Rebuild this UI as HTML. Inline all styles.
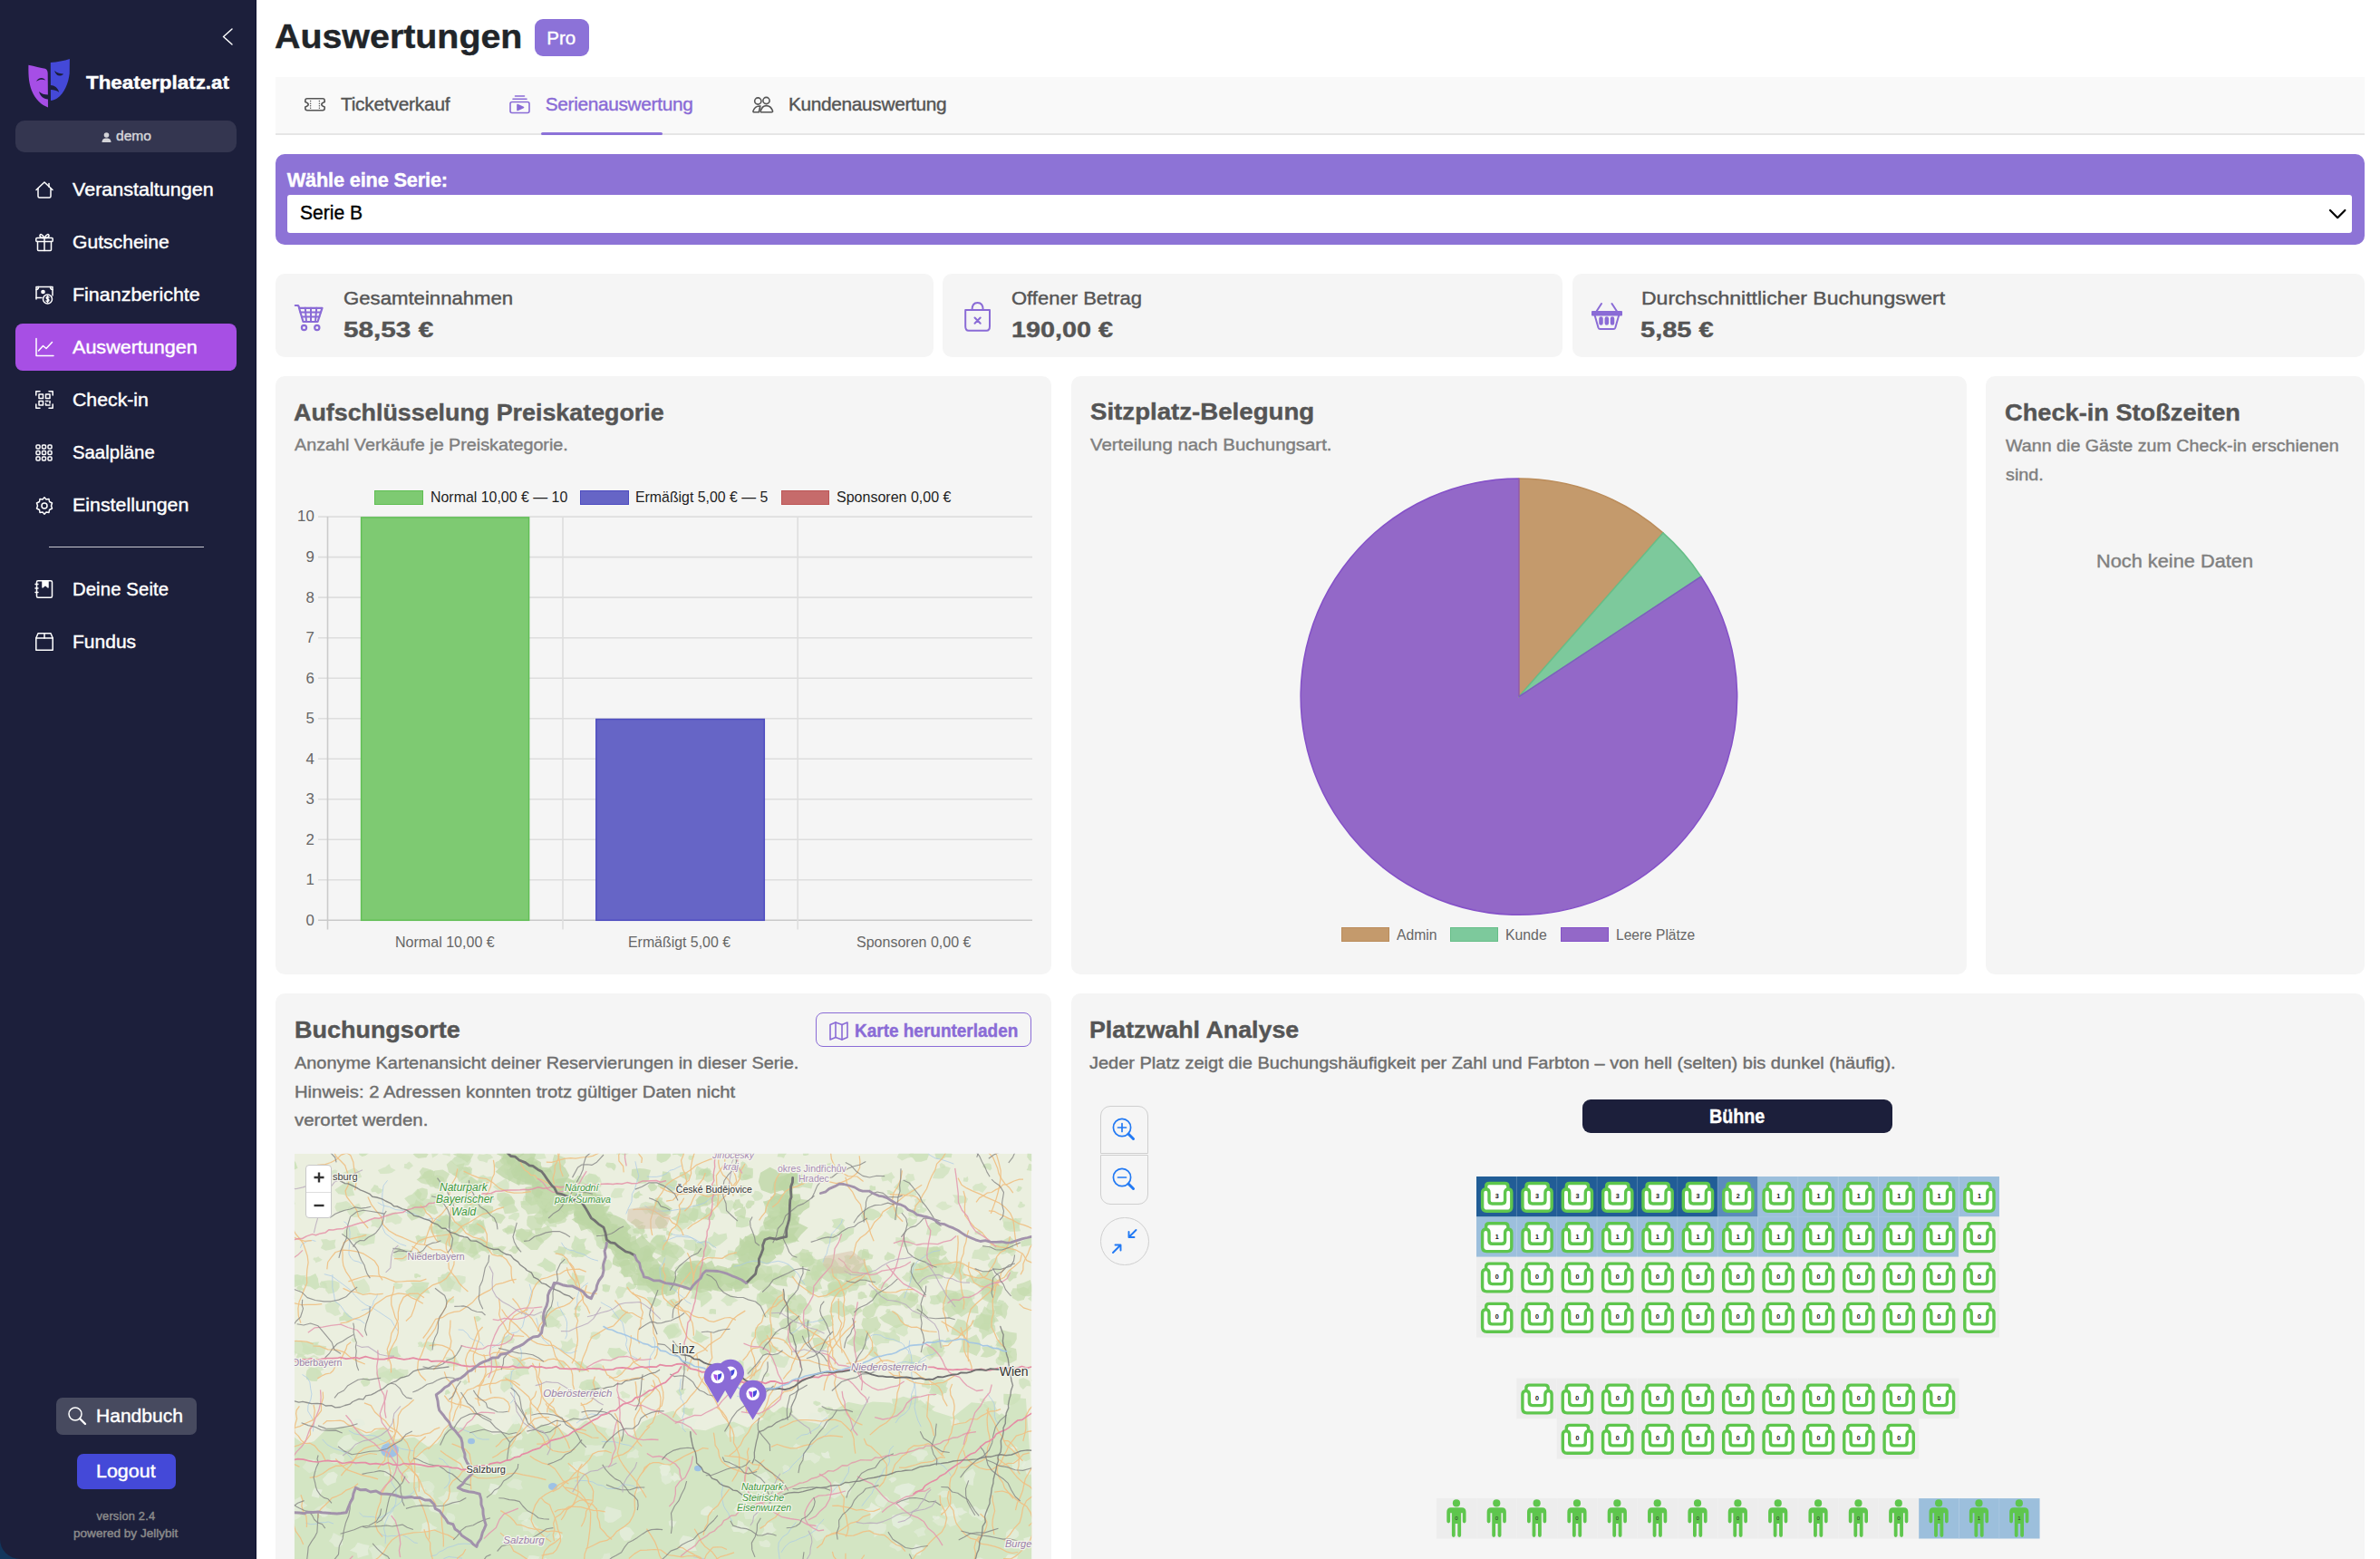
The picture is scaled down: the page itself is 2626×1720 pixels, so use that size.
<!DOCTYPE html>
<html lang="de"><head><meta charset="utf-8"><title>Auswertungen</title>
<style>
html,body{margin:0;padding:0}
body{width:2626px;height:1720px;position:relative;overflow:hidden;background:#fff;font-family:"Liberation Sans",sans-serif}
.t{position:absolute;white-space:pre}
</style></head><body>
<div style='position:absolute;left:0;top:1690px;width:40px;height:30px;background:#12365c'></div>
<div style='position:absolute;left:0;top:0;width:283px;height:1720px;background:#1c1f3b;border-bottom-left-radius:22px'></div>
<div style='position:absolute;left:282px;top:0;width:1.2px;height:1720px;background:#0e1130'></div>
<svg style='position:absolute;left:0px;top:0px;overflow:visible' width='283' height='100' viewBox='0 0 283 100' fill='none' stroke='#fff' stroke-width='1.4' stroke-linecap='round' stroke-linejoin='round' ><path d='M256 32 L246.5 40.5 L256 49'/></svg>
<svg style='position:absolute;left:26px;top:60px' width='60' height='65' viewBox='26 60 60 65'>
<path fill='#a64ee6' d='M31.4 71.7 C38 73 45 75 49.8 75.8 C51.8 76.6 52.7 78.5 52.7 81 L53 118.4 C46 116 39 110 35 100 C32 92 31.2 85 31.4 71.7 Z'/>
<path fill='#4449d8' d='M55.8 69 C63 68.5 71 67 76.9 65 L76.7 81 C75.5 92 71 103 63 108.5 C60.5 110 58 110.8 56 110.9 Z'/>
<path fill='#1c1f3b' d='M40 89.8 C42 85.5 48 84.5 50.2 88.6 C47.5 87.2 43.5 87.2 40 89.8 Z'/>
<path fill='#1c1f3b' d='M43.1 101.1 C45.5 103.5 49 104.6 53 104.6 L53 109.6 C48 109.2 44 106 43.1 101.1 Z'/>
<path fill='#1c1f3b' d='M60.2 77.9 C63 80.5 67 81.3 70 81.4 C68 84.5 62 85 60.2 77.9 Z'/>
<path fill='#1c1f3b' d='M55.8 94 C60 94 64 97 65.2 101.8 C62.5 99.8 59 98.8 55.8 99 Z'/>
</svg>
<div class=t style='left:95.2px;top:80.9px;font-size:20.14px;line-height:20.14px;font-weight:700;color:#fff;letter-spacing:0.00px;font-family:"Liberation Sans", sans-serif;-webkit-text-stroke:0.4px currentColor;transform:scaleX(1.1124);transform-origin:0 0;'>Theaterplatz.at</div>
<div style='position:absolute;left:17px;top:133px;width:244px;height:35px;border-radius:10px;background:#343650'></div>
<svg style='position:absolute;left:112px;top:146px' width='11' height='11' viewBox='0 0 11 11'><circle cx='5.5' cy='3' r='2.8' fill='#d4d4d8'/><path d='M0.5 11 C0.5 7.5 2.5 6.4 5.5 6.4 C8.5 6.4 10.5 7.5 10.5 11 Z' fill='#d4d4d8'/></svg>
<div class=t style='left:128.4px;top:142.9px;font-size:14.84px;line-height:14.84px;font-weight:400;color:#d6d6da;letter-spacing:0.00px;font-family:"Liberation Sans", sans-serif;-webkit-text-stroke:0.4px currentColor;transform:scaleX(1.0514);transform-origin:0 0;'>demo</div>
<div style='position:absolute;left:17px;top:357px;width:244px;height:52px;border-radius:8px;background:#a74fe4'></div>
<div class=t style='left:79.9px;top:198.9px;font-size:20.34px;line-height:20.34px;font-weight:400;color:#fff;letter-spacing:0.00px;font-family:"Liberation Sans", sans-serif;-webkit-text-stroke:0.4px currentColor;transform:scaleX(1.0596);transform-origin:0 0;'>Veranstaltungen</div>
<div class=t style='left:79.9px;top:257.0px;font-size:20.34px;line-height:20.34px;font-weight:400;color:#fff;letter-spacing:0.00px;font-family:"Liberation Sans", sans-serif;-webkit-text-stroke:0.4px currentColor;transform:scaleX(1.0385);transform-origin:0 0;'>Gutscheine</div>
<div class=t style='left:79.9px;top:315.0px;font-size:20.34px;line-height:20.34px;font-weight:400;color:#fff;letter-spacing:0.00px;font-family:"Liberation Sans", sans-serif;-webkit-text-stroke:0.4px currentColor;transform:scaleX(1.0552);transform-origin:0 0;'>Finanzberichte</div>
<div class=t style='left:79.9px;top:373.1px;font-size:20.34px;line-height:20.34px;font-weight:400;color:#fff;letter-spacing:0.00px;font-family:"Liberation Sans", sans-serif;-webkit-text-stroke:0.4px currentColor;transform:scaleX(1.0603);transform-origin:0 0;'>Auswertungen</div>
<div class=t style='left:79.9px;top:431.1px;font-size:20.34px;line-height:20.34px;font-weight:400;color:#fff;letter-spacing:0.00px;font-family:"Liberation Sans", sans-serif;-webkit-text-stroke:0.4px currentColor;transform:scaleX(1.0459);transform-origin:0 0;'>Check-in</div>
<div class=t style='left:79.9px;top:489.2px;font-size:20.34px;line-height:20.34px;font-weight:400;color:#fff;letter-spacing:0.06px;font-family:"Liberation Sans", sans-serif;-webkit-text-stroke:0.4px currentColor;'>Saalpl&auml;ne</div>
<div class=t style='left:79.9px;top:547.2px;font-size:20.34px;line-height:20.34px;font-weight:400;color:#fff;letter-spacing:0.00px;font-family:"Liberation Sans", sans-serif;-webkit-text-stroke:0.4px currentColor;transform:scaleX(1.0519);transform-origin:0 0;'>Einstellungen</div>
<div class=t style='left:79.9px;top:639.9px;font-size:20.34px;line-height:20.34px;font-weight:400;color:#fff;letter-spacing:0.11px;font-family:"Liberation Sans", sans-serif;-webkit-text-stroke:0.4px currentColor;'>Deine Seite</div>
<div class=t style='left:79.9px;top:698.2px;font-size:20.34px;line-height:20.34px;font-weight:400;color:#fff;letter-spacing:0.00px;font-family:"Liberation Sans", sans-serif;-webkit-text-stroke:0.4px currentColor;transform:scaleX(1.0337);transform-origin:0 0;'>Fundus</div>
<div style='position:absolute;left:54px;top:602.5px;width:171px;height:1.5px;background:#c8c8d0'></div>
<svg style='position:absolute;left:39px;top:200px;overflow:visible' width='20' height='20' viewBox='0 0 20 20' fill='none' stroke='#fff' stroke-width='1.5' stroke-linecap='round' stroke-linejoin='round' ><path d='M1 9.5 L10 1 L19 9.5'/><path d='M3 8 V16.5 Q3 18 4.5 18 H15.5 Q17 18 17 16.5 V8'/><path d='M15 2.5 V6'/></svg>
<svg style='position:absolute;left:39px;top:257px;overflow:visible' width='20' height='20' viewBox='0 0 20 20' fill='none' stroke='#fff' stroke-width='1.5' stroke-linecap='round' stroke-linejoin='round' ><rect x='0.8' y='5.5' width='18.4' height='4' rx='1'/><path d='M2.5 9.5 V18.5 Q2.5 19.5 3.5 19.5 H16.5 Q17.5 19.5 17.5 18.5 V9.5'/><path d='M10 5.5 V19.5'/><path d='M10 5.5 C8 1 4.5 0.5 5 3.5 C5.3 5 8 5.5 10 5.5 C12 5.5 14.7 5 15 3.5 C15.5 0.5 12 1 10 5.5'/></svg>
<svg style='position:absolute;left:39px;top:315px;overflow:visible' width='20' height='20' viewBox='0 0 20 20' fill='none' stroke='#fff' stroke-width='1.5' stroke-linecap='round' stroke-linejoin='round' ><path d='M1 15 V1.5 H19 V11'/><path d='M1 13.5 H7'/><circle cx='13.5' cy='15' r='5'/><path d='M15 13 Q13.5 12 12.3 13 Q11.8 14.3 13.5 14.8 Q15.3 15.3 14.8 16.8 Q13.5 18 12 17'/><path d='M13.5 11.5 V18.5'/><circle cx='8.5' cy='7' r='1.6' fill='#fff'/><path d='M1 4.5 Q3.5 4.5 3.5 1.5 M16.5 1.5 Q16.5 4.5 19 4.5'/></svg>
<svg style='position:absolute;left:39px;top:373px;overflow:visible' width='20' height='20' viewBox='0 0 20 20' fill='none' stroke='#fff' stroke-width='1.5' stroke-linecap='round' stroke-linejoin='round' ><path d='M1 0.5 V19.5 H20'/><path d='M3.5 14 L8.5 8.5 L12 11.5 L18.5 4.5'/></svg>
<svg style='position:absolute;left:39px;top:431px;overflow:visible' width='20' height='20' viewBox='0 0 20 20' fill='none' stroke='#fff' stroke-width='1.5' stroke-linecap='round' stroke-linejoin='round' ><path d='M0.8 5 V0.8 H5 M15 0.8 H19.2 V5 M19.2 15 V19.2 H15 M5 19.2 H0.8 V15'/><rect x='4' y='4' width='4.5' height='4.5'/><rect x='11.5' y='4' width='4.5' height='4.5'/><rect x='4' y='11.5' width='4.5' height='4.5'/><path d='M11.5 11.5 H14 M16 11.5 V14 M11.5 14 V16 H13.5 M14.5 16 H16'/></svg>
<svg style='position:absolute;left:39px;top:490px;overflow:visible' width='20' height='20' viewBox='0 0 20 20' fill='none' stroke='#fff' stroke-width='1.5' stroke-linecap='round' stroke-linejoin='round' ><rect x='1.0' y='1.0' width='4' height='4' rx='1'/><rect x='7.5' y='1.0' width='4' height='4' rx='1'/><rect x='14.0' y='1.0' width='4' height='4' rx='1'/><rect x='1.0' y='7.5' width='4' height='4' rx='1'/><rect x='7.5' y='7.5' width='4' height='4' rx='1'/><rect x='14.0' y='7.5' width='4' height='4' rx='1'/><rect x='1.0' y='14.0' width='4' height='4' rx='1'/><rect x='7.5' y='14.0' width='4' height='4' rx='1'/><rect x='14.0' y='14.0' width='4' height='4' rx='1'/></svg>
<svg style='position:absolute;left:39px;top:547.5px;overflow:visible' width='20' height='20' viewBox='0 0 20 20' fill='none' stroke='#fff' stroke-width='1.5' stroke-linecap='round' stroke-linejoin='round' ><circle cx='10' cy='10' r='3'/><path d='M10 0.8 L12 3 L15 2.5 L15.5 5.5 L18.5 7 L17.5 10 L18.5 13 L15.5 14.5 L15 17.5 L12 17 L10 19.2 L8 17 L5 17.5 L4.5 14.5 L1.5 13 L2.5 10 L1.5 7 L4.5 5.5 L5 2.5 L8 3 Z'/></svg>
<svg style='position:absolute;left:39px;top:640px;overflow:visible' width='20' height='20' viewBox='0 0 20 20' fill='none' stroke='#fff' stroke-width='1.5' stroke-linecap='round' stroke-linejoin='round' ><rect x='1.5' y='0.8' width='17' height='18.5' rx='1.5'/><path d='M8 0.8 V8 L11 5.5 L14 8 V0.8' fill='#fff'/><path d='M0 4.5 H3 M0 9 H3 M0 13.5 H3'/></svg>
<svg style='position:absolute;left:39px;top:698px;overflow:visible' width='20' height='20' viewBox='0 0 20 20' fill='none' stroke='#fff' stroke-width='1.5' stroke-linecap='round' stroke-linejoin='round' ><path d='M0.8 6 L3 0.8 H17 L19.2 6 V19.2 H0.8 Z'/><path d='M0.8 6 H19.2'/><path d='M10 0.8 V6'/></svg>
<div style='position:absolute;left:62px;top:1542px;width:155px;height:41px;border-radius:7px;background:#474a5f'></div>
<svg style='position:absolute;left:75px;top:1552px;overflow:visible' width='20' height='20' viewBox='0 0 20 20' fill='none' stroke='#fff' stroke-width='1.5' stroke-linecap='round' stroke-linejoin='round' ><circle cx='8' cy='8' r='7'/><path d='M13 13 L19 19' stroke-width='2.4'/></svg>
<div class=t style='left:106.0px;top:1551.9px;font-size:20.24px;line-height:20.24px;font-weight:400;color:#fff;letter-spacing:0.00px;font-family:"Liberation Sans", sans-serif;-webkit-text-stroke:0.4px currentColor;transform:scaleX(1.0405);transform-origin:0 0;'>Handbuch</div>
<div style='position:absolute;left:85px;top:1604px;width:109px;height:39px;border-radius:7px;background:#4449d8'></div>
<div class=t style='left:106.0px;top:1612.6px;font-size:20.24px;line-height:20.24px;font-weight:400;color:#fff;letter-spacing:0.00px;font-family:"Liberation Sans", sans-serif;-webkit-text-stroke:0.4px currentColor;transform:scaleX(1.0599);transform-origin:0 0;'>Logout</div>
<div class=t style='left:106.5px;top:1667.1px;font-size:12.84px;line-height:12.84px;font-weight:400;color:#8c8c8c;letter-spacing:0.18px;font-family:"Liberation Sans", sans-serif;-webkit-text-stroke:0.4px currentColor;'>version 2.4</div>
<div class=t style='left:81.1px;top:1685.9px;font-size:12.84px;line-height:12.84px;font-weight:400;color:#8c8c8c;letter-spacing:0.00px;font-family:"Liberation Sans", sans-serif;-webkit-text-stroke:0.4px currentColor;transform:scaleX(1.0577);transform-origin:0 0;'>powered by Jellybit</div>
<div class=t style='left:302.7px;top:22.9px;font-size:36.64px;line-height:36.64px;font-weight:700;color:#212529;letter-spacing:0.00px;font-family:"Liberation Sans", sans-serif;-webkit-text-stroke:0.4px currentColor;transform:scaleX(1.0749);transform-origin:0 0;'>Auswertungen</div>
<div style='position:absolute;left:590px;top:21px;width:60px;height:41px;border-radius:9px;background:#8c72d8'></div>
<div class=t style='left:603.2px;top:31.5px;font-size:20.54px;line-height:20.54px;font-weight:400;color:#fff;letter-spacing:0.02px;font-family:"Liberation Sans", sans-serif;-webkit-text-stroke:0.4px currentColor;'>Pro</div>
<div style='position:absolute;left:303.5px;top:84.5px;width:2305.5px;height:62px;background:#f9f9f9;border-bottom:2px solid #e6e6e6'></div>
<div style='position:absolute;left:597px;top:145.5px;width:134px;height:3.5px;border-radius:2px;background:#8c72d8'></div>
<svg style='position:absolute;left:336px;top:108.1px;overflow:visible' width='23' height='14.6' viewBox='0 0 23 14.6' fill='none' stroke='#555' stroke-width='1.6' stroke-linecap='round' stroke-linejoin='round' ><path d='M3 0.8 H20 Q22.2 0.8 22.2 3 V4.6 Q18.8 5.6 18.8 7.3 Q18.8 9 22.2 10 V11.6 Q22.2 13.8 20 13.8 H3 Q0.8 13.8 0.8 11.6 V10 Q4.2 9 4.2 7.3 Q4.2 5.6 0.8 4.6 V3 Q0.8 0.8 3 0.8 Z'/><circle cx='6.6' cy='3.6' r='0.75' fill='#555' stroke='none'/><circle cx='6.6' cy='6.2' r='0.75' fill='#555' stroke='none'/><circle cx='6.6' cy='8.8' r='0.75' fill='#555' stroke='none'/><circle cx='6.6' cy='11.2' r='0.75' fill='#555' stroke='none'/><circle cx='16.4' cy='3.6' r='0.75' fill='#555' stroke='none'/><circle cx='16.4' cy='6.2' r='0.75' fill='#555' stroke='none'/><circle cx='16.4' cy='8.8' r='0.75' fill='#555' stroke='none'/><circle cx='16.4' cy='11.2' r='0.75' fill='#555' stroke='none'/></svg>
<div class=t style='left:375.9px;top:104.5px;font-size:20.84px;line-height:20.84px;font-weight:400;color:#555;letter-spacing:-0.20px;font-family:"Liberation Sans", sans-serif;-webkit-text-stroke:0.4px currentColor;'>Ticketverkauf</div>
<svg style='position:absolute;left:562px;top:104.5px;overflow:visible' width='23' height='20' viewBox='0 0 23 20' fill='none' stroke='#8a6bd6' stroke-width='1.6' stroke-linecap='round' stroke-linejoin='round' ><rect x='1' y='7.5' width='21' height='12' rx='2'/><path d='M4 4.3 H19 M6.5 1 H16.5'/><path d='M9 10.5 L15.5 13.5 L9 16.5 Z' fill='#8a6bd6'/></svg>
<div class=t style='left:601.8px;top:104.5px;font-size:20.84px;line-height:20.84px;font-weight:400;color:#8a6bd6;letter-spacing:-0.33px;font-family:"Liberation Sans", sans-serif;-webkit-text-stroke:0.4px currentColor;'>Serienauswertung</div>
<svg style='position:absolute;left:830px;top:107px;overflow:visible' width='23' height='17' viewBox='0 0 23 17' fill='none' stroke='#555' stroke-width='1.6' stroke-linecap='round' stroke-linejoin='round' ><circle cx='6.3' cy='4.5' r='3.6'/><circle cx='15.5' cy='4' r='3.6'/><path d='M9 10 Q3 9.5 1 15.5 Q0.8 16.8 2 16.8 H7.3 L8.8 10.2'/><path d='M10 16.8 Q9 16.8 9.3 15.3 Q11 9.6 15.5 9.6 Q20.5 9.6 22.5 15.3 Q22.8 16.8 21.5 16.8 Z'/></svg>
<div class=t style='left:870.0px;top:104.5px;font-size:20.84px;line-height:20.84px;font-weight:400;color:#555;letter-spacing:-0.33px;font-family:"Liberation Sans", sans-serif;-webkit-text-stroke:0.4px currentColor;'>Kundenauswertung</div>
<div style='position:absolute;left:303.5px;top:170px;width:2305.5px;height:99.5px;border-radius:10px;background:#8d73d6'></div>
<div class=t style='left:316.7px;top:187.7px;font-size:21.74px;line-height:21.74px;font-weight:700;color:#fff;letter-spacing:-0.16px;font-family:"Liberation Sans", sans-serif;-webkit-text-stroke:0.4px currentColor;'>W&auml;hle eine Serie:</div>
<div style='position:absolute;left:317px;top:215px;width:2278px;height:42px;border-radius:3px;background:#fff'></div>
<div class=t style='left:331.1px;top:224.4px;font-size:22.14px;line-height:22.14px;font-weight:400;color:#000;letter-spacing:0.00px;font-family:"Liberation Sans", sans-serif;-webkit-text-stroke:0.4px currentColor;transform:scaleX(0.9509);transform-origin:0 0;'>Serie B</div>
<svg style='position:absolute;left:2570px;top:231px;overflow:visible' width='18' height='10' viewBox='0 0 18 10' fill='none' stroke='#000' stroke-width='2.2' stroke-linecap='round' stroke-linejoin='round' ><path d='M1 1 L9.2 9.2 L17.4 1'/></svg>
<div style='position:absolute;left:304px;top:302px;width:725.5px;height:92px;border-radius:10px;background:#f5f5f5'></div>
<div style='position:absolute;left:1040px;top:302px;width:684px;height:92px;border-radius:10px;background:#f5f5f5'></div>
<div style='position:absolute;left:1734.5px;top:302px;width:874.5px;height:92px;border-radius:10px;background:#f5f5f5'></div>
<svg style='position:absolute;left:325px;top:336px;overflow:visible' width='31.5' height='29' viewBox='0 0 31.5 29' fill='none' stroke='#8a6bd6' stroke-width='2.2' stroke-linecap='round' stroke-linejoin='round' ><path d='M0.8 1 H4 L5 3 M5 3.8 H30.5 L25.5 19 H9.5 Z'/><path d='M6.5 8.5 H29 M8 13.5 H27.3 M11.8 3.8 L13 19 M18 3.8 V19 M24.2 3.8 L23 19' stroke-width='2'/><circle cx='10.5' cy='25.5' r='2.6'/><circle cx='24.8' cy='25.5' r='2.6'/></svg>
<div class=t style='left:379.2px;top:318.5px;font-size:20.54px;line-height:20.54px;font-weight:400;color:#555;letter-spacing:0.00px;font-family:"Liberation Sans", sans-serif;-webkit-text-stroke:0.4px currentColor;transform:scaleX(1.0791);transform-origin:0 0;'>Gesamteinnahmen</div>
<div class=t style='left:379.0px;top:352.0px;font-size:24.24px;line-height:24.24px;font-weight:700;color:#555;letter-spacing:0.00px;font-family:"Liberation Sans", sans-serif;-webkit-text-stroke:0.4px currentColor;transform:scaleX(1.2268);transform-origin:0 0;'>58,53 &euro;</div>
<svg style='position:absolute;left:1064px;top:332.5px;overflow:visible' width='29' height='32.5' viewBox='0 0 29 32.5' fill='none' stroke='#8a6bd6' stroke-width='2' stroke-linecap='round' stroke-linejoin='round' ><path d='M1.2 9 H28 V27 Q28 31.8 24.5 31.8 H4.7 Q1.2 31.8 1.2 27 Z'/><path d='M8.5 9 Q8.5 1 14.6 1 Q20.7 1 20.7 9'/><path d='M11.5 17.5 L17.7 23.7 M17.7 17.5 L11.5 23.7'/></svg>
<div class=t style='left:1116.2px;top:318.6px;font-size:20.54px;line-height:20.54px;font-weight:400;color:#555;letter-spacing:0.00px;font-family:"Liberation Sans", sans-serif;-webkit-text-stroke:0.4px currentColor;transform:scaleX(1.0723);transform-origin:0 0;'>Offener Betrag</div>
<div class=t style='left:1116.0px;top:352.4px;font-size:24.24px;line-height:24.24px;font-weight:700;color:#555;letter-spacing:0.00px;font-family:"Liberation Sans", sans-serif;-webkit-text-stroke:0.4px currentColor;transform:scaleX(1.1871);transform-origin:0 0;'>190,00 &euro;</div>
<svg style='position:absolute;left:1756px;top:334px;overflow:visible' width='33.5' height='29.5' viewBox='0 0 33.5 29.5' fill='none' stroke='#8a6bd6' stroke-width='2' stroke-linecap='round' stroke-linejoin='round' ><path d='M11 1 L4.5 11 M22.5 1 L29 11'/><path d='M1 10 H33 V13.5 H1 Z' fill='#8a6bd6'/><path d='M3.5 13.5 L7.5 27.5 Q8 29 9.5 29 H24.3 Q25.8 29 26.3 27.5 L30.3 13.5'/><path d='M10.5 17.5 V22.5 M16.8 17.5 V22.5 M23 17.5 V22.5' stroke-width='4.5'/></svg>
<div class=t style='left:1810.6px;top:318.6px;font-size:20.54px;line-height:20.54px;font-weight:400;color:#555;letter-spacing:0.00px;font-family:"Liberation Sans", sans-serif;-webkit-text-stroke:0.4px currentColor;transform:scaleX(1.1211);transform-origin:0 0;'>Durchschnittlicher Buchungswert</div>
<div class=t style='left:1810.4px;top:352.4px;font-size:24.24px;line-height:24.24px;font-weight:700;color:#555;letter-spacing:0.00px;font-family:"Liberation Sans", sans-serif;-webkit-text-stroke:0.4px currentColor;transform:scaleX(1.1975);transform-origin:0 0;'>5,85 &euro;</div>
<div style='position:absolute;left:304px;top:415px;width:856px;height:660px;border-radius:10px;background:#f5f5f5'></div>
<div style='position:absolute;left:1182px;top:415px;width:988px;height:660px;border-radius:10px;background:#f5f5f5'></div>
<div style='position:absolute;left:2191px;top:415px;width:418px;height:660px;border-radius:10px;background:#f5f5f5'></div>
<div class=t style='left:324.4px;top:442.5px;font-size:25.14px;line-height:25.14px;font-weight:700;color:#555;letter-spacing:0.00px;font-family:"Liberation Sans", sans-serif;-webkit-text-stroke:0.4px currentColor;transform:scaleX(1.0682);transform-origin:0 0;'>Aufschl&uuml;sselung Preiskategorie</div>
<div class=t style='left:324.7px;top:482.4px;font-size:18.14px;line-height:18.14px;font-weight:400;color:#7f7f7f;letter-spacing:0.00px;font-family:"Liberation Sans", sans-serif;-webkit-text-stroke:0.4px currentColor;transform:scaleX(1.0892);transform-origin:0 0;'>Anzahl Verk&auml;ufe je Preiskategorie.</div>
<div style='position:absolute;left:412.9px;top:541px;width:51.7px;height:13.7px;background:#7eca72;border:1.5px solid #5fbe52'></div>
<div class=t style='left:474.9px;top:540.9px;font-size:16.8px;line-height:16.8px;font-weight:400;color:#1e1e1e;letter-spacing:0.00px;font-family:"Liberation Sans", sans-serif;-webkit-text-stroke:0px currentColor;transform:scaleX(0.9485);transform-origin:0 0;'>Normal 10,00 &euro; &mdash; 10</div>
<div style='position:absolute;left:640px;top:541px;width:51.7px;height:13.7px;background:#6665c6;border:1.5px solid #4c4bc0'></div>
<div class=t style='left:701.3px;top:540.9px;font-size:16.8px;line-height:16.8px;font-weight:400;color:#1e1e1e;letter-spacing:0.00px;font-family:"Liberation Sans", sans-serif;-webkit-text-stroke:0px currentColor;transform:scaleX(0.9449);transform-origin:0 0;'>Erm&auml;&szlig;igt 5,00 &euro; &mdash; 5</div>
<div style='position:absolute;left:861.8px;top:541px;width:51.7px;height:13.7px;background:#c66b6b;border:1.5px solid #bd5555'></div>
<div class=t style='left:923.3px;top:540.9px;font-size:16.8px;line-height:16.8px;font-weight:400;color:#1e1e1e;letter-spacing:0.00px;font-family:"Liberation Sans", sans-serif;-webkit-text-stroke:0px currentColor;transform:scaleX(0.9547);transform-origin:0 0;'>Sponsoren 0,00 &euro;</div>
<svg style='position:absolute;left:0;top:0' width='1200' height='1100' viewBox='0 0 1200 1100'><line x1='351' y1='1015.3' x2='1139' y2='1015.3' stroke='#c9c9c9' stroke-width='1.6'/><line x1='351' y1='970.8' x2='1139' y2='970.8' stroke='#dedede' stroke-width='1.6'/><line x1='351' y1='926.3' x2='1139' y2='926.3' stroke='#dedede' stroke-width='1.6'/><line x1='351' y1='881.7' x2='1139' y2='881.7' stroke='#dedede' stroke-width='1.6'/><line x1='351' y1='837.2' x2='1139' y2='837.2' stroke='#dedede' stroke-width='1.6'/><line x1='351' y1='792.7' x2='1139' y2='792.7' stroke='#dedede' stroke-width='1.6'/><line x1='351' y1='748.2' x2='1139' y2='748.2' stroke='#dedede' stroke-width='1.6'/><line x1='351' y1='703.7' x2='1139' y2='703.7' stroke='#dedede' stroke-width='1.6'/><line x1='351' y1='659.1' x2='1139' y2='659.1' stroke='#dedede' stroke-width='1.6'/><line x1='351' y1='614.6' x2='1139' y2='614.6' stroke='#dedede' stroke-width='1.6'/><line x1='351' y1='570.1' x2='1139' y2='570.1' stroke='#dedede' stroke-width='1.6'/><line x1='361.5' y1='570' x2='361.5' y2='1025.6' stroke='#cacaca' stroke-width='1.6'/><line x1='621' y1='570' x2='621' y2='1025.6' stroke='#dedede' stroke-width='1.6'/><line x1='880.2' y1='570' x2='880.2' y2='1025.6' stroke='#dedede' stroke-width='1.6'/><rect x='398.6' y='570.9' width='185' height='444.4' fill='#7eca72' stroke='#62bf56' stroke-width='1.5'/><rect x='657.8' y='793.5' width='185.5' height='221.8' fill='#6665c6' stroke='#4e4dc0' stroke-width='1.5'/></svg>
<div class=t style='left:337.4px;top:1007.6px;font-size:16.8px;line-height:16.8px;font-weight:400;color:#666;letter-spacing:0.00px;font-family:"Liberation Sans", sans-serif;-webkit-text-stroke:0px currentColor;'>0</div>
<div class=t style='left:337.4px;top:963.1px;font-size:16.8px;line-height:16.8px;font-weight:400;color:#666;letter-spacing:0.00px;font-family:"Liberation Sans", sans-serif;-webkit-text-stroke:0px currentColor;'>1</div>
<div class=t style='left:337.4px;top:918.6px;font-size:16.8px;line-height:16.8px;font-weight:400;color:#666;letter-spacing:0.00px;font-family:"Liberation Sans", sans-serif;-webkit-text-stroke:0px currentColor;'>2</div>
<div class=t style='left:337.4px;top:874.1px;font-size:16.8px;line-height:16.8px;font-weight:400;color:#666;letter-spacing:0.00px;font-family:"Liberation Sans", sans-serif;-webkit-text-stroke:0px currentColor;'>3</div>
<div class=t style='left:337.4px;top:829.5px;font-size:16.8px;line-height:16.8px;font-weight:400;color:#666;letter-spacing:0.00px;font-family:"Liberation Sans", sans-serif;-webkit-text-stroke:0px currentColor;'>4</div>
<div class=t style='left:337.4px;top:785.0px;font-size:16.8px;line-height:16.8px;font-weight:400;color:#666;letter-spacing:0.00px;font-family:"Liberation Sans", sans-serif;-webkit-text-stroke:0px currentColor;'>5</div>
<div class=t style='left:337.4px;top:740.5px;font-size:16.8px;line-height:16.8px;font-weight:400;color:#666;letter-spacing:0.00px;font-family:"Liberation Sans", sans-serif;-webkit-text-stroke:0px currentColor;'>6</div>
<div class=t style='left:337.4px;top:696.0px;font-size:16.8px;line-height:16.8px;font-weight:400;color:#666;letter-spacing:0.00px;font-family:"Liberation Sans", sans-serif;-webkit-text-stroke:0px currentColor;'>7</div>
<div class=t style='left:337.4px;top:651.5px;font-size:16.8px;line-height:16.8px;font-weight:400;color:#666;letter-spacing:0.00px;font-family:"Liberation Sans", sans-serif;-webkit-text-stroke:0px currentColor;'>8</div>
<div class=t style='left:337.4px;top:606.9px;font-size:16.8px;line-height:16.8px;font-weight:400;color:#666;letter-spacing:0.00px;font-family:"Liberation Sans", sans-serif;-webkit-text-stroke:0px currentColor;'>9</div>
<div class=t style='left:328.1px;top:562.4px;font-size:16.8px;line-height:16.8px;font-weight:400;color:#666;letter-spacing:0.00px;font-family:"Liberation Sans", sans-serif;-webkit-text-stroke:0px currentColor;'>10</div>
<div class=t style='left:435.6px;top:1031.6px;font-size:16.8px;line-height:16.8px;font-weight:400;color:#666;letter-spacing:0.00px;font-family:"Liberation Sans", sans-serif;-webkit-text-stroke:0px currentColor;transform:scaleX(0.9561);transform-origin:0 0;'>Normal 10,00 &euro;</div>
<div class=t style='left:693.3px;top:1031.6px;font-size:16.8px;line-height:16.8px;font-weight:400;color:#666;letter-spacing:0.00px;font-family:"Liberation Sans", sans-serif;-webkit-text-stroke:0px currentColor;transform:scaleX(0.9465);transform-origin:0 0;'>Erm&auml;&szlig;igt 5,00 &euro;</div>
<div class=t style='left:945.3px;top:1031.6px;font-size:16.8px;line-height:16.8px;font-weight:400;color:#666;letter-spacing:0.00px;font-family:"Liberation Sans", sans-serif;-webkit-text-stroke:0px currentColor;transform:scaleX(0.9540);transform-origin:0 0;'>Sponsoren 0,00 &euro;</div>
<div class=t style='left:1202.5px;top:442.4px;font-size:25.14px;line-height:25.14px;font-weight:700;color:#555;letter-spacing:0.00px;font-family:"Liberation Sans", sans-serif;-webkit-text-stroke:0.4px currentColor;transform:scaleX(1.1000);transform-origin:0 0;'>Sitzplatz-Belegung</div>
<div class=t style='left:1202.8px;top:482.4px;font-size:18.14px;line-height:18.14px;font-weight:400;color:#7f7f7f;letter-spacing:0.00px;font-family:"Liberation Sans", sans-serif;-webkit-text-stroke:0.4px currentColor;transform:scaleX(1.1254);transform-origin:0 0;'>Verteilung nach Buchungsart.</div>
<svg style='position:absolute;left:0;top:0' width='2626' height='1100' viewBox='0 0 2626 1100'><path d='M1675.9 768.6 L1876.85 636.10 A240.7 240.7 0 1 1 1675.90 527.90 Z' fill='#9368c8' stroke='#8450c8' stroke-width='1.5' stroke-linejoin='round'/><path d='M1675.9 768.6 L1675.90 527.90 A240.7 240.7 0 0 1 1834.92 587.91 Z' fill='#c49a6c' stroke='#bb8c5a' stroke-width='1.5' stroke-linejoin='round'/><path d='M1675.9 768.6 L1834.92 587.91 A240.7 240.7 0 0 1 1876.85 636.10 Z' fill='#7dc99c' stroke='#66be88' stroke-width='1.5' stroke-linejoin='round'/><line x1='1675.9' y1='768.6' x2='1675.9' y2='527.9000000000001' stroke='#8450c8' stroke-width='1.3'/><line x1='1675.9' y1='768.6' x2='1876.85' y2='636.10' stroke='#8450c8' stroke-width='1.3'/></svg>
<div style='position:absolute;left:1479.6px;top:1022.7px;width:51px;height:14.5px;background:#c49a6c;border:1.5px solid #bb8c5a'></div>
<div class=t style='left:1541.3px;top:1023.5px;font-size:16.8px;line-height:16.8px;font-weight:400;color:#666;letter-spacing:0.00px;font-family:"Liberation Sans", sans-serif;-webkit-text-stroke:0px currentColor;transform:scaleX(0.9353);transform-origin:0 0;'>Admin</div>
<div style='position:absolute;left:1600px;top:1022.7px;width:51px;height:14.5px;background:#7dc99c;border:1.5px solid #66be88'></div>
<div class=t style='left:1661.3px;top:1023.5px;font-size:16.8px;line-height:16.8px;font-weight:400;color:#666;letter-spacing:0.00px;font-family:"Liberation Sans", sans-serif;-webkit-text-stroke:0px currentColor;transform:scaleX(0.9417);transform-origin:0 0;'>Kunde</div>
<div style='position:absolute;left:1721.6px;top:1022.7px;width:51px;height:14.5px;background:#9368c8;border:1.5px solid #8450c8'></div>
<div class=t style='left:1783.3px;top:1023.5px;font-size:16.8px;line-height:16.8px;font-weight:400;color:#666;letter-spacing:0.00px;font-family:"Liberation Sans", sans-serif;-webkit-text-stroke:0px currentColor;transform:scaleX(0.9254);transform-origin:0 0;'>Leere Pl&auml;tze</div>
<div class=t style='left:2212.4px;top:442.9px;font-size:25.14px;line-height:25.14px;font-weight:700;color:#555;letter-spacing:0.00px;font-family:"Liberation Sans", sans-serif;-webkit-text-stroke:0.4px currentColor;transform:scaleX(1.0824);transform-origin:0 0;'>Check-in Sto&szlig;zeiten</div>
<div class=t style='left:2212.7px;top:482.7px;font-size:18.14px;line-height:18.14px;font-weight:400;color:#7f7f7f;letter-spacing:0.00px;font-family:"Liberation Sans", sans-serif;-webkit-text-stroke:0.4px currentColor;transform:scaleX(1.0849);transform-origin:0 0;'>Wann die G&auml;ste zum Check-in erschienen</div>
<div class=t style='left:2212.7px;top:514.6px;font-size:18.14px;line-height:18.14px;font-weight:400;color:#7f7f7f;letter-spacing:0.00px;font-family:"Liberation Sans", sans-serif;-webkit-text-stroke:0.4px currentColor;transform:scaleX(1.0915);transform-origin:0 0;'>sind.</div>
<div class=t style='left:2312.6px;top:607.9px;font-size:21.14px;line-height:21.14px;font-weight:400;color:#808080;letter-spacing:0.00px;font-family:"Liberation Sans", sans-serif;-webkit-text-stroke:0.4px currentColor;transform:scaleX(1.0301);transform-origin:0 0;'>Noch keine Daten</div>
<div style='position:absolute;left:304px;top:1096px;width:856px;height:664px;border-radius:10px;background:#f5f5f5'></div>
<div style='position:absolute;left:1182px;top:1096px;width:1427px;height:664px;border-radius:10px;background:#f5f5f5'></div>
<div class=t style='left:324.6px;top:1124.2px;font-size:25.14px;line-height:25.14px;font-weight:700;color:#555;letter-spacing:0.00px;font-family:"Liberation Sans", sans-serif;-webkit-text-stroke:0.4px currentColor;transform:scaleX(1.0734);transform-origin:0 0;'>Buchungsorte</div>
<div style='position:absolute;left:900.2px;top:1117.4px;width:236px;height:36px;border:1.5px solid #8a6bd6;border-radius:8px'></div>
<svg style='position:absolute;left:914.5px;top:1127.3px;overflow:visible' width='21' height='20.5' viewBox='0 0 21 20.5' fill='none' stroke='#8a6bd6' stroke-width='1.6' stroke-linecap='round' stroke-linejoin='round' ><path d='M1 3.5 L7 1 L14 3.5 L20 1 V17.5 L14 20 L7 17.5 L1 20 Z'/><path d='M7 1 V17.5 M14 3.5 V20'/></svg>
<div class=t style='left:943.2px;top:1127.1px;font-size:20.04px;line-height:20.04px;font-weight:700;color:#8a6bd6;letter-spacing:0.00px;font-family:"Liberation Sans", sans-serif;-webkit-text-stroke:0.4px currentColor;transform:scaleX(0.9472);transform-origin:0 0;'>Karte herunterladen</div>
<div class=t style='left:324.9px;top:1164.2px;font-size:18.14px;line-height:18.14px;font-weight:400;color:#6e6e6e;letter-spacing:0.00px;font-family:"Liberation Sans", sans-serif;-webkit-text-stroke:0.4px currentColor;transform:scaleX(1.0979);transform-origin:0 0;'>Anonyme Kartenansicht deiner Reservierungen in dieser Serie.</div>
<div class=t style='left:324.9px;top:1196.0px;font-size:18.14px;line-height:18.14px;font-weight:400;color:#6e6e6e;letter-spacing:0.00px;font-family:"Liberation Sans", sans-serif;-webkit-text-stroke:0.4px currentColor;transform:scaleX(1.1171);transform-origin:0 0;'>Hinweis: 2 Adressen konnten trotz g&uuml;ltiger Daten nicht</div>
<div class=t style='left:324.9px;top:1227.4px;font-size:18.14px;line-height:18.14px;font-weight:400;color:#6e6e6e;letter-spacing:0.00px;font-family:"Liberation Sans", sans-serif;-webkit-text-stroke:0.4px currentColor;transform:scaleX(1.1247);transform-origin:0 0;'>verortet werden.</div>
<svg style='position:absolute;left:0;top:0' width='2626' height='1720' viewBox='0 0 2626 1720'><defs><clipPath id='mc'><rect x='324.9' y='1272.8' width='813.3000000000001' height='447.20000000000005'/></clipPath></defs><g clip-path='url(#mc)'><rect x='324.9' y='1272.8' width='813.3000000000001' height='447.20000000000005' fill='#ebefdf'/><path d='M324 1720 L324.0 1585.1 L335.8 1593.7 L346.7 1589.9 L361.1 1575.8 L377.2 1574.5 L392.4 1574.6 L403.4 1584.0 L423.4 1574.6 L436.1 1588.1 L457.4 1585.7 L472.2 1596.1 L482.7 1592.3 L496.2 1571.6 L507.6 1575.7 L527.4 1571.1 L544.4 1583.1 L558.9 1579.9 L569.6 1565.7 L582.1 1582.5 L597.2 1571.5 L614.3 1574.5 L627.9 1583.4 L646.2 1567.1 L663.1 1574.2 L683.6 1578.9 L697.1 1585.2 L708.5 1569.0 L727.6 1560.6 L743.5 1556.6 L761.5 1576.1 L778.4 1578.3 L792.1 1572.6 L809.3 1568.6 L824.7 1575.1 L846.1 1563.8 L864.0 1551.4 L882.5 1566.9 L904.4 1570.7 L917.8 1557.8 L935.8 1546.8 L951.3 1550.1 L962.8 1546.5 L982.0 1547.5 L994.9 1554.2 L1015.4 1544.5 L1030.8 1556.9 L1051.4 1563.5 L1071.8 1547.3 L1086.7 1548.8 L1107.4 1564.6 L1119.2 1542.1 L1131.9 1543.1 L1145 1720 Z' fill='#d3e5c3'/><path d='M812.4 1385.6 L812.7 1389.6 L808.0 1391.0 L803.9 1390.3 L800.3 1388.8 L798.7 1385.6 L802.7 1383.7 L803.3 1379.2 L808.2 1379.7 L812.4 1381.7 Z' fill='#cde1bb' opacity='0.7292387505131539'/><path d='M982.1 1446.1 L981.7 1447.2 L980.6 1448.3 L978.9 1448.2 L977.1 1447.7 L977.4 1446.1 L978.0 1445.1 L978.9 1444.1 L980.5 1444.2 L982.5 1444.6 Z' fill='#cde1bb' opacity='0.8220013479899981'/><path d='M446.2 1380.7 L445.3 1384.5 L440.4 1384.9 L436.9 1385.0 L435.6 1382.4 L434.8 1380.7 L434.6 1378.3 L437.3 1377.1 L441.0 1375.0 L442.0 1378.7 Z' fill='#cde1bb' opacity='0.6429947807667682'/><path d='M446.3 1516.6 L443.7 1520.4 L438.8 1520.9 L435.1 1521.3 L433.0 1519.0 L428.4 1516.6 L431.2 1513.2 L434.4 1510.0 L438.9 1512.0 L441.4 1514.0 Z' fill='#cde1bb' opacity='0.9424754349516404'/><path d='M506.4 1504.6 L505.9 1505.8 L505.0 1507.5 L502.5 1508.0 L501.4 1506.1 L499.5 1504.6 L500.2 1502.5 L502.5 1501.3 L504.7 1502.5 L505.8 1503.5 Z' fill='#cde1bb' opacity='0.6097779763977226'/><path d='M513.9 1354.7 L510.1 1358.3 L506.6 1361.4 L500.9 1362.1 L499.8 1357.1 L495.1 1354.7 L495.5 1349.8 L501.0 1347.4 L506.8 1347.5 L510.1 1351.1 Z' fill='#cde1bb' opacity='0.9151079182594399'/><path d='M463.6 1322.2 L466.8 1328.1 L460.9 1332.8 L453.1 1330.7 L449.5 1326.2 L446.2 1322.2 L451.0 1318.9 L454.7 1317.7 L460.9 1311.6 L465.6 1316.9 Z' fill='#cde1bb' opacity='0.8822756937112686'/><path d='M1045.5 1648.8 L1046.0 1651.5 L1042.6 1652.0 L1039.8 1652.6 L1038.3 1650.5 L1034.1 1648.8 L1037.5 1646.6 L1039.7 1644.8 L1043.1 1644.4 L1047.1 1645.4 Z' fill='#e6eede' opacity='0.6171866610680876'/><path d='M761.8 1507.4 L764.5 1511.1 L759.5 1510.9 L756.1 1512.1 L751.9 1510.9 L751.4 1507.4 L753.7 1504.8 L756.1 1502.5 L760.1 1502.3 L764.5 1503.7 Z' fill='#cde1bb' opacity='0.6640877605452695'/><path d='M408.5 1524.6 L407.7 1527.1 L405.2 1529.3 L401.2 1529.8 L399.4 1526.9 L397.7 1524.6 L399.2 1522.2 L401.7 1520.6 L405.2 1520.1 L407.3 1522.3 Z' fill='#cde1bb' opacity='0.8702913845644209'/><path d='M1019.9 1326.9 L1018.2 1328.8 L1017.1 1332.4 L1012.4 1332.9 L1008.0 1330.9 L1010.3 1326.9 L1008.8 1323.3 L1012.6 1321.4 L1016.3 1323.5 L1021.7 1322.9 Z' fill='#cde1bb' opacity='0.6253911348797708'/><path d='M1013.7 1338.2 L1013.3 1341.0 L1011.1 1344.5 L1007.3 1341.4 L1002.7 1341.7 L1002.0 1338.2 L1005.2 1336.3 L1006.7 1333.7 L1010.9 1332.4 L1014.3 1334.9 Z' fill='#cde1bb' opacity='0.7186906505185869'/><path d='M1127.3 1311.8 L1126.4 1312.8 L1125.6 1314.1 L1123.3 1315.1 L1121.3 1313.7 L1122.0 1311.8 L1122.7 1310.7 L1123.2 1308.4 L1125.7 1309.1 L1127.7 1310.0 Z' fill='#cde1bb' opacity='0.8726491005237622'/><path d='M856.2 1637.3 L851.1 1641.7 L846.2 1643.7 L840.5 1645.0 L833.0 1643.5 L835.8 1637.3 L838.2 1634.2 L840.5 1629.8 L845.9 1631.6 L848.8 1634.3 Z' fill='#e6eede' opacity='0.5266490139497846'/><path d='M456.0 1286.3 L453.0 1288.4 L451.1 1290.4 L448.2 1289.3 L445.6 1288.5 L446.2 1286.3 L446.0 1284.3 L448.5 1283.9 L451.4 1281.4 L454.0 1283.7 Z' fill='#cde1bb' opacity='0.7067518892577294'/><path d='M847.0 1451.9 L848.2 1453.8 L845.7 1453.9 L844.1 1453.7 L843.1 1452.9 L840.5 1451.9 L841.3 1449.8 L843.7 1448.9 L845.7 1449.8 L847.0 1450.6 Z' fill='#cde1bb' opacity='0.645436503402809'/><path d='M568.0 1477.5 L566.4 1481.7 L561.2 1482.5 L557.6 1481.3 L551.9 1481.7 L553.7 1477.5 L554.5 1474.8 L558.0 1474.6 L560.9 1473.1 L564.2 1474.5 Z' fill='#cde1bb' opacity='0.6921350734490861'/><path d='M735.8 1356.7 L736.1 1358.0 L734.4 1358.1 L733.3 1358.1 L731.8 1357.9 L731.5 1356.7 L731.2 1355.2 L732.9 1354.4 L735.0 1353.9 L736.6 1355.1 Z' fill='#cde1bb' opacity='0.6924590400305799'/><path d='M592.0 1722.9 L595.7 1728.1 L590.3 1731.7 L583.7 1730.2 L578.2 1727.8 L575.7 1722.9 L581.8 1720.0 L583.9 1716.1 L589.4 1716.2 L595.7 1717.6 Z' fill='#e6eede' opacity='0.7572877798818118'/><path d='M513.9 1277.4 L511.4 1280.2 L508.5 1282.2 L504.5 1282.2 L501.1 1280.5 L500.8 1277.4 L503.8 1275.8 L504.3 1271.9 L508.7 1272.1 L511.2 1274.6 Z' fill='#cde1bb' opacity='0.6367207648740439'/><path d='M766.5 1570.8 L766.6 1574.2 L764.1 1578.8 L758.8 1575.9 L752.3 1575.8 L748.5 1570.8 L753.8 1566.7 L758.4 1564.8 L763.6 1564.2 L769.1 1566.0 Z' fill='#e6eede' opacity='0.600877412585076'/><path d='M388.7 1331.7 L383.6 1334.1 L381.2 1335.9 L377.3 1337.0 L371.4 1336.4 L369.3 1331.7 L371.4 1327.0 L377.2 1326.2 L382.2 1325.0 L386.3 1327.7 Z' fill='#cde1bb' opacity='0.7065459982857314'/><path d='M709.7 1318.2 L705.7 1319.4 L704.8 1321.5 L701.7 1322.5 L698.4 1321.1 L699.2 1318.2 L700.6 1316.5 L702.4 1315.6 L705.4 1313.4 L706.3 1316.6 Z' fill='#cde1bb' opacity='0.9423440078649594'/><path d='M812.5 1329.0 L807.9 1333.9 L803.7 1339.4 L795.7 1338.2 L793.0 1332.8 L785.7 1329.0 L791.2 1324.2 L797.5 1324.3 L801.3 1324.5 L807.7 1324.2 Z' fill='#cde1bb' opacity='0.6464117755083592'/><path d='M697.8 1403.9 L693.2 1405.4 L692.6 1409.1 L688.3 1409.4 L687.4 1405.7 L682.9 1403.9 L685.2 1400.8 L688.2 1398.1 L691.9 1400.4 L694.6 1401.5 Z' fill='#cde1bb' opacity='0.7106273158812394'/><path d='M619.8 1462.8 L617.7 1464.1 L616.9 1466.3 L614.7 1464.8 L613.3 1464.0 L612.1 1462.8 L613.5 1461.6 L614.6 1460.5 L616.9 1459.3 L619.1 1460.7 Z' fill='#cde1bb' opacity='0.6355984502886692'/><path d='M944.4 1563.9 L944.7 1565.4 L943.0 1566.1 L941.2 1566.0 L938.8 1565.8 L937.4 1563.9 L939.9 1562.7 L940.9 1561.0 L943.0 1561.8 L944.9 1562.3 Z' fill='#cde1bb' opacity='0.9243719662915011'/><path d='M648.1 1341.0 L646.4 1342.6 L645.4 1345.6 L641.5 1345.9 L640.0 1343.0 L640.3 1341.0 L640.8 1339.4 L642.6 1338.7 L644.8 1338.0 L646.0 1339.6 Z' fill='#cde1bb' opacity='0.91708596858486'/><path d='M664.3 1507.7 L666.1 1511.3 L661.0 1510.6 L658.1 1511.9 L654.8 1510.6 L652.5 1507.7 L656.4 1505.7 L658.4 1504.3 L661.1 1504.3 L663.9 1505.3 Z' fill='#cde1bb' opacity='0.6217208312776019'/><path d='M1050.5 1273.0 L1049.6 1277.3 L1043.8 1276.7 L1039.9 1278.8 L1033.0 1278.4 L1031.5 1273.0 L1033.4 1267.8 L1038.6 1264.0 L1044.3 1267.9 L1046.9 1270.3 Z' fill='#cde1bb' opacity='0.9134937817714157'/><path d='M954.7 1476.5 L955.8 1478.5 L953.3 1479.3 L951.4 1478.5 L950.4 1477.5 L949.6 1476.5 L949.3 1474.7 L951.0 1473.6 L952.9 1474.8 L953.9 1475.5 Z' fill='#cde1bb' opacity='0.873804516300396'/><path d='M754.7 1535.1 L755.1 1537.0 L753.3 1538.6 L749.9 1540.1 L747.7 1537.6 L745.7 1535.1 L748.2 1533.0 L750.8 1532.4 L753.1 1532.3 L757.2 1532.1 Z' fill='#cde1bb' opacity='0.8103713139921666'/><path d='M908.4 1406.4 L906.5 1409.0 L904.5 1412.3 L899.2 1413.5 L897.8 1408.9 L897.9 1406.4 L897.3 1403.6 L900.1 1401.6 L904.5 1400.4 L906.2 1404.0 Z' fill='#cde1bb' opacity='0.8360621417053709'/><path d='M1010.4 1370.6 L1005.3 1374.8 L1000.2 1375.6 L996.1 1375.8 L991.6 1374.5 L988.1 1370.6 L988.4 1364.9 L996.3 1365.9 L1000.7 1364.5 L1003.6 1367.5 Z' fill='#cde1bb' opacity='0.7032264976810874'/><path d='M1131.2 1329.1 L1130.3 1331.2 L1127.9 1332.2 L1125.1 1332.8 L1122.8 1331.3 L1123.7 1329.1 L1124.6 1327.9 L1125.2 1325.5 L1127.9 1325.9 L1128.3 1328.1 Z' fill='#cde1bb' opacity='0.7376625937027833'/><path d='M871.8 1439.7 L872.2 1441.8 L870.1 1443.4 L866.2 1445.5 L865.5 1441.5 L860.9 1439.7 L865.2 1437.7 L867.1 1436.0 L870.7 1434.3 L874.3 1436.4 Z' fill='#cde1bb' opacity='0.6592413297901688'/><path d='M679.6 1285.8 L679.4 1288.2 L677.7 1291.7 L674.2 1288.5 L670.9 1288.4 L667.9 1285.8 L669.5 1282.4 L674.2 1283.1 L676.4 1283.1 L678.2 1284.1 Z' fill='#cde1bb' opacity='0.9218272466676057'/><path d='M1089.6 1382.9 L1092.7 1389.3 L1085.0 1391.2 L1079.2 1388.9 L1072.1 1388.4 L1073.2 1382.9 L1075.1 1379.1 L1079.8 1378.5 L1085.3 1373.7 L1092.4 1376.6 Z' fill='#cde1bb' opacity='0.7186743365752771'/><path d='M850.4 1703.5 L849.0 1706.9 L844.7 1707.1 L841.9 1706.6 L839.2 1705.8 L838.0 1703.5 L837.4 1700.1 L842.0 1700.6 L845.2 1698.5 L848.3 1700.5 Z' fill='#e6eede' opacity='0.6900756231414413'/><path d='M594.8 1412.1 L596.9 1417.2 L590.2 1417.5 L586.3 1416.4 L583.6 1414.7 L578.6 1412.1 L581.8 1408.5 L584.1 1402.5 L591.7 1403.0 L598.3 1406.1 Z' fill='#cde1bb' opacity='0.6276552049753045'/><path d='M542.1 1302.1 L539.9 1304.6 L537.6 1306.9 L533.3 1307.8 L529.3 1305.8 L527.4 1302.1 L528.5 1297.9 L533.2 1296.2 L537.1 1298.6 L542.7 1298.0 Z' fill='#cde1bb' opacity='0.8484199098515572'/><path d='M566.5 1527.6 L565.2 1530.8 L561.6 1532.3 L556.2 1536.4 L552.2 1532.0 L552.3 1527.6 L553.3 1523.9 L555.9 1518.3 L562.4 1521.0 L565.1 1524.5 Z' fill='#cde1bb' opacity='0.6697165318115742'/><path d='M1019.5 1690.0 L1021.7 1693.7 L1017.2 1694.6 L1013.0 1695.9 L1011.3 1692.4 L1007.9 1690.0 L1011.0 1687.5 L1013.9 1686.6 L1017.5 1684.7 L1021.6 1686.3 Z' fill='#e6eede' opacity='0.547686651499245'/><path d='M501.2 1435.1 L500.4 1437.5 L497.3 1437.7 L495.4 1437.1 L493.1 1436.9 L491.0 1435.1 L493.6 1433.5 L495.1 1432.2 L497.3 1432.5 L500.9 1432.4 Z' fill='#cde1bb' opacity='0.6892197855813995'/><path d='M778.3 1292.4 L774.8 1294.2 L772.9 1295.6 L769.4 1297.7 L767.1 1295.0 L766.7 1292.4 L767.5 1290.0 L769.0 1286.0 L773.2 1288.5 L776.7 1289.4 Z' fill='#cde1bb' opacity='0.7925481636382137'/><path d='M1150.4 1432.8 L1154.7 1438.2 L1147.9 1438.9 L1142.0 1441.1 L1139.0 1436.5 L1134.0 1432.8 L1138.7 1428.9 L1143.5 1428.1 L1147.0 1428.9 L1152.6 1428.5 Z' fill='#cde1bb' opacity='0.6712835098035305'/><path d='M856.8 1687.9 L853.3 1690.5 L850.8 1692.8 L846.3 1694.0 L840.0 1693.0 L843.4 1687.9 L842.4 1684.1 L845.7 1680.2 L852.2 1679.4 L853.6 1685.1 Z' fill='#e6eede' opacity='0.648337449840453'/><path d='M1011.3 1348.3 L1009.2 1350.2 L1007.3 1351.9 L1003.6 1353.8 L999.3 1352.1 L1002.1 1348.3 L1000.7 1345.3 L1003.6 1342.7 L1007.0 1345.5 L1012.2 1344.6 Z' fill='#cde1bb' opacity='0.7812623814103574'/><path d='M845.9 1405.9 L843.2 1409.2 L839.6 1411.2 L836.0 1409.3 L830.8 1409.7 L830.0 1405.9 L832.7 1403.1 L834.6 1398.9 L840.3 1398.8 L843.2 1402.5 Z' fill='#cde1bb' opacity='0.7490089449005143'/><path d='M467.1 1483.9 L467.6 1485.7 L465.8 1486.9 L463.8 1485.7 L461.0 1486.0 L462.0 1483.9 L460.7 1481.7 L463.0 1480.2 L465.8 1480.8 L466.5 1482.7 Z' fill='#cde1bb' opacity='0.7507096523632579'/><path d='M939.6 1643.6 L936.5 1650.3 L927.3 1649.3 L920.9 1653.5 L913.3 1650.3 L918.3 1643.6 L917.5 1639.2 L921.0 1633.8 L927.3 1637.8 L936.3 1636.9 Z' fill='#e6eede' opacity='0.6967479863401699'/><path d='M549.4 1643.9 L548.7 1646.5 L546.3 1649.3 L542.2 1648.5 L540.5 1645.9 L538.8 1643.9 L539.9 1641.5 L541.0 1636.4 L546.6 1637.6 L551.8 1639.4 Z' fill='#e6eede' opacity='0.8679631247523654'/><path d='M462.0 1629.5 L463.3 1634.0 L457.9 1635.3 L453.1 1635.5 L447.7 1634.1 L450.6 1629.5 L447.1 1624.6 L453.0 1623.3 L457.6 1624.4 L462.9 1625.2 Z' fill='#e6eede' opacity='0.7545274700471429'/><path d='M472.7 1610.2 L472.9 1616.4 L465.3 1617.9 L458.9 1618.3 L455.8 1613.9 L456.7 1610.2 L457.6 1607.5 L460.1 1605.2 L465.4 1602.4 L469.4 1606.0 Z' fill='#e6eede' opacity='0.6014610001744999'/><path d='M745.2 1681.2 L744.6 1682.6 L743.5 1684.7 L741.0 1683.8 L738.4 1683.3 L738.1 1681.2 L737.6 1678.6 L740.4 1677.0 L743.3 1678.2 L746.7 1678.5 Z' fill='#e6eede' opacity='0.7612433703112116'/><path d='M527.7 1332.6 L523.7 1336.0 L519.8 1337.4 L516.4 1336.1 L510.7 1336.7 L509.6 1332.6 L512.3 1329.3 L515.1 1325.8 L520.2 1326.8 L526.6 1327.5 Z' fill='#cde1bb' opacity='0.9049499599852813'/><path d='M357.5 1511.1 L353.9 1512.5 L353.1 1514.9 L349.5 1516.1 L348.9 1512.7 L348.0 1511.1 L347.3 1508.7 L350.1 1507.5 L353.2 1507.0 L356.5 1508.3 Z' fill='#cde1bb' opacity='0.6204327130251354'/><path d='M464.6 1407.3 L463.6 1409.2 L461.0 1408.8 L459.1 1410.6 L457.2 1409.2 L457.2 1407.3 L457.2 1405.5 L459.4 1404.9 L461.2 1405.4 L462.2 1406.3 Z' fill='#cde1bb' opacity='0.9112733483575814'/><path d='M519.8 1280.9 L516.8 1285.8 L510.6 1286.3 L505.6 1287.9 L501.8 1284.8 L497.6 1280.9 L501.3 1276.7 L506.3 1275.6 L511.5 1273.5 L518.3 1275.2 Z' fill='#cde1bb' opacity='0.8432882288843223'/><path d='M502.3 1674.0 L501.7 1677.5 L497.7 1678.9 L494.3 1677.5 L489.9 1677.3 L491.1 1674.0 L492.3 1672.0 L493.5 1668.4 L497.6 1669.4 L500.8 1671.0 Z' fill='#e6eede' opacity='0.5944437171272126'/><path d='M573.8 1361.8 L573.1 1362.8 L572.1 1363.6 L569.8 1365.5 L568.8 1363.3 L568.9 1361.8 L569.6 1360.8 L570.7 1360.2 L572.6 1358.7 L574.6 1360.0 Z' fill='#cde1bb' opacity='0.9187764053049767'/><path d='M905.6 1607.0 L903.7 1611.7 L898.9 1614.9 L894.2 1610.8 L887.5 1611.8 L885.2 1607.0 L887.1 1602.0 L894.1 1603.1 L897.5 1602.6 L899.9 1604.6 Z' fill='#e6eede' opacity='0.6453624463060861'/><path d='M561.8 1309.5 L561.0 1313.3 L556.0 1313.5 L552.2 1314.8 L548.5 1312.8 L543.9 1309.5 L548.0 1305.8 L552.0 1303.8 L558.1 1300.1 L561.5 1305.3 Z' fill='#cde1bb' opacity='0.6717477027554868'/><path d='M1031.9 1551.7 L1028.7 1554.2 L1026.6 1557.1 L1022.4 1556.5 L1020.6 1553.9 L1016.3 1551.7 L1021.1 1549.8 L1021.9 1545.7 L1025.7 1548.3 L1027.2 1550.0 Z' fill='#cde1bb' opacity='0.7527573543155031'/><path d='M327.6 1492.1 L325.0 1495.8 L322.1 1501.0 L316.3 1497.7 L308.4 1498.0 L311.1 1492.1 L312.9 1488.9 L315.2 1484.0 L321.3 1485.2 L323.5 1489.2 Z' fill='#cde1bb' opacity='0.6645817204453398'/><path d='M624.3 1450.3 L616.0 1453.1 L613.5 1455.9 L608.8 1456.3 L600.6 1456.5 L601.4 1450.3 L604.1 1446.1 L607.2 1440.4 L613.6 1444.5 L618.9 1445.8 Z' fill='#cde1bb' opacity='0.6301605164836757'/><path d='M858.2 1425.6 L857.5 1428.0 L854.4 1427.9 L852.2 1428.6 L849.3 1428.0 L849.0 1425.6 L851.2 1424.3 L852.2 1422.5 L855.2 1421.4 L856.1 1424.1 Z' fill='#cde1bb' opacity='0.8950871252090282'/><path d='M1022.9 1335.0 L1020.7 1336.7 L1019.2 1338.2 L1016.8 1337.8 L1012.4 1338.2 L1012.1 1335.0 L1015.3 1333.5 L1015.8 1329.9 L1018.9 1332.6 L1021.5 1333.0 Z' fill='#cde1bb' opacity='0.714296900563041'/><path d='M680.8 1354.5 L679.2 1355.5 L678.4 1357.1 L675.9 1358.1 L673.8 1356.5 L673.5 1354.5 L673.9 1352.5 L676.2 1351.7 L678.1 1352.4 L680.7 1352.5 Z' fill='#cde1bb' opacity='0.672255387603021'/><path d='M677.3 1369.6 L676.1 1375.5 L669.3 1378.1 L662.5 1377.9 L658.3 1374.0 L657.6 1369.6 L657.1 1364.5 L663.9 1364.7 L668.7 1362.7 L675.6 1363.9 Z' fill='#cde1bb' opacity='0.8709169244363331'/><path d='M916.0 1557.0 L913.8 1559.7 L911.4 1562.4 L906.5 1563.4 L905.5 1559.1 L902.1 1557.0 L902.9 1553.3 L907.4 1552.7 L911.1 1552.3 L916.2 1552.9 Z' fill='#cde1bb' opacity='0.7593180656945709'/><path d='M355.8 1516.7 L351.5 1519.5 L349.6 1523.9 L343.8 1523.7 L338.1 1521.7 L337.6 1516.7 L338.5 1511.9 L343.1 1507.9 L349.5 1509.7 L353.4 1512.7 Z' fill='#cde1bb' opacity='0.9292057005311103'/><path d='M648.6 1619.1 L648.9 1623.2 L645.0 1626.5 L640.0 1623.9 L634.0 1623.8 L632.1 1619.1 L632.0 1613.3 L639.1 1612.1 L644.6 1612.7 L648.5 1615.3 Z' fill='#e6eede' opacity='0.6421892006324792'/><path d='M999.7 1559.1 L994.7 1562.2 L992.0 1565.4 L986.7 1566.2 L982.0 1563.5 L982.4 1559.1 L984.6 1556.3 L987.2 1553.4 L991.1 1555.3 L997.1 1554.7 Z' fill='#cde1bb' opacity='0.6790953825050873'/><path d='M633.6 1381.3 L631.3 1382.9 L629.4 1383.9 L627.2 1384.0 L624.8 1383.3 L624.2 1381.3 L624.4 1378.9 L626.8 1377.5 L629.5 1378.3 L633.2 1378.4 Z' fill='#cde1bb' opacity='0.6009432683281809'/><path d='M1075.3 1629.1 L1074.2 1631.7 L1073.8 1639.1 L1066.4 1637.3 L1063.6 1632.6 L1063.4 1629.1 L1064.3 1626.0 L1067.4 1623.5 L1073.3 1620.2 L1076.4 1625.2 Z' fill='#e6eede' opacity='0.753264929599927'/><path d='M981.8 1654.7 L978.1 1658.5 L975.1 1663.2 L968.9 1661.5 L966.1 1657.9 L965.0 1654.7 L966.8 1651.9 L969.0 1648.3 L973.3 1650.6 L978.3 1650.8 Z' fill='#e6eede' opacity='0.7123181911665649'/><path d='M439.4 1492.4 L442.7 1496.7 L437.4 1497.7 L432.9 1498.1 L428.7 1496.2 L426.1 1492.4 L430.1 1489.4 L433.2 1487.3 L438.3 1484.8 L439.0 1490.2 Z' fill='#cde1bb' opacity='0.902007193171279'/><path d='M856.2 1560.0 L851.1 1563.1 L849.1 1568.2 L843.4 1565.9 L839.6 1563.6 L835.5 1560.0 L842.0 1557.8 L842.9 1553.1 L848.4 1553.5 L851.1 1556.9 Z' fill='#cde1bb' opacity='0.8389058240338374'/><path d='M1038.3 1433.9 L1038.3 1437.0 L1035.0 1438.9 L1030.7 1439.5 L1025.7 1438.1 L1027.1 1433.9 L1025.7 1429.7 L1031.0 1429.0 L1035.1 1428.5 L1037.5 1431.2 Z' fill='#cde1bb' opacity='0.8697010365822633'/><path d='M980.7 1417.4 L980.1 1420.5 L975.8 1419.9 L972.9 1422.2 L969.2 1420.7 L969.4 1417.4 L972.2 1415.9 L973.5 1414.1 L975.8 1415.0 L978.0 1415.6 Z' fill='#cde1bb' opacity='0.805257907811272'/><path d='M822.0 1581.0 L816.3 1583.6 L813.7 1585.6 L810.2 1584.8 L803.5 1585.8 L800.6 1581.0 L804.2 1576.5 L809.5 1575.3 L815.1 1572.9 L820.2 1576.1 Z' fill='#e6eede' opacity='0.683151732758515'/><path d='M789.2 1383.3 L788.9 1386.6 L785.9 1389.8 L782.1 1386.3 L778.0 1386.4 L779.5 1383.3 L779.9 1381.4 L780.9 1377.4 L785.3 1378.3 L790.1 1379.4 Z' fill='#cde1bb' opacity='0.7114669804061742'/><path d='M697.5 1269.4 L692.9 1272.9 L689.1 1274.7 L685.4 1273.2 L680.1 1273.4 L681.2 1269.4 L682.6 1266.9 L685.6 1266.0 L688.3 1266.1 L694.0 1265.3 Z' fill='#cde1bb' opacity='0.9282017907559053'/><path d='M422.1 1714.3 L425.6 1719.7 L418.6 1720.1 L412.7 1723.2 L410.5 1717.7 L410.2 1714.3 L406.6 1708.6 L412.7 1705.5 L420.2 1704.6 L425.7 1708.8 Z' fill='#e6eede' opacity='0.5515873952875487'/><path d='M1123.1 1597.9 L1120.4 1599.0 L1119.4 1600.2 L1117.1 1601.2 L1116.3 1599.1 L1113.7 1597.9 L1115.5 1596.2 L1117.8 1596.1 L1119.5 1595.4 L1121.6 1596.0 Z' fill='#e6eede' opacity='0.7602789929110982'/><path d='M690.9 1579.0 L688.8 1583.9 L683.1 1585.6 L677.9 1585.4 L671.2 1584.4 L667.8 1579.0 L671.2 1573.6 L677.5 1571.6 L682.8 1573.2 L685.2 1576.3 Z' fill='#e6eede' opacity='0.6453062383946555'/><path d='M1013.2 1543.7 L1013.5 1547.1 L1009.7 1548.8 L1005.0 1550.0 L1001.2 1547.4 L1002.5 1543.7 L1004.7 1541.9 L1006.1 1539.8 L1009.4 1539.2 L1013.1 1540.5 Z' fill='#cde1bb' opacity='0.9108434098671292'/><path d='M1007.3 1677.4 L1003.0 1682.1 L997.2 1683.3 L991.1 1686.8 L985.2 1683.0 L983.9 1677.4 L984.5 1671.4 L992.3 1671.1 L996.8 1672.7 L1002.9 1672.7 Z' fill='#e6eede' opacity='0.8247009661513939'/><path d='M885.7 1480.2 L883.5 1482.4 L880.6 1482.6 L877.7 1484.9 L874.7 1483.1 L875.8 1480.2 L875.3 1477.7 L877.6 1475.2 L881.6 1475.2 L883.7 1477.8 Z' fill='#cde1bb' opacity='0.862896751636858'/><path d='M717.2 1538.1 L715.2 1540.0 L713.5 1541.7 L710.8 1541.2 L708.4 1540.3 L708.9 1538.1 L709.8 1536.8 L710.1 1533.3 L713.3 1535.1 L714.4 1536.7 Z' fill='#cde1bb' opacity='0.6632426461730355'/><path d='M850.1 1630.6 L845.9 1632.8 L843.6 1634.3 L838.8 1639.1 L833.9 1635.5 L834.4 1630.6 L835.5 1626.8 L840.2 1625.9 L845.1 1623.3 L848.1 1627.2 Z' fill='#e6eede' opacity='0.6379686632172705'/><path d='M1120.7 1381.5 L1120.0 1382.8 L1119.2 1385.1 L1115.9 1386.0 L1114.2 1383.5 L1111.5 1381.5 L1112.8 1378.6 L1116.9 1379.3 L1119.3 1377.7 L1121.1 1379.5 Z' fill='#cde1bb' opacity='0.6632573890117608'/><path d='M878.9 1446.5 L875.6 1448.0 L873.8 1448.4 L871.9 1449.0 L870.0 1448.2 L867.4 1446.5 L868.4 1443.8 L871.3 1442.4 L873.8 1444.5 L877.2 1444.0 Z' fill='#cde1bb' opacity='0.9380189708046243'/><path d='M811.8 1616.9 L812.4 1619.6 L809.1 1620.1 L806.4 1620.4 L804.4 1618.8 L801.0 1616.9 L805.0 1615.3 L805.6 1611.6 L809.1 1613.6 L810.7 1615.2 Z' fill='#e6eede' opacity='0.602804211944485'/><path d='M1046.4 1678.0 L1044.2 1682.1 L1039.5 1683.7 L1035.2 1682.9 L1032.4 1680.7 L1028.6 1678.0 L1031.8 1674.9 L1034.9 1672.3 L1038.6 1674.4 L1041.3 1675.6 Z' fill='#e6eede' opacity='0.5387949702916738'/><path d='M664.8 1335.5 L665.6 1339.9 L660.5 1341.6 L654.1 1345.2 L652.9 1338.5 L644.8 1335.5 L653.2 1332.8 L654.1 1326.0 L661.4 1327.3 L663.8 1332.2 Z' fill='#cde1bb' opacity='0.717078100006659'/><path d='M719.2 1396.5 L718.0 1399.5 L714.7 1401.2 L711.8 1398.8 L709.8 1398.3 L706.7 1396.5 L710.5 1395.2 L711.1 1392.4 L713.9 1393.7 L717.9 1393.5 Z' fill='#cde1bb' opacity='0.7274979829879166'/><path d='M764.3 1349.6 L759.3 1352.9 L756.0 1355.2 L749.9 1359.0 L744.2 1355.2 L746.3 1349.6 L748.5 1346.6 L751.7 1344.6 L757.1 1341.3 L761.8 1344.9 Z' fill='#cde1bb' opacity='0.6763927209891121'/><path d='M667.0 1600.0 L664.9 1605.7 L657.9 1607.0 L653.3 1604.2 L644.8 1605.9 L645.8 1600.0 L645.1 1594.2 L652.7 1594.3 L657.1 1594.7 L664.7 1594.3 Z' fill='#e6eede' opacity='0.6340877600960665'/><path d='M628.5 1339.2 L626.6 1342.6 L623.2 1345.0 L619.2 1343.1 L613.6 1343.4 L611.2 1339.2 L612.8 1334.5 L618.8 1334.3 L623.6 1332.4 L626.3 1336.0 Z' fill='#cde1bb' opacity='0.6016238203246511'/><path d='M1114.1 1494.0 L1117.9 1498.6 L1111.6 1498.1 L1108.3 1497.9 L1106.1 1496.2 L1104.3 1494.0 L1102.7 1489.8 L1108.6 1490.7 L1111.4 1490.4 L1116.6 1490.1 Z' fill='#cde1bb' opacity='0.7880660068022465'/><path d='M357.2 1320.3 L357.6 1323.2 L354.0 1323.9 L350.3 1325.9 L345.3 1324.5 L347.7 1320.3 L346.7 1316.9 L350.0 1314.0 L354.1 1316.6 L359.6 1316.2 Z' fill='#cde1bb' opacity='0.697867993552342'/><path d='M1104.8 1444.4 L1106.7 1450.5 L1099.8 1453.3 L1093.7 1450.6 L1090.2 1447.9 L1088.0 1444.4 L1089.0 1440.2 L1092.1 1434.3 L1099.9 1435.4 L1106.5 1438.4 Z' fill='#cde1bb' opacity='0.7839653984656374'/><path d='M1004.0 1658.8 L998.7 1661.5 L996.2 1664.0 L991.6 1664.9 L988.9 1661.8 L986.6 1658.8 L990.3 1656.6 L992.0 1653.6 L996.3 1653.3 L997.6 1656.8 Z' fill='#e6eede' opacity='0.8831443955903171'/><path d='M1061.2 1676.1 L1057.2 1679.2 L1054.5 1682.5 L1048.4 1684.5 L1044.6 1680.3 L1045.4 1676.1 L1045.2 1672.2 L1049.5 1670.3 L1055.3 1667.6 L1057.3 1673.0 Z' fill='#e6eede' opacity='0.6063087997374812'/><path d='M577.3 1565.3 L574.5 1568.3 L571.7 1571.1 L566.9 1571.4 L565.0 1567.9 L564.1 1565.3 L565.0 1562.8 L567.4 1560.4 L571.6 1559.9 L574.6 1562.3 Z' fill='#e6eede' opacity='0.8824339208634422'/><path d='M527.7 1303.8 L526.3 1308.8 L519.9 1309.2 L514.3 1312.3 L510.3 1308.1 L507.9 1303.8 L509.4 1299.0 L514.9 1296.8 L520.2 1297.8 L523.7 1300.4 Z' fill='#cde1bb' opacity='0.813483411395491'/><path d='M506.1 1502.2 L507.4 1506.8 L501.3 1506.7 L497.1 1508.2 L493.5 1505.7 L493.4 1502.2 L491.0 1497.2 L497.6 1497.5 L502.4 1495.2 L503.9 1499.7 Z' fill='#cde1bb' opacity='0.6041573515047668'/><path d='M373.2 1444.0 L376.3 1449.7 L369.8 1451.9 L364.7 1448.7 L360.5 1447.5 L359.0 1444.0 L358.6 1439.4 L363.6 1436.8 L370.0 1435.5 L375.5 1438.9 Z' fill='#cde1bb' opacity='0.6382354861671121'/><path d='M917.3 1690.2 L913.8 1695.1 L908.3 1697.6 L901.1 1700.5 L897.0 1695.0 L896.2 1690.2 L895.5 1684.5 L901.4 1680.4 L908.6 1682.0 L912.4 1686.0 Z' fill='#e6eede' opacity='0.5017295223784978'/><path d='M644.4 1413.2 L641.0 1416.5 L637.8 1419.3 L633.2 1418.3 L627.1 1418.0 L625.1 1413.2 L630.3 1410.3 L631.3 1403.4 L637.8 1407.1 L645.2 1407.5 Z' fill='#cde1bb' opacity='0.7748424331339889'/><path d='M1017.2 1710.7 L1016.6 1712.7 L1015.5 1716.0 L1011.3 1715.7 L1006.1 1714.9 L1005.2 1710.7 L1007.8 1707.5 L1010.4 1703.6 L1015.4 1705.6 L1018.8 1707.6 Z' fill='#e6eede' opacity='0.8642293273088754'/><path d='M896.3 1444.8 L892.9 1448.9 L888.3 1450.7 L884.4 1448.6 L880.4 1448.0 L879.0 1444.8 L879.5 1441.0 L883.4 1438.7 L889.0 1437.2 L894.4 1439.8 Z' fill='#cde1bb' opacity='0.7228873681915756'/><path d='M1152.8 1423.2 L1155.5 1429.3 L1148.6 1432.2 L1142.1 1430.3 L1139.9 1426.1 L1132.6 1423.2 L1136.3 1418.1 L1141.3 1414.2 L1149.0 1413.2 L1154.9 1417.4 Z' fill='#cde1bb' opacity='0.6597528131824054'/><path d='M670.7 1335.9 L669.7 1338.3 L668.0 1341.7 L663.3 1341.6 L660.7 1338.7 L655.8 1335.9 L659.4 1332.2 L664.3 1332.6 L667.6 1331.0 L672.6 1331.8 Z' fill='#cde1bb' opacity='0.7767105852261141'/><path d='M576.7 1585.5 L575.8 1588.6 L571.8 1588.7 L568.7 1589.8 L565.7 1588.3 L565.9 1585.5 L565.3 1582.5 L568.7 1581.0 L573.0 1579.3 L575.4 1582.6 Z' fill='#e6eede' opacity='0.836863181288532'/><path d='M663.3 1319.6 L662.6 1322.6 L660.3 1326.4 L654.0 1328.1 L649.6 1324.1 L646.4 1319.6 L653.0 1316.9 L655.9 1315.6 L660.8 1311.3 L663.5 1316.0 Z' fill='#cde1bb' opacity='0.6373261474830058'/><path d='M917.8 1428.1 L915.4 1430.6 L912.4 1431.5 L909.6 1431.8 L907.4 1430.3 L907.9 1428.1 L905.7 1425.0 L909.4 1424.0 L913.2 1422.8 L915.0 1425.9 Z' fill='#cde1bb' opacity='0.63480950221989'/><path d='M840.3 1379.3 L842.7 1385.7 L835.7 1389.1 L829.1 1385.7 L822.8 1384.5 L817.6 1379.3 L823.5 1374.5 L827.4 1368.6 L834.2 1373.2 L839.1 1375.0 Z' fill='#cde1bb' opacity='0.8991504371966117'/><path d='M925.7 1366.2 L919.8 1369.8 L915.8 1371.6 L911.0 1372.8 L907.8 1369.6 L900.0 1366.2 L907.1 1362.5 L910.4 1358.5 L915.6 1361.2 L921.7 1361.5 Z' fill='#cde1bb' opacity='0.7695363533336614'/><path d='M639.6 1451.2 L638.7 1452.6 L637.1 1453.4 L635.2 1453.6 L633.7 1452.6 L633.8 1451.2 L632.6 1449.1 L635.2 1448.6 L637.1 1449.1 L639.9 1449.0 Z' fill='#cde1bb' opacity='0.8890388456698359'/><path d='M997.5 1337.2 L990.9 1340.2 L989.3 1346.2 L983.0 1343.7 L980.3 1340.3 L977.5 1337.2 L980.9 1334.4 L982.6 1329.6 L987.8 1332.0 L994.9 1331.8 Z' fill='#cde1bb' opacity='0.7319127624502055'/><path d='M814.6 1434.7 L808.7 1437.2 L806.9 1440.6 L802.1 1440.8 L799.5 1437.6 L795.1 1434.7 L798.9 1431.5 L801.8 1428.1 L807.0 1428.6 L809.7 1431.7 Z' fill='#cde1bb' opacity='0.6743896837825389'/><path d='M650.7 1303.0 L645.0 1306.0 L642.9 1310.6 L637.2 1309.4 L632.1 1307.5 L631.9 1303.0 L634.9 1300.2 L637.4 1296.9 L642.1 1297.4 L645.1 1299.9 Z' fill='#cde1bb' opacity='0.7123630059205744'/><path d='M925.3 1394.7 L922.7 1400.8 L914.2 1400.0 L909.6 1400.9 L907.2 1397.6 L900.6 1394.7 L902.9 1389.4 L909.4 1388.1 L915.0 1387.7 L921.3 1389.4 Z' fill='#cde1bb' opacity='0.8712488824115117'/><path d='M612.9 1556.6 L612.0 1558.7 L609.0 1558.4 L607.6 1558.4 L606.1 1557.9 L605.4 1556.6 L605.7 1555.1 L607.2 1553.9 L609.0 1554.8 L610.9 1555.1 Z' fill='#cde1bb' opacity='0.9194401190662448'/><path d='M823.9 1284.9 L825.2 1287.3 L822.5 1288.4 L820.3 1286.8 L817.4 1287.0 L817.6 1284.9 L817.3 1282.7 L819.5 1281.2 L822.0 1282.5 L823.1 1283.7 Z' fill='#cde1bb' opacity='0.8770031568519248'/><path d='M846.7 1474.3 L847.5 1479.7 L840.1 1478.7 L835.1 1482.1 L834.1 1476.8 L828.5 1474.3 L829.8 1469.4 L836.2 1469.3 L841.0 1467.7 L847.7 1468.9 Z' fill='#cde1bb' opacity='0.7499226379066136'/><path d='M849.3 1516.9 L848.2 1518.1 L847.0 1519.1 L845.4 1518.7 L842.9 1518.8 L842.2 1516.9 L844.0 1515.7 L845.3 1514.9 L847.2 1514.3 L848.8 1515.4 Z' fill='#cde1bb' opacity='0.7252390285695356'/><path d='M1105.1 1427.0 L1101.6 1431.0 L1098.6 1436.4 L1091.6 1434.8 L1085.1 1432.6 L1087.7 1427.0 L1085.7 1421.7 L1091.5 1418.9 L1097.7 1419.8 L1104.4 1421.4 Z' fill='#cde1bb' opacity='0.6496608224186584'/><path d='M1011.1 1316.3 L1011.3 1318.5 L1008.8 1319.5 L1005.4 1321.4 L1003.1 1318.9 L1003.6 1316.3 L1003.5 1314.0 L1005.8 1312.0 L1009.1 1312.4 L1010.9 1314.3 Z' fill='#cde1bb' opacity='0.6722514686375026'/><path d='M1136.7 1526.1 L1137.4 1529.4 L1132.9 1529.1 L1128.9 1533.1 L1125.6 1529.7 L1124.2 1526.1 L1124.3 1521.8 L1129.4 1520.3 L1133.4 1522.1 L1136.0 1523.6 Z' fill='#cde1bb' opacity='0.7519841232964408'/><path d='M1025.3 1401.2 L1019.1 1403.9 L1017.5 1408.7 L1011.4 1408.9 L1006.8 1405.7 L1007.8 1401.2 L1009.8 1398.5 L1011.4 1393.6 L1016.6 1396.1 L1020.2 1397.9 Z' fill='#cde1bb' opacity='0.8960035202165018'/><path d='M739.8 1336.4 L735.5 1338.9 L733.4 1341.8 L727.9 1344.3 L727.2 1338.7 L726.6 1336.4 L725.4 1333.0 L729.5 1332.2 L733.9 1329.6 L734.7 1334.3 Z' fill='#cde1bb' opacity='0.6280814617846957'/><path d='M675.4 1395.1 L674.7 1398.2 L671.9 1401.2 L666.7 1401.9 L661.9 1399.5 L664.4 1395.1 L664.8 1392.4 L667.4 1390.1 L671.7 1389.6 L674.3 1392.3 Z' fill='#cde1bb' opacity='0.7474228263774392'/><path d='M486.5 1302.5 L484.6 1306.5 L480.6 1309.5 L474.9 1309.4 L471.9 1305.9 L469.5 1302.5 L474.4 1300.6 L475.4 1296.8 L479.9 1297.1 L482.1 1300.0 Z' fill='#cde1bb' opacity='0.9399535379345965'/><path d='M861.6 1402.6 L863.5 1407.9 L857.2 1409.8 L852.4 1407.5 L845.3 1407.9 L845.6 1402.6 L845.9 1397.7 L851.5 1395.7 L857.4 1395.0 L862.7 1397.8 Z' fill='#cde1bb' opacity='0.609744587517072'/><path d='M651.8 1316.2 L655.6 1322.2 L647.6 1322.1 L643.2 1321.1 L637.0 1320.9 L637.4 1316.2 L637.3 1311.6 L642.0 1308.4 L647.5 1310.4 L653.6 1311.3 Z' fill='#cde1bb' opacity='0.7918398504141436'/><path d='M388.4 1453.4 L387.8 1457.0 L384.1 1459.3 L380.4 1456.7 L374.5 1457.7 L374.2 1453.4 L378.3 1451.4 L379.2 1447.2 L383.5 1449.0 L385.5 1451.3 Z' fill='#cde1bb' opacity='0.9022169275290943'/><path d='M432.0 1625.4 L433.5 1628.1 L430.1 1628.5 L427.5 1628.7 L423.9 1628.3 L424.0 1625.4 L423.3 1622.1 L427.1 1621.0 L431.0 1620.2 L433.4 1622.8 Z' fill='#e6eede' opacity='0.6489387632660215'/><path d='M1090.3 1669.6 L1087.7 1674.4 L1083.0 1678.2 L1077.6 1674.2 L1073.0 1673.4 L1068.8 1669.6 L1069.6 1663.9 L1076.2 1661.6 L1081.1 1665.5 L1087.3 1665.1 Z' fill='#e6eede' opacity='0.63655813874039'/><path d='M533.4 1353.0 L531.6 1355.7 L529.0 1357.9 L523.4 1362.0 L521.4 1356.3 L517.2 1353.0 L520.8 1349.4 L523.7 1344.7 L529.7 1346.6 L532.4 1349.9 Z' fill='#cde1bb' opacity='0.8034805454608605'/><path d='M994.4 1706.1 L994.7 1709.8 L990.7 1711.8 L987.2 1708.8 L984.8 1708.1 L980.8 1706.1 L982.8 1702.8 L986.7 1701.9 L990.2 1701.6 L991.8 1704.1 Z' fill='#e6eede' opacity='0.560373349449546'/><path d='M828.9 1298.3 L826.2 1299.6 L825.0 1300.8 L822.7 1301.4 L820.3 1300.4 L819.0 1298.3 L820.5 1296.3 L822.7 1295.2 L824.8 1296.2 L827.9 1295.9 Z' fill='#cde1bb' opacity='0.9128945767568224'/><path d='M600.5 1272.4 L602.8 1278.1 L595.7 1278.9 L590.4 1278.9 L584.5 1277.4 L584.6 1272.4 L584.0 1267.1 L589.7 1264.1 L597.6 1261.2 L605.1 1265.3 Z' fill='#cde1bb' opacity='0.6158835218906855'/><path d='M856.2 1432.4 L852.2 1437.3 L846.1 1438.1 L840.3 1440.8 L834.9 1437.5 L834.6 1432.4 L835.5 1427.6 L841.3 1426.3 L846.7 1425.1 L850.5 1428.4 Z' fill='#cde1bb' opacity='0.9054847298476487'/><path d='M374.7 1420.3 L372.0 1424.3 L367.8 1426.6 L362.4 1427.4 L359.3 1423.8 L359.1 1420.3 L354.0 1413.8 L362.1 1412.6 L368.4 1412.7 L374.3 1415.1 Z' fill='#cde1bb' opacity='0.7685131726883846'/><path d='M573.2 1341.7 L571.4 1344.3 L569.1 1347.2 L565.5 1345.2 L561.1 1345.1 L561.2 1341.7 L564.1 1340.1 L565.7 1338.8 L568.6 1337.4 L572.9 1338.2 Z' fill='#cde1bb' opacity='0.7079737435150234'/><path d='M1046.3 1294.5 L1043.3 1297.2 L1040.7 1299.9 L1036.0 1300.5 L1029.1 1299.9 L1030.9 1294.5 L1031.1 1290.2 L1036.2 1288.8 L1041.8 1286.3 L1048.9 1288.4 Z' fill='#cde1bb' opacity='0.6965552100107522'/><path d='M1125.5 1543.6 L1122.7 1546.6 L1119.6 1548.8 L1114.5 1550.8 L1107.7 1549.3 L1107.2 1543.6 L1107.4 1537.7 L1115.3 1538.3 L1119.9 1537.6 L1126.5 1538.4 Z' fill='#cde1bb' opacity='0.9064306162403424'/><path d='M599.2 1289.6 L599.0 1291.2 L597.5 1292.4 L595.6 1291.6 L593.8 1291.2 L594.4 1289.6 L592.7 1287.5 L595.3 1287.0 L597.8 1286.1 L598.0 1288.7 Z' fill='#cde1bb' opacity='0.819208933893421'/><path d='M404.0 1335.8 L399.5 1339.7 L395.6 1342.8 L389.8 1343.0 L385.2 1340.1 L382.7 1335.8 L385.0 1331.2 L390.4 1330.0 L396.1 1327.6 L398.5 1332.4 Z' fill='#cde1bb' opacity='0.6314538015070978'/><path d='M698.5 1392.8 L700.6 1397.5 L696.1 1401.6 L688.6 1402.4 L685.2 1397.1 L678.1 1392.8 L686.1 1389.1 L688.7 1383.3 L694.6 1387.7 L697.5 1389.9 Z' fill='#cde1bb' opacity='0.6461526210495859'/><path d='M436.6 1290.9 L431.9 1293.9 L428.3 1294.8 L425.0 1294.9 L419.6 1295.0 L416.9 1290.9 L422.5 1288.5 L425.3 1287.6 L429.4 1284.1 L431.3 1288.2 Z' fill='#cde1bb' opacity='0.6636367886564849'/><path d='M594.6 1684.9 L591.3 1688.7 L588.3 1693.7 L583.0 1689.1 L577.3 1689.3 L576.6 1684.9 L575.1 1679.3 L581.0 1675.7 L587.8 1677.5 L590.2 1681.7 Z' fill='#e6eede' opacity='0.5261755639515868'/><path d='M530.6 1385.4 L529.1 1387.9 L526.1 1388.4 L522.8 1390.5 L521.9 1387.1 L519.8 1385.4 L522.1 1383.8 L522.9 1380.6 L526.8 1380.6 L527.9 1383.6 Z' fill='#cde1bb' opacity='0.6711218436368993'/><path d='M972.8 1666.2 L969.4 1668.9 L966.7 1671.1 L960.5 1676.5 L960.1 1668.8 L951.6 1666.2 L959.2 1662.9 L961.1 1657.3 L966.7 1661.3 L970.4 1662.9 Z' fill='#e6eede' opacity='0.8979292539840902'/><path d='M897.1 1305.0 L895.3 1311.6 L885.7 1309.6 L881.4 1310.9 L873.7 1310.8 L872.2 1305.0 L878.9 1302.1 L880.7 1297.3 L886.3 1299.0 L891.5 1300.5 Z' fill='#cde1bb' opacity='0.8507248207094988'/><path d='M585.2 1673.3 L582.8 1675.7 L581.1 1679.5 L577.1 1677.0 L571.8 1677.2 L571.6 1673.3 L574.8 1671.0 L576.7 1668.6 L580.8 1667.9 L586.3 1668.8 Z' fill='#e6eede' opacity='0.5543241218489877'/><path d='M465.6 1386.4 L465.4 1388.1 L463.5 1388.7 L462.0 1387.9 L459.5 1388.2 L458.8 1386.4 L459.8 1384.8 L461.5 1383.8 L463.8 1383.5 L466.3 1384.3 Z' fill='#cde1bb' opacity='0.7780629535522302'/><path d='M639.8 1442.9 L641.0 1445.0 L639.2 1447.1 L636.5 1445.3 L633.8 1445.0 L633.8 1442.9 L634.9 1441.4 L636.5 1440.6 L638.3 1440.8 L641.7 1440.4 Z' fill='#cde1bb' opacity='0.9494242390412313'/><path d='M977.7 1687.3 L975.3 1691.4 L970.4 1692.7 L964.5 1696.3 L964.2 1689.6 L957.9 1687.3 L959.2 1682.1 L965.5 1680.7 L971.0 1680.3 L977.9 1681.6 Z' fill='#e6eede' opacity='0.6297491481448738'/><path d='M587.1 1556.6 L588.4 1559.6 L584.8 1560.1 L581.6 1560.9 L579.5 1558.9 L578.7 1556.6 L580.4 1554.9 L582.3 1554.1 L585.3 1551.8 L587.2 1554.4 Z' fill='#cde1bb' opacity='0.8143811812094305'/><path d='M1067.8 1668.2 L1063.4 1670.2 L1061.3 1671.6 L1058.4 1672.0 L1056.5 1670.2 L1054.4 1668.2 L1053.5 1664.5 L1057.9 1663.4 L1061.8 1663.6 L1063.2 1666.3 Z' fill='#e6eede' opacity='0.832848357747836'/><path d='M625.9 1506.1 L623.5 1507.7 L622.0 1509.4 L618.8 1510.8 L617.7 1507.8 L616.4 1506.1 L615.1 1502.8 L619.2 1502.5 L622.2 1502.3 L624.4 1503.9 Z' fill='#cde1bb' opacity='0.7190331081341572'/><path d='M1038.7 1357.0 L1035.1 1359.7 L1033.3 1363.6 L1028.1 1363.2 L1021.9 1362.1 L1023.1 1357.0 L1023.8 1353.1 L1027.5 1349.3 L1034.2 1348.3 L1037.0 1353.3 Z' fill='#cde1bb' opacity='0.8162515146536342'/><path d='M692.6 1492.3 L688.3 1496.3 L683.2 1496.7 L678.1 1500.5 L673.5 1496.9 L670.0 1492.3 L672.1 1486.9 L679.5 1487.5 L683.6 1486.9 L686.3 1489.5 Z' fill='#cde1bb' opacity='0.8346331818502059'/><path d='M1001.6 1310.3 L1004.3 1315.1 L999.3 1318.2 L993.4 1316.9 L991.7 1312.9 L985.9 1310.3 L989.5 1306.5 L993.2 1303.2 L1000.0 1300.8 L1005.1 1305.1 Z' fill='#cde1bb' opacity='0.7975448236539748'/><path d='M1051.3 1330.8 L1046.0 1333.4 L1043.2 1335.0 L1039.7 1335.3 L1037.0 1333.4 L1032.4 1330.8 L1035.6 1327.4 L1039.3 1325.4 L1043.5 1325.8 L1045.0 1328.8 Z' fill='#cde1bb' opacity='0.6021091942872935'/><path d='M1031.8 1382.9 L1031.4 1384.4 L1029.8 1385.5 L1027.6 1385.7 L1026.3 1384.3 L1024.5 1382.9 L1026.7 1381.7 L1027.3 1379.4 L1029.8 1380.2 L1030.4 1381.9 Z' fill='#cde1bb' opacity='0.7878971359006205'/><path d='M582.7 1511.9 L584.2 1516.2 L578.6 1516.5 L574.1 1518.4 L569.3 1516.2 L568.9 1511.9 L571.1 1508.5 L573.7 1504.2 L578.9 1506.5 L584.6 1507.3 Z' fill='#cde1bb' opacity='0.713243890273273'/><path d='M366.3 1665.8 L362.3 1669.7 L358.7 1673.3 L353.3 1671.8 L348.5 1670.0 L346.7 1665.8 L350.5 1662.8 L353.9 1661.3 L358.8 1658.2 L360.1 1663.2 Z' fill='#e6eede' opacity='0.5720662475055188'/><path d='M1084.9 1359.5 L1082.5 1361.1 L1081.0 1362.7 L1078.8 1361.7 L1075.7 1361.8 L1075.5 1359.5 L1077.6 1358.2 L1079.0 1357.7 L1081.1 1356.2 L1081.6 1358.4 Z' fill='#cde1bb' opacity='0.874488415062697'/><path d='M1019.5 1400.0 L1015.9 1402.5 L1014.8 1407.6 L1009.7 1404.8 L1003.9 1404.5 L1006.4 1400.0 L1004.1 1395.6 L1008.4 1392.0 L1013.7 1394.8 L1015.3 1397.9 Z' fill='#cde1bb' opacity='0.7115553755121651'/><path d='M638.5 1562.2 L638.5 1566.2 L633.6 1567.3 L629.0 1568.5 L627.6 1564.5 L622.4 1562.2 L627.6 1559.9 L628.5 1554.8 L634.7 1554.4 L639.5 1557.5 Z' fill='#cde1bb' opacity='0.6327566226523713'/><path d='M765.4 1398.6 L758.2 1401.4 L756.2 1405.2 L750.0 1407.4 L745.8 1403.1 L744.4 1398.6 L748.9 1396.0 L751.6 1394.0 L755.7 1393.3 L762.9 1393.2 Z' fill='#cde1bb' opacity='0.7737926513797606'/><path d='M360.2 1418.4 L361.5 1421.3 L357.9 1421.5 L355.7 1420.8 L352.5 1420.8 L353.4 1418.4 L352.5 1416.0 L354.7 1413.8 L358.2 1414.4 L360.4 1416.2 Z' fill='#cde1bb' opacity='0.8598232535825507'/><path d='M351.5 1502.6 L348.6 1505.9 L345.2 1508.1 L340.2 1509.5 L338.4 1505.3 L337.3 1502.6 L334.2 1497.5 L340.9 1497.4 L346.2 1494.8 L351.5 1497.7 Z' fill='#cde1bb' opacity='0.6461892701340027'/><path d='M724.8 1332.4 L723.2 1337.2 L717.1 1337.5 L712.2 1339.7 L709.4 1335.7 L705.0 1332.4 L707.2 1327.8 L712.4 1325.8 L717.3 1326.9 L722.3 1328.2 Z' fill='#cde1bb' opacity='0.6409748278824721'/><path d='M497.3 1322.2 L489.1 1324.9 L488.6 1332.3 L481.5 1329.5 L474.7 1327.9 L474.2 1322.2 L475.3 1316.9 L482.1 1316.5 L488.1 1313.3 L490.0 1319.0 Z' fill='#cde1bb' opacity='0.7756287126531917'/><path d='M544.3 1277.2 L538.7 1279.4 L537.3 1282.9 L533.4 1281.4 L528.9 1280.8 L526.4 1277.2 L528.4 1273.4 L533.7 1273.9 L536.7 1273.1 L541.1 1273.7 Z' fill='#cde1bb' opacity='0.7021852221297781'/><path d='M660.2 1303.9 L660.2 1307.5 L656.0 1308.5 L652.2 1308.8 L648.8 1307.0 L646.7 1303.9 L644.4 1298.2 L650.4 1294.6 L657.5 1295.8 L661.0 1299.9 Z' fill='#cde1bb' opacity='0.8375820428766114'/><path d='M950.8 1560.1 L945.2 1562.5 L943.9 1567.1 L939.0 1565.3 L936.6 1562.7 L930.2 1560.1 L933.9 1555.9 L938.2 1553.0 L942.8 1556.0 L949.1 1555.4 Z' fill='#cde1bb' opacity='0.8960038447973442'/><path d='M766.2 1704.7 L768.8 1711.1 L760.4 1710.9 L755.5 1710.7 L749.8 1709.5 L749.8 1704.7 L749.5 1699.9 L753.6 1694.0 L761.7 1695.5 L767.9 1699.0 Z' fill='#e6eede' opacity='0.8149917388030328'/><path d='M663.6 1303.5 L663.2 1309.2 L657.1 1312.4 L651.7 1307.7 L645.9 1307.9 L647.8 1303.5 L648.3 1300.5 L649.7 1294.4 L656.1 1296.8 L661.7 1298.7 Z' fill='#cde1bb' opacity='0.7188570069681692'/><path d='M702.4 1419.5 L699.9 1421.7 L697.3 1422.3 L694.7 1423.0 L690.7 1422.6 L690.7 1419.5 L690.9 1416.5 L693.9 1414.0 L697.3 1416.6 L701.4 1416.4 Z' fill='#cde1bb' opacity='0.8955880754670397'/><path d='M354.4 1647.3 L352.9 1649.3 L351.8 1652.8 L347.6 1651.8 L343.6 1650.7 L344.5 1647.3 L345.1 1644.7 L347.1 1641.5 L351.2 1643.1 L355.8 1643.6 Z' fill='#e6eede' opacity='0.883082810494018'/><path d='M478.1 1650.9 L480.9 1655.6 L474.9 1656.2 L469.9 1657.9 L468.1 1653.6 L466.4 1650.9 L468.8 1648.6 L470.4 1645.1 L475.7 1643.6 L478.8 1647.4 Z' fill='#e6eede' opacity='0.5001410390540716'/><path d='M875.2 1558.0 L871.5 1561.3 L867.8 1562.7 L862.8 1565.5 L862.3 1560.1 L856.9 1558.0 L859.3 1554.2 L863.6 1552.5 L867.9 1552.9 L872.7 1554.0 Z' fill='#cde1bb' opacity='0.8367928368664551'/><path d='M351.4 1414.7 L353.1 1419.9 L347.6 1423.1 L342.2 1419.6 L336.6 1419.1 L331.7 1414.7 L334.8 1409.3 L341.6 1408.3 L348.1 1405.1 L351.0 1410.7 Z' fill='#cde1bb' opacity='0.9119952063635708'/><path d='M899.8 1392.4 L895.8 1395.5 L892.2 1396.4 L888.3 1398.2 L882.7 1397.0 L885.3 1392.4 L883.4 1388.3 L888.9 1388.4 L892.5 1387.7 L894.3 1390.3 Z' fill='#cde1bb' opacity='0.8890562941649067'/><path d='M1125.3 1350.2 L1124.5 1354.8 L1118.8 1355.5 L1114.1 1356.5 L1109.1 1354.6 L1107.4 1350.2 L1105.1 1343.5 L1114.1 1344.0 L1119.0 1344.4 L1127.8 1343.8 Z' fill='#cde1bb' opacity='0.669072896370668'/><path d='M973.0 1409.9 L971.9 1414.6 L967.0 1418.0 L961.5 1415.3 L957.4 1413.5 L951.8 1409.9 L956.4 1405.6 L961.5 1404.3 L966.8 1402.4 L969.4 1406.5 Z' fill='#cde1bb' opacity='0.7645767225435076'/><path d='M544.4 1376.5 L541.6 1379.6 L539.0 1383.4 L534.7 1380.2 L531.3 1379.3 L528.1 1376.5 L528.0 1371.8 L533.7 1370.4 L538.7 1370.1 L543.3 1372.3 Z' fill='#cde1bb' opacity='0.8638074622375228'/><path d='M614.4 1349.6 L614.0 1354.0 L607.8 1353.3 L604.4 1354.2 L602.7 1351.7 L599.8 1349.6 L600.6 1346.2 L603.5 1342.6 L608.8 1343.4 L612.4 1346.0 Z' fill='#cde1bb' opacity='0.7824178110418762'/><path d='M663.5 1530.8 L656.7 1534.0 L654.6 1539.1 L647.7 1539.6 L643.6 1535.3 L638.6 1530.8 L641.0 1524.9 L647.8 1522.1 L655.0 1521.7 L659.9 1525.8 Z' fill='#cde1bb' opacity='0.8759656626622647'/><path d='M905.8 1548.9 L903.6 1550.2 L902.2 1550.9 L900.5 1550.9 L899.5 1550.0 L897.4 1548.9 L897.4 1546.6 L900.0 1545.6 L902.3 1546.6 L904.7 1547.0 Z' fill='#cde1bb' opacity='0.8111734894044474'/><path d='M322.6 1556.8 L322.1 1559.3 L319.7 1561.7 L316.8 1559.2 L312.5 1559.8 L314.3 1556.8 L314.6 1554.9 L316.0 1552.5 L319.1 1553.4 L321.3 1554.7 Z' fill='#cde1bb' opacity='0.620685081497171'/><path d='M765.4 1277.0 L764.1 1278.0 L763.5 1279.7 L761.3 1279.9 L759.7 1278.7 L759.5 1277.0 L759.8 1275.5 L761.4 1274.4 L763.2 1275.2 L765.8 1275.1 Z' fill='#cde1bb' opacity='0.7766342483000481'/><path d='M596.1 1723.6 L595.9 1727.4 L591.9 1729.8 L587.3 1728.7 L584.5 1726.4 L584.3 1723.6 L584.2 1720.6 L587.7 1719.2 L591.0 1719.6 L596.2 1719.6 Z' fill='#e6eede' opacity='0.5534972978571915'/><path d='M751.8 1467.7 L752.2 1471.9 L748.1 1475.2 L741.4 1476.7 L736.8 1472.5 L733.5 1467.7 L735.9 1462.4 L742.0 1460.1 L748.1 1460.1 L749.4 1465.2 Z' fill='#cde1bb' opacity='0.6688563817788719'/><path d='M922.9 1557.2 L923.1 1561.0 L918.0 1560.9 L915.4 1559.9 L913.2 1559.2 L911.5 1557.2 L910.4 1553.6 L914.3 1551.8 L918.2 1553.0 L919.6 1555.4 Z' fill='#cde1bb' opacity='0.6572765439590946'/><path d='M741.9 1360.6 L741.6 1362.6 L739.5 1363.9 L737.2 1362.8 L735.1 1362.3 L735.3 1360.6 L735.0 1358.7 L736.9 1357.5 L738.8 1358.9 L739.7 1359.7 Z' fill='#cde1bb' opacity='0.9181048148690152'/><path d='M497.0 1536.3 L495.6 1537.7 L493.8 1537.7 L492.0 1539.3 L490.7 1537.7 L491.3 1536.3 L491.2 1535.1 L492.2 1533.7 L494.5 1533.2 L495.7 1534.9 Z' fill='#cde1bb' opacity='0.8906091760144539'/><path d='M854.4 1358.9 L856.4 1364.0 L849.9 1364.1 L845.5 1364.6 L840.0 1363.4 L837.1 1358.9 L838.8 1353.7 L844.2 1350.0 L850.7 1351.7 L852.9 1355.9 Z' fill='#cde1bb' opacity='0.7339137998089844'/><path d='M925.8 1287.9 L922.4 1290.1 L920.7 1293.1 L916.4 1293.3 L913.8 1290.7 L914.4 1287.9 L912.0 1284.1 L916.6 1282.9 L919.8 1285.0 L922.4 1285.7 Z' fill='#cde1bb' opacity='0.8355135258410968'/><path d='M1147.3 1369.7 L1146.0 1374.8 L1138.9 1373.9 L1135.4 1374.2 L1127.0 1375.6 L1125.9 1369.7 L1132.8 1367.1 L1135.5 1365.4 L1139.4 1364.3 L1147.2 1363.9 Z' fill='#cde1bb' opacity='0.8883380366747251'/><path d='M479.6 1639.9 L478.4 1644.4 L473.7 1647.3 L469.4 1643.0 L463.1 1644.3 L463.1 1639.9 L463.3 1635.6 L468.4 1634.4 L473.1 1633.8 L477.0 1636.2 Z' fill='#e6eede' opacity='0.5423182592088265'/><path d='M987.7 1299.1 L984.5 1301.0 L983.8 1305.7 L979.8 1302.3 L973.7 1303.4 L972.1 1299.1 L975.5 1295.8 L979.6 1295.3 L983.6 1292.9 L985.5 1296.5 Z' fill='#cde1bb' opacity='0.7018377897141764'/><path d='M781.1 1427.5 L774.6 1430.2 L772.3 1433.3 L767.8 1433.0 L761.5 1432.4 L763.9 1427.5 L762.4 1423.1 L766.2 1418.3 L773.2 1419.5 L774.0 1425.1 Z' fill='#cde1bb' opacity='0.8974054501092097'/><path d='M820.7 1505.8 L820.5 1509.7 L816.1 1511.4 L811.5 1511.6 L807.2 1509.7 L806.0 1505.8 L808.0 1502.4 L812.7 1503.0 L816.0 1500.4 L820.3 1502.1 Z' fill='#cde1bb' opacity='0.8138571966519889'/><path d='M685.9 1673.1 L680.4 1676.9 L676.5 1679.6 L671.1 1679.9 L666.8 1677.2 L667.1 1673.1 L665.9 1668.5 L669.4 1662.1 L677.5 1664.2 L685.2 1666.5 Z' fill='#e6eede' opacity='0.6766955681307988'/><path d='M946.9 1390.9 L948.7 1394.7 L944.7 1397.2 L940.5 1394.9 L936.0 1394.5 L934.5 1390.9 L935.5 1387.1 L939.7 1385.1 L944.1 1386.1 L945.4 1389.0 Z' fill='#cde1bb' opacity='0.6073239674363247'/><path d='M1010.8 1409.3 L1006.1 1411.3 L1004.6 1413.9 L1000.7 1414.3 L997.9 1412.2 L994.8 1409.3 L998.4 1406.8 L1000.3 1403.4 L1004.8 1404.2 L1009.3 1405.5 Z' fill='#cde1bb' opacity='0.7880481283564132'/><path d='M397.6 1362.0 L399.1 1367.6 L393.9 1372.7 L387.4 1367.5 L382.0 1366.5 L378.1 1362.0 L380.2 1356.6 L385.9 1352.9 L393.3 1352.8 L396.0 1358.3 Z' fill='#cde1bb' opacity='0.6047711808234701'/><path d='M372.1 1294.1 L372.8 1296.8 L370.7 1300.2 L366.1 1299.1 L364.4 1296.3 L361.1 1294.1 L364.8 1292.1 L367.0 1291.2 L369.7 1290.4 L372.5 1291.6 Z' fill='#cde1bb' opacity='0.649781240858545'/><path d='M892.7 1470.7 L893.3 1472.9 L890.2 1472.4 L888.0 1474.3 L887.2 1472.0 L884.7 1470.7 L885.7 1468.5 L888.2 1467.4 L890.4 1468.4 L891.2 1469.6 Z' fill='#cde1bb' opacity='0.926308240452567'/><path d='M482.6 1685.6 L478.1 1688.4 L475.0 1690.0 L471.5 1689.7 L463.8 1691.0 L465.7 1685.6 L465.6 1681.2 L470.5 1678.9 L475.1 1680.7 L477.4 1683.1 Z' fill='#e6eede' opacity='0.7347927907466036'/><path d='M339.6 1661.1 L333.1 1664.5 L331.3 1671.0 L324.7 1667.4 L319.8 1665.5 L316.6 1661.1 L321.6 1657.8 L324.7 1654.9 L331.3 1651.2 L334.2 1657.1 Z' fill='#e6eede' opacity='0.6454533205693403'/><path d='M636.7 1620.1 L635.7 1622.2 L633.9 1624.3 L630.7 1623.8 L627.0 1623.2 L629.1 1620.1 L627.6 1617.5 L630.2 1615.3 L633.4 1617.2 L634.6 1618.7 Z' fill='#e6eede' opacity='0.5876078926403688'/><path d='M685.9 1316.9 L686.9 1320.8 L682.1 1321.6 L678.2 1321.9 L673.7 1320.7 L674.4 1316.9 L675.8 1314.4 L677.9 1311.2 L682.7 1310.7 L689.5 1311.5 Z' fill='#cde1bb' opacity='0.6328067875775893'/><path d='M788.6 1296.2 L787.0 1301.9 L780.7 1304.8 L775.4 1300.7 L767.5 1301.8 L768.3 1296.2 L771.7 1293.0 L775.3 1291.4 L780.7 1287.5 L782.5 1293.1 Z' fill='#cde1bb' opacity='0.797005052968113'/><path d='M704.1 1604.5 L705.2 1608.1 L700.8 1609.0 L697.6 1608.0 L691.3 1609.0 L692.3 1604.5 L695.0 1602.1 L697.8 1601.4 L701.4 1598.6 L704.6 1601.2 Z' fill='#e6eede' opacity='0.6271277132568698'/><path d='M767.8 1372.2 L770.2 1376.7 L765.7 1380.2 L759.7 1379.2 L754.4 1376.8 L755.7 1372.2 L754.2 1367.4 L760.8 1367.9 L764.3 1367.7 L769.2 1368.3 Z' fill='#cde1bb' opacity='0.8278976803837036'/><path d='M1068.5 1301.1 L1068.1 1302.2 L1067.4 1304.1 L1065.1 1303.7 L1062.6 1303.2 L1063.2 1301.1 L1063.2 1299.3 L1065.6 1299.6 L1067.6 1297.7 L1068.2 1299.9 Z' fill='#cde1bb' opacity='0.7536554276303127'/><path d='M503.4 1652.4 L507.2 1659.4 L498.0 1659.3 L492.2 1659.9 L487.7 1656.8 L483.0 1652.4 L490.0 1649.4 L492.3 1645.1 L497.6 1646.6 L506.2 1646.0 Z' fill='#e6eede' opacity='0.6826313593118783'/><path d='M322.7 1546.6 L318.7 1548.8 L316.6 1550.5 L313.7 1550.0 L307.8 1550.9 L310.5 1546.6 L311.4 1544.5 L313.0 1541.6 L317.2 1541.4 L322.0 1542.6 Z' fill='#cde1bb' opacity='0.7966559647899265'/><path d='M369.3 1372.3 L370.4 1376.9 L365.0 1378.7 L359.3 1379.7 L353.9 1377.1 L356.3 1372.3 L354.0 1367.4 L360.2 1367.0 L363.8 1368.7 L370.5 1367.5 Z' fill='#cde1bb' opacity='0.758346523541999'/><path d='M408.5 1271.0 L405.6 1273.3 L403.3 1275.0 L399.6 1276.1 L396.4 1274.1 L395.8 1271.0 L397.4 1268.5 L400.6 1268.3 L402.9 1267.9 L406.4 1268.2 Z' fill='#cde1bb' opacity='0.9384127260097201'/><path d='M1124.1 1352.8 L1126.1 1358.2 L1119.3 1358.8 L1114.5 1358.7 L1109.7 1357.0 L1106.8 1352.8 L1107.6 1347.5 L1114.9 1348.0 L1120.5 1343.8 L1125.7 1347.7 Z' fill='#cde1bb' opacity='0.7996102626152157'/><path d='M913.9 1565.3 L913.7 1569.9 L910.3 1576.3 L903.4 1571.3 L898.0 1569.8 L891.4 1565.3 L894.6 1558.8 L903.3 1559.2 L909.7 1555.8 L913.2 1561.0 Z' fill='#e6eede' opacity='0.8142763196564458'/><path d='M871.8 1621.1 L870.2 1622.6 L868.8 1623.8 L866.2 1624.7 L863.8 1623.3 L864.3 1621.1 L863.2 1618.5 L865.5 1615.7 L869.4 1616.9 L871.3 1619.0 Z' fill='#e6eede' opacity='0.585977252956972'/><path d='M909.6 1467.1 L905.8 1469.3 L903.7 1471.6 L899.0 1474.1 L895.3 1470.9 L893.3 1467.1 L895.8 1463.5 L899.6 1461.4 L904.3 1461.1 L909.4 1462.7 Z' fill='#cde1bb' opacity='0.6061646851655644'/><path d='M485.6 1269.8 L484.2 1272.2 L482.1 1274.5 L477.1 1277.4 L476.1 1272.2 L473.5 1269.8 L474.6 1266.6 L477.0 1262.1 L483.9 1260.6 L484.3 1267.4 Z' fill='#cde1bb' opacity='0.6953533955676146'/><path d='M444.1 1419.5 L442.2 1421.5 L439.8 1422.1 L437.6 1422.2 L435.6 1421.3 L435.2 1419.5 L433.9 1416.7 L436.8 1414.7 L440.1 1416.2 L444.2 1416.3 Z' fill='#cde1bb' opacity='0.7460853637131503'/><path d='M926.8 1422.4 L924.4 1423.7 L923.2 1424.8 L920.6 1426.4 L919.0 1424.3 L917.0 1422.4 L919.4 1420.8 L920.5 1418.2 L923.9 1418.2 L924.5 1421.1 Z' fill='#cde1bb' opacity='0.9251396674390853'/><path d='M989.3 1632.5 L987.3 1633.9 L985.9 1634.9 L983.5 1635.9 L982.6 1633.8 L980.2 1632.5 L982.2 1630.9 L983.8 1629.9 L986.1 1629.5 L988.4 1630.4 Z' fill='#e6eede' opacity='0.7653819396254153'/><path d='M542.8 1336.3 L542.2 1342.1 L535.7 1344.8 L529.9 1342.0 L526.1 1339.9 L521.6 1336.3 L527.7 1333.7 L529.2 1328.9 L534.0 1331.9 L536.7 1333.7 Z' fill='#cde1bb' opacity='0.8894470054390622'/><path d='M1049.9 1478.5 L1048.7 1480.2 L1047.4 1482.0 L1044.7 1481.6 L1042.1 1480.8 L1043.3 1478.5 L1043.9 1477.4 L1044.8 1475.9 L1047.1 1475.6 L1048.4 1477.1 Z' fill='#cde1bb' opacity='0.7773794267432927'/><path d='M880.2 1366.5 L876.8 1369.3 L874.0 1371.3 L869.2 1373.3 L864.6 1370.7 L864.7 1366.5 L868.4 1364.4 L870.0 1361.6 L874.3 1360.8 L876.4 1363.9 Z' fill='#cde1bb' opacity='0.8493175685140404'/><path d='M570.7 1294.8 L571.4 1298.6 L566.7 1299.3 L561.0 1304.3 L560.4 1297.4 L557.5 1294.8 L556.0 1289.7 L563.0 1290.1 L566.7 1290.3 L569.5 1292.1 Z' fill='#cde1bb' opacity='0.7530737365181148'/><path d='M673.0 1420.7 L672.8 1422.5 L671.5 1425.2 L667.7 1425.6 L664.5 1423.8 L665.0 1420.7 L664.3 1417.6 L668.1 1416.7 L670.9 1417.7 L673.5 1418.5 Z' fill='#cde1bb' opacity='0.9401123575357768'/><path d='M914.9 1605.7 L916.6 1608.7 L912.9 1609.0 L910.4 1608.7 L908.4 1607.6 L906.8 1605.7 L905.9 1602.4 L910.5 1603.1 L913.6 1600.8 L915.0 1603.7 Z' fill='#e6eede' opacity='0.8832971021266156'/><path d='M1045.9 1531.4 L1044.0 1537.1 L1036.4 1537.1 L1030.5 1540.1 L1025.0 1536.7 L1027.0 1531.4 L1027.7 1527.7 L1031.6 1525.4 L1036.5 1525.5 L1040.5 1527.6 Z' fill='#cde1bb' opacity='0.8122843199504605'/><path d='M438.2 1514.7 L436.0 1520.3 L430.0 1524.0 L424.2 1519.6 L415.9 1520.7 L415.0 1514.7 L417.6 1509.7 L423.0 1506.7 L428.0 1510.3 L436.1 1508.9 Z' fill='#cde1bb' opacity='0.7208473683413875'/><path d='M783.2 1475.7 L776.9 1478.9 L773.8 1481.6 L769.2 1481.1 L766.5 1478.5 L763.7 1475.7 L767.0 1473.2 L767.9 1467.1 L773.5 1470.4 L776.0 1473.0 Z' fill='#cde1bb' opacity='0.8737827670731859'/><path d='M379.9 1609.0 L378.9 1613.5 L373.1 1613.4 L368.9 1614.8 L363.9 1613.3 L364.6 1609.0 L363.9 1604.7 L368.7 1602.8 L373.1 1604.7 L378.6 1604.8 Z' fill='#e6eede' opacity='0.6607377806637921'/><path d='M1012.9 1505.1 L1009.7 1507.3 L1007.6 1509.2 L1004.2 1509.2 L998.9 1509.1 L998.7 1505.1 L1002.5 1503.1 L1003.3 1498.7 L1007.0 1502.2 L1011.3 1501.9 Z' fill='#cde1bb' opacity='0.9081616679915587'/><path d='M978.9 1429.4 L981.6 1434.8 L976.1 1438.8 L969.7 1435.7 L965.9 1433.1 L962.0 1429.4 L962.7 1423.8 L970.2 1424.4 L974.5 1423.9 L978.3 1425.9 Z' fill='#cde1bb' opacity='0.8806034372763603'/><path d='M929.8 1350.1 L932.7 1354.5 L928.0 1357.5 L922.8 1355.5 L918.1 1354.1 L920.0 1350.1 L917.6 1345.8 L922.8 1344.7 L927.6 1343.7 L932.3 1345.9 Z' fill='#cde1bb' opacity='0.8339551311354709'/><path d='M621.3 1694.5 L620.3 1696.8 L617.9 1698.4 L615.2 1697.3 L612.2 1696.9 L612.4 1694.5 L614.2 1693.3 L615.0 1691.3 L617.8 1690.9 L619.1 1692.8 Z' fill='#e6eede' opacity='0.7009611929987759'/><path d='M822.7 1383.9 L819.9 1385.8 L817.8 1386.6 L815.0 1388.0 L810.7 1387.3 L809.1 1383.9 L812.7 1381.6 L815.1 1380.1 L818.6 1379.1 L820.3 1381.7 Z' fill='#cde1bb' opacity='0.7796284557876546'/><path d='M826.7 1685.2 L824.7 1689.5 L820.1 1692.1 L815.4 1690.0 L809.3 1689.9 L806.8 1685.2 L813.4 1682.9 L814.0 1677.1 L819.6 1679.6 L821.4 1682.8 Z' fill='#e6eede' opacity='0.7883166346246183'/><path d='M524.3 1355.7 L522.7 1357.8 L520.6 1359.3 L517.9 1358.7 L515.5 1357.9 L514.0 1355.7 L514.2 1352.8 L517.8 1352.3 L521.0 1351.1 L523.9 1353.0 Z' fill='#cde1bb' opacity='0.8163736481412751'/><path d='M710.4 1355.3 L711.6 1357.5 L709.5 1359.6 L706.6 1358.1 L704.8 1357.0 L703.9 1355.3 L704.8 1353.6 L706.3 1351.7 L708.9 1352.5 L710.1 1353.9 Z' fill='#cde1bb' opacity='0.6592166116946939'/><path d='M1043.5 1530.3 L1043.7 1535.3 L1039.1 1540.1 L1032.5 1537.0 L1027.9 1534.5 L1027.2 1530.3 L1027.1 1525.6 L1031.8 1522.1 L1038.7 1521.6 L1045.8 1524.1 Z' fill='#cde1bb' opacity='0.8549611782050173'/><path d='M656.3 1348.0 L657.1 1352.0 L653.3 1355.4 L647.3 1355.5 L643.2 1352.1 L637.1 1348.0 L643.3 1344.0 L647.2 1340.3 L654.5 1337.8 L659.3 1342.8 Z' fill='#cde1bb' opacity='0.8801730539010448'/><path d='M718.4 1418.2 L717.8 1421.4 L714.5 1423.5 L710.2 1423.4 L703.9 1423.1 L704.4 1418.2 L707.3 1415.3 L710.3 1413.2 L715.3 1410.8 L716.7 1415.6 Z' fill='#cde1bb' opacity='0.875086976215128'/><path d='M892.3 1273.0 L892.0 1274.2 L890.5 1274.6 L889.0 1275.1 L886.5 1274.9 L885.8 1273.0 L886.1 1270.8 L888.4 1269.4 L891.0 1270.2 L893.6 1270.8 Z' fill='#cde1bb' opacity='0.881951862567695'/><path d='M648.7 1306.3 L640.7 1308.9 L638.1 1310.5 L634.5 1310.9 L632.1 1308.8 L626.0 1306.3 L628.5 1301.7 L634.5 1301.8 L638.3 1301.5 L641.6 1303.3 Z' fill='#cde1bb' opacity='0.8089471589342598'/><path d='M652.9 1381.1 L646.8 1384.7 L643.0 1387.0 L638.3 1386.8 L633.2 1385.5 L628.0 1381.1 L635.3 1378.0 L637.3 1373.0 L644.4 1372.0 L645.8 1378.2 Z' fill='#cde1bb' opacity='0.9482126611147197'/><path d='M444.0 1344.6 L442.0 1349.4 L436.2 1351.0 L432.1 1348.3 L425.2 1349.5 L425.9 1344.6 L425.9 1340.1 L430.9 1337.9 L436.7 1337.1 L439.8 1341.0 Z' fill='#cde1bb' opacity='0.6016105031602751'/><path d='M833.8 1410.6 L832.6 1413.5 L829.5 1415.5 L825.3 1416.0 L822.8 1413.3 L823.3 1410.6 L822.6 1407.7 L826.3 1407.5 L829.2 1406.4 L830.5 1408.9 Z' fill='#cde1bb' opacity='0.9163235423999699'/><path d='M1043.3 1491.1 L1039.5 1496.9 L1031.8 1496.6 L1025.8 1500.5 L1020.9 1496.2 L1016.0 1491.1 L1020.8 1486.0 L1026.7 1483.9 L1033.9 1480.7 L1034.9 1488.0 Z' fill='#cde1bb' opacity='0.6290397049651603'/><path d='M966.1 1310.9 L966.1 1313.0 L963.4 1313.2 L961.0 1314.4 L958.9 1312.9 L959.9 1310.9 L959.3 1309.1 L961.0 1307.4 L963.3 1308.7 L966.0 1308.8 Z' fill='#cde1bb' opacity='0.9049433566807095'/><path d='M1116.6 1483.7 L1111.0 1486.2 L1110.4 1493.1 L1103.7 1490.6 L1098.0 1488.6 L1100.5 1483.7 L1098.6 1479.1 L1104.1 1477.7 L1108.7 1478.4 L1115.5 1478.5 Z' fill='#cde1bb' opacity='0.650713487595005'/><path d='M348.4 1486.1 L350.1 1490.4 L345.5 1493.1 L339.1 1494.7 L333.4 1491.4 L334.3 1486.1 L332.1 1480.0 L340.4 1480.7 L344.7 1481.0 L352.4 1480.4 Z' fill='#cde1bb' opacity='0.9126318265439282'/><path d='M422.5 1349.7 L419.4 1352.2 L417.1 1354.9 L413.6 1353.0 L408.9 1353.2 L410.7 1349.7 L408.9 1346.2 L413.1 1345.0 L417.4 1343.8 L420.5 1346.5 Z' fill='#cde1bb' opacity='0.6573280808868908'/><path d='M1124.3 1694.1 L1121.4 1697.0 L1118.3 1698.6 L1114.0 1700.4 L1109.7 1698.1 L1109.7 1694.1 L1110.5 1690.6 L1113.8 1687.4 L1119.7 1686.3 L1123.9 1689.9 Z' fill='#e6eede' opacity='0.721646294946243'/><path d='M1121.6 1721.4 L1121.2 1725.2 L1116.7 1726.4 L1113.2 1725.0 L1110.0 1724.2 L1109.4 1721.4 L1109.6 1718.5 L1112.0 1714.9 L1117.2 1715.3 L1123.3 1716.4 Z' fill='#e6eede' opacity='0.8867262850113453'/><path d='M877.3 1431.2 L879.1 1434.6 L874.2 1433.7 L872.2 1433.5 L868.6 1433.8 L869.1 1431.2 L868.8 1428.7 L872.0 1428.4 L875.2 1426.0 L878.0 1428.3 Z' fill='#cde1bb' opacity='0.9392344068617877'/><path d='M885.5 1596.0 L882.7 1597.6 L881.3 1599.2 L879.3 1597.8 L877.1 1597.7 L874.8 1596.0 L876.7 1594.0 L878.5 1592.2 L880.8 1594.2 L882.4 1594.6 Z' fill='#e6eede' opacity='0.6706186595188108'/><path d='M477.7 1651.6 L472.6 1656.5 L466.9 1658.3 L459.9 1662.5 L456.7 1656.1 L452.4 1651.6 L459.0 1648.6 L460.2 1641.7 L468.7 1640.7 L469.8 1648.4 Z' fill='#e6eede' opacity='0.6069808351560628'/><path d='M944.7 1389.1 L943.4 1393.0 L939.3 1395.4 L934.8 1394.0 L931.5 1392.2 L932.6 1389.1 L931.2 1385.9 L934.9 1384.5 L938.3 1385.3 L943.0 1385.5 Z' fill='#cde1bb' opacity='0.8316381872275944'/><path d='M532.6 1329.0 L529.8 1330.4 L528.7 1332.1 L526.1 1332.3 L523.9 1331.0 L523.6 1329.0 L524.0 1327.0 L526.7 1327.1 L528.2 1327.0 L530.6 1327.2 Z' fill='#cde1bb' opacity='0.8059865491755174'/><path d='M518.4 1616.4 L519.7 1620.7 L514.8 1622.9 L509.7 1622.6 L502.9 1621.8 L505.0 1616.4 L503.5 1611.3 L508.5 1607.2 L515.0 1609.5 L519.8 1611.9 Z' fill='#e6eede' opacity='0.5965902291941637'/><path d='M1087.6 1545.0 L1086.4 1546.1 L1085.8 1548.0 L1083.6 1547.5 L1082.2 1546.4 L1081.0 1545.0 L1080.7 1542.8 L1083.7 1542.9 L1085.3 1543.1 L1086.9 1543.6 Z' fill='#cde1bb' opacity='0.6287582015312703'/><path d='M676.7 1340.3 L674.5 1341.6 L673.6 1343.6 L671.5 1342.2 L669.1 1342.2 L668.9 1340.3 L670.1 1339.1 L670.8 1336.8 L673.7 1336.8 L675.4 1338.5 Z' fill='#cde1bb' opacity='0.8966234516890416'/><path d='M323.1 1366.9 L323.0 1369.9 L319.1 1369.8 L316.8 1369.6 L313.7 1369.3 L314.4 1366.9 L314.5 1364.9 L316.3 1362.9 L319.2 1363.6 L320.5 1365.4 Z' fill='#cde1bb' opacity='0.6307336273615'/><path d='M1089.2 1309.5 L1086.9 1312.6 L1084.1 1315.9 L1079.8 1313.7 L1074.0 1313.8 L1073.0 1309.5 L1076.2 1306.4 L1080.0 1305.9 L1083.5 1304.4 L1085.2 1307.3 Z' fill='#cde1bb' opacity='0.6679065710657761'/><path d='M986.3 1315.5 L984.7 1316.9 L983.5 1318.5 L981.3 1317.8 L979.0 1317.4 L979.5 1315.5 L978.4 1313.3 L981.3 1313.1 L982.9 1314.0 L984.1 1314.5 Z' fill='#cde1bb' opacity='0.804050066560122'/><path d='M326.2 1282.6 L328.5 1288.7 L321.6 1291.7 L314.0 1292.2 L309.5 1287.5 L304.4 1282.6 L309.1 1277.4 L313.8 1272.4 L321.1 1274.8 L323.8 1279.2 Z' fill='#cde1bb' opacity='0.9487233534943826'/><path d='M753.5 1488.4 L750.8 1490.6 L748.6 1492.1 L745.4 1492.9 L742.4 1491.2 L741.7 1488.4 L741.8 1485.3 L745.8 1485.2 L749.0 1483.9 L751.0 1486.2 Z' fill='#cde1bb' opacity='0.7786738667315565'/><path d='M748.3 1438.1 L745.4 1440.9 L742.8 1443.6 L739.2 1441.6 L735.9 1440.8 L735.2 1438.1 L736.5 1435.7 L738.9 1434.0 L742.9 1432.5 L746.5 1434.7 Z' fill='#cde1bb' opacity='0.848036872306053'/><path d='M900.8 1390.2 L897.5 1393.0 L894.8 1395.3 L890.3 1396.3 L886.9 1393.6 L888.4 1390.2 L888.8 1387.9 L891.6 1387.3 L895.0 1384.8 L898.4 1387.0 Z' fill='#cde1bb' opacity='0.611326951184217'/><path d='M730.2 1435.3 L728.3 1439.4 L724.0 1442.0 L719.3 1440.2 L716.2 1438.3 L715.6 1435.3 L713.7 1430.9 L719.7 1431.6 L722.7 1431.7 L725.7 1432.7 Z' fill='#cde1bb' opacity='0.849220821975909'/><path d='M648.9 1540.9 L647.6 1541.8 L647.0 1543.0 L644.9 1543.8 L643.9 1542.2 L642.5 1540.9 L643.3 1539.3 L645.4 1539.2 L646.7 1539.5 L649.0 1539.2 Z' fill='#cde1bb' opacity='0.7365195063132594'/><path d='M831.5 1400.1 L832.3 1404.9 L827.2 1407.8 L821.5 1406.3 L819.3 1402.8 L815.9 1400.1 L815.4 1395.0 L820.8 1392.2 L827.0 1392.7 L829.3 1397.0 Z' fill='#cde1bb' opacity='0.9182447026241201'/><path d='M496.1 1408.3 L498.8 1412.1 L493.6 1411.7 L489.9 1414.0 L488.6 1410.4 L486.0 1408.3 L488.0 1405.8 L491.1 1405.6 L494.5 1402.8 L498.1 1404.8 Z' fill='#cde1bb' opacity='0.9158067947617555'/><path d='M1143.2 1288.2 L1142.3 1291.1 L1138.9 1291.9 L1136.0 1291.5 L1132.6 1291.0 L1134.2 1288.2 L1134.3 1286.4 L1135.6 1283.8 L1138.8 1284.8 L1142.8 1285.1 Z' fill='#cde1bb' opacity='0.8187283513048025'/><path d='M392.6 1478.6 L392.8 1479.8 L391.6 1480.7 L389.8 1480.9 L388.7 1479.7 L387.2 1478.6 L388.2 1477.2 L389.4 1475.4 L391.3 1476.9 L393.1 1477.2 Z' fill='#cde1bb' opacity='0.6327266228701772'/><path d='M628.8 1316.2 L630.1 1320.5 L624.6 1320.9 L620.7 1321.3 L614.8 1320.8 L616.5 1316.2 L617.5 1313.2 L621.1 1312.4 L625.2 1310.1 L629.2 1312.5 Z' fill='#cde1bb' opacity='0.7146476406465815'/><path d='M698.4 1452.4 L693.4 1456.2 L690.2 1460.7 L685.1 1456.6 L681.2 1455.7 L674.2 1452.4 L678.4 1447.5 L683.6 1444.5 L689.6 1445.6 L694.0 1448.3 Z' fill='#cde1bb' opacity='0.7600392472565829'/><path d='M896.0 1383.7 L896.4 1385.6 L894.1 1386.3 L891.8 1386.9 L890.8 1385.0 L889.1 1383.7 L889.5 1381.6 L892.2 1381.6 L894.1 1381.1 L896.8 1381.5 Z' fill='#cde1bb' opacity='0.8145672877851431'/><path d='M802.5 1366.6 L797.8 1370.5 L793.9 1373.4 L787.1 1376.6 L781.5 1372.2 L780.5 1366.6 L786.0 1363.7 L787.9 1358.8 L792.9 1362.3 L801.5 1360.6 Z' fill='#cde1bb' opacity='0.7983399245455598'/><path d='M756.2 1270.2 L754.1 1273.2 L751.4 1276.5 L747.3 1273.8 L741.9 1274.2 L743.3 1270.2 L745.7 1268.4 L747.1 1266.0 L750.1 1267.1 L752.1 1268.2 Z' fill='#cde1bb' opacity='0.8905683311754591'/><path d='M842.1 1319.2 L840.7 1322.5 L837.1 1324.5 L832.7 1324.9 L831.0 1321.6 L828.5 1319.2 L831.6 1317.2 L832.8 1313.8 L837.0 1314.2 L840.1 1316.3 Z' fill='#cde1bb' opacity='0.6975608535501865'/><path d='M982.4 1475.8 L980.6 1482.0 L972.4 1482.0 L966.2 1485.0 L962.3 1480.3 L962.0 1475.8 L963.5 1472.1 L965.5 1464.9 L972.8 1468.8 L978.4 1470.9 Z' fill='#cde1bb' opacity='0.6984077963587862'/><path d='M740.3 1275.2 L737.9 1278.3 L735.0 1281.0 L729.4 1283.1 L724.6 1279.9 L724.6 1275.2 L725.4 1271.0 L730.7 1270.5 L736.3 1266.2 L739.5 1271.2 Z' fill='#cde1bb' opacity='0.9065757769924685'/><path d='M748.2 1630.5 L741.9 1633.2 L739.4 1635.9 L734.2 1637.9 L730.3 1634.5 L729.4 1630.5 L729.7 1626.1 L735.2 1625.4 L739.8 1624.2 L741.3 1628.1 Z' fill='#e6eede' opacity='0.6413177149626204'/><path d='M1001.0 1466.8 L1001.9 1471.3 L997.4 1474.7 L991.9 1472.3 L987.8 1470.5 L980.7 1466.8 L986.6 1462.4 L991.9 1461.3 L996.5 1461.1 L1003.1 1461.6 Z' fill='#cde1bb' opacity='0.6661832984291339'/><path d='M481.4 1484.7 L476.2 1486.5 L475.9 1491.3 L471.7 1488.4 L470.0 1486.6 L465.4 1484.7 L467.7 1481.6 L471.2 1479.7 L474.7 1481.1 L479.6 1481.0 Z' fill='#cde1bb' opacity='0.7762968642275769'/><path d='M577.0 1602.4 L576.3 1606.0 L571.7 1606.1 L567.6 1608.9 L563.0 1606.6 L564.8 1602.4 L563.8 1598.7 L567.4 1595.5 L571.8 1598.6 L578.2 1597.8 Z' fill='#e6eede' opacity='0.7592883925043297'/><path d='M1042.6 1286.4 L1043.1 1288.1 L1041.1 1288.6 L1039.3 1288.7 L1037.4 1288.0 L1037.0 1286.4 L1036.6 1284.3 L1038.9 1283.1 L1041.0 1284.5 L1042.5 1285.1 Z' fill='#cde1bb' opacity='0.6884370933602111'/><path d='M333.6 1416.6 L326.9 1419.6 L323.4 1420.5 L318.6 1424.4 L315.5 1420.3 L310.4 1416.6 L315.6 1413.1 L319.6 1411.3 L323.4 1412.6 L331.1 1411.2 Z' fill='#cde1bb' opacity='0.873116022408569'/><path d='M750.4 1468.7 L746.9 1471.7 L744.2 1474.9 L738.0 1477.7 L735.0 1472.6 L731.5 1468.7 L734.1 1464.3 L739.0 1462.1 L744.6 1461.5 L747.3 1465.4 Z' fill='#cde1bb' opacity='0.8907877118525279'/><path d='M788.1 1666.8 L782.4 1668.5 L781.5 1672.0 L777.3 1672.0 L772.9 1670.6 L773.4 1666.8 L775.9 1664.8 L777.8 1662.9 L781.7 1661.3 L785.4 1663.3 Z' fill='#e6eede' opacity='0.8522510153976324'/><path d='M867.8 1273.0 L866.1 1274.8 L865.0 1277.8 L861.7 1276.5 L857.5 1276.2 L858.5 1273.0 L858.4 1270.4 L860.9 1267.8 L864.2 1270.2 L868.3 1270.0 Z' fill='#cde1bb' opacity='0.8090222558455483'/><path d='M378.0 1700.2 L378.1 1704.0 L374.4 1706.9 L369.2 1706.4 L366.9 1703.0 L362.8 1700.2 L365.8 1696.8 L367.9 1691.0 L374.1 1694.2 L378.4 1696.3 Z' fill='#e6eede' opacity='0.6474813363099285'/><path d='M948.6 1393.0 L946.3 1394.2 L945.3 1395.4 L943.1 1396.1 L942.1 1394.3 L942.0 1393.0 L941.6 1391.5 L943.3 1390.7 L945.7 1389.6 L947.9 1391.0 Z' fill='#cde1bb' opacity='0.7571362766764387'/><path d='M517.6 1524.8 L515.4 1526.1 L514.3 1527.5 L512.1 1527.7 L511.6 1525.8 L508.9 1524.8 L511.5 1523.8 L512.4 1522.8 L514.5 1521.9 L514.8 1523.9 Z' fill='#cde1bb' opacity='0.7555202188507624'/><path d='M630.1 1322.0 L629.4 1322.9 L628.4 1323.5 L627.1 1323.7 L625.2 1323.4 L625.6 1322.0 L624.6 1320.1 L626.9 1319.8 L628.5 1320.1 L629.7 1320.8 Z' fill='#cde1bb' opacity='0.6528899828070318'/><path d='M817.2 1666.1 L816.8 1668.4 L813.9 1668.6 L811.7 1669.2 L810.5 1667.5 L809.1 1666.1 L810.3 1664.6 L811.6 1662.8 L813.9 1663.6 L815.5 1664.6 Z' fill='#e6eede' opacity='0.7774243063177183'/><path d='M736.2 1369.7 L733.0 1372.6 L730.0 1374.6 L725.2 1376.7 L723.5 1372.4 L718.3 1369.7 L720.6 1365.4 L725.0 1362.3 L730.9 1362.5 L732.5 1367.2 Z' fill='#cde1bb' opacity='0.7763585228617703'/><path d='M1006.9 1548.7 L1002.5 1553.9 L995.6 1553.9 L989.2 1559.3 L987.2 1552.3 L985.0 1548.7 L984.0 1543.2 L991.0 1542.7 L996.7 1540.8 L1003.7 1542.8 Z' fill='#cde1bb' opacity='0.8266867458432867'/><path d='M402.9 1571.5 L398.3 1573.5 L396.5 1575.4 L391.9 1578.8 L389.8 1574.4 L388.4 1571.5 L389.8 1568.5 L392.4 1565.3 L397.5 1565.1 L401.2 1567.8 Z' fill='#e6eede' opacity='0.759781323458796'/><path d='M656.3 1528.9 L654.6 1531.5 L652.1 1533.6 L648.9 1532.2 L645.6 1531.6 L646.7 1528.9 L645.9 1526.4 L648.6 1524.9 L652.0 1524.3 L654.8 1526.2 Z' fill='#cde1bb' opacity='0.9322999618895593'/><path d='M722.8 1408.8 L719.4 1413.7 L713.0 1413.8 L709.0 1413.7 L703.2 1413.3 L704.1 1408.8 L704.6 1405.1 L709.1 1404.2 L713.0 1403.9 L719.7 1403.7 Z' fill='#cde1bb' opacity='0.8949621659843778'/><path d='M1027.9 1404.2 L1026.6 1406.7 L1023.3 1406.9 L1019.8 1410.2 L1017.9 1406.7 L1018.8 1404.2 L1015.5 1400.3 L1020.8 1400.7 L1023.7 1400.6 L1025.2 1402.5 Z' fill='#cde1bb' opacity='0.6042300021812811'/><path d='M749.7 1377.8 L746.1 1384.3 L737.1 1383.3 L730.7 1388.1 L729.9 1380.7 L722.6 1377.8 L724.3 1371.6 L731.2 1368.5 L738.3 1369.5 L745.6 1371.6 Z' fill='#cde1bb' opacity='0.7302827965532595'/><path d='M450.7 1515.0 L448.7 1518.0 L445.9 1520.7 L441.5 1520.1 L438.2 1518.1 L435.3 1515.0 L437.4 1511.4 L441.6 1510.1 L445.1 1511.1 L450.2 1511.1 Z' fill='#cde1bb' opacity='0.6669496143720743'/><path d='M633.6 1310.5 L631.9 1315.0 L627.7 1319.3 L620.9 1318.4 L617.6 1314.3 L616.0 1310.5 L615.8 1305.7 L621.9 1305.1 L625.9 1306.2 L631.6 1306.2 Z' fill='#cde1bb' opacity='0.9259576933837903'/><path d='M1068.0 1322.4 L1066.4 1327.0 L1060.7 1327.4 L1056.1 1328.9 L1052.6 1326.0 L1053.8 1322.4 L1051.0 1318.0 L1057.1 1318.7 L1060.0 1319.1 L1063.9 1319.4 Z' fill='#cde1bb' opacity='0.7170184106813793'/><path d='M343.1 1487.4 L340.1 1493.4 L333.2 1495.8 L327.3 1493.5 L322.8 1491.5 L319.5 1487.4 L322.1 1483.0 L326.2 1478.6 L333.0 1479.5 L336.9 1483.3 Z' fill='#cde1bb' opacity='0.7447740110098815'/><path d='M824.5 1728.4 L823.6 1730.1 L822.3 1732.6 L818.2 1734.2 L814.9 1731.6 L812.3 1728.4 L814.4 1724.8 L818.6 1723.5 L822.5 1723.5 L823.4 1726.7 Z' fill='#e6eede' opacity='0.5048168272579632'/><path d='M637.6 1385.0 L637.3 1386.7 L635.5 1387.5 L633.8 1386.8 L631.1 1387.0 L630.1 1385.0 L631.5 1383.3 L633.8 1383.3 L635.7 1382.2 L638.2 1382.9 Z' fill='#cde1bb' opacity='0.7898046365711664'/><path d='M1145.0 1617.2 L1147.8 1623.4 L1140.9 1626.7 L1133.0 1627.1 L1130.8 1620.8 L1126.6 1617.2 L1129.9 1613.0 L1134.5 1611.0 L1140.7 1608.1 L1145.8 1612.1 Z' fill='#e6eede' opacity='0.7660071509964115'/><path d='M1151.8 1276.4 L1148.2 1280.2 L1143.9 1281.8 L1139.2 1282.5 L1135.7 1279.9 L1133.2 1276.4 L1133.7 1271.7 L1140.4 1273.2 L1143.6 1271.7 L1149.4 1271.9 Z' fill='#cde1bb' opacity='0.8543842736862695'/><path d='M371.0 1632.0 L370.6 1635.5 L366.6 1636.8 L361.6 1639.3 L357.8 1636.0 L355.7 1632.0 L359.0 1628.7 L361.9 1625.3 L368.1 1623.4 L372.8 1627.3 Z' fill='#e6eede' opacity='0.8201278962568253'/><path d='M1115.5 1378.3 L1111.5 1380.3 L1109.9 1383.0 L1105.7 1383.9 L1101.4 1382.1 L1104.5 1378.3 L1104.1 1376.0 L1106.2 1373.8 L1110.5 1372.1 L1111.4 1376.3 Z' fill='#cde1bb' opacity='0.7211245313565477'/><path d='M1024.2 1448.4 L1021.4 1451.7 L1017.7 1453.7 L1012.9 1454.8 L1006.0 1453.9 L1004.7 1448.4 L1010.0 1445.1 L1011.6 1438.7 L1018.7 1440.6 L1021.3 1445.0 Z' fill='#cde1bb' opacity='0.6224881892222468'/><path d='M1006.5 1646.3 L1003.4 1649.1 L1002.7 1656.5 L994.5 1656.2 L993.1 1649.5 L986.0 1646.3 L988.4 1640.3 L995.1 1637.6 L1002.6 1636.3 L1010.3 1639.5 Z' fill='#e6eede' opacity='0.8241483041859656'/><path d='M1025.6 1527.6 L1027.4 1530.7 L1024.2 1532.6 L1021.0 1530.6 L1017.6 1530.3 L1016.6 1527.6 L1019.5 1526.1 L1020.4 1523.0 L1024.1 1523.1 L1025.6 1525.7 Z' fill='#cde1bb' opacity='0.7899760999844235'/><path d='M709.5 1643.7 L706.3 1645.2 L704.7 1645.8 L702.2 1647.7 L701.5 1645.1 L698.9 1643.7 L701.5 1642.4 L702.8 1641.1 L705.3 1640.0 L708.4 1641.1 Z' fill='#e6eede' opacity='0.6396014553367141'/><path d='M662.8 1472.8 L661.2 1476.0 L658.0 1478.1 L654.1 1477.2 L650.6 1475.9 L652.0 1472.8 L651.8 1470.5 L654.5 1469.3 L657.3 1469.4 L661.3 1469.7 Z' fill='#cde1bb' opacity='0.6847191285766768'/><path d='M502.8 1414.8 L500.4 1418.9 L497.4 1424.7 L489.3 1424.8 L485.9 1419.1 L483.2 1414.8 L483.2 1408.9 L491.0 1409.0 L495.7 1409.0 L498.5 1411.8 Z' fill='#cde1bb' opacity='0.8234705055386016'/><path d='M739.7 1621.8 L738.0 1624.6 L735.8 1628.3 L730.5 1628.5 L728.4 1624.6 L728.7 1621.8 L727.2 1618.3 L730.7 1615.7 L736.0 1615.0 L739.3 1618.3 Z' fill='#e6eede' opacity='0.8962564408961777'/><path d='M580.0 1503.4 L578.3 1507.4 L574.0 1510.0 L569.4 1508.2 L564.1 1507.6 L566.9 1503.4 L564.3 1499.3 L569.1 1497.9 L573.9 1497.0 L576.1 1500.6 Z' fill='#cde1bb' opacity='0.763848653440984'/><path d='M669.6 1354.6 L662.8 1357.7 L659.9 1360.5 L655.0 1360.7 L650.1 1358.9 L646.0 1354.6 L647.9 1349.1 L654.5 1347.4 L659.8 1348.8 L662.1 1351.9 Z' fill='#cde1bb' opacity='0.6311507923374247'/><path d='M618.0 1458.1 L615.1 1462.6 L609.9 1464.3 L604.7 1464.7 L599.2 1462.9 L597.6 1458.1 L595.8 1451.4 L604.1 1450.0 L609.8 1452.3 L612.6 1455.1 Z' fill='#cde1bb' opacity='0.8068411840314891'/><path d='M686.7 1513.9 L686.0 1515.7 L683.8 1516.2 L681.5 1517.3 L679.5 1515.9 L680.2 1513.9 L681.2 1512.9 L681.8 1511.3 L684.1 1511.1 L685.0 1512.7 Z' fill='#cde1bb' opacity='0.6231683325803502'/><path d='M358.5 1490.4 L358.1 1494.3 L353.5 1495.5 L349.5 1495.2 L346.3 1493.3 L340.5 1490.4 L344.7 1486.5 L348.3 1482.6 L353.8 1484.6 L360.2 1485.2 Z' fill='#cde1bb' opacity='0.8189328175366238'/><path d='M407.4 1419.1 L408.4 1424.9 L402.0 1428.0 L394.9 1427.6 L392.0 1422.8 L391.0 1419.1 L389.4 1413.8 L395.9 1413.1 L401.8 1410.5 L405.1 1415.2 Z' fill='#cde1bb' opacity='0.604511996755952'/><path d='M332.3 1672.7 L328.3 1675.6 L324.9 1676.9 L320.3 1679.7 L316.9 1676.3 L314.1 1672.7 L317.2 1669.2 L321.8 1669.2 L326.0 1665.7 L327.8 1670.0 Z' fill='#e6eede' opacity='0.6553099353026681'/><path d='M717.1 1263.1 L714.3 1266.7 L711.1 1270.4 L705.2 1270.1 L703.1 1265.9 L699.7 1263.1 L701.0 1258.9 L705.1 1255.7 L709.9 1258.5 L713.6 1259.9 Z' fill='#cde1bb' opacity='0.8674616902912169'/><path d='M606.9 1307.6 L609.0 1312.5 L602.5 1312.1 L597.5 1315.5 L595.8 1310.5 L595.0 1307.6 L595.2 1304.4 L598.0 1301.0 L602.8 1302.3 L609.9 1302.3 Z' fill='#cde1bb' opacity='0.8021593283963437'/><path d='M1103.5 1395.2 L1106.1 1400.6 L1100.4 1404.0 L1095.3 1398.9 L1091.1 1398.6 L1089.8 1395.2 L1091.8 1392.3 L1094.4 1389.2 L1100.3 1386.7 L1100.9 1392.8 Z' fill='#cde1bb' opacity='0.7964020860959776'/><path d='M1018.9 1407.1 L1016.8 1410.3 L1014.1 1413.8 L1009.3 1412.3 L1005.5 1410.5 L1003.5 1407.1 L1002.8 1402.2 L1008.4 1399.9 L1013.9 1400.8 L1019.6 1402.4 Z' fill='#cde1bb' opacity='0.6953105382477482'/><path d='M717.7 1416.8 L722.0 1423.0 L715.2 1426.7 L709.3 1421.3 L701.9 1422.2 L703.5 1416.8 L703.0 1412.0 L707.3 1407.2 L713.8 1410.3 L719.1 1412.2 Z' fill='#cde1bb' opacity='0.8129162985191575'/><path d='M676.2 1721.8 L674.0 1724.6 L671.1 1726.5 L666.5 1728.6 L664.2 1724.8 L658.5 1721.8 L664.6 1719.2 L666.3 1714.6 L672.7 1713.3 L674.0 1719.0 Z' fill='#e6eede' opacity='0.5164733114406895'/><path d='M1106.1 1420.7 L1102.8 1427.2 L1094.1 1426.6 L1088.3 1428.9 L1080.2 1427.4 L1084.6 1420.7 L1080.8 1414.4 L1087.7 1411.0 L1095.5 1411.1 L1100.8 1415.4 Z' fill='#cde1bb' opacity='0.7203530315830611'/><path d='M405.9 1710.6 L406.8 1715.5 L400.8 1717.0 L394.8 1719.0 L393.7 1713.2 L385.7 1710.6 L391.5 1706.7 L394.7 1701.8 L401.0 1703.8 L407.6 1705.1 Z' fill='#e6eede' opacity='0.789292140729172'/><path d='M574.6 1517.5 L572.1 1521.1 L567.8 1522.3 L562.9 1524.7 L558.3 1521.8 L556.5 1517.5 L562.3 1515.4 L563.4 1511.5 L568.3 1511.4 L571.8 1514.0 Z' fill='#cde1bb' opacity='0.6277146206906996'/><path d='M941.9 1360.9 L936.9 1364.1 L934.2 1367.8 L927.1 1371.2 L926.7 1363.6 L922.1 1360.9 L926.3 1357.9 L927.0 1350.2 L933.4 1355.8 L942.4 1354.4 Z' fill='#cde1bb' opacity='0.8326850852827884'/><path d='M1024.3 1604.7 L1020.7 1607.5 L1018.5 1611.2 L1012.6 1612.8 L1011.1 1607.4 L1004.7 1604.7 L1009.5 1600.9 L1013.8 1599.5 L1017.9 1599.6 L1022.5 1600.8 Z' fill='#e6eede' opacity='0.6971905880305838'/><path d='M499.2 1270.6 L496.9 1272.1 L496.5 1276.1 L492.6 1274.6 L488.5 1273.9 L487.9 1270.6 L489.0 1267.5 L492.2 1265.6 L495.6 1267.1 L499.4 1267.5 Z' fill='#cde1bb' opacity='0.6433902387803528'/><path d='M974.3 1341.2 L966.3 1344.2 L963.4 1346.5 L959.2 1345.9 L952.2 1346.4 L949.9 1341.2 L952.7 1336.2 L957.6 1332.4 L964.1 1334.0 L969.1 1336.6 Z' fill='#cde1bb' opacity='0.8815941957156864'/><path d='M798.6 1323.1 L796.5 1325.6 L793.8 1327.4 L790.2 1327.5 L787.5 1325.7 L783.3 1323.1 L788.7 1321.1 L790.9 1320.3 L794.3 1317.4 L796.6 1320.4 Z' fill='#cde1bb' opacity='0.7512956837866859'/><path d='M695.3 1539.3 L694.3 1542.4 L690.2 1542.3 L687.5 1542.9 L685.7 1541.2 L685.9 1539.3 L683.8 1536.3 L687.1 1534.6 L690.1 1536.4 L692.1 1537.5 Z' fill='#cde1bb' opacity='0.6053738352132335'/><path d='M644.3 1371.9 L646.2 1376.8 L642.0 1382.2 L634.2 1380.6 L630.2 1376.3 L631.0 1371.9 L632.9 1369.1 L634.2 1363.1 L639.7 1367.2 L647.6 1366.2 Z' fill='#cde1bb' opacity='0.9002886453859469'/><path d='M1098.0 1550.9 L1100.3 1555.7 L1094.8 1557.7 L1090.5 1554.8 L1087.4 1553.6 L1085.5 1550.9 L1085.6 1547.1 L1090.1 1546.0 L1094.3 1545.4 L1099.7 1546.4 Z' fill='#cde1bb' opacity='0.7473286766046537'/><path d='M826.7 1314.6 L823.8 1316.8 L821.6 1318.6 L817.4 1320.8 L815.4 1317.2 L813.4 1314.6 L813.0 1310.5 L816.7 1306.6 L822.4 1308.6 L824.9 1311.7 Z' fill='#cde1bb' opacity='0.8233568793168676'/><path d='M452.3 1385.2 L450.5 1388.4 L447.3 1391.0 L442.3 1391.7 L437.6 1389.5 L432.8 1385.2 L437.5 1380.9 L441.9 1377.8 L447.7 1378.3 L454.9 1379.4 Z' fill='#cde1bb' opacity='0.6578952059567481'/><path d='M886.7 1441.0 L887.0 1443.2 L884.4 1443.9 L881.9 1444.1 L880.7 1442.4 L880.3 1441.0 L880.4 1439.3 L881.7 1437.4 L884.5 1437.8 L885.1 1439.9 Z' fill='#cde1bb' opacity='0.9098682323078198'/><path d='M913.5 1465.2 L911.4 1467.6 L908.5 1468.4 L906.0 1468.1 L903.9 1467.1 L903.1 1465.2 L903.7 1463.1 L905.3 1460.4 L909.1 1460.5 L911.9 1462.4 Z' fill='#cde1bb' opacity='0.674066743166581'/><path d='M1055.4 1568.3 L1055.5 1570.2 L1053.8 1572.1 L1051.0 1571.5 L1049.4 1570.0 L1049.3 1568.3 L1047.9 1565.7 L1050.9 1564.7 L1053.3 1565.8 L1054.2 1567.2 Z' fill='#e6eede' opacity='0.5657217698285799'/><path d='M1062.0 1401.6 L1059.7 1404.0 L1057.2 1405.5 L1054.5 1404.4 L1052.7 1403.3 L1052.7 1401.6 L1050.5 1398.6 L1054.8 1399.5 L1057.2 1397.8 L1058.8 1399.7 Z' fill='#cde1bb' opacity='0.8819964691867734'/><path d='M869.5 1501.4 L868.6 1505.0 L865.5 1508.9 L859.5 1508.6 L854.2 1506.2 L850.8 1501.4 L852.0 1495.3 L859.5 1494.2 L864.3 1496.8 L872.5 1495.5 Z' fill='#cde1bb' opacity='0.6387943353018127'/><path d='M335.5 1411.4 L335.4 1414.3 L333.3 1418.9 L327.6 1418.1 L326.2 1413.8 L321.5 1411.4 L322.6 1406.9 L328.1 1406.0 L332.0 1407.3 L337.3 1407.3 Z' fill='#cde1bb' opacity='0.8736684934368064'/><path d='M586.4 1325.3 L586.0 1328.3 L582.9 1330.1 L579.2 1329.6 L574.7 1328.9 L576.9 1325.3 L576.7 1322.9 L578.3 1319.0 L583.3 1319.3 L587.5 1321.4 Z' fill='#cde1bb' opacity='0.6444153693024492'/><path d='M795.1 1317.7 L794.8 1319.3 L793.2 1320.6 L791.2 1319.6 L788.5 1319.8 L787.3 1317.7 L788.2 1315.5 L790.5 1314.0 L793.0 1315.3 L794.1 1316.5 Z' fill='#cde1bb' opacity='0.9062941127636321'/><path d='M606.6 1334.6 L605.5 1337.2 L603.0 1339.6 L598.5 1340.6 L594.0 1338.6 L595.3 1334.6 L594.8 1331.0 L599.1 1330.0 L603.6 1328.1 L607.4 1330.9 Z' fill='#cde1bb' opacity='0.8842260585374981'/><path d='M785.8 1432.2 L782.8 1435.2 L779.9 1437.7 L773.4 1442.5 L772.8 1435.0 L765.3 1432.2 L769.5 1427.4 L774.4 1424.4 L780.7 1424.5 L784.9 1427.9 Z' fill='#cde1bb' opacity='0.880316657228951'/><path d='M1093.8 1287.0 L1094.4 1289.3 L1092.3 1291.4 L1089.4 1289.5 L1086.5 1289.3 L1084.0 1287.0 L1085.7 1284.2 L1089.1 1283.6 L1091.9 1283.4 L1093.6 1285.1 Z' fill='#cde1bb' opacity='0.8726158672937994'/><path d='M898.2 1473.3 L889.8 1475.9 L889.2 1482.7 L882.1 1481.6 L878.1 1477.6 L873.5 1473.3 L880.2 1470.3 L883.0 1467.3 L888.8 1465.1 L894.9 1467.8 Z' fill='#cde1bb' opacity='0.78519825611983'/><path d='M358.5 1320.3 L358.3 1323.6 L354.1 1323.9 L349.6 1327.9 L345.0 1324.8 L344.9 1320.3 L347.0 1317.0 L350.7 1315.6 L355.1 1314.2 L357.8 1317.3 Z' fill='#cde1bb' opacity='0.7126622556257943'/><path d='M1008.5 1298.0 L1009.6 1301.7 L1005.4 1303.5 L1000.8 1303.9 L999.7 1300.0 L998.9 1298.0 L1000.5 1296.4 L1001.8 1294.5 L1004.3 1295.3 L1007.9 1295.3 Z' fill='#cde1bb' opacity='0.644155559240209'/><path d='M706.3 1396.4 L708.4 1400.4 L704.1 1403.0 L698.8 1402.9 L694.7 1400.3 L694.9 1396.4 L697.6 1394.2 L699.8 1392.4 L703.9 1390.4 L708.9 1392.1 Z' fill='#cde1bb' opacity='0.8156758160363403'/><path d='M411.4 1265.7 L413.5 1269.2 L409.1 1269.4 L405.3 1271.5 L403.7 1268.0 L402.9 1265.7 L404.3 1263.8 L405.2 1259.7 L409.5 1261.1 L413.4 1262.3 Z' fill='#cde1bb' opacity='0.8091848344582675'/><path d='M1141.1 1700.4 L1141.7 1704.4 L1136.3 1704.1 L1133.6 1703.2 L1127.8 1704.4 L1129.8 1700.4 L1129.4 1697.3 L1133.0 1696.2 L1136.8 1695.3 L1141.6 1696.4 Z' fill='#e6eede' opacity='0.8994996708903145'/><path d='M1008.1 1271.4 L1007.9 1276.5 L1001.5 1277.5 L995.3 1280.6 L989.7 1276.8 L992.3 1271.4 L987.8 1264.9 L997.0 1266.4 L1002.7 1262.3 L1006.3 1267.2 Z' fill='#cde1bb' opacity='0.6891021520324077'/><path d='M486.0 1664.1 L488.9 1668.8 L483.0 1669.4 L479.2 1668.2 L475.3 1667.3 L472.9 1664.1 L475.2 1660.8 L479.5 1660.8 L482.3 1660.4 L487.9 1660.0 Z' fill='#e6eede' opacity='0.7299452515167957'/><path d='M1036.8 1674.7 L1035.5 1676.2 L1033.5 1676.3 L1031.8 1677.3 L1030.6 1676.0 L1029.0 1674.7 L1028.8 1672.3 L1032.0 1672.6 L1033.6 1672.9 L1036.3 1672.7 Z' fill='#e6eede' opacity='0.8017015875199325'/><path d='M413.6 1367.0 L413.0 1371.8 L407.0 1372.7 L401.6 1374.4 L394.6 1372.8 L395.6 1367.0 L393.9 1360.7 L402.2 1361.1 L406.8 1361.6 L414.1 1361.5 Z' fill='#cde1bb' opacity='0.7135158877984006'/><path d='M700.2 1691.8 L697.3 1694.6 L695.3 1699.1 L689.0 1700.0 L685.3 1695.8 L683.6 1691.8 L684.0 1686.9 L689.3 1684.4 L694.9 1685.4 L697.6 1688.7 Z' fill='#e6eede' opacity='0.7679321610804'/><path d='M1149.5 1522.9 L1146.9 1524.7 L1145.6 1527.1 L1141.8 1528.0 L1140.4 1524.9 L1137.5 1522.9 L1140.3 1520.8 L1142.2 1518.9 L1145.8 1518.3 L1146.7 1521.3 Z' fill='#cde1bb' opacity='0.8206622804342659'/><path d='M609.8 1722.6 L608.0 1725.6 L605.2 1728.5 L600.8 1727.6 L600.1 1724.1 L599.2 1722.6 L600.0 1720.9 L601.2 1718.5 L603.9 1719.9 L607.6 1719.8 Z' fill='#e6eede' opacity='0.6905951177485249'/><path d='M838.6 1516.0 L837.7 1519.6 L835.2 1525.0 L828.7 1522.8 L827.1 1518.5 L824.0 1516.0 L823.6 1511.3 L828.0 1507.3 L833.4 1511.4 L840.5 1510.7 Z' fill='#cde1bb' opacity='0.6014073929154168'/><path d='M648.9 1507.7 L647.3 1511.7 L642.7 1513.5 L638.1 1513.3 L636.8 1509.8 L636.5 1507.7 L633.8 1503.9 L638.1 1502.1 L642.5 1502.3 L644.7 1505.2 Z' fill='#cde1bb' opacity='0.9466806385179729'/><path d='M336.1 1421.9 L335.0 1424.0 L332.0 1423.4 L330.4 1424.3 L329.5 1423.0 L327.2 1421.9 L327.8 1419.8 L330.0 1418.6 L332.7 1418.6 L333.3 1420.8 Z' fill='#cde1bb' opacity='0.9423205332860614'/><path d='M1014.1 1503.9 L1010.4 1506.6 L1010.0 1514.2 L1003.1 1510.7 L996.4 1509.5 L993.9 1503.9 L997.6 1499.1 L1001.7 1493.7 L1009.5 1495.0 L1016.4 1497.8 Z' fill='#cde1bb' opacity='0.6421278408929452'/><path d='M513.5 1414.5 L509.3 1417.9 L508.1 1425.9 L500.2 1422.5 L493.4 1420.3 L492.7 1414.5 L492.9 1408.3 L500.6 1407.5 L506.5 1407.0 L513.8 1408.4 Z' fill='#cde1bb' opacity='0.6211066880898756'/><path d='M657.5 1527.7 L656.9 1528.8 L656.4 1531.1 L653.6 1531.1 L651.7 1529.6 L652.2 1527.7 L651.4 1525.6 L653.5 1524.1 L656.3 1524.6 L657.3 1526.4 Z' fill='#cde1bb' opacity='0.7089644341877568'/><path d='M790.0 1447.2 L789.9 1449.9 L786.3 1449.5 L784.4 1449.7 L782.0 1449.2 L782.8 1447.2 L782.6 1445.6 L784.1 1444.0 L786.6 1444.1 L789.9 1444.6 Z' fill='#cde1bb' opacity='0.9026917507411374'/><path d='M976.6 1434.0 L975.1 1437.3 L971.8 1440.1 L965.6 1443.1 L963.5 1437.4 L963.0 1434.0 L960.8 1429.0 L967.4 1429.3 L971.9 1427.6 L977.0 1429.5 Z' fill='#cde1bb' opacity='0.8773464464069843'/><path d='M490.4 1264.0 L489.4 1266.0 L487.2 1267.1 L485.0 1266.2 L480.9 1266.9 L480.1 1264.0 L482.0 1261.7 L485.0 1261.8 L487.1 1261.1 L491.2 1260.9 Z' fill='#cde1bb' opacity='0.7134818486660257'/><path d='M705.8 1358.7 L704.3 1363.6 L698.0 1363.8 L693.3 1365.1 L687.1 1363.8 L684.6 1358.7 L687.1 1353.6 L692.6 1350.5 L698.6 1352.0 L701.0 1355.8 Z' fill='#cde1bb' opacity='0.6427658031138557'/><path d='M470.4 1424.6 L465.1 1428.6 L462.1 1434.6 L455.7 1430.4 L449.8 1429.4 L447.1 1424.6 L452.1 1421.1 L455.4 1418.0 L460.1 1419.7 L467.8 1418.9 Z' fill='#cde1bb' opacity='0.8866714058558756'/><path d='M476.6 1326.3 L476.8 1331.2 L471.4 1333.6 L466.6 1330.9 L461.9 1330.2 L462.8 1326.3 L463.5 1323.4 L466.8 1322.1 L470.1 1322.5 L474.1 1323.1 Z' fill='#cde1bb' opacity='0.8230036389062356'/><path d='M1058.8 1569.3 L1056.1 1570.8 L1054.6 1571.9 L1051.9 1573.5 L1049.1 1572.0 L1050.3 1569.3 L1048.5 1566.4 L1052.4 1566.3 L1055.3 1565.2 L1057.8 1566.9 Z' fill='#e6eede' opacity='0.736629390505599'/><path d='M1129.6 1617.9 L1131.3 1622.3 L1125.5 1622.3 L1121.0 1624.7 L1117.6 1621.4 L1116.6 1617.9 L1116.5 1613.7 L1120.9 1611.0 L1127.0 1609.7 L1132.5 1612.8 Z' fill='#e6eede' opacity='0.6758094486847118'/><path d='M988.0 1386.1 L986.3 1388.9 L982.8 1389.2 L979.4 1391.1 L975.8 1389.4 L975.8 1386.1 L977.8 1384.0 L979.4 1381.0 L982.8 1382.8 L985.5 1383.8 Z' fill='#cde1bb' opacity='0.9291534234961369'/><path d='M689.7 1425.5 L688.3 1427.4 L687.2 1431.1 L681.8 1433.0 L680.2 1428.2 L678.7 1425.5 L680.0 1422.6 L682.2 1419.0 L687.0 1420.1 L692.0 1421.3 Z' fill='#cde1bb' opacity='0.7359712743505535'/><path d='M324.5 1324.8 L325.8 1328.6 L321.0 1329.0 L317.3 1329.5 L312.7 1328.6 L312.7 1324.8 L314.2 1321.8 L317.0 1319.1 L320.8 1321.0 L322.1 1323.1 Z' fill='#cde1bb' opacity='0.7398012333794994'/><path d='M626.9 1391.6 L627.6 1394.7 L623.2 1394.0 L621.1 1394.3 L617.5 1394.3 L619.2 1391.6 L618.7 1389.5 L620.4 1387.1 L624.0 1387.4 L627.0 1388.8 Z' fill='#cde1bb' opacity='0.6948260140595118'/><path d='M718.1 1383.2 L720.4 1387.5 L715.4 1388.7 L710.4 1390.0 L709.3 1385.5 L706.5 1383.2 L707.8 1380.1 L711.8 1379.8 L714.9 1379.1 L720.6 1378.9 Z' fill='#cde1bb' opacity='0.617432983149738'/><path d='M362.2 1670.1 L361.4 1672.8 L358.4 1674.0 L355.3 1674.0 L353.9 1671.8 L350.6 1670.1 L352.5 1667.6 L355.5 1666.8 L358.9 1665.0 L362.7 1666.7 Z' fill='#e6eede' opacity='0.5548097688441678'/><path d='M1088.6 1722.9 L1089.7 1726.5 L1086.2 1729.4 L1082.2 1726.3 L1078.4 1725.9 L1074.7 1722.9 L1076.7 1719.0 L1081.7 1718.3 L1084.8 1719.7 L1088.5 1720.1 Z' fill='#e6eede' opacity='0.6799754773263431'/><path d='M749.5 1629.9 L751.1 1632.7 L747.3 1632.7 L744.1 1635.0 L742.0 1632.3 L738.7 1629.9 L742.8 1627.9 L743.9 1624.3 L747.5 1626.6 L749.0 1628.3 Z' fill='#e6eede' opacity='0.8938755673261307'/><path d='M399.2 1298.4 L391.9 1301.4 L390.1 1306.4 L383.4 1306.6 L381.2 1301.6 L375.6 1298.4 L378.7 1293.7 L384.0 1291.6 L390.9 1288.2 L396.6 1292.6 Z' fill='#cde1bb' opacity='0.7241796276290354'/><path d='M422.2 1312.4 L420.8 1315.7 L417.2 1317.4 L414.1 1315.0 L410.1 1315.3 L409.1 1312.4 L411.2 1310.1 L413.0 1307.0 L416.9 1308.3 L417.9 1310.8 Z' fill='#cde1bb' opacity='0.8228004086362011'/><path d='M837.9 1663.6 L837.4 1664.9 L836.5 1667.2 L834.2 1665.4 L831.3 1665.7 L830.2 1663.6 L831.9 1661.8 L833.8 1660.5 L835.7 1661.9 L838.2 1661.7 Z' fill='#e6eede' opacity='0.8890862052902859'/><path d='M389.2 1312.7 L391.4 1318.7 L384.2 1320.1 L379.0 1318.1 L373.4 1317.2 L369.3 1312.7 L374.6 1308.9 L378.5 1306.2 L384.2 1305.3 L391.6 1306.7 Z' fill='#cde1bb' opacity='0.7912720090868256'/><path d='M339.1 1500.0 L338.6 1503.9 L333.7 1504.7 L329.9 1504.5 L325.6 1503.6 L324.0 1500.0 L327.0 1497.2 L328.9 1492.9 L334.1 1494.2 L337.1 1496.8 Z' fill='#cde1bb' opacity='0.88723611945583'/><path d='M1106.9 1378.7 L1104.0 1382.9 L1098.8 1383.8 L1094.4 1384.3 L1089.3 1382.9 L1091.1 1378.7 L1091.0 1375.4 L1093.7 1371.3 L1099.5 1371.8 L1103.5 1374.7 Z' fill='#cde1bb' opacity='0.6086620834404897'/><path d='M404.3 1364.2 L404.5 1366.3 L402.0 1366.8 L399.6 1367.5 L398.4 1365.7 L397.7 1364.2 L398.8 1363.0 L400.0 1361.9 L402.3 1360.9 L403.5 1362.7 Z' fill='#cde1bb' opacity='0.8239823920745708'/><path d='M324.3 1428.0 L325.3 1433.0 L319.6 1435.3 L315.1 1431.9 L312.9 1430.3 L307.6 1428.0 L309.9 1424.1 L314.0 1421.4 L319.1 1422.1 L320.5 1425.8 Z' fill='#cde1bb' opacity='0.7782272427645898'/><path d='M780.3 1339.7 L779.3 1345.6 L771.0 1344.7 L766.0 1347.1 L758.7 1345.7 L760.2 1339.7 L763.3 1336.3 L764.9 1329.6 L772.7 1330.6 L773.8 1336.9 Z' fill='#cde1bb' opacity='0.9027896740999407'/><path d='M836.2 1672.1 L834.0 1674.7 L832.0 1677.8 L828.2 1675.7 L822.6 1676.2 L821.0 1672.1 L821.3 1667.3 L826.8 1665.0 L831.2 1668.4 L837.8 1667.4 Z' fill='#e6eede' opacity='0.5726762198004711'/><path d='M396.8 1591.7 L391.1 1596.7 L385.4 1598.6 L378.9 1600.9 L372.6 1597.6 L372.4 1591.7 L375.7 1587.7 L379.6 1584.2 L386.5 1582.2 L389.2 1587.9 Z' fill='#e6eede' opacity='0.7156936637473175'/><path d='M754.9 1348.3 L753.1 1350.3 L751.0 1351.3 L748.3 1351.9 L746.5 1350.2 L746.1 1348.3 L746.4 1346.4 L749.0 1346.5 L750.8 1345.7 L751.7 1347.2 Z' fill='#cde1bb' opacity='0.7084574882123713'/><path d='M531.1 1454.7 L529.9 1456.3 L528.2 1457.5 L525.6 1458.3 L525.2 1455.7 L523.9 1454.7 L523.7 1452.7 L525.9 1451.9 L528.1 1452.0 L529.3 1453.3 Z' fill='#cde1bb' opacity='0.906458041444595'/><path d='M551.1 1503.2 L551.8 1506.9 L547.5 1508.5 L543.8 1507.0 L541.6 1505.3 L537.5 1503.2 L542.5 1501.5 L543.1 1497.5 L547.7 1497.5 L548.3 1501.4 Z' fill='#cde1bb' opacity='0.6260893444652712'/><path d='M1113.8 1564.7 L1114.0 1568.5 L1110.0 1571.0 L1105.8 1568.7 L1104.5 1566.4 L1099.7 1564.7 L1101.7 1561.4 L1105.2 1559.3 L1108.7 1561.6 L1110.7 1562.8 Z' fill='#cde1bb' opacity='0.8129762148812569'/><path d='M1075.4 1432.8 L1069.1 1435.9 L1067.1 1441.2 L1059.8 1442.4 L1057.7 1436.3 L1050.9 1432.8 L1051.9 1425.9 L1059.6 1422.6 L1067.8 1422.9 L1075.4 1426.0 Z' fill='#cde1bb' opacity='0.6682624925065669'/><path d='M471.5 1420.9 L474.6 1427.3 L465.4 1425.5 L461.7 1425.5 L456.9 1424.7 L457.4 1420.9 L452.9 1414.7 L460.9 1414.5 L466.2 1414.3 L473.6 1415.0 Z' fill='#cde1bb' opacity='0.8735158541797485'/><path d='M764.3 1557.4 L764.4 1560.5 L761.0 1562.2 L757.6 1560.8 L755.3 1559.5 L752.4 1557.4 L752.4 1553.5 L757.1 1552.7 L760.2 1554.2 L766.2 1553.2 Z' fill='#cde1bb' opacity='0.9350048917795042'/><path d='M436.0 1676.0 L435.7 1679.6 L432.6 1683.5 L427.1 1681.8 L423.3 1679.5 L422.0 1676.0 L422.7 1672.0 L427.4 1670.9 L433.0 1667.3 L434.4 1673.1 Z' fill='#e6eede' opacity='0.5584245826444416'/><path d='M435.2 1519.1 L431.5 1522.6 L429.0 1527.9 L423.2 1524.5 L418.9 1522.9 L418.1 1519.1 L418.3 1515.0 L423.2 1513.8 L428.4 1511.7 L431.8 1515.4 Z' fill='#cde1bb' opacity='0.6138245777892544'/><path d='M913.2 1399.0 L910.5 1402.2 L906.4 1402.6 L903.5 1402.7 L900.9 1401.4 L899.7 1399.0 L900.7 1396.5 L902.4 1392.7 L906.9 1394.2 L912.9 1394.4 Z' fill='#cde1bb' opacity='0.8514784579395345'/><path d='M514.2 1377.6 L512.5 1379.1 L511.4 1381.5 L508.4 1381.2 L506.8 1379.4 L505.4 1377.6 L506.1 1375.4 L508.7 1374.7 L510.7 1375.6 L512.8 1375.9 Z' fill='#cde1bb' opacity='0.8387452625570938'/><path d='M1108.0 1437.3 L1105.9 1438.8 L1104.3 1439.8 L1102.1 1440.1 L1100.9 1438.6 L1100.5 1437.3 L1101.2 1436.1 L1102.0 1434.1 L1104.4 1434.5 L1107.4 1434.9 Z' fill='#cde1bb' opacity='0.8708991279593009'/><path d='M1024.9 1274.3 L1022.7 1279.7 L1016.4 1281.8 L1010.3 1281.7 L1007.4 1277.7 L1002.4 1274.3 L1006.5 1270.3 L1011.1 1268.8 L1017.6 1263.8 L1022.4 1269.0 Z' fill='#cde1bb' opacity='0.9058232475096972'/><path d='M1048.9 1400.1 L1049.7 1402.8 L1046.7 1404.2 L1043.7 1403.5 L1042.3 1401.7 L1040.0 1400.1 L1040.8 1397.7 L1043.0 1395.2 L1046.2 1397.2 L1048.0 1398.4 Z' fill='#cde1bb' opacity='0.8907585611642315'/><path d='M574.7 1637.7 L577.1 1642.2 L572.0 1643.9 L567.8 1641.9 L563.1 1641.4 L558.4 1637.7 L563.5 1634.3 L566.8 1631.3 L571.8 1632.0 L576.0 1633.9 Z' fill='#e6eede' opacity='0.5128345415321391'/><path d='M613.3 1395.7 L613.1 1400.9 L607.4 1403.8 L601.8 1401.5 L599.1 1398.6 L592.0 1395.7 L598.3 1392.2 L600.8 1387.5 L606.0 1391.1 L609.1 1392.8 Z' fill='#cde1bb' opacity='0.8943360996746736'/><path d='M714.2 1364.1 L714.8 1366.0 L712.3 1366.0 L710.2 1367.2 L708.3 1365.9 L707.3 1364.1 L707.5 1361.8 L710.6 1361.8 L712.8 1361.0 L714.1 1362.6 Z' fill='#cde1bb' opacity='0.8033142705436226'/><path d='M992.7 1475.1 L993.0 1480.8 L985.0 1479.3 L981.6 1479.2 L976.2 1479.3 L977.3 1475.1 L973.8 1469.6 L981.5 1470.6 L987.0 1466.0 L989.0 1471.9 Z' fill='#cde1bb' opacity='0.8291002422090393'/><path d='M1112.9 1499.9 L1108.9 1502.0 L1107.7 1505.7 L1102.6 1506.7 L1098.9 1503.7 L1098.6 1499.9 L1100.7 1497.2 L1104.0 1496.6 L1106.7 1496.7 L1110.8 1496.8 Z' fill='#cde1bb' opacity='0.7441348054586316'/><path d='M1057.0 1667.4 L1057.7 1672.9 L1050.3 1672.4 L1045.9 1673.3 L1041.0 1671.7 L1037.7 1667.4 L1041.4 1663.4 L1046.0 1661.8 L1051.9 1658.6 L1054.8 1663.6 Z' fill='#e6eede' opacity='0.8228655284703743'/><path d='M674.1 1367.3 L671.4 1371.2 L666.1 1371.0 L661.0 1376.2 L659.0 1370.5 L655.8 1367.3 L655.1 1361.8 L662.6 1362.5 L666.2 1363.2 L669.7 1364.3 Z' fill='#cde1bb' opacity='0.7266083087783188'/><path d='M355.7 1389.7 L353.2 1391.6 L350.9 1392.2 L348.4 1393.3 L347.5 1391.1 L345.5 1389.7 L346.0 1387.4 L349.0 1387.6 L351.3 1386.3 L352.8 1388.0 Z' fill='#cde1bb' opacity='0.7072329965668769'/><path d='M826.2 1348.3 L827.2 1352.0 L823.0 1353.5 L818.4 1354.5 L812.0 1353.5 L812.1 1348.3 L812.7 1343.5 L817.7 1340.5 L823.0 1343.1 L828.4 1344.0 Z' fill='#cde1bb' opacity='0.8836260810698447'/><path d='M637.9 1484.4 L632.2 1487.1 L629.6 1489.6 L624.3 1492.4 L618.3 1489.7 L620.3 1484.4 L618.4 1479.1 L626.0 1480.6 L631.0 1475.8 L632.4 1481.5 Z' fill='#cde1bb' opacity='0.6589367014703444'/><path d='M350.1 1618.8 L350.4 1622.5 L345.8 1623.2 L341.3 1625.4 L337.7 1622.5 L333.3 1618.8 L336.8 1614.6 L340.2 1609.4 L347.6 1610.1 L349.2 1615.8 Z' fill='#e6eede' opacity='0.5028084835315654'/><path d='M759.1 1342.2 L757.2 1344.1 L755.7 1346.5 L752.4 1346.0 L749.1 1345.0 L750.9 1342.2 L749.1 1339.4 L752.5 1338.6 L755.6 1338.2 L756.9 1340.5 Z' fill='#cde1bb' opacity='0.6686239064999142'/><path d='M578.5 1273.3 L571.4 1277.9 L567.1 1282.2 L558.3 1286.2 L556.8 1277.2 L548.0 1273.3 L551.8 1266.5 L558.4 1260.7 L567.2 1264.2 L574.6 1266.9 Z' fill='#bcd6a4' opacity='0.75'/><path d='M569.1 1281.5 L566.3 1284.5 L563.8 1287.9 L559.3 1286.3 L556.5 1284.3 L555.2 1281.5 L552.8 1276.6 L559.1 1276.3 L564.4 1273.7 L568.8 1277.1 Z' fill='#bcd6a4' opacity='0.75'/><path d='M569.1 1280.1 L565.7 1283.8 L560.7 1283.8 L557.0 1285.6 L553.4 1283.5 L551.0 1280.1 L554.4 1277.3 L556.2 1272.7 L561.7 1274.0 L563.0 1277.9 Z' fill='#bcd6a4' opacity='0.75'/><path d='M588.8 1288.1 L587.5 1294.2 L581.1 1298.2 L575.0 1292.9 L566.6 1294.1 L569.1 1288.1 L566.8 1282.2 L573.4 1279.3 L580.0 1280.7 L587.8 1281.8 Z' fill='#bcd6a4' opacity='0.75'/><path d='M597.2 1292.1 L595.7 1301.2 L585.7 1306.2 L575.4 1303.4 L566.9 1299.7 L563.6 1292.1 L570.0 1286.3 L576.0 1282.2 L586.5 1276.2 L596.9 1282.2 Z' fill='#bcd6a4' opacity='0.75'/><path d='M593.4 1288.7 L591.7 1295.1 L582.8 1294.0 L577.1 1297.3 L567.1 1296.5 L571.6 1288.7 L571.2 1283.2 L578.3 1282.8 L583.6 1281.4 L593.0 1281.5 Z' fill='#bcd6a4' opacity='0.75'/><path d='M586.1 1292.7 L576.3 1298.2 L573.0 1307.9 L562.7 1302.7 L555.4 1299.3 L546.5 1292.7 L554.4 1285.5 L561.6 1279.8 L569.8 1285.2 L573.7 1288.7 Z' fill='#bcd6a4' opacity='0.75'/><path d='M588.0 1282.3 L593.0 1292.0 L581.5 1295.4 L572.8 1290.7 L562.0 1290.5 L563.6 1282.3 L563.9 1275.1 L573.3 1275.0 L582.2 1267.7 L591.3 1273.5 Z' fill='#bcd6a4' opacity='0.75'/><path d='M595.0 1294.8 L595.0 1299.0 L591.7 1304.3 L584.5 1303.1 L582.1 1298.2 L579.8 1294.8 L579.7 1290.1 L586.0 1290.2 L589.9 1290.0 L595.9 1290.2 Z' fill='#bcd6a4' opacity='0.75'/><path d='M589.8 1300.5 L588.1 1305.4 L581.9 1305.8 L577.0 1307.0 L570.1 1306.0 L570.5 1300.5 L573.6 1296.9 L576.1 1291.6 L581.7 1295.4 L589.0 1295.0 Z' fill='#bcd6a4' opacity='0.75'/><path d='M599.1 1294.1 L598.5 1300.4 L591.3 1303.0 L585.4 1299.7 L576.1 1300.8 L575.7 1294.1 L579.4 1289.3 L583.6 1284.1 L589.8 1289.0 L596.5 1289.0 Z' fill='#bcd6a4' opacity='0.75'/><path d='M610.3 1302.9 L612.5 1309.1 L605.1 1311.2 L597.2 1314.1 L591.8 1308.7 L588.7 1302.9 L590.5 1296.3 L597.3 1291.8 L607.3 1289.2 L610.7 1297.7 Z' fill='#bcd6a4' opacity='0.75'/><path d='M600.8 1294.6 L599.2 1299.8 L591.9 1298.9 L587.9 1300.1 L581.3 1299.8 L579.5 1294.6 L580.9 1289.2 L586.6 1285.8 L592.3 1289.4 L594.4 1292.2 Z' fill='#bcd6a4' opacity='0.75'/><path d='M597.0 1302.7 L597.0 1306.1 L593.8 1309.1 L589.6 1306.7 L587.2 1305.1 L585.0 1302.7 L587.4 1300.5 L589.7 1299.0 L592.7 1299.1 L598.6 1298.5 Z' fill='#bcd6a4' opacity='0.75'/><path d='M628.4 1296.9 L622.8 1304.7 L613.1 1306.2 L603.5 1311.1 L601.6 1301.4 L600.2 1296.9 L592.8 1287.3 L605.8 1288.3 L615.5 1281.7 L623.8 1288.4 Z' fill='#bcd6a4' opacity='0.75'/><path d='M598.7 1300.2 L601.6 1307.3 L594.1 1311.7 L586.2 1308.0 L578.9 1306.3 L579.3 1300.2 L575.3 1292.0 L584.8 1289.0 L594.1 1288.5 L601.2 1293.3 Z' fill='#bcd6a4' opacity='0.75'/><path d='M606.2 1316.8 L604.1 1324.2 L595.9 1327.8 L586.0 1330.3 L579.4 1323.9 L579.7 1316.8 L579.5 1309.9 L588.1 1308.4 L594.1 1310.4 L603.4 1309.9 Z' fill='#bcd6a4' opacity='0.75'/><path d='M623.4 1316.2 L622.1 1320.8 L617.2 1323.6 L611.5 1322.9 L606.8 1320.5 L603.7 1316.2 L604.5 1310.6 L611.4 1309.2 L617.7 1307.6 L622.7 1311.3 Z' fill='#bcd6a4' opacity='0.75'/><path d='M605.3 1310.3 L604.5 1315.1 L599.0 1316.7 L592.0 1321.2 L586.6 1316.0 L587.4 1310.3 L586.9 1304.8 L592.2 1299.9 L598.6 1304.9 L605.5 1305.1 Z' fill='#bcd6a4' opacity='0.75'/><path d='M639.4 1314.8 L630.5 1321.0 L623.3 1323.1 L613.9 1329.6 L608.3 1321.6 L606.4 1314.8 L607.8 1307.8 L614.2 1300.8 L626.3 1299.2 L636.8 1305.0 Z' fill='#bcd6a4' opacity='0.75'/><path d='M622.9 1313.6 L623.1 1317.4 L619.5 1320.6 L614.3 1319.5 L608.2 1318.5 L609.3 1313.6 L606.9 1308.0 L613.6 1306.1 L619.2 1307.3 L626.6 1307.8 Z' fill='#bcd6a4' opacity='0.75'/><path d='M626.3 1312.3 L624.1 1321.6 L611.8 1321.7 L604.2 1321.5 L593.8 1320.5 L597.4 1312.3 L591.0 1302.4 L602.7 1299.3 L612.8 1300.3 L615.6 1307.8 Z' fill='#bcd6a4' opacity='0.75'/><path d='M621.1 1320.8 L623.9 1329.1 L612.8 1328.9 L602.5 1338.3 L593.5 1330.2 L588.8 1320.8 L593.5 1311.5 L605.8 1311.7 L613.5 1311.0 L617.7 1316.1 Z' fill='#bcd6a4' opacity='0.75'/><path d='M625.7 1316.0 L629.0 1321.7 L622.7 1324.5 L617.0 1321.6 L609.2 1321.9 L612.9 1316.0 L614.2 1313.1 L616.8 1309.9 L622.7 1307.5 L624.0 1313.3 Z' fill='#bcd6a4' opacity='0.75'/><path d='M640.9 1325.7 L635.5 1330.0 L631.2 1333.1 L622.8 1339.0 L616.2 1332.7 L610.2 1325.7 L619.3 1320.6 L624.5 1316.6 L631.6 1317.3 L643.6 1316.8 Z' fill='#bcd6a4' opacity='0.75'/><path d='M637.3 1320.1 L639.7 1326.5 L632.1 1328.6 L623.4 1333.1 L615.3 1327.9 L612.5 1320.1 L620.2 1315.2 L626.0 1313.5 L633.5 1308.2 L641.9 1312.4 Z' fill='#bcd6a4' opacity='0.75'/><path d='M627.2 1333.8 L626.2 1341.2 L618.8 1347.2 L606.8 1349.9 L599.1 1342.0 L597.5 1333.8 L597.8 1324.7 L608.6 1322.0 L616.3 1326.5 L626.5 1326.1 Z' fill='#bcd6a4' opacity='0.75'/><path d='M634.9 1326.1 L634.0 1330.4 L630.7 1336.1 L622.2 1337.0 L618.2 1331.0 L612.6 1326.1 L620.6 1322.6 L623.2 1317.7 L630.7 1316.1 L637.5 1319.8 Z' fill='#bcd6a4' opacity='0.75'/><path d='M646.4 1324.4 L643.5 1333.1 L633.0 1335.2 L625.3 1332.8 L614.7 1332.5 L613.7 1324.4 L611.2 1314.3 L623.0 1310.4 L634.8 1309.4 L642.6 1316.3 Z' fill='#bcd6a4' opacity='0.75'/><path d='M658.6 1325.2 L655.4 1333.6 L644.7 1334.5 L637.6 1333.5 L625.2 1334.3 L621.2 1325.2 L625.6 1316.3 L636.9 1315.2 L646.0 1312.7 L657.4 1315.6 Z' fill='#bcd6a4' opacity='0.75'/><path d='M650.6 1340.5 L644.5 1342.7 L643.5 1347.2 L638.2 1346.8 L636.6 1342.9 L633.3 1340.5 L633.4 1336.2 L637.5 1332.6 L642.3 1336.6 L647.2 1336.7 Z' fill='#bcd6a4' opacity='0.75'/><path d='M668.5 1328.6 L658.1 1335.0 L650.8 1337.6 L643.8 1337.0 L637.5 1334.2 L632.6 1328.6 L632.3 1320.0 L640.6 1312.4 L652.2 1316.2 L664.6 1318.5 Z' fill='#bcd6a4' opacity='0.75'/><path d='M646.6 1340.8 L643.4 1342.8 L641.5 1344.5 L637.2 1347.6 L636.1 1343.0 L634.0 1340.8 L634.1 1337.3 L637.7 1335.2 L641.3 1337.5 L643.8 1338.5 Z' fill='#bcd6a4' opacity='0.75'/><path d='M656.7 1338.6 L654.6 1342.0 L652.4 1347.3 L647.3 1342.4 L644.1 1341.4 L643.7 1338.6 L642.1 1334.7 L645.4 1330.2 L651.9 1331.1 L653.2 1336.1 Z' fill='#bcd6a4' opacity='0.75'/><path d='M667.0 1340.2 L662.1 1348.6 L651.7 1350.1 L642.9 1352.0 L634.1 1348.1 L633.0 1340.2 L633.7 1332.0 L644.4 1332.0 L652.4 1328.5 L666.4 1329.3 Z' fill='#bcd6a4' opacity='0.75'/><path d='M664.5 1345.2 L660.3 1353.3 L650.4 1355.0 L641.2 1358.0 L637.8 1350.2 L630.7 1345.2 L639.6 1341.2 L643.2 1337.2 L649.6 1337.3 L656.5 1339.3 Z' fill='#bcd6a4' opacity='0.75'/><path d='M667.8 1338.9 L674.9 1348.9 L664.2 1355.1 L652.4 1351.8 L641.6 1348.2 L636.4 1338.9 L645.7 1331.9 L651.4 1323.6 L660.5 1331.7 L673.1 1329.9 Z' fill='#bcd6a4' opacity='0.75'/><path d='M663.2 1354.9 L664.7 1359.0 L660.6 1362.0 L654.6 1362.4 L652.6 1357.8 L648.7 1354.9 L648.1 1349.3 L655.6 1349.7 L661.0 1346.6 L667.3 1349.3 Z' fill='#bcd6a4' opacity='0.75'/><path d='M671.5 1351.2 L666.9 1354.8 L662.9 1356.6 L657.9 1358.1 L654.2 1355.0 L645.9 1351.2 L652.8 1346.6 L656.2 1340.1 L664.3 1342.3 L672.7 1344.3 Z' fill='#bcd6a4' opacity='0.75'/><path d='M677.9 1358.5 L678.6 1364.1 L671.9 1365.8 L664.4 1369.6 L663.3 1361.8 L656.2 1358.5 L661.0 1353.9 L665.7 1350.4 L672.6 1349.5 L681.9 1351.0 Z' fill='#bcd6a4' opacity='0.75'/><path d='M696.3 1354.5 L687.3 1362.3 L679.1 1367.5 L670.1 1363.7 L657.5 1364.0 L657.8 1354.5 L657.8 1345.2 L667.1 1337.8 L679.4 1340.9 L689.1 1345.6 Z' fill='#bcd6a4' opacity='0.75'/><path d='M673.0 1353.5 L672.5 1357.5 L670.7 1365.8 L662.5 1361.4 L659.3 1357.3 L654.9 1353.5 L659.9 1350.1 L661.8 1344.0 L668.4 1346.8 L672.8 1349.4 Z' fill='#bcd6a4' opacity='0.75'/><path d='M680.0 1370.9 L677.7 1374.5 L673.6 1376.4 L669.3 1376.1 L668.0 1372.9 L665.1 1370.9 L665.4 1367.4 L669.5 1366.1 L674.6 1363.1 L676.5 1367.9 Z' fill='#bcd6a4' opacity='0.75'/><path d='M694.8 1371.9 L692.1 1378.8 L686.1 1386.3 L677.2 1379.5 L671.1 1377.2 L671.6 1371.9 L668.5 1365.1 L675.9 1361.2 L686.5 1356.5 L696.4 1362.5 Z' fill='#bcd6a4' opacity='0.75'/><path d='M682.1 1369.3 L678.9 1373.2 L674.1 1373.8 L668.9 1377.5 L668.2 1371.7 L666.2 1369.3 L665.8 1365.6 L668.7 1360.6 L674.0 1365.0 L677.5 1366.3 Z' fill='#bcd6a4' opacity='0.75'/><path d='M695.2 1369.5 L695.7 1375.4 L689.8 1379.7 L679.3 1385.2 L677.1 1374.5 L667.4 1369.5 L668.6 1359.6 L678.8 1352.5 L691.9 1354.3 L693.7 1364.9 Z' fill='#bcd6a4' opacity='0.75'/><path d='M687.6 1370.5 L689.1 1375.1 L683.8 1377.2 L679.3 1374.8 L675.6 1373.7 L675.8 1370.5 L672.0 1365.2 L678.0 1362.8 L683.6 1364.3 L690.4 1365.1 Z' fill='#bcd6a4' opacity='0.75'/><path d='M704.5 1373.4 L705.9 1378.3 L700.6 1381.2 L694.4 1380.7 L687.9 1378.9 L687.6 1373.4 L690.9 1369.6 L694.0 1365.1 L701.5 1363.3 L702.2 1370.6 Z' fill='#bcd6a4' opacity='0.75'/><path d='M701.4 1375.2 L702.8 1383.8 L693.0 1387.6 L681.9 1390.2 L675.7 1382.4 L672.7 1375.2 L671.9 1365.9 L682.5 1361.6 L691.8 1365.9 L695.7 1370.8 Z' fill='#bcd6a4' opacity='0.75'/><path d='M724.5 1376.9 L717.4 1385.4 L709.5 1393.6 L697.4 1390.1 L687.2 1386.0 L685.6 1376.9 L692.9 1371.2 L699.6 1369.1 L708.7 1362.4 L715.1 1369.8 Z' fill='#bcd6a4' opacity='0.75'/><path d='M693.2 1388.9 L695.7 1394.9 L688.7 1397.0 L681.9 1397.8 L675.6 1394.7 L676.3 1388.9 L678.0 1384.6 L682.7 1382.0 L688.1 1382.5 L695.1 1383.3 Z' fill='#bcd6a4' opacity='0.75'/><path d='M719.2 1386.6 L715.2 1390.4 L713.6 1398.8 L703.3 1399.6 L699.0 1392.2 L689.0 1386.6 L695.3 1378.9 L705.0 1377.7 L713.9 1373.7 L723.1 1378.2 Z' fill='#bcd6a4' opacity='0.75'/><path d='M701.8 1400.1 L700.9 1404.8 L696.3 1408.8 L689.2 1408.8 L685.2 1404.4 L685.6 1400.1 L682.6 1394.2 L688.6 1389.9 L696.8 1390.1 L701.0 1395.2 Z' fill='#bcd6a4' opacity='0.75'/><path d='M719.7 1386.4 L721.9 1390.5 L717.4 1392.8 L712.8 1391.3 L707.9 1390.4 L709.9 1386.4 L710.7 1384.0 L711.2 1377.5 L718.2 1377.9 L719.1 1383.9 Z' fill='#bcd6a4' opacity='0.75'/><path d='M728.7 1397.6 L724.0 1404.0 L718.1 1410.4 L708.6 1408.3 L699.6 1405.4 L704.7 1397.6 L700.4 1390.3 L709.7 1389.7 L718.1 1385.0 L725.3 1390.4 Z' fill='#bcd6a4' opacity='0.75'/><path d='M735.5 1404.4 L735.3 1410.7 L726.6 1409.6 L721.0 1413.0 L715.2 1409.8 L711.6 1404.4 L716.8 1400.0 L720.8 1395.4 L728.5 1394.5 L732.3 1399.8 Z' fill='#bcd6a4' opacity='0.75'/><path d='M731.3 1409.5 L729.0 1414.4 L724.7 1419.9 L717.8 1416.0 L713.4 1413.6 L710.8 1409.5 L710.8 1403.9 L718.1 1403.8 L725.1 1398.1 L729.1 1404.5 Z' fill='#bcd6a4' opacity='0.75'/><path d='M731.8 1403.0 L731.5 1406.7 L726.7 1406.7 L722.0 1410.9 L718.7 1406.8 L718.0 1403.0 L721.6 1401.0 L723.4 1398.6 L727.1 1398.2 L731.9 1399.1 Z' fill='#bcd6a4' opacity='0.75'/><path d='M724.3 1406.8 L723.2 1412.0 L717.2 1414.2 L710.5 1415.7 L705.5 1411.8 L707.8 1406.8 L705.2 1401.6 L711.2 1399.5 L717.8 1397.8 L724.8 1400.5 Z' fill='#bcd6a4' opacity='0.75'/><path d='M732.6 1415.7 L726.5 1418.3 L725.8 1424.7 L719.4 1422.5 L714.9 1419.9 L712.9 1415.7 L715.4 1411.8 L719.9 1410.2 L725.5 1407.5 L730.5 1410.9 Z' fill='#bcd6a4' opacity='0.75'/><path d='M730.9 1407.7 L728.5 1413.9 L723.1 1420.6 L713.4 1418.5 L700.0 1418.0 L695.4 1407.7 L709.0 1402.5 L714.0 1398.3 L721.4 1398.9 L730.2 1400.5 Z' fill='#bcd6a4' opacity='0.75'/><path d='M738.2 1414.3 L735.8 1418.7 L731.5 1422.2 L724.2 1424.2 L719.6 1419.3 L713.6 1414.3 L717.1 1407.8 L722.5 1400.2 L734.9 1397.8 L745.9 1404.0 Z' fill='#bcd6a4' opacity='0.75'/><path d='M745.4 1413.0 L745.2 1418.2 L739.7 1421.5 L734.4 1417.5 L731.4 1415.9 L725.0 1413.0 L728.3 1408.4 L733.1 1405.2 L737.9 1409.0 L743.7 1408.7 Z' fill='#bcd6a4' opacity='0.75'/><path d='M742.8 1414.0 L737.3 1418.0 L735.8 1427.4 L723.9 1429.9 L717.3 1421.6 L717.3 1414.0 L720.2 1408.1 L724.6 1399.9 L736.7 1398.4 L740.9 1407.9 Z' fill='#bcd6a4' opacity='0.75'/><path d='M750.6 1418.0 L747.6 1422.4 L744.1 1428.1 L735.1 1430.0 L731.1 1423.1 L725.4 1418.0 L731.7 1413.2 L736.7 1410.1 L744.3 1407.3 L752.6 1410.7 Z' fill='#bcd6a4' opacity='0.75'/><path d='M778.6 1412.1 L775.0 1421.8 L763.0 1423.8 L754.1 1422.4 L751.2 1416.2 L743.0 1412.1 L747.6 1405.9 L755.6 1405.5 L764.8 1395.9 L768.4 1406.2 Z' fill='#bcd6a4' opacity='0.75'/><path d='M780.4 1399.0 L777.1 1404.7 L771.1 1408.2 L764.1 1406.9 L761.7 1402.2 L753.8 1399.0 L756.9 1392.9 L764.1 1391.1 L770.8 1390.5 L778.0 1392.8 Z' fill='#bcd6a4' opacity='0.75'/><path d='M774.5 1406.6 L771.8 1413.2 L763.5 1414.3 L755.9 1417.6 L751.9 1411.5 L747.0 1406.6 L751.9 1401.6 L755.6 1394.7 L765.4 1394.3 L772.1 1399.8 Z' fill='#bcd6a4' opacity='0.75'/><path d='M774.1 1403.7 L767.4 1406.9 L765.5 1412.5 L757.2 1415.3 L756.1 1407.0 L747.0 1403.7 L752.3 1398.1 L757.0 1391.5 L766.0 1393.5 L772.7 1397.4 Z' fill='#bcd6a4' opacity='0.75'/><path d='M786.7 1404.2 L784.8 1409.3 L779.0 1411.7 L774.1 1409.0 L769.4 1408.1 L767.7 1404.2 L770.1 1400.8 L773.5 1398.0 L778.5 1398.2 L785.4 1398.8 Z' fill='#bcd6a4' opacity='0.75'/><path d='M788.7 1413.5 L792.8 1422.6 L781.6 1424.3 L771.9 1426.5 L763.8 1421.3 L758.3 1413.5 L766.6 1407.4 L771.6 1399.8 L781.5 1402.9 L793.0 1404.4 Z' fill='#bcd6a4' opacity='0.75'/><path d='M791.7 1408.2 L786.0 1412.8 L785.0 1425.1 L772.9 1421.1 L763.1 1417.0 L757.0 1408.2 L760.3 1397.9 L773.5 1396.8 L785.4 1390.4 L790.4 1401.1 Z' fill='#bcd6a4' opacity='0.75'/><path d='M798.5 1412.3 L796.3 1416.7 L791.5 1419.3 L785.7 1419.8 L777.6 1418.7 L782.0 1412.3 L776.6 1405.3 L784.6 1402.3 L792.1 1403.9 L798.3 1406.7 Z' fill='#bcd6a4' opacity='0.75'/><path d='M795.9 1411.8 L794.5 1419.0 L785.7 1420.7 L778.2 1421.1 L765.8 1421.2 L764.7 1411.8 L770.1 1404.9 L776.7 1398.7 L785.5 1403.2 L789.3 1407.6 Z' fill='#bcd6a4' opacity='0.75'/><path d='M797.2 1409.1 L794.1 1412.6 L790.2 1414.5 L784.7 1417.2 L781.6 1412.7 L777.3 1409.1 L779.3 1404.0 L785.5 1403.0 L789.6 1405.0 L797.2 1403.7 Z' fill='#bcd6a4' opacity='0.75'/><path d='M811.7 1409.8 L812.3 1418.4 L799.9 1415.9 L791.6 1424.3 L785.3 1416.9 L784.9 1409.8 L782.6 1401.2 L791.8 1396.0 L802.0 1398.6 L803.9 1406.1 Z' fill='#bcd6a4' opacity='0.75'/><path d='M819.9 1407.5 L810.8 1411.6 L808.8 1419.8 L800.5 1415.5 L795.7 1412.2 L796.1 1407.5 L797.0 1403.5 L800.6 1399.8 L807.8 1397.7 L817.7 1399.4 Z' fill='#bcd6a4' opacity='0.75'/><path d='M808.4 1406.0 L804.1 1410.4 L800.3 1415.2 L794.2 1411.7 L791.2 1409.0 L785.1 1406.0 L786.2 1400.0 L794.2 1400.3 L798.5 1400.9 L806.3 1400.2 Z' fill='#bcd6a4' opacity='0.75'/><path d='M807.9 1418.1 L808.4 1424.0 L800.8 1424.6 L795.4 1424.9 L788.5 1423.7 L780.1 1418.1 L783.3 1409.4 L793.0 1405.5 L802.9 1406.5 L810.0 1411.2 Z' fill='#bcd6a4' opacity='0.75'/><path d='M825.0 1413.9 L826.5 1421.1 L817.2 1421.4 L810.8 1422.2 L803.2 1420.3 L797.7 1413.9 L805.9 1409.1 L810.7 1405.4 L817.5 1405.7 L821.4 1409.7 Z' fill='#bcd6a4' opacity='0.75'/><path d='M823.3 1417.0 L820.5 1420.4 L817.5 1424.2 L811.2 1425.4 L809.7 1419.9 L805.8 1417.0 L809.3 1413.9 L811.5 1409.4 L817.7 1409.2 L820.1 1413.8 Z' fill='#bcd6a4' opacity='0.75'/><path d='M827.0 1404.2 L824.3 1410.5 L817.3 1413.9 L810.5 1411.3 L805.4 1408.8 L805.7 1404.2 L805.4 1399.5 L809.0 1393.4 L815.5 1399.0 L820.9 1399.8 Z' fill='#bcd6a4' opacity='0.75'/><path d='M824.4 1409.8 L819.6 1412.7 L818.1 1418.6 L811.4 1417.5 L804.4 1415.7 L802.7 1409.8 L804.8 1404.1 L812.1 1403.7 L817.0 1403.8 L823.3 1404.7 Z' fill='#bcd6a4' opacity='0.75'/><path d='M826.7 1407.4 L822.8 1413.2 L815.6 1414.2 L808.3 1418.5 L798.9 1415.4 L803.3 1407.4 L805.3 1403.0 L807.8 1395.1 L817.0 1397.0 L826.9 1399.2 Z' fill='#bcd6a4' opacity='0.75'/><path d='M837.4 1404.1 L837.1 1411.5 L829.4 1416.7 L819.7 1415.3 L808.4 1413.3 L806.2 1404.1 L808.4 1394.9 L820.5 1394.8 L829.0 1392.3 L837.2 1396.6 Z' fill='#bcd6a4' opacity='0.75'/><path d='M845.0 1382.6 L839.3 1387.6 L836.7 1397.2 L826.0 1394.4 L816.3 1391.0 L812.9 1382.6 L817.5 1374.9 L824.6 1367.3 L833.7 1375.5 L841.1 1376.6 Z' fill='#bcd6a4' opacity='0.75'/><path d='M827.5 1389.6 L827.1 1392.6 L824.0 1394.7 L819.0 1396.9 L814.7 1393.8 L813.0 1389.6 L817.5 1387.1 L819.0 1382.5 L824.2 1384.1 L826.8 1386.8 Z' fill='#bcd6a4' opacity='0.75'/><path d='M829.1 1376.8 L829.8 1381.8 L823.6 1382.8 L817.1 1386.8 L809.5 1383.6 L811.9 1376.8 L815.5 1373.5 L816.5 1365.2 L823.4 1371.4 L831.2 1371.0 Z' fill='#bcd6a4' opacity='0.75'/><path d='M852.4 1378.7 L856.4 1387.4 L847.9 1394.6 L835.0 1394.5 L825.1 1388.2 L826.7 1378.7 L828.7 1371.3 L835.2 1363.3 L845.8 1368.0 L851.5 1372.8 Z' fill='#bcd6a4' opacity='0.75'/><path d='M836.2 1369.5 L830.4 1372.9 L826.9 1375.2 L821.0 1378.6 L816.7 1374.2 L816.6 1369.5 L820.1 1366.9 L822.3 1363.8 L826.8 1364.2 L834.1 1364.1 Z' fill='#bcd6a4' opacity='0.75'/><path d='M842.8 1379.3 L847.3 1385.4 L838.7 1384.0 L833.1 1388.4 L828.3 1384.2 L828.9 1379.3 L826.8 1373.4 L834.0 1372.3 L841.0 1368.9 L845.0 1374.5 Z' fill='#bcd6a4' opacity='0.75'/><path d='M865.6 1375.8 L863.5 1381.8 L856.9 1385.0 L851.2 1380.7 L843.1 1381.6 L840.1 1375.8 L846.7 1372.0 L851.0 1370.4 L855.2 1370.6 L862.1 1370.6 Z' fill='#bcd6a4' opacity='0.75'/><path d='M849.8 1371.6 L844.8 1377.8 L837.3 1379.5 L831.6 1377.7 L825.7 1376.4 L822.0 1371.6 L822.4 1364.8 L829.6 1360.4 L837.0 1364.4 L839.5 1368.4 Z' fill='#bcd6a4' opacity='0.75'/><path d='M868.0 1365.9 L864.9 1373.8 L855.9 1377.1 L846.1 1378.8 L844.0 1370.2 L833.1 1365.9 L839.1 1358.8 L848.7 1359.3 L854.3 1358.7 L863.4 1358.9 Z' fill='#bcd6a4' opacity='0.75'/><path d='M854.4 1367.7 L852.7 1372.3 L848.9 1377.9 L842.3 1373.9 L834.3 1373.8 L833.2 1367.7 L836.4 1362.8 L840.6 1357.5 L848.8 1357.8 L854.3 1362.1 Z' fill='#bcd6a4' opacity='0.75'/><path d='M864.1 1348.9 L858.8 1351.8 L856.9 1356.7 L851.3 1355.0 L847.0 1352.8 L842.0 1348.9 L844.1 1343.3 L850.3 1340.4 L856.5 1342.2 L861.4 1344.4 Z' fill='#bcd6a4' opacity='0.75'/><path d='M876.2 1362.0 L881.9 1370.1 L870.4 1368.1 L865.2 1368.7 L856.1 1368.9 L858.3 1362.0 L855.3 1354.7 L863.3 1350.7 L870.8 1355.0 L881.9 1353.9 Z' fill='#bcd6a4' opacity='0.75'/><path d='M891.6 1354.4 L884.0 1362.0 L877.5 1370.4 L864.0 1371.6 L855.5 1363.5 L860.3 1354.4 L859.1 1347.5 L865.0 1339.8 L875.5 1343.3 L880.6 1348.9 Z' fill='#bcd6a4' opacity='0.75'/><path d='M867.3 1342.4 L870.8 1348.9 L862.3 1349.1 L854.7 1354.5 L853.3 1346.1 L846.7 1342.4 L849.1 1336.3 L856.9 1335.8 L863.6 1332.6 L869.4 1336.7 Z' fill='#bcd6a4' opacity='0.75'/><path d='M881.5 1340.5 L876.9 1346.5 L869.3 1347.4 L863.4 1348.1 L854.1 1347.7 L859.2 1340.5 L857.3 1335.1 L862.9 1331.5 L869.9 1332.1 L872.0 1337.3 Z' fill='#bcd6a4' opacity='0.75'/><path d='M865.4 1349.6 L864.9 1354.7 L858.2 1355.0 L853.7 1355.2 L844.2 1356.4 L842.0 1349.6 L849.1 1345.6 L853.0 1342.2 L858.3 1344.0 L863.8 1345.0 Z' fill='#bcd6a4' opacity='0.75'/><path d='M882.5 1343.2 L880.8 1351.1 L871.0 1352.8 L864.9 1348.8 L860.4 1347.0 L853.5 1343.2 L860.5 1339.3 L862.2 1331.0 L869.4 1337.5 L873.2 1339.7 Z' fill='#bcd6a4' opacity='0.75'/><path d='M893.2 1332.1 L886.6 1336.1 L883.1 1340.3 L876.4 1340.5 L867.8 1339.1 L864.5 1332.1 L868.1 1325.4 L877.0 1325.3 L883.5 1323.0 L893.4 1324.3 Z' fill='#bcd6a4' opacity='0.75'/><path d='M877.2 1326.3 L865.1 1330.0 L863.5 1337.8 L854.9 1335.9 L848.0 1332.6 L842.1 1326.3 L851.9 1322.3 L854.5 1315.6 L862.2 1318.0 L871.6 1318.9 Z' fill='#bcd6a4' opacity='0.75'/><path d='M883.7 1322.7 L881.3 1327.4 L876.0 1329.6 L870.0 1330.6 L863.6 1328.3 L866.5 1322.7 L865.1 1318.1 L869.8 1314.5 L875.3 1317.5 L882.5 1317.3 Z' fill='#bcd6a4' opacity='0.75'/><path d='M880.8 1327.7 L876.7 1335.5 L867.9 1339.6 L859.6 1336.3 L853.2 1333.4 L849.5 1327.7 L850.2 1320.2 L859.5 1318.7 L868.3 1314.8 L870.9 1323.1 Z' fill='#bcd6a4' opacity='0.75'/><path d='M876.0 1308.3 L873.2 1310.8 L871.7 1315.3 L865.8 1315.6 L862.4 1312.0 L857.9 1308.3 L861.5 1304.0 L865.7 1300.6 L870.6 1304.0 L874.9 1304.8 Z' fill='#bcd6a4' opacity='0.75'/><path d='M866.7 1303.8 L869.5 1311.5 L860.4 1314.1 L850.8 1317.0 L840.0 1313.1 L836.8 1303.8 L839.1 1293.8 L849.6 1287.7 L860.5 1293.2 L873.5 1293.7 Z' fill='#bcd6a4' opacity='0.75'/><path d='M886.2 1301.1 L886.5 1307.3 L877.9 1306.3 L871.6 1311.5 L866.3 1306.6 L864.8 1301.1 L868.2 1296.7 L872.9 1294.1 L878.7 1293.9 L885.6 1295.4 Z' fill='#bcd6a4' opacity='0.75'/><path d='M877.9 1304.2 L875.3 1308.5 L874.4 1320.3 L864.3 1312.9 L852.0 1313.3 L853.6 1304.2 L858.2 1298.6 L865.0 1297.2 L872.3 1293.1 L881.4 1296.3 Z' fill='#bcd6a4' opacity='0.75'/><path d='M472.6 1273.3 L470.3 1277.1 L465.3 1277.4 L461.7 1278.0 L458.5 1276.2 L455.7 1273.3 L459.1 1270.6 L461.8 1268.7 L465.8 1268.1 L467.9 1270.8 Z' fill='#c4dcae' opacity='0.7'/><path d='M535.5 1353.8 L536.2 1357.3 L533.0 1360.6 L528.3 1358.8 L524.2 1357.4 L521.5 1353.8 L524.3 1350.4 L528.4 1349.2 L533.7 1345.5 L534.6 1351.4 Z' fill='#c4dcae' opacity='0.7'/><path d='M624.2 1282.4 L621.6 1286.2 L618.1 1289.7 L611.6 1291.2 L609.2 1285.9 L609.7 1282.4 L609.9 1279.3 L611.6 1273.7 L618.1 1275.2 L623.7 1277.4 Z' fill='#c4dcae' opacity='0.7'/><path d='M533.4 1307.4 L533.8 1313.6 L525.4 1312.7 L520.6 1313.8 L514.1 1312.7 L510.2 1307.4 L515.6 1303.0 L519.5 1298.3 L525.2 1302.5 L532.0 1302.4 Z' fill='#c4dcae' opacity='0.7'/><path d='M517.6 1347.9 L517.0 1350.5 L515.0 1354.1 L510.0 1354.1 L505.0 1352.2 L506.1 1347.9 L509.0 1345.8 L509.8 1341.3 L514.2 1343.7 L519.1 1344.1 Z' fill='#c4dcae' opacity='0.7'/><path d='M544.8 1320.6 L545.8 1323.4 L542.4 1324.3 L538.9 1325.6 L535.9 1323.6 L535.8 1320.6 L535.3 1317.3 L540.0 1318.4 L542.3 1317.1 L545.1 1318.2 Z' fill='#c4dcae' opacity='0.7'/><path d='M469.8 1367.3 L467.4 1369.5 L465.2 1371.3 L461.8 1371.6 L459.7 1369.6 L459.3 1367.3 L458.2 1364.2 L461.6 1362.4 L464.7 1364.5 L470.1 1363.5 Z' fill='#c4dcae' opacity='0.7'/><path d='M478.9 1296.4 L478.3 1299.6 L475.7 1303.3 L471.5 1299.8 L467.1 1299.8 L465.4 1296.4 L468.5 1293.9 L471.0 1291.9 L474.9 1291.5 L480.1 1292.2 Z' fill='#c4dcae' opacity='0.7'/><path d='M596.7 1324.5 L597.5 1327.6 L593.7 1328.3 L590.7 1328.1 L587.4 1327.3 L588.9 1324.5 L587.4 1321.7 L590.3 1319.9 L593.2 1321.8 L596.1 1322.2 Z' fill='#c4dcae' opacity='0.7'/><path d='M613.6 1300.7 L613.4 1304.9 L608.6 1306.6 L603.9 1306.3 L596.8 1306.2 L596.3 1300.7 L596.4 1295.0 L603.9 1295.1 L608.8 1294.4 L612.3 1297.2 Z' fill='#c4dcae' opacity='0.7'/><path d='M615.1 1312.2 L616.2 1316.9 L610.5 1318.1 L604.2 1322.0 L601.3 1316.2 L594.9 1312.2 L599.9 1307.4 L605.6 1305.9 L611.2 1304.6 L618.7 1306.0 Z' fill='#c4dcae' opacity='0.7'/><path d='M587.0 1362.2 L582.3 1365.1 L580.8 1370.8 L574.3 1369.7 L569.3 1366.9 L570.0 1362.2 L568.6 1357.2 L574.5 1355.4 L579.6 1356.5 L587.4 1356.4 Z' fill='#c4dcae' opacity='0.7'/><path d='M603.8 1346.3 L599.2 1350.9 L595.9 1357.6 L586.9 1357.3 L581.4 1352.1 L581.2 1346.3 L582.6 1341.2 L589.3 1341.3 L595.7 1335.5 L602.4 1339.8 Z' fill='#c4dcae' opacity='0.7'/><path d='M566.0 1323.0 L567.5 1327.5 L562.3 1329.3 L556.2 1331.7 L552.3 1327.3 L548.3 1323.0 L548.4 1316.4 L556.7 1315.6 L561.9 1317.6 L564.7 1320.1 Z' fill='#c4dcae' opacity='0.7'/><path d='M607.3 1323.3 L606.8 1325.7 L604.0 1326.7 L599.3 1331.3 L598.6 1325.6 L595.8 1323.3 L596.3 1319.6 L600.0 1316.9 L604.4 1318.7 L609.7 1319.1 Z' fill='#c4dcae' opacity='0.7'/><path d='M572.1 1379.8 L570.6 1381.5 L569.0 1383.2 L566.4 1382.9 L565.0 1381.3 L560.8 1379.8 L564.1 1377.7 L565.6 1374.8 L569.8 1374.6 L573.1 1376.6 Z' fill='#c4dcae' opacity='0.7'/><path d='M470.4 1336.2 L467.9 1341.7 L461.5 1343.9 L454.2 1346.7 L449.4 1341.4 L448.9 1336.2 L449.7 1331.1 L455.1 1328.2 L460.9 1330.1 L468.4 1330.4 Z' fill='#c4dcae' opacity='0.7'/><path d='M606.8 1343.5 L607.1 1346.3 L603.4 1346.1 L600.9 1347.2 L597.8 1346.2 L597.4 1343.5 L599.0 1341.6 L601.5 1341.4 L604.1 1339.2 L605.2 1341.9 Z' fill='#c4dcae' opacity='0.7'/><path d='M567.6 1329.4 L572.1 1335.9 L564.6 1338.5 L556.9 1339.3 L555.0 1332.8 L549.2 1329.4 L553.7 1325.2 L557.3 1320.6 L564.5 1320.6 L568.3 1325.1 Z' fill='#c4dcae' opacity='0.7'/><path d='M632.0 1320.0 L627.1 1322.6 L625.8 1328.2 L620.3 1325.2 L613.8 1325.0 L616.8 1320.0 L618.0 1317.4 L619.8 1313.3 L624.4 1315.2 L628.7 1316.4 Z' fill='#c4dcae' opacity='0.7'/><path d='M501.1 1351.3 L495.2 1354.5 L491.5 1356.0 L486.3 1359.4 L484.3 1354.3 L477.8 1351.3 L481.2 1346.4 L485.4 1340.9 L493.5 1341.6 L498.7 1345.9 Z' fill='#c4dcae' opacity='0.7'/><path d='M605.4 1327.5 L607.6 1331.3 L603.5 1333.5 L598.8 1333.3 L595.5 1330.8 L594.6 1327.5 L593.6 1323.2 L599.2 1322.9 L602.6 1323.9 L608.7 1323.1 Z' fill='#c4dcae' opacity='0.7'/><path d='M600.5 1370.1 L596.2 1374.0 L593.0 1379.0 L585.8 1379.0 L580.8 1375.1 L574.8 1370.1 L581.9 1365.7 L584.3 1357.6 L592.1 1363.3 L597.2 1365.6 Z' fill='#c4dcae' opacity='0.7'/><path d='M609.6 1297.6 L609.0 1301.9 L604.5 1305.0 L599.1 1303.5 L591.3 1303.5 L588.0 1297.6 L590.7 1291.3 L599.4 1292.2 L603.4 1293.1 L609.2 1293.2 Z' fill='#c4dcae' opacity='0.7'/><path d='M602.0 1331.9 L596.5 1338.2 L588.5 1338.9 L582.3 1340.0 L579.7 1335.3 L575.1 1331.9 L574.3 1325.3 L582.6 1324.4 L588.3 1325.4 L595.3 1326.2 Z' fill='#c4dcae' opacity='0.7'/><path d='M618.5 1342.7 L616.8 1344.7 L615.5 1348.0 L611.7 1346.6 L609.1 1345.1 L606.0 1342.7 L609.6 1340.5 L611.7 1338.6 L615.7 1336.8 L617.1 1340.5 Z' fill='#c4dcae' opacity='0.7'/><path d='M557.9 1343.0 L555.3 1346.1 L552.8 1349.9 L547.6 1348.7 L543.1 1347.0 L542.4 1343.0 L543.2 1339.1 L547.9 1338.0 L551.5 1339.1 L555.1 1340.0 Z' fill='#c4dcae' opacity='0.7'/><path d='M522.3 1273.6 L520.0 1278.3 L515.6 1282.7 L509.8 1278.5 L506.2 1276.9 L499.8 1273.6 L506.8 1270.6 L507.7 1263.4 L515.0 1265.7 L523.4 1266.9 Z' fill='#c4dcae' opacity='0.7'/><path d='M613.6 1316.7 L613.9 1320.8 L608.9 1322.0 L604.1 1323.2 L598.5 1321.4 L598.1 1316.7 L600.9 1313.2 L604.1 1310.1 L609.0 1311.2 L613.0 1313.0 Z' fill='#c4dcae' opacity='0.7'/><path d='M541.2 1374.4 L538.7 1380.2 L531.2 1380.3 L524.9 1383.8 L515.7 1381.9 L519.5 1374.4 L517.0 1367.6 L525.8 1367.3 L533.0 1363.8 L536.5 1369.8 Z' fill='#c4dcae' opacity='0.7'/><path d='M566.3 1356.8 L564.0 1359.2 L561.1 1359.8 L558.6 1360.0 L555.7 1359.3 L553.9 1356.8 L556.9 1355.1 L558.9 1354.4 L561.1 1353.9 L564.4 1354.2 Z' fill='#c4dcae' opacity='0.7'/><path d='M534.5 1355.5 L534.3 1360.5 L527.8 1360.8 L522.3 1363.7 L516.6 1360.7 L517.9 1355.5 L516.5 1350.2 L523.5 1350.2 L529.9 1344.9 L534.0 1350.6 Z' fill='#c4dcae' opacity='0.7'/><path d='M625.5 1345.2 L623.5 1348.4 L619.7 1349.5 L615.7 1350.7 L611.8 1348.8 L610.7 1345.2 L614.1 1342.9 L615.3 1338.5 L620.6 1338.8 L622.8 1342.4 Z' fill='#c4dcae' opacity='0.7'/><path d='M624.1 1380.7 L623.4 1383.4 L621.0 1386.2 L617.2 1384.6 L614.3 1383.4 L610.2 1380.7 L615.3 1378.7 L616.4 1374.7 L620.8 1375.7 L625.7 1376.7 Z' fill='#c4dcae' opacity='0.7'/><path d='M503.7 1324.4 L506.6 1328.2 L501.7 1328.6 L498.4 1328.3 L493.1 1328.4 L494.4 1324.4 L494.7 1321.3 L498.6 1321.0 L501.8 1320.0 L506.7 1320.5 Z' fill='#c4dcae' opacity='0.7'/><path d='M609.3 1361.5 L606.3 1364.8 L603.0 1367.4 L596.7 1371.2 L591.1 1367.0 L590.6 1361.5 L589.9 1355.3 L597.9 1355.0 L604.4 1352.2 L609.1 1356.6 Z' fill='#c4dcae' opacity='0.7'/><path d='M486.4 1356.9 L484.8 1360.4 L480.5 1361.3 L477.0 1361.3 L475.1 1359.0 L474.5 1356.9 L473.1 1353.6 L477.1 1352.8 L480.7 1352.0 L483.1 1354.4 Z' fill='#c4dcae' opacity='0.7'/><path d='M510.9 1289.8 L507.1 1293.2 L505.4 1300.0 L499.1 1295.3 L495.0 1293.5 L494.1 1289.8 L492.7 1284.8 L497.4 1280.3 L503.2 1285.2 L512.5 1283.3 Z' fill='#c4dcae' opacity='0.7'/><path d='M586.2 1363.0 L583.0 1365.4 L580.8 1367.7 L575.8 1370.7 L573.8 1365.9 L568.5 1363.0 L570.9 1358.3 L575.7 1355.0 L580.6 1358.8 L584.8 1359.6 Z' fill='#c4dcae' opacity='0.7'/><path d='M606.1 1306.1 L607.6 1309.2 L604.3 1311.2 L600.7 1309.8 L598.0 1308.5 L595.0 1306.1 L598.4 1303.9 L599.7 1299.9 L604.9 1299.6 L607.1 1303.2 Z' fill='#c4dcae' opacity='0.7'/><path d='M481.7 1334.5 L483.7 1338.3 L479.4 1339.9 L475.4 1338.7 L472.8 1337.0 L469.0 1334.5 L469.6 1330.1 L475.3 1329.9 L479.4 1328.9 L481.4 1332.0 Z' fill='#c4dcae' opacity='0.7'/><path d='M544.2 1335.5 L542.5 1338.9 L538.0 1338.8 L535.2 1339.1 L531.5 1338.5 L531.8 1335.5 L530.9 1332.1 L534.4 1329.8 L539.1 1329.7 L544.1 1331.2 Z' fill='#c4dcae' opacity='0.7'/><path d='M569.5 1356.4 L568.3 1360.0 L564.0 1361.0 L559.9 1361.9 L557.4 1359.2 L556.9 1356.4 L558.9 1354.6 L560.4 1352.3 L564.2 1351.4 L567.8 1353.2 Z' fill='#c4dcae' opacity='0.7'/><path d='M623.2 1328.7 L618.5 1331.9 L616.3 1336.9 L609.3 1337.7 L601.5 1335.3 L604.0 1328.7 L607.4 1325.5 L608.7 1318.3 L615.6 1322.2 L625.0 1321.7 Z' fill='#c4dcae' opacity='0.7'/><path d='M565.0 1286.9 L559.9 1289.9 L558.3 1295.8 L553.0 1290.9 L549.8 1289.7 L545.5 1286.9 L546.8 1282.3 L551.8 1279.9 L558.2 1278.1 L559.8 1283.9 Z' fill='#c4dcae' opacity='0.7'/><path d='M468.8 1330.8 L467.5 1333.9 L465.1 1338.1 L460.3 1335.3 L455.3 1334.8 L454.5 1330.8 L457.4 1328.0 L459.1 1323.4 L463.9 1326.4 L467.0 1328.0 Z' fill='#c4dcae' opacity='0.7'/><path d='M496.8 1348.7 L493.5 1351.8 L491.5 1356.7 L485.6 1355.1 L480.1 1353.5 L477.3 1348.7 L483.7 1346.1 L486.4 1344.2 L492.0 1339.4 L498.5 1342.7 Z' fill='#c4dcae' opacity='0.7'/><path d='M479.5 1296.4 L474.8 1299.5 L472.8 1304.6 L467.9 1300.3 L461.1 1301.3 L464.6 1296.4 L462.7 1292.4 L466.2 1288.1 L472.4 1289.4 L478.0 1291.5 Z' fill='#c4dcae' opacity='0.7'/><path d='M525.5 1376.5 L527.6 1383.0 L521.1 1388.0 L513.8 1383.0 L508.2 1381.3 L502.7 1376.5 L506.8 1371.0 L511.8 1365.0 L519.7 1368.5 L525.1 1371.5 Z' fill='#c4dcae' opacity='0.7'/><path d='M492.5 1302.0 L495.6 1308.9 L488.0 1312.5 L480.1 1310.9 L476.3 1306.3 L477.4 1302.0 L477.7 1298.5 L479.4 1291.4 L488.4 1290.4 L496.1 1294.9 Z' fill='#c4dcae' opacity='0.7'/><path d='M510.8 1374.5 L512.4 1379.5 L506.9 1382.1 L501.0 1381.4 L498.6 1377.6 L498.5 1374.5 L499.1 1371.8 L501.8 1369.7 L505.6 1370.1 L510.6 1370.6 Z' fill='#c4dcae' opacity='0.7'/><path d='M519.7 1295.6 L515.1 1298.6 L511.9 1300.5 L506.4 1304.3 L504.5 1298.7 L498.4 1295.6 L504.6 1292.5 L506.6 1287.4 L513.7 1286.4 L519.1 1290.2 Z' fill='#c4dcae' opacity='0.7'/><path d='M507.2 1363.8 L505.3 1371.3 L497.5 1376.2 L489.2 1371.7 L482.6 1369.5 L481.6 1363.8 L480.7 1357.0 L489.8 1357.4 L495.2 1356.9 L501.5 1358.5 Z' fill='#c4dcae' opacity='0.7'/><path d='M554.9 1380.4 L556.0 1383.5 L553.7 1387.6 L549.3 1384.0 L544.9 1383.9 L543.0 1380.4 L543.4 1376.1 L548.9 1375.8 L553.2 1374.5 L558.8 1375.8 Z' fill='#c4dcae' opacity='0.7'/><path d='M635.0 1333.8 L633.8 1337.9 L629.5 1340.1 L624.4 1340.1 L621.7 1336.9 L618.4 1333.8 L621.8 1330.9 L625.2 1329.6 L628.4 1330.2 L633.0 1330.3 Z' fill='#c4dcae' opacity='0.7'/><path d='M490.4 1302.9 L489.4 1305.9 L487.2 1310.2 L482.1 1308.2 L478.4 1306.2 L477.9 1302.9 L478.5 1299.5 L481.6 1296.3 L486.4 1297.6 L489.9 1299.6 Z' fill='#c4dcae' opacity='0.7'/><path d='M520.5 1292.3 L520.6 1294.7 L517.6 1295.2 L514.6 1296.7 L511.0 1295.4 L512.2 1292.3 L510.2 1288.7 L514.6 1287.7 L518.5 1287.0 L521.2 1289.5 Z' fill='#c4dcae' opacity='0.7'/><path d='M601.1 1346.4 L598.9 1348.5 L597.3 1351.5 L593.7 1350.2 L591.8 1348.4 L591.8 1346.4 L588.9 1342.7 L594.1 1343.5 L596.6 1343.0 L601.4 1342.8 Z' fill='#c4dcae' opacity='0.7'/><path d='M472.0 1316.9 L470.9 1321.5 L466.4 1325.3 L461.0 1322.0 L458.9 1319.3 L457.1 1316.9 L459.3 1314.8 L461.1 1312.1 L465.7 1310.4 L471.5 1312.0 Z' fill='#c4dcae' opacity='0.7'/><path d='M483.5 1301.3 L479.8 1306.1 L473.8 1306.7 L469.5 1306.6 L464.8 1305.3 L459.5 1301.3 L466.0 1298.1 L468.2 1292.9 L476.0 1290.6 L476.8 1298.3 Z' fill='#c4dcae' opacity='0.7'/><path d='M935.3 1424.1 L932.7 1429.4 L926.4 1431.2 L920.9 1430.5 L914.8 1429.2 L914.1 1424.1 L912.7 1417.8 L920.4 1416.4 L926.8 1416.1 L932.6 1418.8 Z' fill='#c4dcae' opacity='0.7'/><path d='M993.3 1433.5 L994.0 1440.4 L984.9 1440.1 L979.1 1441.3 L970.6 1440.3 L969.2 1433.5 L973.5 1428.5 L979.6 1427.0 L984.5 1427.8 L989.9 1429.0 Z' fill='#c4dcae' opacity='0.7'/><path d='M972.1 1426.4 L971.3 1429.8 L966.8 1429.8 L963.0 1432.3 L958.8 1430.2 L960.3 1426.4 L961.0 1423.8 L964.1 1423.2 L967.4 1421.3 L971.8 1422.7 Z' fill='#c4dcae' opacity='0.7'/><path d='M967.0 1445.1 L965.9 1448.0 L964.0 1452.6 L956.9 1455.2 L951.7 1450.5 L951.6 1445.1 L954.7 1441.4 L958.9 1440.0 L964.4 1436.7 L970.6 1439.5 Z' fill='#c4dcae' opacity='0.7'/><path d='M963.5 1384.8 L962.3 1388.9 L957.3 1389.7 L952.4 1391.9 L950.1 1387.8 L951.0 1384.8 L951.0 1382.3 L952.4 1377.7 L957.8 1378.5 L959.0 1382.7 Z' fill='#c4dcae' opacity='0.7'/><path d='M928.5 1421.9 L932.8 1427.4 L926.0 1428.7 L921.1 1427.2 L918.9 1424.4 L913.9 1421.9 L913.6 1416.2 L920.0 1414.0 L926.7 1413.2 L932.5 1416.5 Z' fill='#c4dcae' opacity='0.7'/><path d='M1045.1 1381.4 L1042.7 1384.6 L1038.9 1385.7 L1035.8 1385.0 L1029.5 1386.0 L1028.9 1381.4 L1032.3 1378.6 L1035.0 1376.0 L1040.2 1374.1 L1041.4 1379.0 Z' fill='#c4dcae' opacity='0.7'/><path d='M1041.7 1402.5 L1040.0 1410.5 L1029.8 1410.9 L1022.5 1411.9 L1017.9 1407.4 L1015.6 1402.5 L1012.6 1394.5 L1021.1 1389.5 L1031.7 1389.3 L1039.7 1394.8 Z' fill='#c4dcae' opacity='0.7'/><path d='M995.9 1453.7 L997.8 1461.5 L989.1 1465.4 L981.2 1461.3 L975.6 1458.8 L970.1 1453.7 L977.2 1449.5 L981.3 1446.2 L987.2 1446.7 L991.0 1449.8 Z' fill='#c4dcae' opacity='0.7'/><path d='M1122.0 1494.0 L1121.7 1500.6 L1114.6 1504.2 L1107.0 1502.4 L1100.9 1499.6 L1102.5 1494.0 L1103.1 1489.8 L1107.3 1486.4 L1113.6 1486.3 L1121.0 1487.9 Z' fill='#c4dcae' opacity='0.7'/><path d='M924.6 1403.1 L923.0 1410.8 L914.3 1414.4 L907.0 1409.9 L900.1 1408.7 L894.3 1403.1 L897.5 1395.9 L906.9 1396.0 L913.4 1394.0 L920.2 1397.0 Z' fill='#c4dcae' opacity='0.7'/><path d='M852.8 1403.8 L848.8 1408.7 L843.9 1412.6 L836.9 1412.3 L832.7 1408.2 L833.3 1403.8 L829.7 1397.6 L836.2 1393.6 L843.5 1395.9 L851.2 1397.5 Z' fill='#c4dcae' opacity='0.7'/><path d='M1102.1 1457.4 L1091.8 1460.7 L1091.0 1469.4 L1082.7 1465.8 L1074.6 1464.0 L1072.3 1457.4 L1080.0 1453.8 L1082.3 1448.0 L1088.4 1451.7 L1097.2 1450.9 Z' fill='#c4dcae' opacity='0.7'/><path d='M947.8 1419.7 L945.3 1423.4 L940.8 1424.1 L936.4 1426.1 L934.8 1422.1 L930.2 1419.7 L932.8 1416.1 L936.3 1413.1 L941.4 1413.8 L947.0 1415.0 Z' fill='#c4dcae' opacity='0.7'/><path d='M1056.4 1430.1 L1052.6 1433.9 L1048.7 1436.3 L1042.5 1439.3 L1036.3 1435.9 L1032.8 1430.1 L1037.2 1424.9 L1043.2 1422.8 L1049.0 1423.4 L1055.4 1424.8 Z' fill='#c4dcae' opacity='0.7'/><path d='M1042.3 1487.5 L1039.6 1491.7 L1034.5 1492.7 L1028.2 1497.8 L1024.1 1492.4 L1022.4 1487.5 L1026.9 1484.3 L1029.0 1479.2 L1036.9 1476.4 L1039.6 1483.3 Z' fill='#c4dcae' opacity='0.7'/><path d='M1071.8 1465.5 L1067.3 1469.3 L1064.4 1474.4 L1057.4 1473.8 L1049.2 1472.2 L1050.4 1465.5 L1053.5 1461.2 L1056.5 1455.0 L1064.3 1456.9 L1067.9 1461.3 Z' fill='#c4dcae' opacity='0.7'/><path d='M1041.0 1392.9 L1037.6 1395.7 L1035.1 1398.9 L1031.1 1396.5 L1027.6 1395.8 L1027.7 1392.9 L1026.2 1389.1 L1030.5 1387.7 L1034.4 1388.5 L1037.2 1390.2 Z' fill='#c4dcae' opacity='0.7'/><path d='M909.4 1399.8 L906.3 1403.1 L903.5 1407.0 L897.5 1407.5 L888.6 1406.8 L891.1 1399.8 L892.8 1395.3 L896.1 1388.6 L904.5 1390.3 L908.8 1395.0 Z' fill='#c4dcae' opacity='0.7'/><path d='M962.7 1401.6 L962.3 1404.7 L958.1 1404.6 L955.0 1406.1 L953.3 1403.6 L950.3 1401.6 L952.6 1399.1 L954.7 1396.4 L959.1 1395.9 L961.3 1399.0 Z' fill='#c4dcae' opacity='0.7'/><path d='M959.4 1384.0 L958.8 1387.9 L953.6 1387.5 L949.4 1391.0 L945.1 1388.2 L946.4 1384.0 L946.8 1380.9 L949.9 1378.4 L953.9 1379.8 L956.9 1381.3 Z' fill='#c4dcae' opacity='0.7'/><path d='M1063.1 1432.6 L1058.8 1435.3 L1056.8 1438.8 L1052.1 1437.9 L1049.4 1435.4 L1045.7 1432.6 L1046.3 1428.0 L1051.6 1426.1 L1056.8 1426.2 L1062.0 1428.1 Z' fill='#c4dcae' opacity='0.7'/><path d='M967.8 1492.1 L969.5 1495.4 L966.3 1497.9 L962.1 1496.6 L959.1 1494.9 L958.3 1492.1 L959.8 1489.7 L961.4 1485.9 L966.6 1485.6 L968.2 1489.6 Z' fill='#c4dcae' opacity='0.7'/><path d='M1013.9 1429.6 L1011.8 1432.5 L1009.5 1435.9 L1004.5 1435.6 L1000.6 1433.3 L1002.3 1429.6 L1003.8 1427.8 L1004.7 1424.0 L1008.2 1426.7 L1012.4 1426.5 Z' fill='#c4dcae' opacity='0.7'/><path d='M893.3 1459.0 L895.4 1462.2 L891.5 1463.0 L888.3 1462.8 L884.0 1462.4 L883.4 1459.0 L886.6 1457.1 L888.0 1454.4 L891.3 1455.4 L893.9 1456.6 Z' fill='#c4dcae' opacity='0.7'/><path d='M937.1 1401.8 L935.6 1404.3 L934.2 1409.1 L929.2 1406.8 L925.1 1405.4 L922.1 1401.8 L924.5 1397.9 L929.6 1397.9 L934.3 1394.1 L939.2 1397.1 Z' fill='#c4dcae' opacity='0.7'/><path d='M1102.7 1414.1 L1095.3 1417.4 L1092.9 1422.0 L1085.4 1424.4 L1079.9 1419.7 L1073.6 1414.1 L1077.9 1407.2 L1085.0 1402.7 L1094.7 1401.6 L1097.8 1409.3 Z' fill='#c4dcae' opacity='0.7'/><path d='M1117.7 1374.9 L1119.5 1380.3 L1113.6 1383.1 L1108.0 1380.4 L1100.0 1380.9 L1096.1 1374.9 L1103.2 1370.8 L1107.5 1368.1 L1114.6 1364.3 L1119.7 1369.4 Z' fill='#c4dcae' opacity='0.7'/><path d='M852.8 1411.3 L851.0 1416.2 L846.3 1420.5 L837.4 1424.0 L829.7 1418.8 L831.2 1411.3 L831.0 1404.6 L840.2 1405.5 L845.1 1405.2 L851.7 1406.0 Z' fill='#c4dcae' opacity='0.7'/><path d='M1034.5 1391.4 L1030.9 1393.2 L1028.9 1393.9 L1026.8 1394.0 L1025.2 1393.0 L1023.7 1391.4 L1023.5 1388.9 L1026.1 1387.0 L1029.2 1388.2 L1032.1 1389.0 Z' fill='#c4dcae' opacity='0.7'/><path d='M943.3 1444.0 L939.7 1445.6 L939.5 1449.9 L935.8 1447.3 L932.3 1446.8 L932.9 1444.0 L932.7 1441.5 L935.7 1440.6 L939.1 1439.2 L942.8 1440.7 Z' fill='#c4dcae' opacity='0.7'/><path d='M1100.1 1491.2 L1097.3 1494.7 L1093.4 1496.6 L1088.6 1497.8 L1081.6 1496.8 L1085.9 1491.2 L1082.9 1486.4 L1089.0 1485.7 L1094.1 1484.2 L1096.8 1488.0 Z' fill='#c4dcae' opacity='0.7'/><path d='M1060.4 1434.0 L1056.8 1436.0 L1054.9 1437.7 L1050.3 1441.5 L1049.5 1436.2 L1046.7 1434.0 L1046.6 1430.1 L1052.0 1430.6 L1056.5 1426.4 L1057.9 1431.4 Z' fill='#c4dcae' opacity='0.7'/><path d='M1137.1 1426.5 L1131.8 1429.5 L1129.7 1433.9 L1123.1 1435.4 L1117.0 1432.1 L1115.1 1426.5 L1117.7 1421.3 L1124.6 1421.5 L1129.4 1419.8 L1134.5 1422.0 Z' fill='#c4dcae' opacity='0.7'/><path d='M855.2 1466.3 L852.9 1468.4 L850.5 1469.3 L846.9 1472.2 L844.3 1469.2 L842.6 1466.3 L844.3 1463.4 L847.4 1461.8 L851.5 1460.7 L852.1 1464.6 Z' fill='#c4dcae' opacity='0.7'/><path d='M959.8 1400.8 L961.6 1407.0 L953.3 1406.5 L948.5 1406.8 L940.3 1407.0 L939.4 1400.8 L943.6 1396.5 L948.3 1394.2 L954.5 1392.0 L956.5 1397.6 Z' fill='#c4dcae' opacity='0.7'/><path d='M1061.6 1401.7 L1066.8 1409.0 L1058.9 1413.1 L1052.2 1407.0 L1047.7 1405.6 L1038.8 1401.7 L1042.5 1394.9 L1051.4 1394.6 L1058.7 1390.8 L1064.2 1396.0 Z' fill='#c4dcae' opacity='0.7'/><path d='M917.1 1456.9 L920.0 1461.9 L914.4 1464.3 L909.4 1461.8 L905.1 1460.6 L901.9 1456.9 L905.5 1453.5 L909.4 1452.0 L914.0 1450.6 L920.5 1451.6 Z' fill='#c4dcae' opacity='0.7'/><path d='M878.0 1404.8 L875.7 1410.6 L867.2 1408.7 L862.6 1412.2 L860.7 1407.6 L859.0 1404.8 L860.7 1401.9 L862.9 1398.1 L869.5 1395.3 L875.5 1399.0 Z' fill='#c4dcae' opacity='0.7'/><path d='M954.3 1482.1 L958.9 1488.7 L950.2 1488.6 L943.0 1493.3 L941.7 1485.5 L933.5 1482.1 L939.0 1477.2 L944.3 1474.1 L949.9 1476.3 L955.9 1477.3 Z' fill='#c4dcae' opacity='0.7'/><path d='M1078.9 1441.2 L1079.6 1449.3 L1068.4 1448.0 L1060.8 1453.0 L1054.3 1447.8 L1048.6 1441.2 L1056.6 1436.0 L1061.8 1431.7 L1070.7 1428.8 L1073.9 1436.4 Z' fill='#c4dcae' opacity='0.7'/><path d='M958.9 1475.9 L953.7 1478.8 L952.7 1485.4 L946.0 1483.1 L942.5 1479.6 L939.7 1475.9 L943.2 1472.6 L944.8 1466.0 L952.8 1466.3 L960.3 1469.3 Z' fill='#c4dcae' opacity='0.7'/><path d='M1051.6 1393.9 L1043.8 1396.2 L1042.1 1399.4 L1038.1 1398.3 L1035.1 1396.7 L1033.2 1393.9 L1032.6 1389.6 L1038.3 1389.9 L1043.3 1385.7 L1046.2 1390.2 Z' fill='#c4dcae' opacity='0.7'/><path d='M897.1 1386.7 L896.5 1391.0 L891.0 1391.4 L886.7 1392.8 L881.7 1391.0 L883.2 1386.7 L881.7 1382.4 L885.5 1377.8 L892.2 1379.3 L894.2 1383.8 Z' fill='#c4dcae' opacity='0.7'/><path d='M1030.5 1384.5 L1032.0 1387.4 L1028.4 1387.8 L1025.6 1388.2 L1023.8 1386.4 L1019.1 1384.5 L1023.7 1382.6 L1024.9 1379.3 L1029.4 1378.8 L1031.6 1381.8 Z' fill='#c4dcae' opacity='0.7'/><path d='M1025.7 1414.5 L1018.4 1418.0 L1016.6 1424.8 L1009.9 1420.6 L1003.2 1419.8 L1003.9 1414.5 L1003.2 1409.1 L1008.3 1404.6 L1016.6 1404.0 L1020.3 1409.9 Z' fill='#c4dcae' opacity='0.7'/><path d='M866.4 1428.5 L864.5 1434.9 L858.2 1440.0 L849.2 1439.0 L839.7 1436.5 L836.4 1428.5 L841.5 1421.5 L848.7 1416.7 L856.2 1421.9 L861.5 1423.9 Z' fill='#c4dcae' opacity='0.7'/><path d='M1065.7 1444.1 L1059.3 1448.9 L1053.7 1450.6 L1046.8 1454.4 L1044.5 1447.9 L1039.1 1444.1 L1043.2 1439.5 L1047.6 1435.8 L1055.2 1433.8 L1061.7 1437.9 Z' fill='#c4dcae' opacity='0.7'/><path d='M1037.2 1381.9 L1036.1 1389.5 L1027.0 1392.0 L1018.6 1392.3 L1009.8 1389.5 L1008.2 1381.9 L1011.9 1375.5 L1020.6 1376.2 L1025.1 1376.3 L1034.5 1375.1 Z' fill='#c4dcae' opacity='0.7'/><path d='M1098.1 1420.9 L1098.7 1424.8 L1094.4 1426.9 L1090.6 1424.3 L1088.0 1423.2 L1087.1 1420.9 L1085.6 1417.2 L1090.4 1417.0 L1094.6 1414.3 L1096.8 1418.0 Z' fill='#c4dcae' opacity='0.7'/><path d='M902.9 1424.3 L898.0 1426.0 L896.8 1428.5 L893.5 1428.4 L892.2 1426.0 L890.6 1424.3 L888.4 1420.4 L892.8 1418.5 L896.8 1420.1 L901.4 1420.7 Z' fill='#c4dcae' opacity='0.7'/><path d='M1121.8 1477.3 L1119.2 1482.4 L1114.3 1487.0 L1106.8 1486.2 L1098.2 1484.4 L1102.5 1477.3 L1098.7 1470.5 L1106.3 1467.3 L1113.6 1469.5 L1121.7 1470.7 Z' fill='#c4dcae' opacity='0.7'/><path d='M936.5 1421.4 L929.2 1425.0 L927.0 1430.8 L919.8 1429.7 L912.7 1427.5 L915.3 1421.4 L914.4 1416.3 L919.3 1411.8 L927.1 1411.8 L932.2 1416.2 Z' fill='#c4dcae' opacity='0.7'/><path d='M1096.7 1450.5 L1097.4 1455.0 L1093.8 1460.5 L1085.8 1460.3 L1085.1 1453.2 L1082.0 1450.5 L1083.9 1447.1 L1086.1 1441.3 L1091.9 1445.3 L1099.0 1445.1 Z' fill='#c4dcae' opacity='0.7'/><path d='M904.9 1415.3 L907.2 1421.7 L899.3 1423.2 L891.3 1427.2 L889.5 1419.1 L881.3 1415.3 L887.8 1410.5 L890.6 1401.8 L899.5 1406.9 L907.9 1408.4 Z' fill='#c4dcae' opacity='0.7'/><path d='M859.2 1487.1 L855.4 1492.7 L847.6 1491.9 L842.0 1496.3 L838.4 1491.3 L838.2 1487.1 L834.9 1480.8 L842.2 1478.4 L848.4 1480.4 L850.9 1484.1 Z' fill='#c4dcae' opacity='0.7'/><path d='M1036.6 1381.7 L1036.4 1384.0 L1034.9 1387.9 L1030.7 1385.9 L1024.7 1386.2 L1026.9 1381.7 L1025.6 1377.8 L1029.9 1375.6 L1034.7 1376.0 L1038.3 1378.3 Z' fill='#c4dcae' opacity='0.7'/><path d='M891.9 1473.8 L886.5 1478.1 L881.6 1480.0 L876.1 1481.3 L865.1 1482.0 L868.6 1473.8 L870.9 1469.0 L875.2 1464.2 L881.5 1468.1 L891.6 1466.5 Z' fill='#c4dcae' opacity='0.7'/><path d='M1078.3 1411.4 L1076.7 1414.4 L1073.5 1416.1 L1070.5 1414.3 L1066.1 1414.7 L1066.1 1411.4 L1069.2 1410.0 L1069.5 1406.1 L1073.4 1407.0 L1074.6 1409.7 Z' fill='#c4dcae' opacity='0.7'/><path d='M1111.1 1446.1 L1111.2 1449.7 L1108.9 1455.6 L1103.2 1450.6 L1099.0 1449.6 L1098.7 1446.1 L1096.4 1441.0 L1102.9 1440.8 L1108.9 1436.6 L1112.8 1441.6 Z' fill='#c4dcae' opacity='0.7'/><path d='M1082.0 1483.9 L1081.7 1489.3 L1077.4 1496.1 L1069.1 1492.3 L1058.3 1492.2 L1061.4 1483.9 L1061.0 1477.3 L1069.3 1476.2 L1077.2 1472.3 L1081.0 1479.0 Z' fill='#c4dcae' opacity='0.7'/><path d='M972.2 1461.2 L970.9 1465.1 L966.8 1467.9 L959.7 1472.0 L953.3 1467.4 L950.3 1461.2 L952.2 1454.3 L961.3 1454.3 L967.7 1452.3 L969.6 1458.0 Z' fill='#c4dcae' opacity='0.7'/><path d='M951.7 1446.5 L947.3 1449.0 L945.1 1451.5 L940.6 1452.6 L938.8 1449.0 L935.2 1446.5 L937.9 1443.6 L941.7 1443.3 L944.5 1443.0 L949.4 1442.9 Z' fill='#c4dcae' opacity='0.7'/><path d='M1098.2 1456.0 L1096.5 1462.9 L1089.3 1467.6 L1080.6 1465.8 L1074.7 1461.7 L1076.1 1456.0 L1077.1 1451.6 L1082.2 1450.1 L1087.1 1449.9 L1093.4 1450.9 Z' fill='#c4dcae' opacity='0.7'/><path d='M934.4 1442.0 L937.5 1449.3 L929.6 1453.3 L922.3 1448.5 L914.9 1447.9 L916.3 1442.0 L919.0 1438.5 L922.3 1435.2 L927.7 1435.3 L930.5 1438.8 Z' fill='#c4dcae' opacity='0.7'/><path d='M860.3 1471.2 L850.9 1474.8 L846.9 1476.7 L839.9 1483.1 L836.1 1476.3 L834.4 1471.2 L833.4 1464.7 L841.0 1461.9 L847.9 1463.5 L851.6 1467.3 Z' fill='#c4dcae' opacity='0.7'/><path d='M879.1 1459.9 L879.2 1464.3 L875.5 1469.4 L868.6 1467.4 L861.8 1465.6 L859.3 1459.9 L863.7 1455.2 L869.0 1453.5 L875.1 1451.1 L884.1 1452.6 Z' fill='#c4dcae' opacity='0.7'/><path d='M890.8 1439.0 L886.8 1443.7 L883.5 1450.9 L874.3 1449.8 L865.5 1446.7 L869.1 1439.0 L869.5 1433.7 L875.3 1430.6 L883.2 1427.8 L888.9 1433.1 Z' fill='#c4dcae' opacity='0.7'/><path d='M1013.3 1436.2 L1009.4 1440.2 L1005.4 1442.9 L999.7 1443.5 L996.2 1440.0 L985.6 1436.2 L992.3 1430.2 L997.9 1424.6 L1006.2 1427.3 L1012.6 1430.4 Z' fill='#c4dcae' opacity='0.7'/><path d='M912.4 1481.2 L912.9 1485.9 L908.2 1489.5 L901.2 1490.1 L898.3 1485.1 L897.1 1481.2 L896.3 1476.3 L902.5 1475.4 L906.7 1476.5 L911.4 1477.4 Z' fill='#c4dcae' opacity='0.7'/><path d='M938.9 1405.4 L939.1 1411.2 L932.0 1412.5 L926.8 1411.2 L917.9 1411.9 L915.4 1405.4 L918.5 1399.3 L925.3 1396.1 L931.6 1399.3 L938.2 1400.2 Z' fill='#c4dcae' opacity='0.7'/><path d='M1098.5 1468.5 L1093.4 1471.8 L1089.6 1473.1 L1083.9 1478.0 L1083.1 1471.2 L1080.1 1468.5 L1080.6 1464.3 L1084.3 1459.9 L1091.2 1459.9 L1098.0 1462.5 Z' fill='#c4dcae' opacity='0.7'/><path d='M1121.5 1407.1 L1121.6 1409.9 L1118.3 1410.6 L1114.0 1414.3 L1111.0 1410.5 L1110.1 1407.1 L1113.4 1405.1 L1114.1 1400.1 L1118.5 1403.0 L1123.7 1403.2 Z' fill='#c4dcae' opacity='0.7'/><path d='M904.7 1407.0 L902.5 1409.3 L900.6 1411.8 L896.5 1412.3 L895.0 1409.1 L894.6 1407.0 L893.8 1404.2 L897.0 1402.9 L900.4 1402.7 L902.9 1404.5 Z' fill='#c4dcae' opacity='0.7'/><path d='M898.7 1389.3 L896.8 1395.2 L890.4 1398.5 L883.3 1397.6 L880.2 1393.1 L872.1 1389.3 L877.7 1384.1 L883.4 1381.4 L889.3 1382.7 L894.5 1384.7 Z' fill='#c4dcae' opacity='0.7'/><path d='M1140.1 1423.2 L1142.3 1429.1 L1135.1 1430.3 L1129.5 1430.0 L1124.5 1427.7 L1121.8 1423.2 L1121.9 1417.2 L1129.0 1415.2 L1136.9 1411.9 L1138.8 1419.4 Z' fill='#c4dcae' opacity='0.7'/><path d='M1104.8 1426.9 L1101.8 1431.1 L1099.1 1438.4 L1090.6 1436.5 L1083.6 1433.2 L1082.9 1426.9 L1083.7 1420.6 L1089.6 1414.9 L1098.7 1416.5 L1107.3 1419.4 Z' fill='#c4dcae' opacity='0.7'/><path d='M957.7 1410.3 L955.2 1417.8 L945.7 1419.0 L938.7 1418.8 L928.7 1418.1 L933.1 1410.3 L935.2 1406.2 L939.5 1403.6 L945.3 1402.6 L951.3 1405.0 Z' fill='#c4dcae' opacity='0.7'/><path d='M956.7 1429.7 L956.4 1432.1 L953.3 1432.1 L950.8 1433.5 L946.8 1432.9 L946.6 1429.7 L946.7 1426.4 L950.3 1424.7 L953.9 1425.9 L954.8 1428.3 Z' fill='#c4dcae' opacity='0.7'/><path d='M865.0 1443.6 L861.5 1447.4 L859.4 1454.5 L851.2 1452.8 L845.7 1449.0 L846.9 1443.6 L845.0 1437.8 L851.1 1434.1 L859.2 1433.1 L867.7 1436.2 Z' fill='#c4dcae' opacity='0.7'/><path d='M719.7 1394.8 L718.1 1397.7 L715.9 1401.6 L711.1 1399.9 L709.5 1397.0 L706.3 1394.8 L709.2 1392.5 L711.9 1391.7 L714.5 1391.5 L718.3 1391.9 Z' fill='#c2daab' opacity='0.7'/><path d='M785.0 1292.6 L782.1 1295.4 L779.8 1298.7 L775.5 1297.1 L770.9 1296.3 L770.6 1292.6 L773.1 1290.2 L776.2 1289.9 L778.5 1289.5 L783.1 1289.3 Z' fill='#c2daab' opacity='0.7'/><path d='M820.1 1329.1 L820.0 1332.9 L814.9 1332.7 L810.9 1335.5 L808.5 1332.0 L809.0 1329.1 L810.0 1327.1 L811.3 1323.8 L815.9 1323.0 L817.1 1327.0 Z' fill='#c2daab' opacity='0.7'/><path d='M745.7 1310.1 L745.6 1312.9 L742.4 1313.8 L738.7 1315.5 L737.0 1312.4 L735.9 1310.1 L736.2 1307.4 L739.5 1306.7 L742.1 1307.2 L744.2 1308.2 Z' fill='#c2daab' opacity='0.7'/><path d='M706.1 1375.5 L706.5 1378.7 L702.8 1379.8 L699.7 1378.8 L697.3 1377.7 L696.3 1375.5 L697.5 1373.5 L700.1 1373.1 L702.2 1372.8 L703.9 1373.8 Z' fill='#c2daab' opacity='0.7'/><path d='M741.8 1333.3 L739.1 1335.2 L737.5 1337.5 L733.8 1338.1 L731.4 1335.8 L729.2 1333.3 L730.3 1330.1 L734.2 1329.3 L737.1 1330.1 L738.5 1331.7 Z' fill='#c2daab' opacity='0.7'/><path d='M823.1 1337.8 L822.7 1340.1 L821.5 1344.7 L816.6 1342.9 L811.6 1341.9 L809.9 1337.8 L814.4 1335.3 L817.1 1333.8 L821.5 1330.9 L823.0 1335.3 Z' fill='#c2daab' opacity='0.7'/><path d='M810.1 1407.8 L811.6 1413.1 L805.8 1415.8 L799.2 1416.2 L794.9 1412.3 L796.4 1407.8 L798.5 1405.5 L801.1 1404.2 L805.9 1399.5 L809.3 1403.9 Z' fill='#c2daab' opacity='0.7'/><path d='M860.3 1410.4 L855.5 1412.9 L852.7 1414.0 L849.7 1414.4 L843.9 1414.7 L842.4 1410.4 L846.7 1407.8 L849.3 1405.6 L853.8 1404.2 L857.8 1406.6 Z' fill='#c2daab' opacity='0.7'/><path d='M860.2 1337.1 L860.8 1341.2 L855.9 1342.5 L851.1 1343.5 L849.8 1339.4 L847.3 1337.1 L846.7 1333.1 L851.6 1332.0 L856.2 1331.1 L860.2 1333.3 Z' fill='#c2daab' opacity='0.7'/><path d='M785.1 1377.4 L783.9 1382.0 L779.7 1386.7 L772.0 1387.1 L764.9 1383.8 L767.3 1377.4 L766.9 1372.2 L772.8 1369.7 L779.8 1367.9 L782.0 1373.8 Z' fill='#c2daab' opacity='0.7'/><path d='M792.4 1324.1 L785.0 1326.9 L782.2 1329.4 L777.8 1329.6 L770.9 1329.4 L767.2 1324.1 L772.7 1319.8 L778.0 1318.9 L783.5 1315.5 L789.4 1318.7 Z' fill='#c2daab' opacity='0.7'/><path d='M779.4 1325.9 L781.2 1330.2 L775.8 1330.8 L771.2 1332.3 L767.7 1329.4 L768.2 1325.9 L769.1 1323.1 L771.3 1319.6 L776.7 1318.7 L781.7 1321.3 Z' fill='#c2daab' opacity='0.7'/><path d='M730.6 1324.4 L730.5 1326.8 L728.5 1329.4 L724.3 1330.0 L721.8 1327.2 L722.7 1324.4 L722.6 1322.1 L725.4 1321.5 L727.9 1321.1 L731.2 1321.7 Z' fill='#c2daab' opacity='0.7'/><path d='M795.0 1313.7 L792.0 1317.2 L788.3 1319.3 L784.2 1318.1 L781.5 1316.3 L777.8 1313.7 L782.8 1311.8 L783.7 1307.9 L788.9 1306.6 L792.1 1310.2 Z' fill='#c2daab' opacity='0.7'/><path d='M716.1 1296.7 L716.3 1301.2 L712.1 1305.6 L704.8 1305.7 L701.6 1300.7 L696.5 1296.7 L697.2 1290.1 L705.3 1289.0 L711.4 1289.5 L718.1 1291.1 Z' fill='#c2daab' opacity='0.7'/><path d='M863.6 1377.1 L862.3 1384.5 L852.3 1383.9 L845.5 1387.0 L842.6 1381.1 L841.9 1377.1 L841.6 1372.5 L844.7 1365.2 L852.5 1370.0 L857.3 1372.6 Z' fill='#c2daab' opacity='0.7'/><path d='M867.6 1413.4 L869.2 1419.5 L860.7 1418.3 L856.9 1418.0 L853.5 1416.4 L850.0 1413.4 L852.3 1409.7 L854.6 1403.4 L861.7 1406.0 L869.4 1407.2 Z' fill='#c2daab' opacity='0.7'/><path d='M788.1 1338.4 L789.2 1341.6 L786.7 1345.9 L780.6 1346.0 L775.8 1342.9 L778.9 1338.4 L778.1 1335.1 L780.8 1331.4 L785.2 1334.5 L787.3 1336.2 Z' fill='#c2daab' opacity='0.7'/><path d='M747.2 1302.9 L746.9 1309.5 L737.3 1307.6 L731.8 1311.8 L725.3 1308.8 L728.1 1302.9 L730.2 1299.8 L731.1 1292.2 L739.3 1293.4 L740.6 1299.9 Z' fill='#c2daab' opacity='0.7'/><path d='M737.9 1373.6 L735.6 1375.6 L733.4 1376.6 L730.4 1378.1 L727.2 1376.5 L724.5 1373.6 L729.4 1372.0 L730.6 1369.6 L733.4 1370.7 L737.3 1370.7 Z' fill='#c2daab' opacity='0.7'/><path d='M741.6 1333.3 L739.3 1339.5 L732.4 1342.9 L725.8 1339.9 L717.6 1339.6 L712.2 1333.3 L722.3 1329.7 L723.9 1321.9 L731.6 1325.6 L735.5 1329.2 Z' fill='#c2daab' opacity='0.7'/><path d='M816.7 1397.3 L817.1 1400.1 L813.6 1400.7 L810.4 1401.8 L805.5 1401.2 L808.7 1397.3 L807.7 1394.7 L810.9 1393.9 L813.6 1394.1 L817.4 1394.3 Z' fill='#c2daab' opacity='0.7'/><path d='M872.4 1350.4 L871.4 1355.7 L866.0 1359.6 L859.9 1356.1 L857.1 1353.3 L850.5 1350.4 L854.6 1345.9 L858.7 1341.6 L864.1 1345.7 L871.0 1345.3 Z' fill='#c2daab' opacity='0.7'/><path d='M725.4 1308.8 L724.7 1311.2 L722.4 1313.6 L718.1 1314.6 L716.2 1311.2 L714.5 1308.8 L716.2 1306.3 L718.9 1304.9 L721.8 1305.3 L723.1 1307.2 Z' fill='#c2daab' opacity='0.7'/><path d='M756.0 1381.5 L752.0 1386.2 L746.9 1388.9 L741.6 1387.4 L737.3 1385.4 L729.1 1381.5 L734.9 1376.3 L741.0 1374.2 L747.3 1373.3 L752.4 1376.6 Z' fill='#c2daab' opacity='0.7'/><path d='M760.9 1344.0 L758.9 1348.9 L752.5 1348.9 L748.2 1349.7 L745.6 1346.8 L739.7 1344.0 L746.1 1341.4 L748.1 1338.1 L751.9 1340.5 L756.6 1340.4 Z' fill='#c2daab' opacity='0.7'/><path d='M784.7 1294.3 L783.5 1297.0 L780.4 1298.0 L777.8 1297.1 L774.9 1296.6 L773.8 1294.3 L775.7 1292.5 L776.9 1289.5 L780.3 1290.9 L783.7 1291.5 Z' fill='#c2daab' opacity='0.7'/><path d='M830.9 1294.3 L830.5 1299.5 L824.6 1301.6 L818.3 1302.4 L814.0 1298.7 L815.2 1294.3 L813.1 1289.3 L818.5 1286.6 L824.1 1288.0 L830.7 1289.0 Z' fill='#c2daab' opacity='0.7'/><path d='M716.1 1404.3 L715.9 1408.6 L710.2 1408.3 L706.3 1409.8 L705.1 1406.3 L704.1 1404.3 L700.4 1399.6 L706.8 1400.1 L710.7 1399.1 L712.6 1402.0 Z' fill='#c2daab' opacity='0.7'/><path d='M868.4 1354.9 L868.1 1359.9 L862.3 1361.4 L856.0 1363.8 L849.3 1360.9 L848.1 1354.9 L850.2 1349.5 L856.8 1348.0 L864.2 1343.5 L864.8 1351.9 Z' fill='#c2daab' opacity='0.7'/><path d='M743.8 1374.7 L736.1 1379.0 L733.7 1386.9 L725.2 1383.3 L718.7 1380.5 L715.6 1374.7 L718.3 1368.7 L723.9 1363.0 L733.5 1362.8 L736.7 1370.1 Z' fill='#c2daab' opacity='0.7'/><path d='M859.6 1331.4 L861.5 1336.5 L855.3 1337.5 L848.6 1341.8 L843.9 1336.6 L844.1 1331.4 L842.0 1325.1 L850.8 1326.5 L856.4 1322.6 L861.5 1326.3 Z' fill='#c2daab' opacity='0.7'/><path d='M711.1 1349.1 L706.1 1350.9 L705.1 1353.9 L701.4 1353.5 L700.1 1350.9 L695.5 1349.1 L698.4 1346.4 L701.3 1344.5 L704.5 1345.7 L706.3 1347.3 Z' fill='#c2daab' opacity='0.7'/><path d='M762.1 1296.8 L760.5 1299.4 L758.3 1302.5 L754.6 1300.1 L752.2 1299.0 L749.6 1296.8 L750.1 1293.4 L754.3 1292.8 L757.4 1293.2 L759.4 1294.8 Z' fill='#c2daab' opacity='0.7'/><path d='M770.5 1339.2 L769.7 1343.5 L766.3 1348.8 L760.0 1345.2 L757.2 1342.2 L747.8 1339.2 L751.0 1332.6 L759.7 1332.5 L765.0 1332.7 L770.6 1334.5 Z' fill='#c2daab' opacity='0.7'/><path d='M749.2 1389.4 L744.4 1394.1 L740.6 1400.2 L731.5 1400.9 L729.6 1393.2 L723.6 1389.4 L729.7 1385.6 L731.4 1377.5 L740.5 1378.9 L744.5 1384.6 Z' fill='#c2daab' opacity='0.7'/><path d='M832.2 1328.6 L829.7 1330.2 L828.5 1332.4 L824.9 1333.8 L822.5 1331.2 L822.8 1328.6 L823.8 1326.8 L825.3 1324.5 L828.6 1324.6 L832.6 1325.3 Z' fill='#c2daab' opacity='0.7'/><path d='M736.7 1349.9 L734.3 1352.6 L731.8 1355.3 L727.0 1356.2 L724.8 1352.7 L722.8 1349.9 L723.0 1346.1 L726.2 1341.6 L732.0 1343.9 L735.1 1346.6 Z' fill='#c2daab' opacity='0.7'/><path d='M711.0 1356.3 L711.8 1359.6 L708.6 1362.3 L704.2 1361.1 L699.1 1360.4 L698.1 1356.3 L702.4 1354.2 L704.7 1352.9 L708.4 1350.7 L712.5 1352.6 Z' fill='#c2daab' opacity='0.7'/><ellipse cx='430' cy='1600' rx='10' ry='8.0' fill='#9ec2e5'/><ellipse cx='520' cy='1590' rx='4' ry='3.2' fill='#9ec2e5'/><ellipse cx='610' cy='1640' rx='5' ry='4.0' fill='#9ec2e5'/><ellipse cx='770' cy='1620' rx='4' ry='3.2' fill='#9ec2e5'/><path d='M777.9 1375.3 L774.5 1372.0 L770.7 1369.6 L766.7 1367.2 L761.9 1365.2 L756.2 1364.8 L751.7 1364.2 L746.9 1364.2 L741.8 1366.0 L736.2 1368.3 L731.8 1369.3' fill='none' stroke='#a8c9e8' stroke-width='0.9' opacity='0.8' stroke-linejoin='round'/><path d='M690.7 1339.4 L693.3 1333.1 L697.0 1325.7 L697.4 1317.4 L700.5 1311.7 L702.4 1304.7 L704.8 1297.5 L702.6 1289.1 L700.9 1281.3' fill='none' stroke='#a8c9e8' stroke-width='0.9' opacity='0.8' stroke-linejoin='round'/><path d='M872.1 1471.7 L875.7 1469.9 L878.8 1467.4 L882.2 1464.3 L886.2 1460.8 L891.6 1458.9 L896.6 1458.7 L902.7 1457.2 L906.8 1456.7 L910.2 1455.0' fill='none' stroke='#a8c9e8' stroke-width='0.9' opacity='0.8' stroke-linejoin='round'/><path d='M732.6 1309.4 L738.6 1308.8 L742.3 1310.7 L745.7 1311.6 L750.2 1312.5 L754.5 1314.4' fill='none' stroke='#a8c9e8' stroke-width='0.9' opacity='0.8' stroke-linejoin='round'/><path d='M333.5 1516.5 L339.2 1520.2 L341.9 1525.0 L342.7 1531.7 L343.9 1538.0 L342.9 1544.1 L339.9 1550.8 L339.7 1556.8 L343.1 1562.3 L346.4 1568.8 L346.1 1573.7 L345.4 1579.3' fill='none' stroke='#a8c9e8' stroke-width='0.9' opacity='0.8' stroke-linejoin='round'/><path d='M810.9 1314.2 L804.6 1316.1 L797.6 1315.7 L790.5 1318.3 L783.4 1322.3 L777.9 1326.9 L771.3 1329.3 L762.9 1331.2 L756.5 1333.5 L748.8 1334.3 L740.1 1335.7 L733.3 1336.0 L724.9 1336.3 L718.5 1335.6 L711.4 1330.1' fill='none' stroke='#a8c9e8' stroke-width='0.9' opacity='0.8' stroke-linejoin='round'/><path d='M808.1 1678.5 L805.3 1674.1 L803.8 1669.7 L800.3 1664.8 L798.4 1661.1 L797.2 1655.8 L796.4 1651.6 L796.2 1646.9 L797.6 1640.8 L795.8 1635.4' fill='none' stroke='#a8c9e8' stroke-width='0.9' opacity='0.8' stroke-linejoin='round'/><path d='M509.9 1719.2 L505.1 1718.5 L499.8 1718.1 L495.2 1717.4 L490.5 1719.3 L486.2 1722.5 L483.2 1725.9 L480.3 1727.9 L474.8 1728.8 L470.7 1727.4 L466.5 1728.1 L461.4 1731.3 L456.4 1733.5 L451.4 1734.0' fill='none' stroke='#a8c9e8' stroke-width='0.9' opacity='0.8' stroke-linejoin='round'/><path d='M713.8 1298.0 L718.2 1298.4 L724.6 1298.4 L730.4 1297.1 L736.0 1294.4 L739.0 1291.3 L743.7 1290.2 L747.9 1287.9 L751.9 1286.1' fill='none' stroke='#a8c9e8' stroke-width='0.9' opacity='0.8' stroke-linejoin='round'/><path d='M398.8 1445.6 L403.3 1444.4 L407.9 1443.9 L411.2 1439.9 L412.5 1434.9 L415.6 1431.0 L416.6 1427.6' fill='none' stroke='#a8c9e8' stroke-width='0.9' opacity='0.8' stroke-linejoin='round'/><path d='M355.7 1587.9 L361.0 1593.9 L368.0 1597.8 L375.7 1600.3 L382.3 1603.1 L387.7 1608.8 L393.3 1616.1' fill='none' stroke='#a8c9e8' stroke-width='0.9' opacity='0.8' stroke-linejoin='round'/><path d='M662.8 1436.7 L668.8 1440.1 L674.1 1442.9 L678.1 1448.8 L682.5 1454.4 L686.7 1459.0 L687.9 1464.0 L689.3 1471.1 L691.8 1477.9 L690.5 1483.6 L692.6 1489.4 L696.1 1495.5 L703.1 1499.0' fill='none' stroke='#a8c9e8' stroke-width='0.9' opacity='0.8' stroke-linejoin='round'/><path d='M539.8 1588.0 L532.7 1588.1 L526.3 1586.4 L521.3 1581.1 L513.9 1578.5 L507.3 1575.2' fill='none' stroke='#a8c9e8' stroke-width='0.9' opacity='0.8' stroke-linejoin='round'/><path d='M584.2 1416.7 L586.6 1425.0 L584.1 1433.6 L583.0 1441.3 L580.0 1449.1 L578.1 1457.3 L576.5 1463.8 L570.8 1469.6 L562.7 1471.4 L556.2 1476.9 L550.4 1482.4 L543.0 1486.9' fill='none' stroke='#a8c9e8' stroke-width='0.9' opacity='0.8' stroke-linejoin='round'/><path d='M429.9 1619.4 L430.5 1627.2 L432.1 1635.8 L436.7 1642.9 L437.2 1651.7 L436.6 1658.6 L433.4 1666.7 L428.3 1672.4 L425.3 1679.6 L423.5 1686.3 L425.5 1694.5 L425.1 1703.2' fill='none' stroke='#a8c9e8' stroke-width='0.9' opacity='0.8' stroke-linejoin='round'/><path d='M448.2 1374.6 L441.5 1372.4 L435.1 1368.5 L429.6 1364.2 L425.0 1360.7 L422.1 1354.4 L421.4 1346.2 L422.0 1338.3 L423.6 1330.5 L421.6 1323.3 L422.0 1315.8 L423.2 1307.9 L427.6 1302.3' fill='none' stroke='#a8c9e8' stroke-width='0.9' opacity='0.8' stroke-linejoin='round'/><path d='M705.1 1643.2 L699.5 1639.6 L693.4 1638.3 L687.2 1637.6 L682.2 1641.7 L676.8 1642.5 L670.2 1642.4 L665.4 1639.2 L658.9 1637.9 L654.0 1635.0 L647.5 1633.7 L641.6 1633.4 L634.2 1634.0' fill='none' stroke='#a8c9e8' stroke-width='0.9' opacity='0.8' stroke-linejoin='round'/><path d='M1033.6 1491.2 L1029.2 1494.3 L1023.0 1495.6 L1017.3 1498.9 L1014.6 1501.7 L1011.2 1504.9' fill='none' stroke='#a8c9e8' stroke-width='0.9' opacity='0.8' stroke-linejoin='round'/><path d='M572.7 1483.7 L575.2 1490.5 L575.3 1497.6 L573.5 1503.3 L569.6 1508.7 L564.8 1513.0 L563.7 1519.7 L563.5 1527.1 L567.0 1533.1 L568.0 1538.4 L567.2 1543.5 L563.0 1548.5' fill='none' stroke='#a8c9e8' stroke-width='0.9' opacity='0.8' stroke-linejoin='round'/><path d='M751.6 1521.1 L750.6 1525.9 L750.6 1529.7 L749.5 1534.4 L751.4 1537.8 L751.0 1543.0 L753.4 1545.9 L755.1 1551.0 L754.6 1555.6 L754.7 1560.0 L752.7 1564.2 L754.5 1567.2 L752.7 1571.6 L753.4 1576.2 L756.7 1580.0' fill='none' stroke='#a8c9e8' stroke-width='0.9' opacity='0.8' stroke-linejoin='round'/><path d='M765.2 1717.9 L770.9 1718.6 L777.6 1719.8 L782.2 1723.4 L788.8 1727.8 L794.8 1730.1 L800.2 1732.7 L805.9 1733.0' fill='none' stroke='#a8c9e8' stroke-width='0.9' opacity='0.8' stroke-linejoin='round'/><path d='M337.2 1680.2 L342.6 1681.7 L346.2 1681.6 L350.1 1680.9 L354.4 1679.8 L358.5 1679.7 L362.2 1678.9 L367.9 1681.0' fill='none' stroke='#a8c9e8' stroke-width='0.9' opacity='0.8' stroke-linejoin='round'/><path d='M1052.4 1284.1 L1045.4 1281.5 L1039.0 1279.4 L1032.0 1277.9 L1025.1 1273.9 L1022.5 1267.8 L1016.7 1262.0 L1011.3 1258.6 L1004.2 1257.9 L997.1 1257.1 L990.1 1259.4 L984.2 1261.4' fill='none' stroke='#a8c9e8' stroke-width='0.9' opacity='0.8' stroke-linejoin='round'/><path d='M457.5 1601.0 L450.2 1599.7 L442.4 1598.3 L435.4 1594.0 L427.9 1591.5 L421.3 1589.2 L414.2 1584.1 L407.3 1583.5 L399.4 1583.3 L391.1 1581.9 L384.8 1578.3' fill='none' stroke='#a8c9e8' stroke-width='0.9' opacity='0.8' stroke-linejoin='round'/><path d='M918.2 1646.6 L921.8 1641.7 L925.9 1638.7 L929.7 1635.2 L932.9 1629.6 L936.2 1624.5 L936.9 1618.1' fill='none' stroke='#a8c9e8' stroke-width='0.9' opacity='0.8' stroke-linejoin='round'/><path d='M399.6 1394.1 L395.5 1392.1 L390.4 1390.8 L387.3 1388.0 L385.0 1383.8 L385.1 1377.8 L385.7 1372.3 L386.1 1367.5 L385.9 1363.6 L386.1 1359.4 L385.2 1354.3 L382.2 1349.5 L379.3 1347.7' fill='none' stroke='#a8c9e8' stroke-width='0.9' opacity='0.8' stroke-linejoin='round'/><path d='M485.9 1347.0 L478.6 1344.1 L470.7 1345.3 L463.5 1342.9 L456.2 1338.9 L449.7 1338.1 L444.2 1335.4 L436.7 1334.6 L429.5 1331.5 L422.7 1330.0 L416.7 1326.6' fill='none' stroke='#a8c9e8' stroke-width='0.9' opacity='0.8' stroke-linejoin='round'/><path d='M925.2 1572.6 L917.8 1576.8 L912.8 1581.6 L907.4 1586.1 L899.9 1589.1 L895.1 1595.1 L889.8 1599.8 L885.2 1606.1 L879.5 1611.5 L874.5 1616.4 L870.7 1621.6 L863.3 1626.0' fill='none' stroke='#a8c9e8' stroke-width='0.9' opacity='0.8' stroke-linejoin='round'/><path d='M607.0 1692.2 L604.7 1694.5 L602.0 1696.4 L599.2 1698.6 L595.0 1699.4 L591.7 1702.2 L587.2 1702.1 L583.2 1703.0 L579.8 1703.2 L576.1 1703.2' fill='none' stroke='#a8c9e8' stroke-width='0.9' opacity='0.8' stroke-linejoin='round'/><path d='M790.2 1376.9 L786.1 1374.2 L782.2 1370.9 L778.1 1369.6 L772.6 1371.1 L768.8 1370.5 L764.7 1366.4 L759.2 1363.7 L753.7 1362.6 L749.7 1362.9 L745.6 1362.7 L740.7 1361.4' fill='none' stroke='#a8c9e8' stroke-width='0.9' opacity='0.8' stroke-linejoin='round'/><path d='M1049.3 1628.5 L1047.2 1624.3 L1044.7 1621.6 L1042.1 1618.1 L1037.5 1615.3 L1034.3 1612.9 L1029.9 1608.8' fill='none' stroke='#a8c9e8' stroke-width='0.9' opacity='0.8' stroke-linejoin='round'/><path d='M929.5 1345.2 L928.2 1349.3 L925.0 1353.4 L921.2 1357.5 L918.0 1360.7 L916.1 1366.2 L915.5 1371.5 L913.4 1377.3 L912.2 1383.2 L909.8 1387.1 L907.8 1392.8' fill='none' stroke='#a8c9e8' stroke-width='0.9' opacity='0.8' stroke-linejoin='round'/><path d='M809.6 1397.3 L816.9 1395.9 L823.9 1392.9 L831.1 1391.2 L838.3 1391.4 L845.6 1394.2 L851.6 1392.6 L858.7 1391.3 L864.8 1392.8 L870.9 1395.5 L876.2 1401.4 L880.5 1405.1 L883.7 1411.2 L887.8 1416.9' fill='none' stroke='#a8c9e8' stroke-width='0.9' opacity='0.8' stroke-linejoin='round'/><path d='M813.1 1540.2 L818.1 1541.6 L824.3 1540.3 L829.1 1538.6 L834.0 1537.3 L838.1 1535.4 L842.8 1532.5 L849.1 1531.0 L854.0 1532.0 L858.4 1530.0' fill='none' stroke='#a8c9e8' stroke-width='0.9' opacity='0.8' stroke-linejoin='round'/><path d='M489.8 1642.2 L493.0 1639.8 L494.9 1637.1 L496.6 1632.8 L495.6 1627.9 L496.0 1624.7 L496.2 1620.7 L494.4 1616.8 L491.5 1614.0 L488.9 1610.6 L484.0 1608.8' fill='none' stroke='#a8c9e8' stroke-width='0.9' opacity='0.8' stroke-linejoin='round'/><path d='M878.4 1679.5 L873.2 1685.5 L869.0 1692.1 L863.6 1695.6 L859.2 1702.0 L858.7 1708.3 L859.6 1715.6 L860.4 1722.2 L864.0 1729.2 L864.3 1735.6' fill='none' stroke='#a8c9e8' stroke-width='0.9' opacity='0.8' stroke-linejoin='round'/><path d='M619.4 1370.8 L621.4 1374.1 L623.6 1376.8 L626.2 1378.2 L628.4 1379.3 L633.1 1379.8 L635.9 1381.5 L639.9 1382.6 L644.9 1384.2 L648.6 1386.9 L652.8 1389.0 L656.6 1390.1 L660.0 1391.0' fill='none' stroke='#a8c9e8' stroke-width='0.9' opacity='0.8' stroke-linejoin='round'/><path d='M716.5 1512.0 L716.3 1503.0 L717.7 1496.2 L722.1 1489.4 L722.8 1482.0 L720.9 1475.0' fill='none' stroke='#a8c9e8' stroke-width='0.9' opacity='0.8' stroke-linejoin='round'/><path d='M439.0 1468.2 L435.0 1462.4 L431.5 1456.3 L423.9 1451.3 L417.9 1447.2 L410.5 1442.6 L403.8 1439.8 L397.9 1435.4 L391.9 1429.6 L387.1 1423.6 L380.6 1418.6 L373.2 1413.1 L366.3 1407.9 L357.7 1405.7' fill='none' stroke='#a8c9e8' stroke-width='0.9' opacity='0.8' stroke-linejoin='round'/><path d='M1101.5 1570.6 L1098.6 1566.6 L1097.4 1562.3 L1097.4 1558.7 L1097.4 1553.6 L1097.0 1548.8 L1094.7 1544.7 L1092.2 1541.4 L1089.7 1537.5' fill='none' stroke='#a8c9e8' stroke-width='0.9' opacity='0.8' stroke-linejoin='round'/><path d='M475.0 1717.1 L481.2 1715.6 L484.8 1712.1 L488.7 1710.6 L493.9 1707.3 L500.1 1705.7 L505.6 1703.6 L512.0 1703.1 L516.4 1703.3 L522.7 1703.3 L528.2 1706.0' fill='none' stroke='#a8c9e8' stroke-width='0.9' opacity='0.8' stroke-linejoin='round'/><path d='M636.0 1570.1 L640.7 1566.7 L646.8 1561.7 L652.9 1559.9 L659.7 1560.9 L666.1 1560.1 L673.9 1556.3' fill='none' stroke='#a8c9e8' stroke-width='0.9' opacity='0.8' stroke-linejoin='round'/><path d='M366.9 1406.1 L366.8 1414.4 L366.8 1420.5 L368.4 1427.9 L369.7 1435.7 L375.6 1440.3 L379.5 1445.8 L383.7 1451.3 L389.6 1455.0 L397.0 1456.2 L402.3 1460.2' fill='none' stroke='#a8c9e8' stroke-width='0.9' opacity='0.8' stroke-linejoin='round'/><path d='M909.0 1675.9 L906.0 1679.6 L902.3 1683.1 L900.5 1687.6 L894.4 1691.8 L888.8 1695.1 L883.4 1696.9 L877.5 1699.7 L871.2 1701.8 L866.0 1706.6 L861.9 1712.9' fill='none' stroke='#a8c9e8' stroke-width='0.9' opacity='0.8' stroke-linejoin='round'/><path d='M591.6 1453.8 L593.5 1461.1 L595.1 1467.7 L596.3 1473.9 L600.7 1479.1 L606.3 1484.0 L612.6 1487.6 L618.7 1488.2 L624.1 1492.6 L629.9 1492.9 L636.6 1490.4' fill='none' stroke='#a8c9e8' stroke-width='0.9' opacity='0.8' stroke-linejoin='round'/><path d='M505.6 1467.0 L510.9 1467.3 L515.7 1471.4 L518.6 1476.0 L523.0 1478.4 L527.0 1479.5 L531.2 1481.7 L533.7 1485.2' fill='none' stroke='#a8c9e8' stroke-width='0.9' opacity='0.8' stroke-linejoin='round'/><path d='M460.7 1702.5 L457.2 1701.9 L453.8 1699.3 L449.5 1696.1 L446.2 1694.6 L442.4 1692.7 L437.2 1694.6 L432.1 1694.4 L427.5 1695.1 L422.3 1693.6 L418.4 1691.3' fill='none' stroke='#a8c9e8' stroke-width='0.9' opacity='0.8' stroke-linejoin='round'/><path d='M700.0 1597.2 L693.4 1594.4 L686.6 1593.2 L678.3 1590.7 L671.5 1590.6 L663.7 1590.4' fill='none' stroke='#a8c9e8' stroke-width='0.9' opacity='0.8' stroke-linejoin='round'/><path d='M762.6 1438.6 L757.2 1435.7 L753.6 1431.2 L748.8 1427.7 L746.1 1424.5 L740.8 1421.1 L737.1 1416.7 L731.5 1414.3 L728.6 1408.9 L728.3 1403.7 L728.1 1397.9 L732.1 1393.1 L733.9 1387.5' fill='none' stroke='#a8c9e8' stroke-width='0.9' opacity='0.8' stroke-linejoin='round'/><path d='M913.1 1563.8 L907.3 1567.4 L903.1 1574.5 L896.5 1578.5 L890.9 1582.3 L884.6 1583.3 L878.6 1587.9' fill='none' stroke='#a8c9e8' stroke-width='0.9' opacity='0.8' stroke-linejoin='round'/><path d='M950.8 1661.8 L954.2 1657.0 L958.2 1652.0 L962.1 1647.5 L964.4 1641.8 L966.6 1636.1 L970.1 1630.9 L973.4 1625.5 L975.5 1620.6 L979.8 1617.0 L981.7 1612.0 L980.5 1605.7 L982.0 1599.2 L986.0 1595.0' fill='none' stroke='#a8c9e8' stroke-width='0.9' opacity='0.8' stroke-linejoin='round'/><path d='M1003.7 1478.8 L1002.9 1486.6 L1005.3 1495.2 L1006.0 1502.0 L1005.7 1508.5 L1005.8 1516.8 L1006.9 1523.1 L1009.7 1529.3 L1010.3 1537.2 L1010.2 1544.9 L1009.0 1552.7 L1010.8 1560.5 L1012.8 1567.1 L1016.3 1574.1' fill='none' stroke='#a8c9e8' stroke-width='0.9' opacity='0.8' stroke-linejoin='round'/><path d='M331.5 1376.9 L332.8 1373.0 L336.9 1370.6 L339.8 1368.9 L344.6 1368.4 L348.4 1369.4' fill='none' stroke='#a8c9e8' stroke-width='0.9' opacity='0.8' stroke-linejoin='round'/><path d='M648.9 1415.4 L642.9 1419.6 L638.7 1425.0 L636.9 1431.3 L636.8 1439.0 L633.9 1444.5' fill='none' stroke='#a8c9e8' stroke-width='0.9' opacity='0.8' stroke-linejoin='round'/><path d='M396.4 1668.8 L400.5 1672.9 L405.8 1673.3 L411.5 1673.4 L416.2 1675.0 L421.1 1673.7 L425.0 1671.0 L430.7 1667.9 L433.0 1663.8 L438.5 1660.4 L442.7 1656.8 L445.5 1651.4 L451.6 1649.9 L456.6 1645.9 L458.4 1640.8' fill='none' stroke='#a8c9e8' stroke-width='0.9' opacity='0.8' stroke-linejoin='round'/><path d='M973.7 1508.8 L979.3 1507.7 L986.2 1506.2 L992.6 1503.4 L999.0 1502.4 L1005.1 1503.6 L1011.4 1503.7 L1016.8 1502.7 L1021.8 1499.6' fill='none' stroke='#a8c9e8' stroke-width='0.9' opacity='0.8' stroke-linejoin='round'/><path d='M1037.1 1379.6 L1030.1 1380.6 L1023.6 1383.8 L1017.1 1388.5 L1011.9 1391.7 L1007.6 1398.5 L1006.2 1406.4 L1004.9 1412.8 L1002.5 1420.0 L999.5 1426.3 L997.7 1432.2' fill='none' stroke='#a8c9e8' stroke-width='0.9' opacity='0.8' stroke-linejoin='round'/><path d='M956.5 1478.9 L959.3 1475.1 L962.2 1473.0 L966.4 1472.4 L971.5 1473.1 L976.0 1475.8 L981.3 1477.1 L986.0 1477.7 L990.6 1480.1 L995.1 1481.8 L997.3 1484.0 L998.6 1487.1 L1002.4 1490.1 L1003.2 1494.1' fill='none' stroke='#a8c9e8' stroke-width='0.9' opacity='0.8' stroke-linejoin='round'/><path d='M623.7 1477.2 L625.5 1472.8 L625.0 1468.2 L625.5 1463.6 L625.6 1459.0 L624.1 1454.3 L621.8 1450.8 L620.1 1447.6 L618.6 1444.6 L615.5 1440.3 L615.2 1436.2' fill='none' stroke='#a8c9e8' stroke-width='0.9' opacity='0.8' stroke-linejoin='round'/><path d='M1010.3 1524.1 L1007.9 1532.5 L1005.6 1538.7 L1005.6 1546.0 L1003.3 1554.0 L998.6 1559.5 L992.5 1563.4 L988.1 1569.9' fill='none' stroke='#a8c9e8' stroke-width='0.9' opacity='0.8' stroke-linejoin='round'/><path d='M434.6 1418.8 L434.1 1424.9 L431.7 1431.5 L431.8 1439.5 L433.8 1445.4 L436.0 1453.2 L439.1 1459.2 L439.5 1465.0 L439.2 1470.9 L437.3 1477.4 L433.9 1483.3 L430.5 1489.9 L428.9 1495.9 L427.9 1501.6' fill='none' stroke='#efc186' stroke-width='1.25' opacity='0.95' stroke-linejoin='round'/><path d='M343.8 1368.6 L336.2 1369.4 L327.4 1366.6 L320.3 1363.1 L313.1 1356.8 L308.5 1348.5 L305.2 1341.0 L299.0 1336.2 L292.5 1332.3 L285.2 1326.0 L281.0 1319.3 L276.8 1312.2 L269.8 1306.0 L262.5 1300.1 L254.2 1296.6' fill='none' stroke='#efc186' stroke-width='1.25' opacity='0.95' stroke-linejoin='round'/><path d='M417.1 1631.9 L408.4 1629.3 L399.9 1627.7 L391.6 1624.7 L383.0 1621.7 L375.4 1615.5 L370.3 1609.3' fill='none' stroke='#efc186' stroke-width='1.25' opacity='0.95' stroke-linejoin='round'/><path d='M356.2 1535.6 L356.6 1542.3 L354.4 1549.2 L354.5 1556.4 L350.2 1562.0 L344.4 1567.1 L337.2 1570.2 L330.9 1573.6 L324.6 1575.4 L318.5 1575.4 L311.9 1574.1 L305.5 1570.0 L299.6 1564.8' fill='none' stroke='#efc186' stroke-width='1.25' opacity='0.95' stroke-linejoin='round'/><path d='M765.5 1473.6 L765.1 1467.0 L764.0 1459.5 L760.4 1452.4 L755.3 1447.2 L749.2 1444.6 L743.1 1441.5 L737.5 1437.0 L732.5 1432.3 L730.6 1426.8 L730.7 1420.9 L733.2 1414.6 L734.2 1407.4 L731.5 1401.4 L733.1 1393.6' fill='none' stroke='#efc186' stroke-width='1.25' opacity='0.95' stroke-linejoin='round'/><path d='M1093.3 1338.9 L1096.6 1329.9 L1099.0 1323.1 L1101.0 1316.3 L1102.8 1307.9 L1104.0 1300.4 L1104.2 1291.6 L1102.1 1282.9 L1099.7 1274.4 L1095.5 1268.6 L1089.0 1265.6 L1083.1 1261.4 L1073.9 1258.8 L1066.0 1258.4 L1057.1 1259.6' fill='none' stroke='#efc186' stroke-width='1.25' opacity='0.95' stroke-linejoin='round'/><path d='M620.5 1691.4 L614.9 1689.7 L609.2 1689.0 L604.3 1689.9 L598.6 1688.4 L593.1 1687.0 L589.0 1687.0 L582.9 1685.7 L579.1 1684.0 L575.1 1682.7 L570.1 1682.2 L566.9 1677.7 L562.7 1673.5 L557.7 1669.9 L552.3 1666.6' fill='none' stroke='#efc186' stroke-width='1.25' opacity='0.95' stroke-linejoin='round'/><path d='M957.2 1403.9 L950.2 1410.5 L942.1 1415.6 L934.6 1421.0 L926.6 1424.1 L921.4 1430.5 L917.7 1438.0 L916.9 1447.9 L918.7 1456.8 L918.9 1465.9 L920.1 1475.2 L923.7 1483.6 L930.5 1490.1 L935.6 1499.3 L939.4 1507.0 L945.1 1513.4' fill='none' stroke='#efc186' stroke-width='1.25' opacity='0.95' stroke-linejoin='round'/><path d='M602.8 1282.1 L608.7 1282.4 L615.3 1280.5 L622.6 1278.4 L629.6 1277.7 L635.0 1278.2 L642.0 1277.0 L648.7 1276.5 L653.8 1275.4 L658.9 1273.0 L663.4 1270.2 L666.8 1265.2' fill='none' stroke='#efc186' stroke-width='1.25' opacity='0.95' stroke-linejoin='round'/><path d='M1128.8 1590.0 L1130.6 1582.7 L1131.8 1576.6 L1131.8 1569.8 L1131.8 1562.4 L1135.4 1555.5 L1140.3 1549.9 L1147.0 1546.5 L1154.1 1545.9 L1160.1 1544.4' fill='none' stroke='#efc186' stroke-width='1.25' opacity='0.95' stroke-linejoin='round'/><path d='M628.5 1598.3 L626.1 1591.3 L621.3 1583.2 L616.7 1575.8 L610.0 1571.0 L604.4 1566.8 L598.1 1561.9 L593.1 1555.0 L586.5 1548.6 L583.6 1541.2 L576.9 1535.2 L571.1 1530.5 L564.7 1525.0 L557.3 1520.2' fill='none' stroke='#efc186' stroke-width='1.25' opacity='0.95' stroke-linejoin='round'/><path d='M573.7 1528.5 L567.5 1524.3 L561.1 1522.4 L553.5 1522.8 L546.7 1526.2 L539.2 1526.7 L533.7 1528.2 L527.7 1528.4 L522.3 1531.5 L515.7 1533.6 L511.5 1539.1 L507.9 1545.2 L506.0 1550.5 L502.7 1556.5 L501.2 1562.1 L499.4 1568.1' fill='none' stroke='#efc186' stroke-width='1.25' opacity='0.95' stroke-linejoin='round'/><path d='M1042.9 1608.2 L1038.1 1607.6 L1033.3 1609.6 L1029.1 1612.3 L1023.3 1613.1 L1016.6 1613.8 L1010.6 1616.0 L1004.5 1617.7 L998.8 1619.3 L992.0 1619.2' fill='none' stroke='#efc186' stroke-width='1.25' opacity='0.95' stroke-linejoin='round'/><path d='M812.9 1381.9 L804.4 1383.8 L796.8 1388.4 L789.2 1387.8 L781.0 1387.5 L773.9 1390.6 L768.8 1397.0 L766.0 1405.0 L764.9 1413.8' fill='none' stroke='#efc186' stroke-width='1.25' opacity='0.95' stroke-linejoin='round'/><path d='M621.2 1298.0 L618.4 1290.6 L617.8 1283.3 L616.1 1275.2 L614.8 1267.5 L609.1 1262.7 L602.9 1258.6' fill='none' stroke='#efc186' stroke-width='1.25' opacity='0.95' stroke-linejoin='round'/><path d='M469.7 1585.1 L462.9 1590.9 L457.4 1597.9 L456.3 1605.5 L457.6 1614.9 L457.8 1623.7 L457.2 1632.1 L456.9 1641.7 L459.8 1649.4 L464.0 1657.1 L467.7 1666.0 L470.1 1673.2 L472.7 1681.7 L473.8 1690.3 L473.5 1698.4' fill='none' stroke='#efc186' stroke-width='1.25' opacity='0.95' stroke-linejoin='round'/><path d='M622.9 1510.1 L617.1 1502.4 L612.8 1496.3 L610.2 1487.2 L607.2 1480.3 L599.9 1476.3 L595.9 1470.0 L591.6 1462.7 L586.8 1454.7 L581.7 1449.9 L575.0 1445.7 L570.8 1438.6 L565.5 1432.5' fill='none' stroke='#efc186' stroke-width='1.25' opacity='0.95' stroke-linejoin='round'/><path d='M1097.2 1646.2 L1105.8 1645.0 L1114.2 1647.6 L1120.7 1653.9 L1126.4 1658.1 L1132.5 1661.7 L1137.1 1668.6 L1139.5 1676.6 L1138.9 1684.8 L1138.8 1693.4 L1135.8 1701.3 L1131.5 1706.5 L1126.1 1711.9 L1121.1 1716.6 L1115.5 1719.8 L1107.1 1719.6' fill='none' stroke='#efc186' stroke-width='1.25' opacity='0.95' stroke-linejoin='round'/><path d='M574.9 1449.7 L580.0 1444.7 L584.4 1438.0 L586.5 1430.1 L587.9 1423.4 L591.8 1416.4 L596.9 1411.2 L603.9 1409.5 L611.4 1406.4 L617.8 1405.5 L623.6 1401.7 L631.2 1400.5 L639.1 1400.1 L646.7 1403.2' fill='none' stroke='#efc186' stroke-width='1.25' opacity='0.95' stroke-linejoin='round'/><path d='M742.4 1564.0 L746.2 1556.3 L751.9 1551.1 L757.5 1546.7 L762.0 1540.2 L766.9 1535.0 L771.2 1529.2 L774.3 1523.6 L777.7 1518.1 L779.1 1511.4 L782.1 1504.8 L785.8 1498.0 L784.9 1491.2 L784.6 1485.0 L785.0 1477.7 L784.3 1469.9' fill='none' stroke='#efc186' stroke-width='1.25' opacity='0.95' stroke-linejoin='round'/><path d='M580.6 1558.0 L578.4 1564.2 L576.1 1571.3 L573.8 1577.3 L570.8 1581.4 L568.2 1588.2 L564.2 1594.5 L560.1 1598.2 L553.5 1601.6 L548.5 1605.5 L543.2 1608.2' fill='none' stroke='#efc186' stroke-width='1.25' opacity='0.95' stroke-linejoin='round'/><path d='M762.0 1403.5 L757.5 1409.2 L752.0 1415.6 L748.7 1422.6 L748.6 1429.7 L749.8 1435.5 L748.3 1441.6 L748.5 1447.7 L750.0 1455.4 L752.2 1462.5 L755.6 1469.7 L758.7 1476.1 L764.0 1480.4 L769.9 1482.4 L775.6 1486.3 L780.7 1490.7' fill='none' stroke='#efc186' stroke-width='1.25' opacity='0.95' stroke-linejoin='round'/><path d='M401.9 1547.9 L409.3 1550.6 L413.5 1557.7 L418.9 1562.8 L425.0 1567.5 L430.0 1574.1 L438.0 1579.0 L443.7 1585.6 L449.2 1591.9 L452.3 1600.1 L450.4 1608.3 L452.9 1615.7 L455.4 1623.1 L461.1 1629.0 L462.5 1637.3 L462.3 1645.8' fill='none' stroke='#efc186' stroke-width='1.25' opacity='0.95' stroke-linejoin='round'/><path d='M879.5 1498.0 L886.4 1496.4 L891.5 1492.6 L896.5 1487.3 L901.6 1484.3 L908.1 1481.7 L913.9 1480.1 L919.8 1476.6 L924.0 1472.4 L926.5 1467.4 L928.7 1459.9 L925.5 1454.2 L925.5 1447.1 L925.4 1439.9 L925.1 1432.6' fill='none' stroke='#efc186' stroke-width='1.25' opacity='0.95' stroke-linejoin='round'/><path d='M434.2 1565.1 L434.9 1573.9 L436.3 1581.7 L433.8 1591.0 L430.8 1600.1 L427.9 1607.3 L428.7 1615.6 L431.1 1624.4 L430.6 1631.8 L425.7 1639.9 L421.0 1647.9 L419.8 1656.9 L417.0 1664.3 L414.9 1672.2 L414.0 1681.5 L416.8 1689.2 L422.0 1695.7' fill='none' stroke='#efc186' stroke-width='1.25' opacity='0.95' stroke-linejoin='round'/><path d='M998.8 1711.6 L994.5 1706.1 L989.3 1704.5 L984.2 1701.1 L980.0 1697.1 L975.6 1693.6 L970.2 1693.2 L964.1 1691.8 L959.4 1688.9 L952.6 1689.9 L946.6 1692.4 L941.7 1694.2 L935.6 1694.3 L929.8 1692.7 L923.8 1691.4 L917.5 1693.0 L911.2 1694.6' fill='none' stroke='#efc186' stroke-width='1.25' opacity='0.95' stroke-linejoin='round'/><path d='M758.6 1355.9 L763.9 1351.2 L769.5 1348.2 L773.7 1345.5 L779.0 1342.5 L782.8 1339.7 L787.0 1334.8 L791.6 1330.0 L794.5 1325.7 L798.7 1321.0 L803.0 1316.8 L806.7 1312.2 L809.2 1307.9 L812.7 1303.4 L811.6 1297.4 L809.9 1293.2 L807.9 1288.5' fill='none' stroke='#efc186' stroke-width='1.25' opacity='0.95' stroke-linejoin='round'/><path d='M375.5 1459.8 L382.6 1458.9 L390.2 1455.4 L396.6 1453.3 L402.7 1450.3 L409.6 1445.9 L414.1 1438.9 L420.0 1434.9 L426.0 1430.7 L432.9 1428.6 L439.7 1426.9 L448.0 1427.8 L454.8 1432.2 L460.9 1434.7 L466.8 1438.2' fill='none' stroke='#efc186' stroke-width='1.25' opacity='0.95' stroke-linejoin='round'/><path d='M444.0 1634.9 L443.0 1628.6 L444.9 1624.6 L449.9 1620.2 L451.8 1616.0 L454.8 1611.3 L458.6 1608.1 L463.1 1604.1 L468.1 1599.6 L473.1 1596.8' fill='none' stroke='#efc186' stroke-width='1.25' opacity='0.95' stroke-linejoin='round'/><path d='M523.3 1452.7 L524.7 1458.7 L526.0 1465.0 L527.9 1470.9 L528.8 1477.4 L526.6 1482.6 L525.1 1489.4 L522.4 1494.2 L522.2 1500.6 L524.7 1507.3 L524.4 1514.1' fill='none' stroke='#efc186' stroke-width='1.25' opacity='0.95' stroke-linejoin='round'/><path d='M1080.5 1694.7 L1076.9 1699.9 L1075.0 1707.2 L1076.5 1713.9 L1075.0 1721.2 L1072.2 1728.5 L1068.0 1734.1 L1066.9 1740.6 L1067.0 1748.6' fill='none' stroke='#efc186' stroke-width='1.25' opacity='0.95' stroke-linejoin='round'/><path d='M1081.5 1670.0 L1086.0 1674.2 L1088.8 1678.5 L1088.8 1683.0 L1087.3 1687.6 L1085.0 1692.3 L1082.1 1695.5 L1078.8 1699.5' fill='none' stroke='#efc186' stroke-width='1.25' opacity='0.95' stroke-linejoin='round'/><path d='M873.6 1495.2 L873.6 1489.8 L869.6 1483.7 L864.9 1478.7 L858.2 1476.4 L852.5 1475.9 L846.0 1477.4 L840.7 1481.6 L836.9 1486.9 L830.8 1487.7 L826.9 1491.3 L824.2 1495.9 L819.6 1501.0' fill='none' stroke='#efc186' stroke-width='1.25' opacity='0.95' stroke-linejoin='round'/><path d='M739.9 1434.4 L744.2 1439.7 L749.5 1441.3 L754.0 1445.8 L759.8 1447.4 L764.7 1451.6 L770.6 1453.6 L775.7 1453.6 L782.0 1457.4 L787.4 1458.3 L793.1 1456.3 L799.7 1454.0 L805.4 1453.5 L811.9 1456.4' fill='none' stroke='#efc186' stroke-width='1.25' opacity='0.95' stroke-linejoin='round'/><path d='M627.4 1637.0 L621.1 1633.6 L616.8 1627.0 L612.2 1620.5 L606.0 1616.1 L597.7 1613.8 L590.8 1610.4 L584.7 1606.3' fill='none' stroke='#efc186' stroke-width='1.25' opacity='0.95' stroke-linejoin='round'/><path d='M587.4 1503.7 L591.7 1512.4 L592.7 1521.5 L595.9 1530.6 L597.7 1539.5 L596.3 1547.9 L592.3 1556.5' fill='none' stroke='#efc186' stroke-width='1.25' opacity='0.95' stroke-linejoin='round'/><path d='M447.9 1457.5 L453.7 1452.1 L457.2 1443.0 L459.5 1434.6 L464.3 1428.0 L471.0 1422.6 L477.1 1417.9 L485.6 1414.9 L492.2 1410.6 L498.0 1402.4 L500.9 1395.0 L501.3 1386.3 L497.7 1377.8 L495.4 1370.3 L497.3 1362.1' fill='none' stroke='#efc186' stroke-width='1.25' opacity='0.95' stroke-linejoin='round'/><path d='M918.2 1661.3 L924.4 1661.2 L931.4 1662.4 L937.5 1663.6 L944.8 1666.1 L951.1 1665.4 L957.4 1667.1 L963.9 1667.3 L971.1 1664.6' fill='none' stroke='#efc186' stroke-width='1.25' opacity='0.95' stroke-linejoin='round'/><path d='M345.8 1483.0 L339.0 1480.3 L331.6 1479.6 L324.7 1479.4 L318.0 1476.7 L311.4 1474.8 L305.2 1472.2 L299.8 1468.1 L292.0 1465.5 L286.4 1460.4 L282.3 1452.9 L282.4 1445.5 L277.7 1439.8 L276.8 1432.8 L274.4 1426.2' fill='none' stroke='#efc186' stroke-width='1.25' opacity='0.95' stroke-linejoin='round'/><path d='M504.8 1289.3 L503.1 1298.5 L498.6 1306.3 L496.2 1314.0 L495.7 1322.9 L497.8 1331.7 L497.1 1339.5 L501.7 1347.9 L508.5 1353.1 L514.0 1360.4 L522.6 1365.2 L529.9 1366.9 L537.5 1371.2' fill='none' stroke='#efc186' stroke-width='1.25' opacity='0.95' stroke-linejoin='round'/><path d='M839.1 1501.9 L834.9 1507.8 L831.0 1510.7 L829.3 1516.8 L823.8 1520.8 L818.9 1523.1 L816.0 1528.0' fill='none' stroke='#efc186' stroke-width='1.25' opacity='0.95' stroke-linejoin='round'/><path d='M1088.6 1555.1 L1093.4 1562.8 L1097.5 1570.5 L1100.9 1578.2 L1105.9 1585.2 L1109.8 1594.0 L1117.1 1599.8 L1123.0 1606.5 L1128.5 1611.8' fill='none' stroke='#efc186' stroke-width='1.25' opacity='0.95' stroke-linejoin='round'/><path d='M360.8 1400.4 L361.7 1392.5 L365.8 1386.9 L370.2 1381.5 L378.2 1379.1 L386.4 1379.6 L394.1 1380.9 L401.1 1383.2 L407.9 1387.5 L413.4 1391.3 L417.4 1397.6 L418.0 1406.0 L422.1 1412.3' fill='none' stroke='#efc186' stroke-width='1.25' opacity='0.95' stroke-linejoin='round'/><path d='M918.4 1711.8 L919.8 1717.1 L924.1 1722.5 L927.1 1728.4 L929.9 1735.1 L930.3 1740.9 L926.4 1745.3 L921.2 1750.9 L916.1 1752.7 L909.1 1754.7 L902.2 1754.1 L895.6 1754.8 L888.7 1757.3 L883.1 1759.0 L877.5 1758.9 L872.1 1759.2 L866.0 1759.1' fill='none' stroke='#efc186' stroke-width='1.25' opacity='0.95' stroke-linejoin='round'/><path d='M728.4 1310.0 L736.0 1313.9 L743.4 1316.3 L750.1 1317.6 L757.1 1317.2 L764.6 1315.2 L773.1 1317.7 L781.6 1320.3 L789.2 1317.6 L797.1 1317.3 L805.8 1313.7 L811.6 1307.8 L816.1 1300.6 L817.5 1291.5 L821.9 1284.1' fill='none' stroke='#efc186' stroke-width='1.25' opacity='0.95' stroke-linejoin='round'/><path d='M948.2 1275.3 L948.9 1281.4 L948.6 1288.3 L945.3 1294.6 L938.9 1299.6 L933.8 1302.3 L928.5 1304.4 L922.8 1305.6 L915.2 1303.9 L908.3 1303.9' fill='none' stroke='#efc186' stroke-width='1.25' opacity='0.95' stroke-linejoin='round'/><path d='M766.2 1686.8 L770.4 1693.8 L773.6 1701.0 L778.2 1706.6 L785.3 1711.7 L790.3 1718.2 L794.6 1725.5 L795.9 1732.8 L798.6 1740.6 L804.1 1747.5 L811.4 1750.8 L819.0 1754.5 L826.8 1757.3 L834.2 1754.5' fill='none' stroke='#efc186' stroke-width='1.25' opacity='0.95' stroke-linejoin='round'/><path d='M709.3 1624.4 L711.2 1619.2 L716.1 1615.5 L720.7 1613.7 L726.9 1613.6 L733.0 1615.5 L739.5 1616.0 L744.3 1612.6 L749.9 1609.6 L755.5 1606.3 L761.3 1603.6 L765.5 1601.6 L770.5 1600.3 L775.6 1597.5 L781.6 1598.3' fill='none' stroke='#efc186' stroke-width='1.25' opacity='0.95' stroke-linejoin='round'/><path d='M953.3 1587.1 L956.0 1593.6 L961.1 1596.0 L965.7 1600.6 L971.1 1605.4 L974.9 1610.8 L978.4 1615.5 L978.2 1621.8 L977.7 1628.5 L974.6 1635.5 L969.7 1640.7' fill='none' stroke='#efc186' stroke-width='1.25' opacity='0.95' stroke-linejoin='round'/><path d='M965.8 1505.5 L971.7 1501.4 L979.0 1500.6 L986.7 1502.9 L991.0 1508.4 L992.3 1515.7 L992.9 1522.3 L992.5 1529.3 L990.0 1537.0 L989.5 1544.5 L988.0 1550.8 L986.8 1558.3 L982.6 1565.3 L977.7 1569.8 L970.5 1573.9 L965.4 1578.3 L959.8 1583.1' fill='none' stroke='#efc186' stroke-width='1.25' opacity='0.95' stroke-linejoin='round'/><path d='M435.0 1388.7 L444.5 1388.6 L451.5 1383.5 L456.4 1376.1 L462.3 1368.8 L471.3 1365.7 L479.2 1363.9 L487.7 1363.0 L495.3 1361.8 L503.5 1359.0 L509.7 1352.8 L517.6 1348.8 L524.9 1344.3 L531.9 1339.7 L541.3 1337.6 L548.0 1334.2 L556.0 1331.8' fill='none' stroke='#efc186' stroke-width='1.25' opacity='0.95' stroke-linejoin='round'/><path d='M395.1 1636.7 L390.9 1640.2 L386.6 1642.3 L381.7 1644.2 L376.8 1648.3 L371.4 1650.8 L366.3 1652.6 L362.8 1656.5 L358.7 1660.5 L354.1 1664.8 L350.8 1669.4 L351.2 1674.7' fill='none' stroke='#efc186' stroke-width='1.25' opacity='0.95' stroke-linejoin='round'/><path d='M933.0 1695.4 L935.0 1691.3 L936.1 1685.2 L934.8 1680.8 L934.3 1676.5 L933.1 1671.0 L931.0 1667.8 L930.5 1663.4 L931.1 1658.2 L931.4 1652.3 L928.3 1648.0 L926.5 1642.6 L925.3 1638.7' fill='none' stroke='#efc186' stroke-width='1.25' opacity='0.95' stroke-linejoin='round'/><path d='M567.3 1415.7 L564.7 1410.4 L564.1 1404.2 L564.1 1397.9 L561.2 1393.7 L558.6 1389.4 L553.1 1385.3 L548.7 1385.6 L543.2 1384.1 L539.6 1379.1 L536.6 1374.8 L537.5 1368.2 L537.2 1361.7 L535.1 1356.8 L531.1 1352.7 L526.1 1350.0' fill='none' stroke='#efc186' stroke-width='1.25' opacity='0.95' stroke-linejoin='round'/><path d='M541.9 1537.5 L540.1 1529.4 L542.7 1522.6 L545.6 1515.6 L548.4 1508.0 L546.5 1500.1 L548.9 1493.2 L552.5 1487.5 L554.2 1480.7 L556.8 1472.6 L561.9 1467.0 L562.8 1458.3 L567.1 1452.0 L574.8 1447.5 L582.6 1444.6' fill='none' stroke='#efc186' stroke-width='1.25' opacity='0.95' stroke-linejoin='round'/><path d='M864.2 1423.4 L863.7 1431.2 L867.1 1438.6 L871.1 1444.9 L875.8 1448.9 L880.4 1452.1 L884.1 1458.7 L887.6 1464.3 L893.4 1468.2 L898.7 1471.6 L904.0 1474.6 L908.9 1479.0 L913.2 1482.8 L918.5 1487.3' fill='none' stroke='#efc186' stroke-width='1.25' opacity='0.95' stroke-linejoin='round'/><path d='M657.7 1663.6 L659.2 1669.1 L659.2 1673.8 L661.2 1678.7 L662.2 1685.6 L666.3 1689.7 L669.5 1693.9 L675.1 1698.6' fill='none' stroke='#efc186' stroke-width='1.25' opacity='0.95' stroke-linejoin='round'/><path d='M467.9 1687.3 L470.3 1695.3 L474.7 1702.0 L474.6 1709.4 L476.4 1716.9 L478.9 1724.9 L479.1 1731.4 L477.5 1739.9 L473.2 1746.2 L468.1 1752.2 L462.5 1758.1 L460.3 1763.8 L459.8 1771.5' fill='none' stroke='#efc186' stroke-width='1.25' opacity='0.95' stroke-linejoin='round'/><path d='M338.4 1685.0 L338.5 1679.7 L337.8 1672.7 L334.8 1668.1 L332.8 1661.5 L333.9 1654.7 L332.0 1649.2' fill='none' stroke='#efc186' stroke-width='1.25' opacity='0.95' stroke-linejoin='round'/><path d='M713.4 1574.4 L720.0 1569.6 L723.1 1561.5 L724.9 1555.5 L730.2 1550.9 L731.9 1542.5 L731.7 1535.7 L729.6 1528.3 L726.3 1520.3 L719.7 1515.2 L714.1 1509.8 L705.8 1507.1 L700.1 1503.4 L696.2 1497.0 L694.6 1488.3 L696.2 1480.6 L696.3 1473.3' fill='none' stroke='#efc186' stroke-width='1.25' opacity='0.95' stroke-linejoin='round'/><path d='M585.8 1314.7 L576.6 1315.8 L567.2 1316.2 L559.7 1314.9 L550.9 1310.9 L543.7 1304.6 L536.7 1300.5 L528.0 1299.4 L519.3 1295.8 L511.5 1292.1' fill='none' stroke='#efc186' stroke-width='1.25' opacity='0.95' stroke-linejoin='round'/><path d='M463.6 1329.7 L467.7 1332.9 L470.5 1338.2 L474.0 1340.8 L477.3 1344.9 L476.3 1350.7 L476.1 1356.3 L477.9 1361.9 L481.1 1367.7 L484.1 1370.5' fill='none' stroke='#efc186' stroke-width='1.25' opacity='0.95' stroke-linejoin='round'/><path d='M611.6 1306.3 L610.1 1300.0 L612.1 1292.7 L612.2 1286.2 L615.7 1279.3 L617.2 1272.3 L617.6 1264.6 L616.4 1257.5 L611.6 1252.1 L611.0 1243.7 L613.1 1237.7' fill='none' stroke='#efc186' stroke-width='1.25' opacity='0.95' stroke-linejoin='round'/><path d='M831.7 1518.2 L834.2 1511.6 L833.1 1504.8 L832.2 1498.4 L829.6 1491.8 L828.4 1486.5 L829.9 1480.0 L833.4 1475.0 L833.5 1467.8 L836.3 1462.2 L840.5 1458.6 L842.4 1451.6 L845.8 1447.4 L849.9 1443.2 L856.2 1440.9 L860.1 1436.4 L865.2 1433.1' fill='none' stroke='#efc186' stroke-width='1.25' opacity='0.95' stroke-linejoin='round'/><path d='M887.2 1521.3 L880.7 1526.8 L873.8 1533.6 L864.7 1535.6 L859.4 1541.8 L852.0 1547.9 L846.5 1553.8 L842.2 1561.4 L835.4 1566.9 L829.5 1572.4 L825.6 1580.4 L820.8 1586.3 L817.1 1594.1 L811.3 1600.7 L804.6 1605.9' fill='none' stroke='#efc186' stroke-width='1.25' opacity='0.95' stroke-linejoin='round'/><path d='M481.5 1661.2 L478.1 1654.9 L473.7 1649.9 L468.8 1646.7 L466.0 1640.5 L463.1 1633.5 L460.4 1628.9 L455.8 1623.7 L451.2 1619.1 L445.9 1615.1 L443.3 1610.3 L439.6 1605.5 L435.4 1600.3 L432.1 1595.9 L428.9 1589.8' fill='none' stroke='#efc186' stroke-width='1.25' opacity='0.95' stroke-linejoin='round'/><path d='M688.2 1293.4 L687.5 1286.5 L682.9 1280.8 L682.7 1274.2 L685.7 1268.1 L684.1 1262.2 L683.6 1255.8 L681.7 1249.9 L684.8 1242.6 L688.1 1237.6 L689.8 1231.0' fill='none' stroke='#efc186' stroke-width='1.25' opacity='0.95' stroke-linejoin='round'/><path d='M697.7 1425.8 L701.9 1430.1 L706.2 1433.5 L707.3 1438.6 L707.4 1443.3 L709.4 1447.8 L708.4 1452.1 L706.8 1457.4 L707.0 1462.7 L704.3 1467.6 L703.7 1472.7 L703.7 1478.1 L705.6 1482.3' fill='none' stroke='#efc186' stroke-width='1.25' opacity='0.95' stroke-linejoin='round'/><path d='M550.4 1432.5 L551.3 1437.8 L551.6 1443.3 L550.6 1449.9 L552.6 1456.6 L555.9 1460.9 L558.8 1467.0 L561.6 1470.9 L566.9 1473.8 L572.6 1473.9 L578.2 1474.5' fill='none' stroke='#efc186' stroke-width='1.25' opacity='0.95' stroke-linejoin='round'/><path d='M864.2 1521.4 L868.0 1516.3 L872.7 1511.3 L874.0 1506.1 L877.0 1499.6 L879.8 1493.9 L883.6 1488.8 L887.4 1483.1 L892.8 1480.5 L896.4 1475.6 L898.8 1470.3 L902.3 1466.5' fill='none' stroke='#efc186' stroke-width='1.25' opacity='0.95' stroke-linejoin='round'/><path d='M932.9 1298.7 L935.2 1308.3 L940.5 1314.8 L944.1 1322.3 L949.3 1328.7 L951.2 1336.0 L954.5 1343.2 L958.0 1351.3 L960.6 1360.7 L964.1 1369.3' fill='none' stroke='#efc186' stroke-width='1.25' opacity='0.95' stroke-linejoin='round'/><path d='M944.3 1457.5 L938.7 1463.9 L933.0 1469.0 L927.6 1475.2 L923.2 1481.5 L918.3 1488.0 L914.3 1495.6 L913.4 1503.5 L915.9 1512.5 L913.1 1519.2 L910.4 1526.1 L909.0 1534.1' fill='none' stroke='#efc186' stroke-width='1.25' opacity='0.95' stroke-linejoin='round'/><path d='M806.2 1590.7 L805.4 1582.6 L805.7 1574.7 L803.2 1568.6 L797.8 1561.8 L795.1 1556.4 L791.6 1549.9 L788.1 1542.8 L783.3 1537.1 L780.2 1529.9 L775.3 1524.5 L771.1 1517.7 L770.7 1509.9 L770.4 1501.9 L768.6 1494.1' fill='none' stroke='#efc186' stroke-width='1.25' opacity='0.95' stroke-linejoin='round'/><path d='M640.8 1547.6 L644.3 1552.1 L646.2 1558.3 L648.5 1563.8 L651.8 1567.7 L656.2 1572.8 L659.0 1578.6 L663.1 1581.7 L667.4 1586.0 L670.7 1590.1' fill='none' stroke='#efc186' stroke-width='1.25' opacity='0.95' stroke-linejoin='round'/><path d='M359.5 1612.2 L357.7 1608.4 L355.3 1603.6 L350.9 1599.7 L347.3 1595.1 L342.1 1592.2 L336.3 1592.5 L332.2 1588.9 L329.3 1584.4 L325.1 1580.4 L324.6 1576.6 L326.0 1570.5 L327.6 1565.4 L326.6 1559.5 L327.3 1555.6 L330.4 1551.4' fill='none' stroke='#efc186' stroke-width='1.25' opacity='0.95' stroke-linejoin='round'/><path d='M801.9 1709.5 L796.5 1707.0 L792.1 1706.9 L786.6 1707.1 L783.2 1710.8 L779.2 1715.6 L777.1 1721.2 L776.2 1725.7 L771.6 1728.5 L766.8 1731.2 L760.9 1731.7 L755.1 1732.1 L750.6 1734.4 L747.7 1739.3 L745.7 1743.3 L742.6 1746.9' fill='none' stroke='#efc186' stroke-width='1.25' opacity='0.95' stroke-linejoin='round'/><path d='M658.6 1427.3 L652.3 1426.9 L646.3 1425.3 L639.9 1421.8 L635.7 1418.2 L633.8 1413.0 L629.4 1408.3 L626.8 1403.8 L625.4 1398.4' fill='none' stroke='#efc186' stroke-width='1.25' opacity='0.95' stroke-linejoin='round'/><path d='M778.3 1294.0 L775.9 1300.5 L770.3 1307.3 L769.3 1314.7 L765.1 1322.0 L762.0 1329.4 L755.4 1336.2' fill='none' stroke='#efc186' stroke-width='1.25' opacity='0.95' stroke-linejoin='round'/><path d='M602.4 1632.6 L593.8 1630.3 L585.3 1628.7 L577.0 1627.1 L568.8 1625.2 L560.3 1626.2 L552.9 1629.0 L545.4 1630.5 L536.6 1631.0 L527.4 1630.7 L518.7 1626.3 L512.1 1622.0 L508.0 1614.9 L500.0 1610.1 L492.3 1605.2 L485.9 1600.4' fill='none' stroke='#efc186' stroke-width='1.25' opacity='0.95' stroke-linejoin='round'/><path d='M1038.6 1457.8 L1045.0 1461.6 L1050.7 1464.7 L1056.8 1468.9 L1063.9 1474.0 L1067.9 1480.6 L1068.1 1487.7 L1067.9 1495.0 L1068.6 1502.1' fill='none' stroke='#efc186' stroke-width='1.25' opacity='0.95' stroke-linejoin='round'/><path d='M656.4 1518.6 L654.4 1525.2 L656.8 1533.2 L656.0 1540.1 L652.4 1545.8 L647.2 1548.9 L640.6 1550.3' fill='none' stroke='#efc186' stroke-width='1.25' opacity='0.95' stroke-linejoin='round'/><path d='M490.3 1539.7 L495.2 1546.0 L502.9 1548.9 L510.1 1550.2 L518.0 1552.9 L523.1 1558.8 L530.7 1562.2' fill='none' stroke='#efc186' stroke-width='1.25' opacity='0.95' stroke-linejoin='round'/><path d='M500.6 1512.0 L501.0 1504.3 L501.9 1497.2 L499.4 1491.0 L494.7 1487.1 L488.1 1484.4 L481.3 1483.4 L473.5 1484.6' fill='none' stroke='#efc186' stroke-width='1.25' opacity='0.95' stroke-linejoin='round'/><path d='M745.0 1437.4 L750.9 1435.0 L757.0 1430.9 L760.7 1425.2 L764.1 1418.9 L765.2 1412.0 L764.7 1404.5 L762.7 1397.0 L761.4 1388.6 L758.4 1382.3' fill='none' stroke='#efc186' stroke-width='1.25' opacity='0.95' stroke-linejoin='round'/><path d='M863.1 1284.7 L862.7 1290.1 L859.7 1295.5 L856.7 1300.0 L855.0 1305.9 L854.8 1312.3 L855.1 1317.3 L852.0 1321.0 L848.4 1325.3 L845.8 1331.2 L844.4 1337.3 L840.6 1341.9 L837.6 1346.3' fill='none' stroke='#efc186' stroke-width='1.25' opacity='0.95' stroke-linejoin='round'/><path d='M350.4 1520.9 L354.5 1518.3 L359.4 1515.9 L364.4 1515.0 L367.5 1512.3 L369.9 1507.5 L373.8 1503.2 L377.0 1497.9 L379.4 1493.1 L381.9 1488.1 L383.0 1484.0 L387.2 1480.8' fill='none' stroke='#efc186' stroke-width='1.25' opacity='0.95' stroke-linejoin='round'/><path d='M634.4 1598.7 L628.6 1601.0 L621.9 1602.3 L616.0 1601.7 L609.9 1600.5 L605.5 1597.1 L601.3 1592.0 L598.8 1585.4 L593.7 1580.0 L589.6 1574.3 L585.7 1568.0 L585.5 1561.6 L585.4 1556.4 L585.0 1550.8 L585.8 1544.7 L589.9 1540.6 L591.8 1534.6' fill='none' stroke='#efc186' stroke-width='1.25' opacity='0.95' stroke-linejoin='round'/><path d='M719.7 1362.8 L718.0 1354.2 L717.9 1345.7 L720.5 1336.9 L723.1 1329.5 L725.5 1322.5 L730.8 1315.3 L735.3 1307.0 L741.8 1302.2 L748.6 1298.5 L755.9 1294.7 L763.1 1290.0 L768.0 1285.6 L774.8 1282.5 L783.3 1279.2 L791.5 1277.2' fill='none' stroke='#efc186' stroke-width='1.25' opacity='0.95' stroke-linejoin='round'/><path d='M841.3 1559.1 L843.1 1555.8 L845.6 1550.2 L847.2 1545.6 L848.5 1540.2 L852.3 1534.7 L854.4 1530.1 L856.4 1525.5' fill='none' stroke='#efc186' stroke-width='1.25' opacity='0.95' stroke-linejoin='round'/><path d='M707.8 1283.0 L708.4 1277.6 L705.2 1273.6 L703.0 1269.0 L702.0 1264.7 L697.6 1260.8 L696.4 1255.1 L697.4 1249.9 L700.5 1244.9 L700.1 1239.9 L698.9 1233.9 L698.8 1227.7 L696.0 1223.2 L694.4 1219.2 L691.2 1216.7 L688.2 1211.8' fill='none' stroke='#efc186' stroke-width='1.25' opacity='0.95' stroke-linejoin='round'/><path d='M1095.0 1649.6 L1095.1 1655.3 L1096.7 1661.6 L1097.6 1666.8 L1096.1 1672.7 L1095.2 1677.1 L1095.0 1682.7 L1096.1 1688.1 L1096.9 1693.2' fill='none' stroke='#efc186' stroke-width='1.25' opacity='0.95' stroke-linejoin='round'/><path d='M790.5 1552.4 L797.0 1557.3 L801.5 1563.9 L804.1 1570.9 L807.8 1576.5 L809.8 1583.5 L809.5 1591.8 L812.9 1598.3 L815.7 1605.6 L815.6 1613.1 L815.6 1620.5 L812.2 1627.2 L807.7 1634.5' fill='none' stroke='#efc186' stroke-width='1.25' opacity='0.95' stroke-linejoin='round'/><path d='M611.9 1668.1 L615.8 1665.8 L621.0 1665.0 L626.1 1665.1 L630.7 1662.3 L634.9 1657.8 L639.3 1655.5 L643.5 1654.8 L648.8 1654.7 L653.9 1655.3' fill='none' stroke='#efc186' stroke-width='1.25' opacity='0.95' stroke-linejoin='round'/><path d='M1062.9 1599.9 L1065.1 1607.2 L1069.5 1612.0 L1074.6 1615.6 L1080.7 1619.5 L1088.6 1621.4 L1094.7 1621.3 L1100.9 1617.3 L1106.9 1616.8 L1112.2 1614.4 L1118.1 1614.5 L1123.6 1610.6 L1128.9 1604.7 L1135.8 1602.8' fill='none' stroke='#efc186' stroke-width='1.25' opacity='0.95' stroke-linejoin='round'/><path d='M852.2 1332.1 L858.4 1327.1 L862.4 1320.4 L866.5 1314.6 L872.0 1310.9 L879.5 1308.9 L887.0 1305.4 L894.7 1302.4 L899.4 1297.6 L905.4 1293.5 L912.9 1289.9' fill='none' stroke='#efc186' stroke-width='1.25' opacity='0.95' stroke-linejoin='round'/><path d='M346.0 1550.0 L347.3 1556.1 L346.5 1562.8 L346.2 1569.2 L342.1 1576.0 L342.5 1582.6 L338.9 1587.6 L334.4 1592.1 L328.9 1594.7 L323.2 1596.4 L317.4 1598.3 L310.6 1598.6 L303.9 1601.1 L297.6 1602.6 L291.1 1606.4 L283.6 1606.9' fill='none' stroke='#efc186' stroke-width='1.25' opacity='0.95' stroke-linejoin='round'/><path d='M1051.9 1572.1 L1058.2 1570.5 L1065.4 1569.5 L1071.0 1565.4 L1077.9 1566.0 L1083.1 1562.1 L1088.1 1559.5 L1092.4 1557.1 L1098.9 1556.7 L1104.1 1554.6' fill='none' stroke='#efc186' stroke-width='1.25' opacity='0.95' stroke-linejoin='round'/><path d='M391.6 1313.1 L392.8 1305.8 L392.6 1296.7 L390.6 1289.1 L389.8 1281.9 L386.7 1274.5 L380.7 1270.8 L373.6 1268.4 L366.9 1265.2 L360.9 1257.9 L356.1 1252.0' fill='none' stroke='#efc186' stroke-width='1.25' opacity='0.95' stroke-linejoin='round'/><path d='M1109.1 1487.0 L1104.2 1482.5 L1100.1 1477.3 L1097.4 1470.7 L1094.0 1463.7 L1094.2 1455.7 L1096.1 1449.0 L1095.4 1441.7 L1095.2 1434.7 L1097.4 1427.2 L1098.7 1419.3 L1103.3 1412.0 L1104.4 1404.7 L1108.2 1399.2' fill='none' stroke='#efc186' stroke-width='1.25' opacity='0.95' stroke-linejoin='round'/><path d='M754.1 1362.9 L751.5 1356.7 L747.2 1351.6 L741.8 1348.9 L738.2 1344.2 L732.1 1343.1 L726.8 1339.2 L720.8 1335.6 L715.8 1334.1 L710.4 1334.1 L703.3 1334.0 L698.4 1334.7' fill='none' stroke='#efc186' stroke-width='1.25' opacity='0.95' stroke-linejoin='round'/><path d='M720.5 1522.5 L722.7 1528.2 L720.9 1534.2 L716.1 1539.3 L711.5 1542.8 L707.5 1547.9 L705.8 1554.6 L702.1 1560.7 L699.9 1565.7 L700.4 1572.5 L699.8 1577.9 L701.4 1584.1 L703.8 1590.9 L708.2 1595.6' fill='none' stroke='#efc186' stroke-width='1.25' opacity='0.95' stroke-linejoin='round'/><path d='M497.0 1456.4 L496.7 1464.0 L495.8 1471.2 L497.9 1479.3 L496.8 1486.7 L492.6 1493.2 L488.6 1501.2 L482.8 1506.4 L478.2 1511.2' fill='none' stroke='#efc186' stroke-width='1.25' opacity='0.95' stroke-linejoin='round'/><path d='M717.4 1614.2 L712.3 1620.0 L706.7 1627.3 L702.8 1634.0 L703.0 1641.1 L700.4 1648.7 L700.2 1657.2 L700.6 1665.5 L698.6 1672.3 L694.5 1679.6 L687.9 1684.9 L680.2 1689.8 L675.8 1695.3 L669.8 1699.4 L662.0 1701.1 L654.5 1705.0 L646.5 1708.8' fill='none' stroke='#efc186' stroke-width='1.25' opacity='0.95' stroke-linejoin='round'/><path d='M1098.0 1424.0 L1091.1 1420.4 L1082.3 1419.2 L1074.8 1415.2 L1071.4 1408.1 L1068.4 1400.1 L1069.1 1392.3' fill='none' stroke='#efc186' stroke-width='1.25' opacity='0.95' stroke-linejoin='round'/><path d='M609.6 1645.8 L616.8 1642.1 L622.7 1636.5 L628.0 1632.6 L633.4 1626.1 L639.5 1620.9 L645.2 1615.5 L650.2 1610.4 L653.9 1604.1 L660.2 1601.3 L668.5 1600.6 L674.9 1603.0' fill='none' stroke='#efc186' stroke-width='1.25' opacity='0.95' stroke-linejoin='round'/><path d='M747.7 1707.1 L753.3 1707.7 L758.3 1711.2 L763.3 1713.6 L767.8 1716.2 L773.0 1718.3 L775.0 1721.4 L776.5 1726.8 L776.8 1730.6' fill='none' stroke='#efc186' stroke-width='1.25' opacity='0.95' stroke-linejoin='round'/><path d='M626.7 1614.2 L631.1 1617.9 L635.5 1622.3 L641.2 1625.0 L646.1 1626.9 L648.9 1631.2 L649.6 1635.9 L652.5 1639.8 L654.7 1645.3 L654.3 1651.8 L654.0 1656.9 L650.5 1662.1 L646.7 1667.4 L646.2 1672.6 L644.0 1679.2 L641.3 1684.3' fill='none' stroke='#efc186' stroke-width='1.25' opacity='0.95' stroke-linejoin='round'/><path d='M917.1 1479.7 L913.5 1486.9 L913.3 1496.1 L915.9 1503.2 L919.0 1510.0 L922.6 1518.0 L920.7 1525.4 L922.1 1533.4 L924.8 1541.8 L928.4 1548.9 L933.6 1555.7 L937.9 1563.7 L944.2 1569.2 L951.5 1572.2' fill='none' stroke='#efc186' stroke-width='1.25' opacity='0.95' stroke-linejoin='round'/><path d='M735.2 1325.2 L742.5 1324.0 L747.5 1318.7 L752.9 1313.2 L754.4 1307.1 L760.1 1302.1 L762.6 1294.6 L762.2 1288.3 L763.8 1279.9 L766.1 1272.2 L770.7 1267.3 L778.6 1264.1 L783.5 1258.5 L789.5 1253.1 L795.7 1249.1 L803.3 1245.6 L809.4 1241.4' fill='none' stroke='#efc186' stroke-width='1.25' opacity='0.95' stroke-linejoin='round'/><path d='M827.1 1521.9 L832.1 1515.3 L839.1 1509.9 L842.5 1502.8 L848.4 1495.9 L850.5 1488.9 L848.5 1480.5 L851.4 1472.0 L851.0 1462.9 L849.8 1455.4 L850.1 1446.5 L853.6 1438.5 L858.5 1431.2 L864.4 1427.9' fill='none' stroke='#efc186' stroke-width='1.25' opacity='0.95' stroke-linejoin='round'/><path d='M1008.8 1422.7 L1002.4 1422.5 L994.6 1423.1 L988.7 1425.6 L982.1 1426.0 L975.4 1425.6 L968.4 1422.0 L963.2 1417.4 L960.0 1409.8 L957.5 1403.3 L954.4 1396.3 L953.4 1388.8' fill='none' stroke='#efc186' stroke-width='1.25' opacity='0.95' stroke-linejoin='round'/><path d='M1033.7 1469.5 L1025.2 1468.9 L1019.1 1467.9 L1012.0 1464.2 L1005.7 1464.4 L998.1 1461.4 L993.4 1456.5 L990.3 1450.8 L984.4 1446.4' fill='none' stroke='#efc186' stroke-width='1.25' opacity='0.95' stroke-linejoin='round'/><path d='M618.3 1696.8 L612.5 1701.6 L606.3 1705.4 L600.8 1711.4 L598.7 1718.2 L597.9 1726.2 L598.0 1734.3 L601.1 1741.7 L599.2 1750.3 L599.8 1759.0' fill='none' stroke='#efc186' stroke-width='1.25' opacity='0.95' stroke-linejoin='round'/><path d='M345.3 1485.0 L353.0 1485.4 L361.7 1488.9 L371.3 1489.2 L380.6 1492.2 L386.7 1497.6 L395.2 1501.9 L402.8 1505.0' fill='none' stroke='#efc186' stroke-width='1.25' opacity='0.95' stroke-linejoin='round'/><path d='M468.0 1431.7 L461.0 1427.1 L451.7 1427.4 L445.2 1431.4 L440.9 1440.0 L439.3 1447.8 L439.4 1455.4 L436.5 1462.9 L431.9 1471.1 L430.5 1480.1 L427.2 1488.5 L428.7 1497.2 L431.5 1505.9 L431.5 1514.4' fill='none' stroke='#efc186' stroke-width='1.25' opacity='0.95' stroke-linejoin='round'/><path d='M1129.0 1301.1 L1124.7 1301.1 L1118.8 1303.0 L1114.9 1304.9 L1110.9 1306.8 L1106.9 1306.9 L1102.9 1310.9 L1099.0 1312.4 L1094.0 1315.5 L1089.1 1316.2 L1084.9 1319.2 L1080.6 1321.6 L1077.1 1326.4' fill='none' stroke='#efc186' stroke-width='1.25' opacity='0.95' stroke-linejoin='round'/><path d='M518.5 1328.9 L523.3 1326.8 L528.2 1324.8 L531.9 1321.8 L536.2 1319.1 L539.0 1314.2 L541.4 1308.7 L542.1 1303.7 L543.1 1299.8 L545.3 1295.2 L545.5 1289.2 L545.3 1285.1 L544.4 1279.8' fill='none' stroke='#efc186' stroke-width='1.25' opacity='0.95' stroke-linejoin='round'/><path d='M713.5 1686.6 L717.9 1693.4 L722.8 1701.4 L725.7 1708.8 L727.7 1716.2 L732.1 1724.2 L734.8 1731.8 L734.6 1741.1' fill='none' stroke='#efc186' stroke-width='1.25' opacity='0.95' stroke-linejoin='round'/><path d='M595.4 1503.4 L595.4 1511.9 L594.1 1519.3 L597.4 1525.9 L597.3 1534.3 L599.3 1542.8 L603.9 1548.3 L610.9 1553.3 L613.6 1559.7 L618.7 1564.6 L626.0 1569.9 L631.3 1574.3 L636.4 1579.4 L645.1 1581.9 L653.0 1586.0 L660.5 1586.4' fill='none' stroke='#efc186' stroke-width='1.25' opacity='0.95' stroke-linejoin='round'/><path d='M838.4 1686.4 L844.1 1683.0 L846.8 1679.3 L851.6 1676.3 L855.5 1674.0 L858.4 1670.3 L861.4 1667.1 L865.4 1664.5 L867.3 1660.9' fill='none' stroke='#efc186' stroke-width='1.25' opacity='0.95' stroke-linejoin='round'/><path d='M416.0 1604.5 L408.1 1603.5 L400.8 1605.5 L392.7 1609.0 L385.1 1614.3 L378.7 1617.3 L370.9 1617.1 L362.7 1620.9 L356.1 1625.7 L350.0 1628.8 L341.7 1630.3' fill='none' stroke='#efc186' stroke-width='1.25' opacity='0.95' stroke-linejoin='round'/><path d='M960.5 1670.7 L952.4 1673.3 L946.5 1678.3 L938.1 1680.7 L931.6 1685.4 L924.8 1690.1 L917.4 1692.2 L910.1 1696.2 L907.2 1702.9 L901.2 1708.0' fill='none' stroke='#efc186' stroke-width='1.25' opacity='0.95' stroke-linejoin='round'/><path d='M983.9 1626.5 L985.4 1621.5 L987.6 1615.6 L991.8 1611.1 L995.2 1606.8 L1000.2 1603.8 L1002.4 1599.1 L1008.2 1594.9 L1013.3 1595.2 L1019.6 1594.1 L1024.3 1592.7 L1028.7 1594.7 L1033.1 1598.9 L1037.0 1603.1 L1041.3 1606.6' fill='none' stroke='#efc186' stroke-width='1.25' opacity='0.95' stroke-linejoin='round'/><path d='M500.7 1430.6 L494.3 1435.8 L490.7 1444.1 L487.1 1450.5 L483.1 1457.7 L480.4 1465.3 L476.3 1471.3 L471.1 1478.0 L468.2 1486.3 L465.2 1494.2 L461.3 1502.2 L460.7 1510.4 L463.7 1517.0 L469.9 1523.2' fill='none' stroke='#efc186' stroke-width='1.25' opacity='0.95' stroke-linejoin='round'/><path d='M504.3 1531.8 L500.0 1537.6 L498.2 1545.3 L498.6 1552.6 L496.2 1559.2 L496.2 1565.9 L495.3 1571.9 L489.9 1577.1 L486.2 1584.0 L482.3 1588.6 L477.6 1593.5 L472.5 1598.9' fill='none' stroke='#efc186' stroke-width='1.25' opacity='0.95' stroke-linejoin='round'/><path d='M1003.0 1511.1 L1009.8 1514.1 L1017.0 1519.7 L1023.8 1522.3 L1030.2 1526.3 L1035.8 1530.1 L1039.3 1536.1 L1040.6 1543.3 L1045.2 1551.4' fill='none' stroke='#efc186' stroke-width='1.25' opacity='0.95' stroke-linejoin='round'/><path d='M639.5 1629.1 L632.0 1631.0 L624.5 1634.1 L616.6 1638.0 L609.6 1644.7 L602.3 1648.5 L594.8 1654.1 L590.5 1660.7 L587.7 1668.7 L586.1 1677.6 L589.1 1684.5 L595.7 1690.6 L601.3 1696.4 L608.2 1701.0' fill='none' stroke='#efc186' stroke-width='1.25' opacity='0.95' stroke-linejoin='round'/><path d='M636.4 1415.5 L635.3 1408.2 L632.7 1400.8 L628.6 1394.3 L625.5 1389.0 L620.2 1384.1 L612.7 1382.9' fill='none' stroke='#efc186' stroke-width='1.25' opacity='0.95' stroke-linejoin='round'/><path d='M489.3 1706.6 L489.4 1698.6 L488.8 1691.4 L487.9 1684.9 L487.4 1677.8 L487.1 1671.7 L489.2 1665.8 L489.6 1659.5 L494.6 1653.7 L496.2 1646.1 L495.6 1639.9 L499.6 1634.0 L506.0 1629.3 L510.2 1623.5 L515.9 1619.9' fill='none' stroke='#efc186' stroke-width='1.25' opacity='0.95' stroke-linejoin='round'/><path d='M1024.8 1538.2 L1024.1 1545.6 L1023.4 1554.4 L1022.8 1562.8 L1026.7 1570.0 L1028.9 1577.0 L1030.5 1584.1' fill='none' stroke='#efc186' stroke-width='1.25' opacity='0.95' stroke-linejoin='round'/><path d='M822.3 1446.1 L814.2 1451.1 L808.1 1456.1 L803.3 1463.8 L799.0 1469.7 L795.0 1475.5 L788.2 1479.8 L782.1 1483.9 L776.9 1489.5 L769.5 1493.0 L763.6 1498.3 L760.6 1505.8 L758.4 1512.8' fill='none' stroke='#efc186' stroke-width='1.25' opacity='0.95' stroke-linejoin='round'/><path d='M1090.4 1553.1 L1090.0 1558.9 L1089.1 1565.4 L1089.4 1572.2 L1090.0 1578.0 L1091.6 1584.1 L1092.4 1590.9 L1089.6 1597.3 L1089.4 1602.7 L1087.6 1609.0 L1082.3 1612.2 L1077.4 1614.2 L1070.9 1615.4 L1066.3 1618.8 L1059.4 1619.2' fill='none' stroke='#efc186' stroke-width='1.25' opacity='0.95' stroke-linejoin='round'/><path d='M933.0 1713.7 L932.9 1721.8 L934.5 1729.0 L939.6 1736.3 L943.1 1743.8 L945.4 1751.6 L942.7 1759.5 L940.5 1768.2 L940.0 1775.7 L937.6 1784.0' fill='none' stroke='#efc186' stroke-width='1.25' opacity='0.95' stroke-linejoin='round'/><path d='M1050.6 1526.9 L1048.3 1532.9 L1048.9 1539.1 L1051.9 1544.8 L1053.1 1551.1 L1052.9 1555.5 L1051.8 1560.1 L1052.7 1565.5 L1051.8 1571.3 L1050.7 1575.4 L1049.7 1580.8 L1047.2 1585.8 L1046.3 1591.2 L1042.7 1596.0 L1041.1 1601.4 L1038.2 1605.4' fill='none' stroke='#efc186' stroke-width='1.25' opacity='0.95' stroke-linejoin='round'/><path d='M718.4 1528.3 L723.9 1531.7 L727.4 1535.7 L729.0 1542.1 L728.7 1548.6 L727.7 1554.5 L726.4 1559.9' fill='none' stroke='#efc186' stroke-width='1.25' opacity='0.95' stroke-linejoin='round'/><path d='M955.5 1468.4 L959.7 1474.5 L962.4 1480.6 L962.8 1488.7 L958.5 1494.1 L954.1 1498.7 L948.0 1501.6 L941.6 1503.6 L933.8 1504.3' fill='none' stroke='#efc186' stroke-width='1.25' opacity='0.95' stroke-linejoin='round'/><path d='M376.4 1628.0 L380.7 1622.7 L386.5 1617.1 L391.2 1609.9 L395.4 1603.1 L401.6 1598.2 L409.9 1595.4 L418.2 1594.0 L425.7 1591.4 L433.3 1586.2 L437.3 1579.5 L438.9 1570.6 L439.5 1561.9 L443.3 1555.3 L450.7 1549.7 L456.6 1544.3' fill='none' stroke='#efc186' stroke-width='1.25' opacity='0.95' stroke-linejoin='round'/><path d='M1071.7 1513.8 L1072.1 1508.1 L1069.9 1501.2 L1066.0 1495.6 L1063.8 1489.5 L1063.5 1483.8 L1064.1 1476.5 L1061.8 1470.2 L1059.9 1464.3' fill='none' stroke='#efc186' stroke-width='1.25' opacity='0.95' stroke-linejoin='round'/><path d='M498.7 1386.2 L491.7 1387.8 L485.6 1386.5 L477.4 1387.0 L471.5 1387.2 L464.7 1384.3 L460.5 1378.5 L454.5 1375.0' fill='none' stroke='#efc186' stroke-width='1.25' opacity='0.95' stroke-linejoin='round'/><path d='M952.6 1303.5 L945.6 1298.0 L935.7 1297.6 L927.8 1293.3 L921.3 1287.7 L917.4 1278.8 L916.3 1269.2 L912.5 1262.8 L908.0 1256.1 L906.4 1247.3 L907.4 1239.6 L909.7 1230.7 L916.3 1225.4 L920.6 1217.7' fill='none' stroke='#efc186' stroke-width='1.25' opacity='0.95' stroke-linejoin='round'/><path d='M667.7 1667.9 L660.8 1666.7 L654.7 1666.4 L647.0 1664.4 L641.0 1662.7 L635.1 1662.3 L627.9 1662.1 L622.7 1665.6 L618.5 1670.6 L612.8 1674.2 L610.6 1681.0 L611.8 1687.6 L610.2 1693.5 L611.5 1700.2' fill='none' stroke='#efc186' stroke-width='1.25' opacity='0.95' stroke-linejoin='round'/><path d='M809.1 1319.7 L808.3 1313.5 L807.1 1306.3 L803.0 1300.6 L797.6 1296.2 L793.8 1288.8 L792.7 1282.7 L793.0 1275.4 L796.6 1267.8 L796.9 1260.6 L796.0 1253.7' fill='none' stroke='#efc186' stroke-width='1.25' opacity='0.95' stroke-linejoin='round'/><path d='M1114.5 1364.2 L1113.3 1369.3 L1112.2 1373.6 L1108.9 1379.1 L1104.1 1381.5 L1099.8 1386.4 L1098.0 1392.1 L1095.3 1396.8 L1091.9 1401.5 L1088.8 1407.0 L1085.5 1409.4 L1079.8 1410.1 L1073.8 1408.9 L1069.3 1407.7 L1063.0 1405.8' fill='none' stroke='#efc186' stroke-width='1.25' opacity='0.95' stroke-linejoin='round'/><path d='M513.8 1709.2 L510.6 1714.7 L505.1 1718.7 L502.2 1724.2 L502.1 1729.9 L499.4 1736.3 L496.5 1741.6 L493.4 1745.1 L490.4 1750.0 L488.4 1756.7 L484.4 1762.6 L477.9 1764.5' fill='none' stroke='#efc186' stroke-width='1.25' opacity='0.95' stroke-linejoin='round'/><path d='M1117.8 1316.2 L1113.8 1310.5 L1108.8 1305.9 L1104.9 1300.4 L1102.0 1294.8 L1100.7 1288.9 L1098.2 1283.1 L1095.4 1276.6 L1091.3 1272.4 L1087.9 1266.3 L1084.6 1260.6' fill='none' stroke='#efc186' stroke-width='1.25' opacity='0.95' stroke-linejoin='round'/><path d='M416.8 1620.3 L420.5 1615.5 L424.6 1611.2 L425.2 1605.9 L427.0 1600.0 L429.7 1595.6 L435.2 1592.1 L439.8 1590.0 L444.4 1585.6 L449.7 1584.1 L454.2 1583.3 L459.5 1584.4 L464.0 1583.9 L468.4 1582.1 L474.4 1580.9 L479.2 1577.2 L485.3 1574.8' fill='none' stroke='#efc186' stroke-width='1.25' opacity='0.95' stroke-linejoin='round'/><path d='M583.8 1509.6 L578.2 1508.4 L574.6 1503.5 L570.0 1498.5 L563.7 1496.4 L557.9 1492.1 L551.3 1492.0 L544.8 1492.3 L539.9 1495.0 L533.7 1495.8 L527.9 1494.0 L522.1 1490.9 L517.2 1489.8' fill='none' stroke='#efc186' stroke-width='1.25' opacity='0.95' stroke-linejoin='round'/><path d='M843.4 1610.6 L838.6 1614.8 L836.2 1620.9 L830.9 1623.9 L824.2 1625.9 L818.6 1623.9 L812.7 1621.9 L807.8 1620.1 L802.0 1616.9 L796.5 1612.5 L793.6 1606.8 L792.5 1599.5 L789.2 1594.7 L788.5 1587.5 L787.4 1580.6' fill='none' stroke='#efc186' stroke-width='1.25' opacity='0.95' stroke-linejoin='round'/><path d='M602.0 1548.5 L605.6 1553.6 L609.9 1556.3 L613.6 1560.6 L618.5 1564.6 L623.7 1567.4 L627.9 1570.5 L631.5 1575.0 L637.0 1577.0 L641.7 1577.2 L646.9 1578.4' fill='none' stroke='#efc186' stroke-width='1.25' opacity='0.95' stroke-linejoin='round'/><path d='M501.9 1697.9 L494.5 1693.6 L487.7 1691.5 L479.1 1688.0 L471.8 1689.7 L463.8 1690.5 L456.4 1690.8 L448.2 1692.3 L439.2 1694.4 L432.7 1698.9 L427.6 1705.2 L423.5 1712.2 L417.6 1718.4 L409.9 1723.6 L403.3 1725.6 L397.8 1730.9 L392.2 1736.4' fill='none' stroke='#efc186' stroke-width='1.25' opacity='0.95' stroke-linejoin='round'/><path d='M523.8 1542.5 L528.9 1544.4 L535.5 1544.9 L541.0 1542.6 L545.7 1541.6 L550.3 1541.9 L555.6 1543.0 L560.5 1546.9 L562.5 1552.1 L561.1 1558.0' fill='none' stroke='#efc186' stroke-width='1.25' opacity='0.95' stroke-linejoin='round'/><path d='M1090.9 1335.9 L1096.8 1336.3 L1102.2 1339.3 L1108.2 1341.9 L1112.7 1344.1 L1118.5 1346.7 L1123.8 1349.8 L1130.0 1351.6 L1135.2 1353.7 L1141.3 1356.7 L1147.3 1360.2 L1150.5 1365.3 L1154.3 1369.8 L1160.1 1371.0 L1165.7 1374.8 L1171.2 1377.4' fill='none' stroke='#efc186' stroke-width='1.25' opacity='0.95' stroke-linejoin='round'/><path d='M710.9 1522.0 L705.1 1520.2 L699.4 1520.5 L694.8 1521.9 L689.5 1522.6 L683.8 1524.0 L677.7 1522.6 L674.5 1519.2 L670.0 1516.9 L667.7 1512.1 L664.8 1506.5' fill='none' stroke='#efc186' stroke-width='1.25' opacity='0.95' stroke-linejoin='round'/><path d='M533.7 1494.1 L535.6 1499.7 L534.5 1504.4 L535.9 1509.1 L536.1 1514.3 L534.4 1519.0 L533.3 1524.2 L529.8 1529.4 L528.4 1534.5 L527.2 1540.1 L527.6 1546.4 L529.3 1551.1' fill='none' stroke='#efc186' stroke-width='1.25' opacity='0.95' stroke-linejoin='round'/><path d='M331.9 1459.6 L329.3 1451.6 L328.9 1443.6 L330.1 1436.2 L333.3 1428.7 L335.6 1422.7 L338.7 1415.5 L338.4 1407.9 L338.8 1401.2 L340.1 1392.9 L339.2 1385.7 L336.7 1378.0 L334.4 1371.5 L329.8 1365.7 L325.9 1360.8 L322.5 1354.9 L321.6 1346.5' fill='none' stroke='#efc186' stroke-width='1.25' opacity='0.95' stroke-linejoin='round'/><path d='M754.7 1321.8 L752.4 1326.0 L749.2 1330.0 L750.3 1334.5 L749.8 1338.7 L748.3 1344.1 L747.1 1349.7 L745.2 1353.2 L741.0 1356.6 L738.7 1360.7 L737.7 1365.3 L735.7 1369.9 L732.3 1374.7 L731.4 1379.2' fill='none' stroke='#efc186' stroke-width='1.25' opacity='0.95' stroke-linejoin='round'/><path d='M714.5 1564.3 L711.9 1561.0 L708.3 1557.4 L707.4 1552.2 L706.0 1547.0 L703.1 1542.5 L702.2 1535.9 L701.9 1529.9 L701.0 1524.1' fill='none' stroke='#efc186' stroke-width='1.25' opacity='0.95' stroke-linejoin='round'/><path d='M1070.7 1577.1 L1067.4 1582.9 L1066.1 1589.6 L1062.5 1597.4 L1058.5 1604.7 L1056.4 1611.3 L1056.1 1618.9 L1053.2 1625.5 L1048.9 1630.9 L1047.9 1637.2 L1048.0 1645.1 L1048.9 1651.6 L1048.5 1659.3 L1043.7 1666.5 L1038.3 1671.3' fill='none' stroke='#efc186' stroke-width='1.25' opacity='0.95' stroke-linejoin='round'/><path d='M1125.2 1626.4 L1122.7 1622.2 L1124.1 1617.2 L1124.1 1612.5 L1124.8 1606.4 L1122.6 1601.6 L1119.7 1597.1 L1115.9 1592.6 L1112.0 1589.6 L1107.0 1589.7' fill='none' stroke='#efc186' stroke-width='1.25' opacity='0.95' stroke-linejoin='round'/><path d='M628.5 1393.0 L632.6 1397.8 L634.6 1403.9 L636.9 1410.1 L639.2 1417.4 L639.7 1423.1 L642.2 1429.4 L643.8 1436.8 L647.8 1442.2 L650.8 1449.3' fill='none' stroke='#efc186' stroke-width='1.25' opacity='0.95' stroke-linejoin='round'/><path d='M552.0 1691.1 L558.4 1696.9 L562.9 1703.6 L566.7 1711.1 L573.4 1714.8 L580.6 1719.6 L587.3 1724.6 L593.7 1727.6 L600.0 1731.5 L606.5 1735.5 L611.8 1741.3 L619.9 1744.5' fill='none' stroke='#efc186' stroke-width='1.25' opacity='0.95' stroke-linejoin='round'/><path d='M1046.7 1645.1 L1045.4 1652.6 L1047.2 1659.9 L1051.9 1666.4 L1053.1 1674.1 L1055.1 1680.6 L1059.8 1687.0 L1064.5 1692.4 L1070.7 1697.1 L1076.8 1698.6 L1082.2 1703.1 L1090.2 1704.3 L1098.2 1706.3 L1104.7 1708.7 L1111.2 1712.2 L1117.0 1713.5 L1123.1 1712.5' fill='none' stroke='#efc186' stroke-width='1.25' opacity='0.95' stroke-linejoin='round'/><path d='M574.4 1501.2 L579.8 1499.4 L584.2 1498.1 L589.4 1499.3 L595.4 1501.0 L600.7 1502.1 L605.3 1499.8 L611.2 1499.2 L615.5 1500.6 L621.6 1502.2 L626.3 1506.6 L630.2 1511.2 L631.7 1516.7 L631.9 1521.9 L632.1 1527.8 L633.6 1532.9' fill='none' stroke='#efc186' stroke-width='1.25' opacity='0.95' stroke-linejoin='round'/><path d='M1126.1 1406.3 L1128.9 1400.9 L1129.0 1394.2 L1131.5 1388.3 L1134.1 1383.4 L1136.4 1376.7 L1140.3 1370.9 L1146.8 1367.8 L1153.3 1366.9 L1159.0 1365.6 L1163.4 1363.5' fill='none' stroke='#efc186' stroke-width='1.25' opacity='0.95' stroke-linejoin='round'/><path d='M921.2 1505.2 L921.6 1500.4 L918.6 1496.3 L918.8 1489.6 L916.7 1485.6 L915.8 1480.2 L915.4 1474.7' fill='none' stroke='#efc186' stroke-width='1.25' opacity='0.95' stroke-linejoin='round'/><path d='M1046.4 1469.3 L1043.6 1461.5 L1043.1 1453.8 L1040.8 1446.3 L1041.1 1438.0 L1044.1 1428.9 L1044.0 1421.6 L1046.6 1412.3 L1052.4 1405.0 L1055.7 1396.2 L1055.8 1386.9 L1056.7 1379.1 L1057.2 1370.5 L1056.7 1363.1' fill='none' stroke='#efc186' stroke-width='1.25' opacity='0.95' stroke-linejoin='round'/><path d='M384.4 1413.8 L390.6 1411.6 L397.4 1409.5 L403.1 1408.0 L410.7 1407.6 L417.4 1408.1 L424.3 1409.4 L430.3 1411.9 L436.2 1414.2 L442.5 1414.0 L449.2 1413.3 L456.7 1413.2 L463.8 1413.4 L470.4 1411.2' fill='none' stroke='#efc186' stroke-width='1.25' opacity='0.95' stroke-linejoin='round'/><path d='M1068.6 1357.4 L1066.8 1363.5 L1065.9 1370.1 L1063.7 1376.3 L1063.2 1382.8 L1060.7 1389.0 L1059.7 1396.3 L1058.5 1402.4 L1060.3 1407.9 L1060.1 1414.1 L1060.7 1420.6 L1061.5 1426.0 L1063.0 1431.2 L1063.9 1437.4 L1062.8 1444.5' fill='none' stroke='#efc186' stroke-width='1.25' opacity='0.95' stroke-linejoin='round'/><path d='M649.8 1512.9 L643.6 1509.5 L636.6 1503.3 L630.1 1498.1 L622.8 1493.1 L617.0 1488.5 L610.5 1484.3 L602.4 1484.3 L593.2 1482.4 L587.3 1479.3 L581.8 1473.6 L575.4 1468.3 L570.3 1462.5 L564.3 1457.5 L557.9 1451.2 L553.6 1444.5' fill='none' stroke='#efc186' stroke-width='1.25' opacity='0.95' stroke-linejoin='round'/><path d='M631.0 1504.3 L634.1 1498.2 L634.9 1490.5 L636.7 1484.3 L637.5 1478.2 L636.7 1469.8 L636.0 1463.2 L637.7 1457.2 L635.1 1450.6 L635.3 1444.0 L638.2 1437.9 L643.1 1432.9 L645.4 1424.8 L647.3 1417.9' fill='none' stroke='#efc186' stroke-width='1.25' opacity='0.95' stroke-linejoin='round'/><path d='M1009.7 1400.8 L1017.9 1400.2 L1024.6 1397.0 L1031.0 1395.9 L1038.3 1394.5 L1046.1 1393.8 L1054.5 1392.1 L1062.3 1394.0 L1068.4 1397.6 L1075.1 1400.1 L1080.3 1403.3 L1084.7 1409.1 L1090.6 1411.3 L1097.3 1414.2 L1102.3 1418.4' fill='none' stroke='#efc186' stroke-width='1.25' opacity='0.95' stroke-linejoin='round'/><path d='M1135.0 1683.5 L1141.3 1677.6 L1145.8 1669.5 L1146.5 1662.1 L1143.9 1653.2 L1141.1 1645.0 L1135.9 1639.8 L1128.7 1635.6 L1122.7 1630.3 L1117.4 1623.8 L1112.8 1617.8 L1106.4 1613.6 L1100.4 1608.7' fill='none' stroke='#efc186' stroke-width='1.25' opacity='0.95' stroke-linejoin='round'/><path d='M330.5 1618.4 L326.5 1616.4 L322.9 1614.6 L318.8 1611.7 L315.6 1610.1 L311.5 1608.0 L305.9 1607.6 L301.3 1605.9 L297.9 1604.2 L292.9 1601.2 L289.1 1598.9 L284.1 1598.3' fill='none' stroke='#efc186' stroke-width='1.25' opacity='0.95' stroke-linejoin='round'/><path d='M490.3 1513.4 L492.7 1520.9 L499.2 1527.0 L502.7 1533.5 L506.0 1540.0 L508.8 1546.7 L507.7 1553.6' fill='none' stroke='#efc186' stroke-width='1.25' opacity='0.95' stroke-linejoin='round'/><path d='M1063.0 1313.9 L1065.2 1321.5 L1064.4 1331.4 L1064.7 1340.9 L1069.6 1347.5 L1075.2 1354.0 L1083.5 1359.8 L1088.7 1366.3 L1094.3 1373.1 L1102.4 1375.7 L1112.2 1377.2 L1120.4 1378.8 L1128.5 1383.2 L1132.9 1390.6 L1140.6 1394.0 L1149.0 1398.2' fill='none' stroke='#efc186' stroke-width='1.25' opacity='0.95' stroke-linejoin='round'/><path d='M466.7 1476.5 L471.6 1470.1 L476.6 1462.3 L480.7 1455.3 L488.6 1453.3 L494.1 1449.5 L500.9 1447.3 L507.4 1446.6 L514.4 1441.9 L521.6 1436.7 L526.8 1430.6 L533.9 1426.6 L540.8 1423.1 L547.1 1417.1 L555.2 1415.4 L562.9 1412.7 L569.6 1411.4' fill='none' stroke='#efc186' stroke-width='1.25' opacity='0.95' stroke-linejoin='round'/><path d='M658.8 1665.7 L653.9 1659.9 L648.3 1658.3 L641.7 1653.3 L636.4 1649.7 L630.3 1647.2 L625.3 1643.8 L619.8 1637.7' fill='none' stroke='#efc186' stroke-width='1.25' opacity='0.95' stroke-linejoin='round'/><path d='M344.1 1288.6 L350.5 1285.3 L358.8 1284.7 L365.1 1282.5 L371.4 1279.2 L376.1 1274.4 L383.4 1271.6 L389.7 1266.8 L396.8 1265.1 L404.4 1267.6 L410.7 1268.0 L417.9 1266.5' fill='none' stroke='#efc186' stroke-width='1.25' opacity='0.95' stroke-linejoin='round'/><path d='M623.3 1641.1 L632.6 1642.6 L639.8 1646.4 L644.8 1652.6 L648.9 1660.1 L651.7 1669.3 L651.5 1678.6 L650.9 1687.2 L649.7 1696.7 L648.3 1706.1 L645.1 1714.6 L644.5 1724.3 L647.4 1732.7 L648.3 1740.6 L651.2 1748.0 L657.7 1752.9 L662.1 1760.0' fill='none' stroke='#efc186' stroke-width='1.25' opacity='0.95' stroke-linejoin='round'/><path d='M826.2 1597.3 L824.5 1602.1 L825.4 1608.5 L823.9 1615.1 L822.9 1619.9 L823.0 1625.4 L822.4 1630.4 L821.9 1635.7' fill='none' stroke='#efc186' stroke-width='1.25' opacity='0.95' stroke-linejoin='round'/><path d='M674.6 1610.2 L680.9 1606.3 L687.4 1604.6 L693.6 1600.9 L698.5 1595.5 L702.8 1590.2 L707.4 1584.6 L711.6 1579.0 L717.1 1573.6' fill='none' stroke='#efc186' stroke-width='1.25' opacity='0.95' stroke-linejoin='round'/><path d='M546.9 1596.2 L550.7 1593.2 L554.5 1588.6 L560.0 1586.5 L564.7 1585.6 L568.9 1584.6 L574.4 1581.1 L577.4 1577.8 L580.7 1574.2 L585.7 1569.8 L589.3 1565.7 L595.2 1563.8 L599.8 1563.5 L606.1 1563.6' fill='none' stroke='#efc186' stroke-width='1.25' opacity='0.95' stroke-linejoin='round'/><path d='M918.0 1399.7 L919.3 1408.0 L925.3 1413.1 L927.9 1419.2 L931.0 1427.0 L931.8 1434.2 L930.4 1441.4 L931.3 1448.1 L931.9 1455.9 L930.5 1463.5 L927.1 1469.4 L926.8 1477.4 L927.9 1484.8 L929.2 1492.6' fill='none' stroke='#efc186' stroke-width='1.25' opacity='0.95' stroke-linejoin='round'/><path d='M538.7 1304.6 L529.7 1307.2 L522.4 1313.2 L514.6 1318.2 L507.7 1323.3 L498.8 1327.0 L492.9 1332.4 L487.8 1338.9 L481.1 1344.3 L475.4 1351.6 L472.5 1359.0 L470.0 1366.6 L468.1 1373.9' fill='none' stroke='#efc186' stroke-width='1.25' opacity='0.95' stroke-linejoin='round'/><path d='M597.4 1652.9 L601.1 1657.1 L606.5 1660.3 L608.7 1666.2 L611.1 1671.6 L613.4 1677.8 L614.9 1683.3 L615.6 1687.6 L618.2 1693.9 L618.5 1700.6 L616.2 1705.3 L613.7 1710.1 L609.9 1713.7 L604.0 1714.8 L597.6 1716.1' fill='none' stroke='#efc186' stroke-width='1.25' opacity='0.95' stroke-linejoin='round'/><path d='M619.4 1312.1 L615.4 1310.5 L611.1 1309.6 L606.7 1306.4 L602.0 1304.1 L598.1 1301.7 L592.9 1300.4 L590.1 1296.7 L585.7 1296.5 L582.5 1293.0 L579.2 1291.0 L575.9 1286.2 L574.3 1282.3' fill='none' stroke='#efc186' stroke-width='1.25' opacity='0.95' stroke-linejoin='round'/><path d='M953.8 1715.5 L949.1 1722.2 L946.1 1730.3 L946.6 1737.7 L949.0 1745.4 L948.6 1753.8 L945.8 1760.7 L943.0 1768.5 L939.2 1776.9 L934.4 1783.2 L929.3 1789.8 L925.5 1794.7 L923.4 1803.1 L922.5 1811.7 L919.2 1819.2 L914.6 1825.4 L913.0 1831.8' fill='none' stroke='#efc186' stroke-width='1.25' opacity='0.95' stroke-linejoin='round'/><path d='M709.5 1455.2 L703.3 1452.0 L697.6 1448.5 L691.6 1448.3 L686.3 1444.8 L683.8 1440.2 L678.4 1434.5' fill='none' stroke='#efc186' stroke-width='1.25' opacity='0.95' stroke-linejoin='round'/><path d='M981.8 1317.6 L987.9 1318.2 L994.8 1317.9 L1000.8 1318.8 L1006.7 1319.0 L1011.7 1321.0 L1016.4 1326.5' fill='none' stroke='#efc186' stroke-width='1.25' opacity='0.95' stroke-linejoin='round'/><path d='M615.1 1566.0 L614.8 1571.1 L612.9 1576.6 L612.1 1581.5 L608.3 1587.2 L604.1 1590.0 L598.4 1593.0 L592.3 1593.2' fill='none' stroke='#efc186' stroke-width='1.25' opacity='0.95' stroke-linejoin='round'/><path d='M678.1 1559.1 L681.5 1565.3 L682.1 1573.8 L682.5 1580.5 L684.3 1588.4 L682.7 1596.5 L681.3 1603.0 L683.7 1610.0 L687.2 1615.8 L692.1 1622.7 L697.8 1629.2 L702.1 1634.6 L705.6 1639.8 L709.2 1645.6 L713.1 1652.3' fill='none' stroke='#efc186' stroke-width='1.25' opacity='0.95' stroke-linejoin='round'/><path d='M691.9 1419.9 L694.6 1423.8 L698.3 1427.6 L705.0 1429.9 L710.8 1432.1 L714.8 1435.1 L718.4 1439.3 L720.4 1444.0 L720.7 1450.7 L720.7 1457.8 L720.7 1464.7 L721.1 1471.0 L723.9 1476.1 L725.8 1482.8 L725.4 1488.1 L724.7 1494.2 L722.0 1499.4' fill='none' stroke='#efc186' stroke-width='1.25' opacity='0.95' stroke-linejoin='round'/><path d='M355.2 1438.7 L348.1 1439.4 L339.9 1439.4 L332.1 1439.5 L324.2 1437.7 L317.7 1439.7 L311.2 1441.5 L304.6 1444.0 L298.0 1444.1 L291.9 1441.1 L285.8 1437.0 L279.6 1431.8 L272.6 1429.5 L266.4 1426.3 L262.2 1421.7 L255.8 1418.5 L248.8 1416.0' fill='none' stroke='#efc186' stroke-width='1.25' opacity='0.95' stroke-linejoin='round'/><path d='M1037.0 1649.6 L1037.7 1658.4 L1042.3 1666.9 L1044.6 1674.9 L1042.6 1684.0 L1038.9 1690.5 L1032.6 1695.3 L1025.8 1701.9 L1019.3 1709.8 L1011.1 1714.5 L1006.8 1721.1 L1003.9 1729.9 L998.7 1737.8 L996.5 1746.7 L991.4 1754.1' fill='none' stroke='#efc186' stroke-width='1.25' opacity='0.95' stroke-linejoin='round'/><path d='M603.8 1558.4 L604.1 1553.7 L606.0 1550.0 L610.2 1545.7 L611.5 1541.3 L614.7 1537.9 L616.1 1533.4 L618.2 1529.8' fill='none' stroke='#efc186' stroke-width='1.25' opacity='0.95' stroke-linejoin='round'/><path d='M864.6 1634.2 L856.7 1631.7 L852.6 1625.4 L846.3 1620.4 L838.8 1616.3 L830.7 1615.6 L823.6 1610.6 L815.8 1607.6 L807.3 1606.8 L799.2 1606.0' fill='none' stroke='#efc186' stroke-width='1.25' opacity='0.95' stroke-linejoin='round'/><path d='M334.7 1704.0 L331.4 1696.6 L326.2 1689.1 L323.6 1680.8 L317.3 1676.4 L315.9 1668.4 L311.1 1660.9 L306.2 1654.1 L300.7 1647.1 L300.7 1638.3 L301.0 1631.4 L305.6 1624.9' fill='none' stroke='#efc186' stroke-width='1.25' opacity='0.95' stroke-linejoin='round'/><path d='M498.6 1592.8 L505.6 1595.7 L513.2 1598.8 L518.2 1604.1 L519.3 1612.0 L521.6 1620.3 L519.7 1627.9 L519.2 1635.3 L519.8 1643.3' fill='none' stroke='#efc186' stroke-width='1.25' opacity='0.95' stroke-linejoin='round'/><path d='M1053.5 1517.4 L1047.3 1521.6 L1041.0 1525.3 L1035.0 1525.8 L1028.9 1527.3 L1021.8 1527.4 L1015.4 1526.4 L1008.7 1525.3 L1004.1 1523.1 L997.9 1519.7 L992.5 1518.1 L985.9 1517.4 L981.2 1513.7 L977.5 1508.3 L973.8 1502.6 L969.0 1496.4 L964.5 1491.5' fill='none' stroke='#efc186' stroke-width='1.25' opacity='0.95' stroke-linejoin='round'/><path d='M850.8 1596.3 L857.4 1593.5 L865.6 1596.2 L872.3 1597.8 L879.3 1597.6 L887.1 1594.9 L895.7 1593.2 L901.8 1587.9 L908.6 1584.9 L916.2 1583.9 L923.1 1584.4 L929.9 1585.4' fill='none' stroke='#efc186' stroke-width='1.25' opacity='0.95' stroke-linejoin='round'/><path d='M642.4 1615.1 L638.6 1620.9 L637.5 1627.1 L637.2 1634.3 L637.7 1641.1 L638.0 1646.9 L635.2 1654.2 L632.0 1660.5 L625.7 1664.9 L622.7 1671.6 L619.2 1677.0' fill='none' stroke='#efc186' stroke-width='1.25' opacity='0.95' stroke-linejoin='round'/><path d='M824.0 1557.8 L823.0 1553.9 L822.2 1550.1 L822.9 1544.3 L822.1 1539.6 L819.8 1535.5 L820.5 1531.1 L820.6 1525.6' fill='none' stroke='#efc186' stroke-width='1.25' opacity='0.95' stroke-linejoin='round'/><path d='M356.3 1571.4 L360.8 1567.5 L365.0 1567.6 L369.4 1567.5 L375.2 1567.2 L379.5 1568.2 L384.0 1571.9 L388.8 1573.7 L393.7 1575.9 L398.8 1578.0 L404.2 1580.6 L409.8 1579.9 L413.4 1576.7 L419.7 1576.0 L425.6 1576.5 L429.5 1578.0 L433.9 1579.8' fill='none' stroke='#efc186' stroke-width='1.25' opacity='0.95' stroke-linejoin='round'/><path d='M634.2 1431.4 L628.7 1437.6 L621.7 1441.2 L613.3 1443.7 L607.1 1448.2 L601.7 1454.9 L595.6 1461.9 L593.2 1468.8' fill='none' stroke='#efc186' stroke-width='1.25' opacity='0.95' stroke-linejoin='round'/><path d='M791.3 1330.9 L792.6 1322.3 L791.9 1315.1 L790.8 1306.1 L790.4 1296.9 L795.1 1290.4 L799.6 1284.0 L800.0 1275.3' fill='none' stroke='#efc186' stroke-width='1.25' opacity='0.95' stroke-linejoin='round'/><path d='M1069.3 1486.4 L1066.8 1478.3 L1067.2 1469.0 L1066.6 1461.3 L1068.7 1452.4 L1071.1 1444.5 L1077.4 1438.0 L1084.1 1432.2 L1091.2 1426.1 L1096.3 1420.2 L1100.3 1413.1 L1108.1 1409.3 L1112.9 1402.3 L1119.2 1397.2 L1125.6 1391.4 L1127.5 1383.3' fill='none' stroke='#efc186' stroke-width='1.25' opacity='0.95' stroke-linejoin='round'/><path d='M996.1 1347.8 L989.6 1341.3 L986.4 1332.0 L984.5 1324.1 L986.1 1315.9 L990.9 1308.6 L994.1 1299.6 L995.3 1291.4' fill='none' stroke='#efc186' stroke-width='1.25' opacity='0.95' stroke-linejoin='round'/><path d='M693.9 1719.5 L699.8 1714.4 L706.7 1710.3 L713.7 1710.1 L722.0 1709.5 L729.2 1710.0 L736.4 1715.5 L743.9 1716.4 L752.4 1717.8 L759.4 1716.5 L766.7 1716.5 L773.9 1720.2 L780.4 1722.7 L789.1 1721.0 L795.3 1717.3 L801.8 1715.7 L810.0 1712.8' fill='none' stroke='#efc186' stroke-width='1.25' opacity='0.95' stroke-linejoin='round'/><path d='M1120.5 1666.1 L1122.5 1658.0 L1125.6 1652.0 L1128.3 1645.1 L1129.6 1639.0 L1131.3 1631.6 L1135.4 1624.5 L1139.2 1618.1 L1144.3 1613.5 L1146.6 1606.1 L1149.2 1598.9 L1149.8 1592.0 L1147.2 1585.6 L1147.1 1577.0 L1145.2 1568.9' fill='none' stroke='#efc186' stroke-width='1.25' opacity='0.95' stroke-linejoin='round'/><path d='M405.9 1320.5 L409.9 1329.2 L415.3 1336.2 L420.3 1341.9 L422.8 1351.1 L429.1 1357.8 L437.3 1362.6 L445.1 1365.7 L454.0 1369.6 L460.9 1372.4 L469.7 1373.5 L476.9 1378.6 L486.1 1378.8 L493.2 1382.7' fill='none' stroke='#efc186' stroke-width='1.25' opacity='0.95' stroke-linejoin='round'/><path d='M927.9 1512.9 L921.4 1510.0 L913.0 1506.7 L906.3 1505.4 L898.4 1503.0 L892.1 1500.6 L884.0 1500.7 L877.2 1499.2 L870.6 1496.6 L864.4 1492.1 L857.7 1489.6 L853.0 1485.2 L849.8 1479.5 L846.2 1473.2' fill='none' stroke='#efc186' stroke-width='1.25' opacity='0.95' stroke-linejoin='round'/><path d='M1074.0 1456.5 L1071.3 1462.3 L1066.7 1466.6 L1061.5 1470.5 L1057.3 1475.9 L1050.9 1479.1 L1046.1 1484.4 L1040.0 1485.1' fill='none' stroke='#efc186' stroke-width='1.25' opacity='0.95' stroke-linejoin='round'/><path d='M527.6 1530.2 L530.8 1525.3 L533.7 1520.8 L537.7 1516.2 L543.0 1513.8 L548.8 1511.3 L554.9 1509.6 L559.8 1510.3 L564.9 1510.4 L570.0 1510.0' fill='none' stroke='#efc186' stroke-width='1.25' opacity='0.95' stroke-linejoin='round'/><path d='M639.3 1513.8 L640.9 1506.3 L643.2 1498.2 L647.0 1489.6 L649.3 1482.2 L653.1 1475.0 L660.7 1470.6 L668.4 1465.8 L676.8 1462.8 L681.7 1457.5 L686.4 1452.3 L692.6 1446.9' fill='none' stroke='#efc186' stroke-width='1.25' opacity='0.95' stroke-linejoin='round'/><path d='M1124.5 1438.6 L1129.4 1442.9 L1137.7 1445.5 L1145.2 1446.0 L1151.8 1443.2 L1159.8 1439.5 L1166.0 1436.2 L1173.0 1435.2 L1181.4 1436.9 L1189.0 1437.5 L1197.1 1438.0 L1203.4 1434.1 L1209.8 1433.7 L1215.9 1430.5' fill='none' stroke='#efc186' stroke-width='1.25' opacity='0.95' stroke-linejoin='round'/><path d='M378.5 1421.4 L385.6 1424.6 L393.2 1425.5 L400.6 1428.5 L408.0 1427.2 L414.3 1428.1 L422.7 1427.3' fill='none' stroke='#efc186' stroke-width='1.25' opacity='0.95' stroke-linejoin='round'/><path d='M1118.1 1653.3 L1113.3 1647.5 L1108.4 1641.7 L1106.4 1635.6 L1102.2 1629.8 L1100.2 1623.8 L1100.7 1618.2 L1104.6 1613.3 L1107.1 1607.1 L1110.6 1600.8 L1113.1 1594.6 L1117.3 1589.3 L1121.3 1584.2 L1128.3 1582.0 L1134.4 1579.3 L1141.9 1578.4' fill='none' stroke='#efc186' stroke-width='1.25' opacity='0.95' stroke-linejoin='round'/><path d='M393.6 1424.2 L390.3 1418.2 L387.8 1412.6 L385.1 1407.8 L381.5 1402.6 L378.8 1396.0 L378.0 1390.0 L378.1 1384.8 L377.7 1377.9 L379.2 1371.1 L385.1 1367.3 L392.0 1365.7 L397.6 1364.4 L404.3 1362.4' fill='none' stroke='#efc186' stroke-width='1.25' opacity='0.95' stroke-linejoin='round'/><path d='M756.8 1307.3 L757.5 1302.6 L756.4 1297.1 L755.1 1293.4 L753.5 1289.9 L752.6 1285.5 L751.6 1280.3 L753.8 1274.7 L755.5 1269.4 L757.2 1263.7 L760.1 1259.8 L760.4 1255.0 L764.1 1250.8 L767.1 1247.0' fill='none' stroke='#efc186' stroke-width='1.25' opacity='0.95' stroke-linejoin='round'/><path d='M406.2 1355.0 L401.3 1349.1 L395.6 1342.7 L393.7 1335.4 L390.5 1330.6 L386.3 1325.3 L382.3 1320.0 L381.1 1313.9 L384.1 1307.9 L385.3 1299.8 L382.9 1292.2 L380.7 1285.8 L375.6 1280.5 L370.7 1275.7 L367.6 1268.7' fill='none' stroke='#efc186' stroke-width='1.25' opacity='0.95' stroke-linejoin='round'/><path d='M1017.2 1307.2 L1010.4 1311.7 L1004.5 1315.6 L998.5 1319.1 L993.1 1323.6 L986.6 1328.5 L980.6 1332.9 L974.1 1337.0 L971.1 1342.9 L964.8 1348.5 L961.1 1355.4 L955.2 1361.5 L949.4 1365.5 L944.8 1371.1 L943.2 1377.1 L941.8 1383.5 L937.5 1388.9' fill='none' stroke='#efc186' stroke-width='1.25' opacity='0.95' stroke-linejoin='round'/><path d='M951.3 1406.8 L942.7 1410.1 L934.8 1414.4 L926.9 1420.7 L918.7 1425.1 L911.6 1429.4 L902.8 1430.8 L894.9 1426.7 L887.2 1421.2 L880.0 1416.2 L873.9 1407.9' fill='none' stroke='#efc186' stroke-width='1.25' opacity='0.95' stroke-linejoin='round'/><path d='M804.7 1642.8 L800.5 1648.4 L795.8 1654.8 L792.2 1660.9 L785.8 1666.3 L781.4 1672.6 L780.8 1680.5 L777.5 1686.3 L776.0 1693.9' fill='none' stroke='#efc186' stroke-width='1.25' opacity='0.95' stroke-linejoin='round'/><path d='M517.6 1525.4 L516.5 1518.1 L515.2 1509.6 L513.5 1500.6 L515.8 1493.4 L520.9 1486.7 L524.0 1477.7 L527.0 1470.2 L532.6 1464.0' fill='none' stroke='#efc186' stroke-width='1.25' opacity='0.95' stroke-linejoin='round'/><path d='M1008.4 1338.3 L1010.3 1330.4 L1014.8 1324.9 L1017.9 1318.7 L1022.5 1311.5 L1025.1 1304.2 L1028.1 1297.2 L1032.0 1290.2 L1033.6 1284.1 L1039.7 1278.0 L1043.5 1271.9 L1048.2 1264.9 L1054.5 1260.5 L1062.4 1259.5' fill='none' stroke='#efc186' stroke-width='1.25' opacity='0.95' stroke-linejoin='round'/><path d='M1057.0 1299.6 L1061.0 1307.2 L1066.7 1310.9 L1073.4 1314.1 L1081.3 1317.4 L1088.2 1320.9 L1095.2 1323.9 L1102.2 1327.0 L1108.6 1331.7 L1114.7 1338.4 L1117.7 1344.9 L1118.8 1352.6 L1119.5 1359.8 L1120.5 1368.0 L1122.7 1375.6' fill='none' stroke='#efc186' stroke-width='1.25' opacity='0.95' stroke-linejoin='round'/><path d='M1107.7 1699.9 L1114.1 1693.4 L1119.3 1685.9 L1125.1 1679.7 L1127.1 1672.6 L1128.7 1663.6 L1132.5 1655.8 L1139.4 1650.6' fill='none' stroke='#efc186' stroke-width='1.25' opacity='0.95' stroke-linejoin='round'/><path d='M707.1 1497.7 L703.6 1500.8 L698.3 1503.0 L695.0 1507.4 L689.9 1510.6 L686.1 1515.4 L681.1 1519.1 L676.5 1520.3 L671.9 1519.7' fill='none' stroke='#efc186' stroke-width='1.25' opacity='0.95' stroke-linejoin='round'/><path d='M516.4 1425.0 L511.1 1420.4 L506.6 1415.7 L502.9 1409.7 L498.8 1404.8 L495.3 1399.5 L494.8 1392.2 L495.2 1385.1 L492.4 1377.8 L492.1 1371.9 L494.9 1364.9 L496.6 1359.0' fill='none' stroke='#efc186' stroke-width='1.25' opacity='0.95' stroke-linejoin='round'/><path d='M860.1 1575.3 L868.2 1572.0 L875.1 1568.4 L882.6 1566.5 L890.4 1566.7 L898.7 1567.1 L906.7 1568.1 L912.9 1566.4 L921.6 1566.3 L928.2 1568.6 L933.7 1573.8 L939.7 1580.0 L942.1 1587.5 L942.5 1594.7 L943.8 1603.6' fill='none' stroke='#efc186' stroke-width='1.25' opacity='0.95' stroke-linejoin='round'/><path d='M764.4 1606.3 L762.8 1615.1 L759.8 1622.4 L755.9 1630.2 L749.7 1634.8 L745.4 1640.9 L745.3 1648.3 L743.4 1656.6 L738.3 1662.1' fill='none' stroke='#e39bb0' stroke-width='1.3' opacity='0.9' stroke-linejoin='round'/><path d='M1084.7 1533.5 L1077.5 1534.5 L1071.9 1531.5 L1066.9 1528.7 L1063.1 1525.0 L1058.6 1519.3 L1052.0 1517.1 L1047.1 1513.7 L1043.0 1508.2 L1040.3 1501.9 L1037.3 1496.6 L1033.4 1491.7 L1028.9 1487.2 L1023.4 1483.9 L1018.0 1481.0' fill='none' stroke='#e39bb0' stroke-width='1.3' opacity='0.9' stroke-linejoin='round'/><path d='M815.4 1516.7 L812.7 1523.3 L810.6 1530.4 L805.6 1536.1 L801.4 1540.8 L796.7 1545.6 L791.7 1552.0 L786.4 1554.8 L779.0 1558.5 L773.4 1561.7 L766.5 1561.4 L758.9 1564.2 L751.8 1567.2 L744.7 1570.4' fill='none' stroke='#e39bb0' stroke-width='1.3' opacity='0.9' stroke-linejoin='round'/><path d='M593.0 1300.0 L599.3 1304.9 L604.0 1311.6 L609.9 1315.3 L617.8 1314.8 L625.1 1314.0 L632.3 1310.8 L639.2 1305.6 L643.2 1298.3 L647.2 1292.1' fill='none' stroke='#e39bb0' stroke-width='1.3' opacity='0.9' stroke-linejoin='round'/><path d='M900.6 1683.5 L890.5 1681.9 L881.7 1676.8 L871.8 1675.5 L862.8 1673.7 L854.5 1668.8 L847.8 1662.9 L840.0 1658.0 L831.3 1652.6 L825.4 1645.8 L821.3 1637.3 L821.9 1628.2 L825.3 1618.0' fill='none' stroke='#e39bb0' stroke-width='1.3' opacity='0.9' stroke-linejoin='round'/><path d='M1045.5 1437.8 L1051.2 1433.9 L1058.3 1434.4 L1062.8 1431.0 L1068.5 1431.7 L1073.7 1429.4 L1078.5 1426.7 L1082.5 1423.5 L1088.0 1419.1 L1093.1 1416.7 L1099.6 1415.0 L1106.0 1414.0 L1111.3 1410.5 L1114.6 1403.7' fill='none' stroke='#e39bb0' stroke-width='1.3' opacity='0.9' stroke-linejoin='round'/><path d='M546.2 1559.2 L538.3 1558.4 L531.1 1558.1 L524.5 1560.6 L520.9 1566.0 L515.4 1570.0 L510.8 1577.0 L504.3 1581.6' fill='none' stroke='#e39bb0' stroke-width='1.3' opacity='0.9' stroke-linejoin='round'/><path d='M691.2 1286.4 L689.5 1277.4 L689.8 1268.4 L687.0 1259.3 L680.2 1252.5 L673.7 1246.6 L670.5 1238.0 L671.1 1228.9 L669.2 1220.2 L663.9 1211.4 L662.5 1202.3' fill='none' stroke='#e39bb0' stroke-width='1.3' opacity='0.9' stroke-linejoin='round'/><path d='M333.9 1379.4 L329.3 1383.9 L324.3 1387.6 L318.2 1390.6 L312.3 1394.7 L310.9 1400.6 L311.8 1406.5 L310.4 1413.6 L311.9 1419.4 L310.7 1424.4 L311.2 1431.1 L311.6 1436.7 L311.5 1444.4 L314.9 1449.9' fill='none' stroke='#e39bb0' stroke-width='1.3' opacity='0.9' stroke-linejoin='round'/><path d='M646.8 1509.0 L654.9 1504.2 L664.4 1500.1 L673.9 1500.8 L682.4 1497.2 L692.2 1496.5 L701.4 1500.0 L709.7 1500.3 L718.7 1499.4' fill='none' stroke='#e39bb0' stroke-width='1.3' opacity='0.9' stroke-linejoin='round'/><path d='M997.7 1524.0 L990.4 1528.8 L982.6 1530.4 L975.6 1532.7 L968.8 1533.6 L961.8 1530.8 L954.7 1526.3 L949.6 1521.4 L947.3 1515.4 L941.1 1509.7 L933.6 1507.0 L925.2 1506.0 L919.5 1499.7 L913.3 1494.6 L906.4 1492.7' fill='none' stroke='#e39bb0' stroke-width='1.3' opacity='0.9' stroke-linejoin='round'/><path d='M713.8 1603.5 L720.2 1607.5 L727.3 1606.5 L733.4 1608.1 L739.1 1611.9 L745.1 1615.0 L749.7 1620.7 L750.3 1626.8 L752.2 1632.4' fill='none' stroke='#e39bb0' stroke-width='1.3' opacity='0.9' stroke-linejoin='round'/><path d='M997.6 1361.7 L995.7 1371.8 L992.9 1381.4 L990.5 1391.1 L988.2 1399.1 L983.3 1407.9 L975.6 1415.3 L972.1 1422.5' fill='none' stroke='#e39bb0' stroke-width='1.3' opacity='0.9' stroke-linejoin='round'/><path d='M957.4 1547.4 L955.1 1541.8 L949.9 1537.3 L945.8 1532.2 L940.6 1526.4 L936.2 1522.6 L929.4 1521.2 L922.3 1519.0 L917.9 1515.6 L915.0 1509.0 L914.5 1502.0 L914.9 1495.5' fill='none' stroke='#e39bb0' stroke-width='1.3' opacity='0.9' stroke-linejoin='round'/><path d='M427.3 1533.7 L425.2 1543.7 L421.8 1552.0 L419.2 1559.9 L421.4 1569.3 L427.2 1577.2 L431.6 1586.5 L436.0 1594.4 L438.3 1603.9 L438.7 1613.4 L436.5 1623.5 L432.4 1632.4 L425.7 1638.4 L419.3 1646.8' fill='none' stroke='#e39bb0' stroke-width='1.3' opacity='0.9' stroke-linejoin='round'/><path d='M1040.0 1705.1 L1035.7 1698.2 L1030.5 1691.3 L1023.9 1686.0 L1019.4 1678.8 L1012.6 1674.3 L1004.7 1671.4 L996.5 1665.4 L989.9 1659.6 L980.7 1656.5 L973.9 1650.2 L967.9 1643.1 L961.8 1636.8 L953.8 1633.3 L945.9 1628.9' fill='none' stroke='#e39bb0' stroke-width='1.3' opacity='0.9' stroke-linejoin='round'/><path d='M1053.7 1288.8 L1055.0 1297.8 L1056.0 1306.2 L1057.2 1316.3 L1057.5 1326.5 L1061.5 1335.2 L1067.5 1342.0 L1071.2 1351.3 L1076.8 1358.8 L1085.3 1364.1 L1091.8 1368.6 L1099.1 1375.7' fill='none' stroke='#e39bb0' stroke-width='1.3' opacity='0.9' stroke-linejoin='round'/><path d='M1026.5 1641.5 L1020.8 1645.0 L1012.9 1645.7 L1006.9 1650.0 L999.1 1651.5 L991.5 1655.6 L984.5 1659.7 L978.7 1663.5 L973.2 1668.5' fill='none' stroke='#e39bb0' stroke-width='1.3' opacity='0.9' stroke-linejoin='round'/><path d='M598.3 1441.8 L589.2 1442.8 L579.2 1443.1 L570.7 1444.8 L563.1 1451.2 L556.6 1457.4 L550.7 1463.6 L545.8 1473.4 L542.1 1483.2 L540.2 1493.1 L542.3 1501.2 L542.4 1511.9 L538.9 1520.0' fill='none' stroke='#e39bb0' stroke-width='1.3' opacity='0.9' stroke-linejoin='round'/><path d='M817.9 1557.6 L827.8 1559.2 L837.7 1559.5 L847.2 1554.7 L854.4 1549.7 L861.0 1543.8 L863.2 1534.1 L863.3 1524.4 L858.6 1516.0 L855.9 1507.2 L852.7 1499.3 L847.5 1490.2 L839.6 1486.1 L829.0 1485.5 L820.5 1482.1' fill='none' stroke='#e39bb0' stroke-width='1.3' opacity='0.9' stroke-linejoin='round'/><path d='M353.5 1533.4 L354.1 1541.2 L353.7 1547.7 L351.8 1555.6 L349.6 1560.8 L347.3 1566.5 L345.5 1572.4 L341.5 1577.8 L338.9 1584.9 L337.1 1590.4 L332.4 1596.5 L327.3 1601.6 L323.1 1607.6 L318.8 1613.6 L314.8 1619.9' fill='none' stroke='#e39bb0' stroke-width='1.3' opacity='0.9' stroke-linejoin='round'/><path d='M431.7 1672.1 L436.2 1678.0 L438.6 1686.0 L440.9 1694.8 L441.8 1703.3 L440.4 1710.6 L441.6 1718.2' fill='none' stroke='#e39bb0' stroke-width='1.3' opacity='0.9' stroke-linejoin='round'/><path d='M1094.3 1527.5 L1092.1 1536.2 L1085.9 1543.5 L1081.9 1551.0 L1075.7 1558.6 L1072.5 1568.7 L1069.4 1577.1 L1065.3 1585.0 L1063.2 1593.9' fill='none' stroke='#e39bb0' stroke-width='1.3' opacity='0.9' stroke-linejoin='round'/><path d='M1021.3 1430.8 L1012.6 1425.3 L1005.1 1420.7 L996.9 1416.4 L989.9 1409.3 L983.5 1402.0 L978.2 1395.3' fill='none' stroke='#e39bb0' stroke-width='1.3' opacity='0.9' stroke-linejoin='round'/><path d='M451.6 1636.3 L446.1 1629.9 L440.5 1622.5 L437.4 1615.5 L432.5 1608.8 L428.1 1602.6 L419.3 1599.0 L412.8 1592.2 L405.2 1587.7 L397.6 1582.6 L391.3 1575.5 L386.9 1567.5 L381.5 1561.3' fill='none' stroke='#e39bb0' stroke-width='1.3' opacity='0.9' stroke-linejoin='round'/><path d='M1029.1 1399.1 L1026.2 1393.0 L1023.0 1388.4 L1022.8 1382.0 L1023.9 1375.8 L1024.8 1369.7 L1026.2 1363.5 L1026.8 1357.7 L1023.3 1351.8 L1021.0 1344.6' fill='none' stroke='#e39bb0' stroke-width='1.3' opacity='0.9' stroke-linejoin='round'/><path d='M946.4 1436.3 L944.9 1444.6 L943.0 1452.5 L941.5 1461.2 L943.7 1470.0 L942.2 1479.8 L943.0 1489.1 L944.9 1498.8 L945.3 1508.5 L949.7 1515.7 L951.5 1525.3 L950.5 1534.0' fill='none' stroke='#e39bb0' stroke-width='1.3' opacity='0.9' stroke-linejoin='round'/><path d='M681.8 1524.9 L680.8 1533.6 L682.9 1541.4 L683.4 1549.3 L684.1 1558.5 L683.8 1566.7 L687.5 1575.4 L692.9 1582.8 L701.4 1587.2 L709.7 1588.6 L718.9 1588.0 L726.5 1588.5' fill='none' stroke='#e39bb0' stroke-width='1.3' opacity='0.9' stroke-linejoin='round'/><path d='M680.9 1567.0 L679.1 1573.1 L677.6 1579.8 L676.1 1585.7 L678.1 1592.2 L679.3 1598.4 L676.0 1605.7 L674.7 1613.2 L671.4 1619.0' fill='none' stroke='#e39bb0' stroke-width='1.3' opacity='0.9' stroke-linejoin='round'/><path d='M426.0 1564.5 L424.5 1557.1 L424.6 1548.7 L423.9 1539.4 L419.7 1532.0 L418.1 1523.8 L416.2 1516.0 L415.8 1507.3 L417.2 1498.4 L416.8 1489.5' fill='none' stroke='#e39bb0' stroke-width='1.3' opacity='0.9' stroke-linejoin='round'/><path d='M928.6 1361.2 L925.6 1370.4 L921.1 1377.6 L919.9 1388.0 L917.4 1396.4 L910.4 1404.2 L903.6 1411.8 L897.9 1419.2 L897.0 1429.6 L892.4 1438.2 L886.9 1446.1 L886.5 1455.1 L887.7 1465.0' fill='none' stroke='#e39bb0' stroke-width='1.3' opacity='0.9' stroke-linejoin='round'/><path d='M891.7 1677.0 L900.0 1672.9 L904.9 1667.2 L911.0 1661.9 L915.5 1653.7 L917.6 1644.7 L916.5 1636.3 L910.7 1630.2 L903.9 1626.1' fill='none' stroke='#e39bb0' stroke-width='1.3' opacity='0.9' stroke-linejoin='round'/><path d='M768.6 1582.9 L761.8 1574.7 L753.4 1570.2 L744.3 1568.2 L736.1 1561.9 L727.1 1557.5 L718.5 1555.1 L708.7 1550.5 L699.7 1551.0 L690.4 1547.6 L681.3 1541.3' fill='none' stroke='#e39bb0' stroke-width='1.3' opacity='0.9' stroke-linejoin='round'/><path d='M571.9 1664.1 L564.5 1667.2 L556.0 1670.4 L551.1 1676.5 L547.3 1685.5 L539.8 1691.8 L534.0 1697.6' fill='none' stroke='#e39bb0' stroke-width='1.3' opacity='0.9' stroke-linejoin='round'/><path d='M543.7 1455.7 L549.6 1456.6 L556.6 1454.4 L564.6 1455.5 L571.7 1455.2 L578.8 1453.6 L584.6 1450.5 L588.6 1444.6' fill='none' stroke='#e39bb0' stroke-width='1.3' opacity='0.9' stroke-linejoin='round'/><path d='M389.4 1716.6 L383.2 1723.0 L376.9 1730.2 L369.5 1737.5 L364.1 1745.8 L356.7 1752.6 L351.1 1759.9 L349.2 1768.2 L350.6 1777.2 L355.8 1786.4 L360.3 1794.4' fill='none' stroke='#e39bb0' stroke-width='1.3' opacity='0.9' stroke-linejoin='round'/><path d='M929.1 1534.9 L930.0 1541.5 L932.1 1546.8 L932.4 1553.9 L934.6 1559.7 L938.0 1564.9 L940.0 1571.2 L941.6 1577.7 L946.3 1583.5' fill='none' stroke='#e39bb0' stroke-width='1.3' opacity='0.9' stroke-linejoin='round'/><path d='M1004.9 1392.0 L998.8 1396.0 L992.8 1398.4 L986.7 1399.5 L980.9 1400.9 L973.0 1402.1 L966.9 1405.4 L960.6 1406.6 L954.2 1404.8 L947.8 1404.3 L940.3 1403.5 L934.4 1398.6 L931.3 1392.7 L924.9 1388.1' fill='none' stroke='#e39bb0' stroke-width='1.3' opacity='0.9' stroke-linejoin='round'/><path d='M985.8 1371.7 L994.0 1368.8 L1003.2 1370.5 L1011.6 1373.5 L1018.9 1372.1 L1026.8 1372.2 L1034.7 1372.7 L1041.1 1370.1 L1049.1 1368.4 L1055.2 1363.4' fill='none' stroke='#e39bb0' stroke-width='1.3' opacity='0.9' stroke-linejoin='round'/><path d='M883.3 1508.6 L882.7 1500.0 L877.7 1491.5 L872.5 1484.9 L869.6 1476.2 L869.7 1468.2 L872.6 1458.5' fill='none' stroke='#e39bb0' stroke-width='1.3' opacity='0.9' stroke-linejoin='round'/><path d='M932.9 1645.0 L925.4 1647.2 L918.6 1648.5 L911.2 1649.7 L903.4 1650.2 L896.9 1653.5 L893.1 1658.4 L890.4 1663.1 L887.9 1669.1 L888.6 1676.5 L891.6 1682.0 L897.1 1685.9 L903.1 1688.8 L909.1 1688.0' fill='none' stroke='#e39bb0' stroke-width='1.3' opacity='0.9' stroke-linejoin='round'/><path d='M400.6 1475.0 L394.2 1467.5 L383.9 1464.5 L375.9 1461.2 L365.1 1462.4 L355.8 1464.2 L347.0 1464.9 L339.8 1470.3' fill='none' stroke='#e39bb0' stroke-width='1.3' opacity='0.9' stroke-linejoin='round'/><path d='M965.2 1563.6 L974.2 1566.0 L981.4 1564.7 L989.5 1561.9 L996.8 1555.4 L1000.7 1547.9 L1007.7 1542.0 L1016.0 1540.9 L1023.9 1538.9 L1032.9 1538.3' fill='none' stroke='#e39bb0' stroke-width='1.3' opacity='0.9' stroke-linejoin='round'/><path d='M818.9 1294.5 L814.1 1286.8 L813.6 1278.5 L809.1 1270.1 L804.7 1262.6 L800.1 1255.2 L796.1 1246.9' fill='none' stroke='#e39bb0' stroke-width='1.3' opacity='0.9' stroke-linejoin='round'/><path d='M566.9 1471.7 L564.1 1477.7 L557.4 1482.2 L550.3 1484.4 L543.6 1484.2 L538.4 1484.8 L533.3 1487.9 L527.2 1488.5 L521.0 1487.4 L514.2 1486.2 L508.5 1484.4' fill='none' stroke='#e39bb0' stroke-width='1.3' opacity='0.9' stroke-linejoin='round'/><path d='M501.8 1338.1 L500.7 1330.9 L498.0 1323.3 L494.3 1316.8 L492.8 1310.7 L487.1 1306.0 L482.5 1299.6' fill='none' stroke='#858585' stroke-width='1.15' opacity='0.8' stroke-linejoin='round'/><path d='M986.6 1329.1 L979.6 1327.1 L972.5 1329.3 L965.5 1329.6 L958.2 1332.5 L951.9 1336.9 L946.4 1342.5 L941.9 1349.2' fill='none' stroke='#858585' stroke-width='1.15' opacity='0.8' stroke-linejoin='round'/><path d='M553.0 1511.3 L555.3 1504.8 L555.7 1498.5 L560.1 1493.4 L564.8 1489.3 L571.8 1486.0' fill='none' stroke='#858585' stroke-width='1.15' opacity='0.8' stroke-linejoin='round'/><path d='M351.1 1669.6 L350.7 1675.6 L350.3 1683.5 L349.9 1690.4 L347.0 1696.2 L343.8 1700.6 L340.2 1706.7 L339.5 1713.9 L338.6 1721.3 L337.5 1728.3' fill='none' stroke='#858585' stroke-width='1.15' opacity='0.8' stroke-linejoin='round'/><path d='M408.2 1441.4 L407.8 1448.6 L406.0 1454.5 L403.9 1460.6 L402.6 1467.3 L404.8 1473.5' fill='none' stroke='#858585' stroke-width='1.15' opacity='0.8' stroke-linejoin='round'/><path d='M455.3 1536.0 L461.3 1533.6 L466.2 1530.8 L471.2 1527.2 L477.7 1525.6 L481.9 1523.0 L487.5 1520.6 L492.8 1519.5 L499.9 1520.3 L505.9 1523.5' fill='none' stroke='#858585' stroke-width='1.15' opacity='0.8' stroke-linejoin='round'/><path d='M887.0 1712.2 L886.1 1719.1 L885.7 1724.5 L883.5 1730.1 L880.0 1735.8 L879.3 1741.5 L880.5 1747.4 L883.1 1754.3 L887.6 1759.9 L893.4 1765.1 L897.2 1770.4 L899.0 1777.9' fill='none' stroke='#858585' stroke-width='1.15' opacity='0.8' stroke-linejoin='round'/><path d='M994.9 1514.3 L988.8 1510.8 L981.9 1507.7 L974.3 1509.0 L967.0 1512.4 L959.4 1515.6 L951.0 1515.9 L944.3 1519.9 L936.4 1521.6 L928.5 1524.5 L922.7 1530.0 L917.8 1534.5' fill='none' stroke='#858585' stroke-width='1.15' opacity='0.8' stroke-linejoin='round'/><path d='M933.5 1413.0 L937.8 1414.3 L943.6 1415.1 L949.3 1412.1 L954.5 1412.2 L959.9 1413.8 L965.8 1414.5' fill='none' stroke='#858585' stroke-width='1.15' opacity='0.8' stroke-linejoin='round'/><path d='M586.2 1561.3 L594.6 1559.5 L604.1 1559.9 L611.6 1561.3 L620.1 1564.4 L624.5 1571.8 L632.8 1576.8 L637.6 1583.9 L641.3 1591.5 L646.9 1596.8' fill='none' stroke='#858585' stroke-width='1.15' opacity='0.8' stroke-linejoin='round'/><path d='M805.9 1677.8 L808.8 1683.1 L813.3 1684.6 L817.6 1685.9 L823.6 1686.6 L828.8 1688.8 L832.3 1691.3 L836.0 1694.0 L841.1 1694.0 L847.0 1691.9 L852.6 1692.7 L856.6 1694.2' fill='none' stroke='#858585' stroke-width='1.15' opacity='0.8' stroke-linejoin='round'/><path d='M371.1 1282.3 L369.7 1277.0 L365.3 1272.3 L365.2 1266.1 L364.0 1261.2 L364.7 1256.9' fill='none' stroke='#858585' stroke-width='1.15' opacity='0.8' stroke-linejoin='round'/><path d='M377.7 1581.0 L370.6 1578.1 L363.0 1578.4 L354.4 1577.8 L347.5 1574.2 L340.1 1572.6 L332.6 1569.7' fill='none' stroke='#858585' stroke-width='1.15' opacity='0.8' stroke-linejoin='round'/><path d='M725.1 1472.3 L722.7 1465.7 L719.5 1458.8 L716.6 1450.5 L717.8 1443.8 L720.5 1438.1 L723.1 1431.0 L726.0 1423.1' fill='none' stroke='#858585' stroke-width='1.15' opacity='0.8' stroke-linejoin='round'/><path d='M742.3 1479.2 L746.5 1484.6 L751.9 1489.1 L755.7 1493.5 L756.7 1500.2 L754.9 1507.3 L755.0 1513.9 L753.9 1520.0 L753.2 1527.0 L752.7 1533.2' fill='none' stroke='#858585' stroke-width='1.15' opacity='0.8' stroke-linejoin='round'/><path d='M1003.3 1714.6 L1006.9 1721.8 L1006.5 1728.1 L1005.7 1734.8 L1002.9 1740.2 L1001.5 1746.5 L998.7 1753.2 L999.6 1761.3 L998.1 1767.6 L997.4 1774.9' fill='none' stroke='#858585' stroke-width='1.15' opacity='0.8' stroke-linejoin='round'/><path d='M1115.6 1430.0 L1112.9 1426.8 L1109.4 1422.6 L1107.1 1416.9 L1103.6 1412.6 L1102.2 1407.4 L1098.2 1404.2 L1095.4 1399.0' fill='none' stroke='#858585' stroke-width='1.15' opacity='0.8' stroke-linejoin='round'/><path d='M1038.3 1640.5 L1046.0 1640.9 L1050.6 1646.0 L1056.7 1647.3 L1062.7 1651.5 L1067.9 1654.5 L1072.1 1661.4 L1075.6 1666.8 L1080.2 1672.3' fill='none' stroke='#858585' stroke-width='1.15' opacity='0.8' stroke-linejoin='round'/><path d='M1110.5 1561.1 L1103.5 1567.1 L1098.3 1574.5 L1095.8 1584.0 L1094.7 1591.7 L1091.2 1600.0 L1085.2 1606.2 L1077.5 1610.9 L1070.9 1616.7 L1064.6 1623.3 L1059.6 1630.1' fill='none' stroke='#858585' stroke-width='1.15' opacity='0.8' stroke-linejoin='round'/><path d='M466.6 1507.8 L472.6 1509.4 L478.0 1507.0 L483.1 1507.3 L488.8 1504.7 L493.4 1500.7 L499.7 1498.5 L503.6 1494.8 L507.2 1489.1 L509.6 1484.5' fill='none' stroke='#858585' stroke-width='1.15' opacity='0.8' stroke-linejoin='round'/><path d='M916.4 1472.5 L913.8 1466.2 L911.9 1460.9 L909.2 1456.3 L906.1 1451.1 L904.8 1446.0 L905.8 1440.1 L909.3 1435.7' fill='none' stroke='#858585' stroke-width='1.15' opacity='0.8' stroke-linejoin='round'/><path d='M990.4 1410.8 L983.4 1417.4 L975.3 1423.1 L967.8 1427.2 L962.7 1434.5 L956.2 1439.2 L948.1 1442.7 L942.3 1448.2' fill='none' stroke='#858585' stroke-width='1.15' opacity='0.8' stroke-linejoin='round'/><path d='M351.1 1605.5 L350.0 1609.6 L351.4 1614.0 L349.0 1619.0 L347.3 1624.9 L346.1 1630.2 L347.6 1635.7 L348.5 1640.2 L349.8 1644.1 L353.4 1649.4 L357.4 1652.4 L362.0 1653.8 L366.0 1658.3' fill='none' stroke='#858585' stroke-width='1.15' opacity='0.8' stroke-linejoin='round'/><path d='M863.6 1489.8 L858.2 1493.6 L852.1 1494.8 L846.7 1493.6 L842.1 1495.2 L838.0 1500.8 L834.4 1505.5 L829.9 1510.3 L825.1 1515.6' fill='none' stroke='#858585' stroke-width='1.15' opacity='0.8' stroke-linejoin='round'/><path d='M327.6 1460.7 L335.0 1462.0 L342.6 1460.0 L351.0 1462.8 L355.7 1468.3 L360.7 1474.4 L366.1 1480.9 L368.9 1489.0 L376.0 1493.5' fill='none' stroke='#858585' stroke-width='1.15' opacity='0.8' stroke-linejoin='round'/><path d='M739.2 1423.8 L743.3 1416.6 L745.4 1409.8 L745.1 1402.8 L749.4 1397.0 L755.4 1391.9 L762.3 1386.1 L770.0 1382.5 L773.9 1377.1' fill='none' stroke='#858585' stroke-width='1.15' opacity='0.8' stroke-linejoin='round'/><path d='M897.8 1651.9 L899.2 1656.6 L898.3 1660.9 L895.9 1666.4 L893.0 1670.1 L889.6 1673.6 L884.6 1676.1 L882.5 1680.8 L878.3 1683.8 L873.5 1685.3 L867.7 1685.8' fill='none' stroke='#858585' stroke-width='1.15' opacity='0.8' stroke-linejoin='round'/><path d='M664.7 1553.8 L658.9 1560.9 L651.4 1563.9 L642.4 1566.2 L632.9 1565.0 L623.5 1568.7 L613.7 1567.3 L605.7 1571.1 L596.7 1573.4 L589.4 1577.4 L581.3 1579.1' fill='none' stroke='#858585' stroke-width='1.15' opacity='0.8' stroke-linejoin='round'/><path d='M1075.8 1671.7 L1071.2 1664.0 L1067.5 1657.1 L1065.7 1650.0 L1065.5 1642.5 L1068.7 1633.4' fill='none' stroke='#858585' stroke-width='1.15' opacity='0.8' stroke-linejoin='round'/><path d='M725.6 1482.6 L733.4 1483.6 L738.1 1487.6 L743.5 1493.4 L749.3 1496.9 L753.7 1502.8 L758.6 1506.5' fill='none' stroke='#858585' stroke-width='1.15' opacity='0.8' stroke-linejoin='round'/><path d='M1120.0 1394.0 L1113.4 1395.7 L1109.1 1398.9 L1103.7 1400.5 L1097.1 1400.0 L1091.0 1402.6 L1084.4 1402.7 L1080.2 1401.4 L1075.6 1399.6' fill='none' stroke='#858585' stroke-width='1.15' opacity='0.8' stroke-linejoin='round'/><path d='M389.7 1459.7 L390.6 1463.8 L390.1 1469.5 L391.3 1475.4 L393.3 1481.1 L392.4 1486.2 L393.2 1490.6 L392.6 1496.6 L392.9 1501.5 L393.8 1507.0 L395.7 1512.1' fill='none' stroke='#858585' stroke-width='1.15' opacity='0.8' stroke-linejoin='round'/><path d='M605.1 1344.0 L610.3 1339.1 L616.5 1335.3 L620.7 1330.1 L623.0 1323.0 L629.3 1317.9 L633.4 1311.5 L636.5 1303.9 L640.6 1296.5 L643.2 1290.6 L644.1 1283.8 L646.5 1276.3 L651.8 1271.5' fill='none' stroke='#858585' stroke-width='1.15' opacity='0.8' stroke-linejoin='round'/><path d='M731.1 1687.6 L725.1 1687.1 L718.7 1687.6 L713.4 1689.4 L708.9 1692.4 L703.2 1696.4 L698.2 1699.5 L693.1 1702.0 L689.2 1706.9 L685.6 1712.7 L679.9 1715.9 L675.1 1718.4 L671.4 1721.6' fill='none' stroke='#858585' stroke-width='1.15' opacity='0.8' stroke-linejoin='round'/><path d='M1023.7 1705.5 L1016.1 1706.5 L1006.6 1708.8 L999.1 1707.5 L992.1 1702.8 L985.1 1698.3 L979.9 1690.1' fill='none' stroke='#858585' stroke-width='1.15' opacity='0.8' stroke-linejoin='round'/><path d='M1011.8 1444.2 L1018.1 1448.6 L1023.8 1453.7 L1032.2 1454.8 L1039.5 1454.4 L1047.0 1453.9 L1053.7 1455.7' fill='none' stroke='#858585' stroke-width='1.15' opacity='0.8' stroke-linejoin='round'/><path d='M890.7 1527.9 L886.6 1530.4 L881.6 1533.3 L876.6 1536.9 L871.6 1539.6 L870.3 1545.4 L869.0 1550.6 L868.2 1555.6 L868.4 1561.8 L869.2 1566.7' fill='none' stroke='#858585' stroke-width='1.15' opacity='0.8' stroke-linejoin='round'/><path d='M799.5 1579.4 L803.7 1572.4 L807.7 1564.3 L812.9 1557.3 L819.1 1552.5 L827.3 1547.4 L833.9 1542.8 L840.8 1538.7 L847.9 1533.7 L853.6 1529.0' fill='none' stroke='#858585' stroke-width='1.15' opacity='0.8' stroke-linejoin='round'/><path d='M486.9 1384.0 L479.4 1385.0 L472.9 1384.3 L465.7 1383.4 L459.3 1383.2 L453.6 1380.6 L447.1 1380.7 L440.0 1379.9 L434.1 1382.1' fill='none' stroke='#858585' stroke-width='1.15' opacity='0.8' stroke-linejoin='round'/><path d='M916.2 1644.3 L909.9 1642.0 L903.2 1641.5 L896.4 1640.7 L890.2 1641.4 L885.3 1641.5 L879.6 1642.9 L874.5 1642.5' fill='none' stroke='#858585' stroke-width='1.15' opacity='0.8' stroke-linejoin='round'/><path d='M827.5 1611.2 L823.6 1615.9 L818.7 1618.5 L812.2 1618.9 L806.5 1619.5 L801.7 1621.0 L796.8 1623.0 L791.3 1625.2 L785.3 1627.5 L778.8 1627.8' fill='none' stroke='#858585' stroke-width='1.15' opacity='0.8' stroke-linejoin='round'/><path d='M879.4 1387.2 L874.3 1385.5 L870.7 1381.3 L868.4 1375.4 L865.9 1370.3 L863.7 1365.5 L865.5 1360.0 L867.0 1354.2 L869.7 1349.5 L871.4 1345.0 L871.3 1339.5 L871.3 1334.6 L872.2 1329.3' fill='none' stroke='#858585' stroke-width='1.15' opacity='0.8' stroke-linejoin='round'/><path d='M355.8 1502.3 L359.1 1497.5 L363.7 1492.8 L366.9 1487.8 L372.2 1482.5 L378.0 1479.7 L383.6 1475.9 L390.0 1472.4' fill='none' stroke='#858585' stroke-width='1.15' opacity='0.8' stroke-linejoin='round'/><path d='M893.8 1401.8 L884.8 1399.4 L877.0 1400.7 L869.8 1404.5 L861.0 1408.4 L853.0 1412.1 L848.4 1418.7 L841.2 1425.5' fill='none' stroke='#858585' stroke-width='1.15' opacity='0.8' stroke-linejoin='round'/><path d='M389.5 1649.9 L386.3 1656.6 L386.1 1664.6 L384.8 1671.7 L381.4 1680.3 L379.4 1688.4 L378.1 1697.7 L374.3 1705.8 L373.5 1714.9 L368.3 1721.4 L360.6 1726.5' fill='none' stroke='#858585' stroke-width='1.15' opacity='0.8' stroke-linejoin='round'/><path d='M550.3 1652.7 L555.7 1653.0 L562.0 1654.6 L567.6 1655.1 L573.2 1656.6 L576.8 1661.5 L581.5 1666.4 L588.2 1669.9 L594.1 1674.8 L599.7 1675.7 L605.9 1676.1' fill='none' stroke='#858585' stroke-width='1.15' opacity='0.8' stroke-linejoin='round'/><path d='M1057.7 1698.9 L1064.0 1695.7 L1070.5 1692.0 L1077.6 1690.8 L1086.0 1691.1 L1093.2 1688.9 L1101.5 1686.3' fill='none' stroke='#858585' stroke-width='1.15' opacity='0.8' stroke-linejoin='round'/><path d='M447.0 1628.8 L444.3 1635.3 L439.4 1640.8 L434.6 1645.4 L429.8 1651.6 L428.3 1657.7 L426.7 1665.0 L425.6 1671.1 L420.6 1677.3 L415.2 1680.2' fill='none' stroke='#858585' stroke-width='1.15' opacity='0.8' stroke-linejoin='round'/><path d='M394.2 1419.9 L388.4 1424.2 L381.6 1430.8 L373.6 1434.1 L365.1 1435.8 L357.4 1435.9 L347.9 1434.5 L339.1 1431.6 L333.3 1425.8 L325.2 1422.7 L316.4 1420.8 L308.7 1421.7 L301.0 1417.9' fill='none' stroke='#858585' stroke-width='1.15' opacity='0.8' stroke-linejoin='round'/><path d='M514.3 1652.5 L507.5 1656.3 L499.6 1657.9 L490.9 1661.0 L482.9 1661.7 L473.0 1661.4 L464.5 1660.9 L455.6 1662.3 L447.9 1664.4' fill='none' stroke='#858585' stroke-width='1.15' opacity='0.8' stroke-linejoin='round'/><path d='M631.5 1299.1 L634.5 1293.6 L637.5 1287.9 L642.0 1285.0 L648.2 1284.8 L652.9 1285.4 L658.5 1282.2 L662.7 1277.6 L666.0 1274.0' fill='none' stroke='#858585' stroke-width='1.15' opacity='0.8' stroke-linejoin='round'/><path d='M940.9 1557.6 L934.1 1555.4 L926.5 1556.1 L919.2 1555.6 L911.8 1554.3 L906.7 1551.6' fill='none' stroke='#858585' stroke-width='1.15' opacity='0.8' stroke-linejoin='round'/><path d='M805.4 1466.4 L798.7 1466.8 L792.8 1468.1 L787.2 1470.2 L780.6 1469.0 L773.8 1469.8' fill='none' stroke='#858585' stroke-width='1.15' opacity='0.8' stroke-linejoin='round'/><path d='M924.2 1698.5 L923.1 1691.5 L925.8 1684.2 L925.6 1677.4 L929.7 1671.0 L933.9 1667.6 L939.5 1661.9 L942.3 1655.7 L946.7 1650.4 L952.1 1646.4 L955.4 1642.2 L962.4 1640.7 L969.5 1638.6' fill='none' stroke='#858585' stroke-width='1.15' opacity='0.8' stroke-linejoin='round'/><path d='M1103.1 1346.1 L1106.5 1342.1 L1107.5 1336.1 L1106.2 1331.4 L1105.6 1327.0 L1106.6 1321.2 L1107.5 1315.6 L1105.0 1311.2 L1102.4 1307.7 L1097.7 1304.6 L1094.1 1301.2' fill='none' stroke='#858585' stroke-width='1.15' opacity='0.8' stroke-linejoin='round'/><path d='M433.5 1377.4 L440.4 1378.1 L445.3 1379.5 L451.7 1382.3 L458.2 1382.5 L462.8 1381.9 L466.9 1379.5 L471.0 1374.0 L476.8 1371.4 L481.4 1370.8 L486.5 1368.7' fill='none' stroke='#858585' stroke-width='1.15' opacity='0.8' stroke-linejoin='round'/><path d='M539.7 1384.6 L539.0 1391.9 L535.3 1398.7 L533.9 1405.6 L532.3 1413.0 L529.2 1419.6 L529.0 1426.0 L528.2 1432.9 L529.9 1438.2 L532.8 1444.3' fill='none' stroke='#858585' stroke-width='1.15' opacity='0.8' stroke-linejoin='round'/><path d='M420.7 1664.5 L419.4 1671.3 L415.2 1678.5 L406.9 1683.3 L398.9 1684.3 L390.7 1687.7 L384.0 1689.8 L375.6 1692.3' fill='none' stroke='#858585' stroke-width='1.15' opacity='0.8' stroke-linejoin='round'/><path d='M1090.8 1278.3 L1096.5 1274.0 L1101.9 1271.7 L1106.7 1268.6 L1112.5 1265.3 L1118.0 1263.9 L1123.7 1259.8 L1130.1 1256.2 L1136.2 1254.1 L1143.8 1255.1 L1150.4 1255.1' fill='none' stroke='#858585' stroke-width='1.15' opacity='0.8' stroke-linejoin='round'/><path d='M629.0 1364.8 L623.4 1361.1 L617.2 1358.5 L609.9 1358.6 L602.4 1359.9 L596.2 1362.4 L589.8 1364.2 L583.8 1368.8 L578.1 1369.4' fill='none' stroke='#858585' stroke-width='1.15' opacity='0.8' stroke-linejoin='round'/><path d='M581.4 1566.5 L578.2 1560.3 L575.3 1553.8 L574.3 1546.9 L573.0 1540.9 L569.0 1535.5 L563.6 1531.0' fill='none' stroke='#858585' stroke-width='1.15' opacity='0.8' stroke-linejoin='round'/><path d='M541.5 1715.1 L536.6 1717.2 L533.6 1721.5 L529.0 1722.9 L523.6 1723.8 L518.0 1725.7 L513.0 1726.6 L508.1 1725.8 L502.7 1727.3 L498.2 1732.0 L495.5 1734.8 L494.8 1738.6 L493.6 1743.5' fill='none' stroke='#858585' stroke-width='1.15' opacity='0.8' stroke-linejoin='round'/><path d='M501.3 1441.4 L505.9 1441.2 L511.4 1440.9 L516.4 1442.2 L520.4 1445.2 L526.2 1447.3 L531.8 1447.6 L535.5 1451.0' fill='none' stroke='#858585' stroke-width='1.15' opacity='0.8' stroke-linejoin='round'/><path d='M869.6 1644.5 L865.6 1637.7 L859.7 1631.1 L852.5 1625.6 L845.0 1620.8 L839.5 1614.9 L832.9 1610.5' fill='none' stroke='#858585' stroke-width='1.15' opacity='0.8' stroke-linejoin='round'/><path d='M885.8 1397.1 L886.1 1404.7 L883.9 1409.8 L882.0 1415.6 L880.2 1422.5 L875.9 1428.2 L870.9 1433.4 L867.9 1438.9 L863.6 1444.4 L860.4 1450.2' fill='none' stroke='#858585' stroke-width='1.15' opacity='0.8' stroke-linejoin='round'/><path d='M1125.7 1656.0 L1120.3 1651.3 L1115.9 1644.0 L1112.3 1636.4 L1107.6 1632.1 L1099.8 1626.8 L1094.2 1622.2 L1090.0 1616.2 L1088.2 1609.0 L1085.3 1600.9 L1081.2 1595.7' fill='none' stroke='#858585' stroke-width='1.15' opacity='0.8' stroke-linejoin='round'/><path d='M711.3 1641.0 L702.8 1641.1 L694.9 1643.7 L685.2 1643.6 L677.7 1641.6 L668.9 1638.0' fill='none' stroke='#858585' stroke-width='1.15' opacity='0.8' stroke-linejoin='round'/><path d='M517.5 1302.3 L517.7 1309.6 L520.8 1314.1 L523.7 1320.0 L526.1 1325.7 L529.9 1331.5 L536.5 1335.5 L540.7 1340.2 L545.4 1343.9 L548.2 1350.3 L549.0 1356.3' fill='none' stroke='#858585' stroke-width='1.15' opacity='0.8' stroke-linejoin='round'/><path d='M1084.0 1374.7 L1092.4 1375.7 L1098.5 1378.7 L1105.6 1379.0 L1113.2 1376.4 L1119.7 1373.4 L1125.8 1370.9' fill='none' stroke='#858585' stroke-width='1.15' opacity='0.8' stroke-linejoin='round'/><path d='M894.7 1370.4 L900.7 1368.5 L907.3 1366.1 L913.4 1364.9 L919.1 1365.3 L924.8 1362.6 L929.3 1358.4 L935.8 1354.7 L942.6 1353.2 L946.7 1349.6 L951.9 1347.1 L957.0 1343.9' fill='none' stroke='#858585' stroke-width='1.15' opacity='0.8' stroke-linejoin='round'/><path d='M542.4 1567.0 L536.4 1563.4 L531.0 1560.7 L525.2 1559.6 L518.5 1560.1 L513.8 1562.2 L508.5 1564.8 L504.4 1569.8 L500.9 1575.6 L495.2 1578.3 L491.0 1583.0 L488.0 1589.5 L485.6 1594.5' fill='none' stroke='#858585' stroke-width='1.15' opacity='0.8' stroke-linejoin='round'/><path d='M987.7 1346.1 L988.4 1339.9 L989.2 1332.8 L990.6 1326.4 L990.9 1320.6 L993.1 1314.1 L992.6 1307.8 L993.7 1301.5 L993.8 1295.7 L994.0 1289.3' fill='none' stroke='#858585' stroke-width='1.15' opacity='0.8' stroke-linejoin='round'/><path d='M957.5 1470.4 L955.7 1476.7 L954.5 1483.3 L951.8 1489.5 L947.0 1496.4 L943.8 1503.1 L938.9 1508.0' fill='none' stroke='#858585' stroke-width='1.15' opacity='0.8' stroke-linejoin='round'/><path d='M389.5 1375.7 L393.0 1371.1 L397.3 1368.6 L401.8 1368.8 L406.4 1365.0 L411.4 1362.4 L414.7 1360.2 L417.9 1356.1 L421.2 1351.0 L422.9 1345.8 L423.7 1339.9 L426.3 1336.2' fill='none' stroke='#858585' stroke-width='1.15' opacity='0.8' stroke-linejoin='round'/><path d='M1112.8 1282.9 L1117.6 1276.6 L1120.9 1268.9 L1122.0 1259.7 L1125.4 1251.8 L1129.2 1244.0 L1129.9 1235.1 L1130.8 1226.0 L1130.4 1219.0 L1132.3 1209.9 L1132.9 1201.7 L1131.3 1193.1 L1128.2 1186.1' fill='none' stroke='#858585' stroke-width='1.15' opacity='0.8' stroke-linejoin='round'/><path d='M813.9 1347.2 L807.7 1341.5 L801.6 1335.7 L801.0 1327.8 L798.0 1320.1 L797.3 1311.8 L799.0 1302.8 L803.1 1296.7 L809.3 1290.1 L812.5 1282.1 L811.9 1274.9' fill='none' stroke='#858585' stroke-width='1.15' opacity='0.8' stroke-linejoin='round'/><path d='M500.2 1698.9 L504.8 1694.4 L508.6 1688.6 L514.0 1684.5 L522.1 1682.8 L527.7 1679.6 L534.3 1676.8 L540.9 1674.7' fill='none' stroke='#858585' stroke-width='1.15' opacity='0.8' stroke-linejoin='round'/><path d='M844.5 1452.9 L842.2 1447.1 L839.1 1440.7 L833.5 1436.0 L825.6 1433.9 L820.0 1431.5 L813.3 1431.4 L805.8 1430.1 L798.5 1426.0 L792.9 1420.1 L790.0 1413.1 L785.1 1408.6 L779.4 1405.9' fill='none' stroke='#858585' stroke-width='1.15' opacity='0.8' stroke-linejoin='round'/><path d='M364.2 1343.4 L370.0 1339.2 L375.0 1337.1 L380.3 1335.3 L386.4 1334.0 L391.8 1331.9 L398.2 1333.1 L404.3 1332.4 L409.3 1331.2' fill='none' stroke='#858585' stroke-width='1.15' opacity='0.8' stroke-linejoin='round'/><path d='M739.2 1335.1 L735.1 1332.8 L729.1 1330.9 L726.3 1326.1 L720.9 1323.4 L716.1 1321.7' fill='none' stroke='#858585' stroke-width='1.15' opacity='0.8' stroke-linejoin='round'/><path d='M373.9 1387.9 L376.1 1379.5 L379.2 1373.0 L382.6 1365.4 L382.6 1357.5 L384.2 1350.2 L386.6 1342.4 L393.5 1337.0 L400.9 1335.2 L408.1 1336.3 L416.6 1337.6 L423.9 1339.1' fill='none' stroke='#858585' stroke-width='1.15' opacity='0.8' stroke-linejoin='round'/><path d='M408.4 1410.2 L405.1 1405.4 L403.1 1399.8 L402.0 1395.7 L398.7 1390.2 L396.6 1385.2 L394.9 1380.2 L392.5 1376.5 L388.5 1372.3 L385.0 1367.3 L381.5 1364.4 L377.3 1361.4' fill='none' stroke='#858585' stroke-width='1.15' opacity='0.8' stroke-linejoin='round'/><path d='M846.9 1502.4 L847.2 1508.4 L846.5 1512.6 L843.2 1517.5 L841.3 1522.3 L839.7 1528.5 L839.6 1533.0 L838.3 1537.6 L838.1 1543.9' fill='none' stroke='#858585' stroke-width='1.15' opacity='0.8' stroke-linejoin='round'/><path d='M1092.1 1298.2 L1088.9 1292.9 L1086.9 1287.9 L1083.5 1281.7 L1080.8 1275.7 L1076.5 1270.4 L1072.0 1264.0 L1065.6 1260.6 L1059.0 1259.7 L1054.2 1257.5' fill='none' stroke='#858585' stroke-width='1.15' opacity='0.8' stroke-linejoin='round'/><path d='M570.3 1348.9 L569.0 1353.7 L567.8 1358.1 L566.0 1364.5 L567.5 1370.3 L570.8 1376.5 L575.1 1381.3' fill='none' stroke='#858585' stroke-width='1.15' opacity='0.8' stroke-linejoin='round'/><path d='M891.7 1456.6 L890.8 1464.3 L892.6 1473.5 L892.0 1480.9 L895.6 1487.2 L900.7 1493.0 L903.5 1500.1 L904.2 1507.9 L905.7 1515.2' fill='none' stroke='#858585' stroke-width='1.15' opacity='0.8' stroke-linejoin='round'/><path d='M631.7 1323.6 L634.3 1319.7 L639.0 1316.3 L643.9 1315.7 L648.1 1315.7 L653.9 1317.2' fill='none' stroke='#858585' stroke-width='1.15' opacity='0.8' stroke-linejoin='round'/><path d='M1021.7 1418.6 L1021.3 1425.1 L1017.9 1432.0 L1016.0 1438.9 L1017.4 1445.8 L1015.8 1452.2 L1017.1 1459.9 L1016.2 1466.5 L1018.5 1472.3 L1019.8 1478.9 L1017.6 1485.3 L1016.2 1492.1' fill='none' stroke='#858585' stroke-width='1.15' opacity='0.8' stroke-linejoin='round'/><path d='M335.6 1655.6 L328.6 1658.3 L323.6 1662.1 L319.7 1666.8 L313.1 1669.2 L307.8 1668.1 L300.8 1669.8 L295.7 1673.7' fill='none' stroke='#858585' stroke-width='1.15' opacity='0.8' stroke-linejoin='round'/><path d='M567.7 1545.8 L570.0 1549.5 L573.0 1553.9 L576.5 1559.3 L580.1 1564.8 L582.7 1570.6 L587.0 1573.4 L590.7 1577.2 L595.3 1579.3 L600.4 1581.0 L607.1 1579.6 L612.9 1574.9 L618.9 1571.6' fill='none' stroke='#858585' stroke-width='1.15' opacity='0.8' stroke-linejoin='round'/><path d='M976.2 1297.6 L967.2 1297.2 L959.4 1299.0 L952.0 1297.4 L945.3 1292.8 L939.1 1285.8 L932.8 1282.5' fill='none' stroke='#858585' stroke-width='1.15' opacity='0.8' stroke-linejoin='round'/><path d='M495.3 1544.1 L499.9 1540.3 L502.1 1535.4 L503.6 1530.5 L506.4 1526.7 L508.4 1523.6' fill='none' stroke='#858585' stroke-width='1.15' opacity='0.8' stroke-linejoin='round'/><path d='M701.0 1555.7 L705.0 1547.9 L706.1 1539.4 L707.4 1532.6 L707.8 1525.0 L709.1 1516.4' fill='none' stroke='#858585' stroke-width='1.15' opacity='0.8' stroke-linejoin='round'/><path d='M700.8 1312.1 L708.4 1309.3 L715.8 1304.9 L724.7 1304.9 L732.2 1308.1 L738.0 1311.9 L744.5 1317.2 L748.0 1324.6' fill='none' stroke='#858585' stroke-width='1.15' opacity='0.8' stroke-linejoin='round'/><path d='M1033.6 1398.2 L1026.7 1395.7 L1020.9 1392.4 L1013.9 1390.1 L1007.7 1387.0 L1002.0 1382.1 L999.5 1375.1 L997.8 1369.9 L997.4 1362.9 L999.6 1356.5 L1001.1 1350.7 L999.7 1344.0 L994.8 1338.0' fill='none' stroke='#858585' stroke-width='1.15' opacity='0.8' stroke-linejoin='round'/><path d='M757.6 1634.2 L755.4 1642.1 L752.0 1648.6 L748.8 1655.9 L744.4 1661.5 L740.5 1669.5 L741.2 1677.3 L741.4 1684.8 L740.4 1691.9' fill='none' stroke='#858585' stroke-width='1.15' opacity='0.8' stroke-linejoin='round'/><path d='M480.0 1421.3 L485.4 1425.5 L490.6 1429.3 L492.9 1435.2 L492.2 1441.7 L488.5 1448.0 L485.1 1452.9 L483.5 1458.7 L483.5 1464.7 L482.6 1470.6 L479.8 1476.1 L478.0 1481.5 L477.0 1489.5' fill='none' stroke='#858585' stroke-width='1.15' opacity='0.8' stroke-linejoin='round'/><path d='M562.4 1591.1 L557.9 1585.2 L552.9 1579.4 L546.5 1574.7 L541.0 1568.5 L532.9 1564.6 L525.9 1559.2 L521.9 1552.7 L516.0 1548.3 L512.7 1542.2 L508.5 1536.0' fill='none' stroke='#858585' stroke-width='1.15' opacity='0.8' stroke-linejoin='round'/><path d='M411.1 1702.9 L416.5 1708.9 L421.6 1713.7 L427.9 1717.2 L431.4 1722.7 L436.0 1727.4 L441.9 1730.1' fill='none' stroke='#858585' stroke-width='1.15' opacity='0.8' stroke-linejoin='round'/><path d='M399.5 1626.4 L405.8 1625.0 L412.6 1624.0 L418.9 1622.6 L424.6 1623.6 L430.2 1626.7 L434.6 1630.5 L438.8 1635.1 L441.9 1639.5 L442.0 1645.3 L443.2 1650.7 L444.0 1656.4 L446.3 1661.4' fill='none' stroke='#858585' stroke-width='1.15' opacity='0.8' stroke-linejoin='round'/><path d='M852.7 1371.2 L856.5 1363.8 L858.3 1355.5 L863.8 1349.4 L866.8 1341.2 L874.0 1335.3 L880.3 1330.4 L886.7 1327.9 L893.1 1323.5 L898.5 1319.3' fill='none' stroke='#858585' stroke-width='1.15' opacity='0.8' stroke-linejoin='round'/><path d='M518.2 1580.7 L526.3 1578.7 L534.2 1577.0 L542.4 1579.8 L552.0 1579.8 L561.4 1582.3 L570.4 1580.5' fill='none' stroke='#858585' stroke-width='1.15' opacity='0.8' stroke-linejoin='round'/><path d='M885.2 1473.8 L887.5 1479.4 L890.4 1483.5 L895.1 1488.3 L900.5 1490.9 L905.0 1492.9 L909.0 1496.5 L912.8 1502.2' fill='none' stroke='#858585' stroke-width='1.15' opacity='0.8' stroke-linejoin='round'/><path d='M1008.4 1393.4 L1005.6 1398.4 L1005.1 1403.3 L1007.3 1408.6 L1010.6 1414.0 L1015.0 1419.5 L1017.9 1424.2 L1021.6 1429.1' fill='none' stroke='#858585' stroke-width='1.15' opacity='0.8' stroke-linejoin='round'/><path d='M333.7 1433.7 L333.2 1439.9 L334.5 1443.6 L333.1 1448.3 L331.5 1453.2 L326.9 1457.5 L324.7 1460.6' fill='none' stroke='#858585' stroke-width='1.15' opacity='0.8' stroke-linejoin='round'/><path d='M931.5 1487.3 L932.5 1481.6 L934.5 1476.0 L938.6 1471.3 L940.0 1466.9 L942.6 1463.3 L942.0 1458.8 L940.6 1454.2' fill='none' stroke='#858585' stroke-width='1.15' opacity='0.8' stroke-linejoin='round'/><path d='M797.2 1607.4 L799.3 1612.1 L804.1 1613.2 L808.6 1615.4 L812.9 1617.4 L817.3 1620.5 L821.0 1624.9 L825.6 1625.9 L830.5 1625.0 L835.2 1623.5' fill='none' stroke='#858585' stroke-width='1.15' opacity='0.8' stroke-linejoin='round'/><path d='M889.9 1498.7 L897.7 1496.4 L904.0 1492.2 L907.1 1486.4 L910.0 1480.0 L914.0 1473.8 L919.0 1469.0' fill='none' stroke='#858585' stroke-width='1.15' opacity='0.8' stroke-linejoin='round'/><path d='M560.5 1557.3 L554.9 1558.0 L548.8 1557.7 L543.4 1555.1 L537.8 1552.8 L536.3 1547.9 L532.0 1544.6 L528.4 1542.0 L525.1 1538.2 L522.4 1533.9' fill='none' stroke='#858585' stroke-width='1.15' opacity='0.8' stroke-linejoin='round'/><path d='M455.9 1687.5 L449.5 1685.3 L444.0 1682.1 L438.9 1683.0 L432.9 1684.0 L426.4 1683.0 L420.5 1683.6 L415.8 1683.9 L409.2 1684.3 L404.2 1685.5 L399.9 1684.1' fill='none' stroke='#858585' stroke-width='1.15' opacity='0.8' stroke-linejoin='round'/><path d='M1077.7 1276.7 L1080.2 1270.2 L1083.1 1264.1 L1086.6 1256.5 L1085.7 1248.1 L1085.0 1241.7 L1082.8 1235.5 L1081.0 1227.9 L1081.9 1220.9' fill='none' stroke='#858585' stroke-width='1.15' opacity='0.8' stroke-linejoin='round'/><path d='M664.7 1597.9 L668.3 1591.7 L673.5 1587.0 L678.3 1582.6 L683.6 1578.5 L690.3 1576.1 L698.2 1576.3 L704.3 1571.4 L707.2 1564.7 L712.0 1561.2 L718.9 1558.4 L726.2 1556.7 L732.6 1556.9' fill='none' stroke='#858585' stroke-width='1.15' opacity='0.8' stroke-linejoin='round'/><path d='M1015.3 1579.3 L1019.0 1586.7 L1026.2 1591.3 L1032.5 1597.1 L1039.5 1601.4 L1047.7 1602.5' fill='none' stroke='#858585' stroke-width='1.15' opacity='0.8' stroke-linejoin='round'/><path d='M550.0 1487.4 L557.3 1489.1 L565.4 1491.3 L572.4 1492.9 L579.5 1493.3 L587.8 1494.7 L594.1 1498.0 L599.9 1502.2' fill='none' stroke='#858585' stroke-width='1.15' opacity='0.8' stroke-linejoin='round'/><path d='M837.9 1374.2 L833.4 1370.7 L832.7 1365.6 L830.6 1359.5 L828.1 1353.4 L827.5 1347.4 L830.1 1342.4' fill='none' stroke='#858585' stroke-width='1.15' opacity='0.8' stroke-linejoin='round'/><path d='M358.8 1686.1 L355.4 1681.5 L350.5 1679.9 L346.8 1676.5 L344.3 1671.5 L340.9 1667.9 L335.9 1666.5 L330.6 1664.1 L326.7 1661.9 L322.6 1658.6 L318.0 1657.2 L313.8 1654.9 L309.1 1650.9' fill='none' stroke='#858585' stroke-width='1.15' opacity='0.8' stroke-linejoin='round'/><path d='M849.6 1600.9 L849.3 1593.8 L845.8 1589.4 L841.0 1583.9 L836.5 1577.7 L836.1 1571.3 L837.7 1564.0' fill='none' stroke='#858585' stroke-width='1.15' opacity='0.8' stroke-linejoin='round'/><path d='M996.6 1301.9 L1003.1 1305.0 L1006.5 1308.9 L1010.9 1314.5 L1014.7 1319.4 L1017.5 1326.0 L1021.3 1330.4 L1025.8 1336.6 L1029.5 1342.6 L1032.6 1348.8 L1038.5 1352.7' fill='none' stroke='#858585' stroke-width='1.15' opacity='0.8' stroke-linejoin='round'/><path d='M953.2 1348.4 L953.3 1342.6 L953.6 1336.9 L955.4 1331.3 L955.5 1326.1 L957.3 1320.9 L962.7 1316.8 L967.9 1315.0 L974.3 1316.4 L979.8 1320.7 L985.2 1320.5 L990.6 1320.9 L995.6 1318.9' fill='none' stroke='#858585' stroke-width='1.15' opacity='0.8' stroke-linejoin='round'/><path d='M559.5 1611.2 L560.2 1604.9 L561.1 1598.5 L562.5 1591.7 L568.0 1585.4 L574.6 1580.6' fill='none' stroke='#858585' stroke-width='1.15' opacity='0.8' stroke-linejoin='round'/><path d='M688.1 1353.0 L683.3 1355.2 L678.5 1358.8 L674.5 1361.0 L668.7 1362.7 L663.6 1363.2 L658.2 1363.6' fill='none' stroke='#858585' stroke-width='1.15' opacity='0.8' stroke-linejoin='round'/><path d='M730.5 1610.5 L735.7 1604.5 L742.6 1600.4 L750.7 1598.1 L758.9 1597.3 L765.5 1598.0' fill='none' stroke='#858585' stroke-width='1.15' opacity='0.8' stroke-linejoin='round'/><path d='M923.4 1556.0 L918.4 1563.7 L912.4 1568.4 L908.6 1574.8 L903.6 1580.5 L899.6 1585.7 L894.8 1590.9 L891.3 1597.9 L886.8 1603.9 L885.9 1610.7 L882.4 1616.8 L880.9 1625.1' fill='none' stroke='#858585' stroke-width='1.15' opacity='0.8' stroke-linejoin='round'/><path d='M1119.6 1384.5 L1118.5 1391.1 L1115.2 1396.9 L1109.8 1398.8 L1105.5 1403.0 L1100.2 1405.6 L1095.7 1410.2 L1095.1 1414.5 L1095.2 1420.0 L1094.0 1426.2 L1095.6 1431.6' fill='none' stroke='#858585' stroke-width='1.15' opacity='0.8' stroke-linejoin='round'/><path d='M394.5 1570.7 L386.5 1573.3 L377.4 1574.9 L368.7 1576.3 L359.6 1576.1 L350.9 1572.9' fill='none' stroke='#858585' stroke-width='1.15' opacity='0.8' stroke-linejoin='round'/><path d='M985.9 1603.7 L977.9 1607.3 L970.9 1611.8 L965.8 1619.2 L957.7 1621.6 L950.6 1625.5 L946.5 1631.4 L941.0 1639.5 L936.0 1645.8 L933.8 1652.7' fill='none' stroke='#858585' stroke-width='1.15' opacity='0.8' stroke-linejoin='round'/><path d='M536.9 1652.2 L542.3 1648.1 L545.6 1644.0 L549.8 1641.9 L553.1 1638.3 L555.6 1634.0 L559.7 1631.5 L564.0 1628.6 L567.7 1624.6 L571.2 1619.7 L571.8 1615.0' fill='none' stroke='#858585' stroke-width='1.15' opacity='0.8' stroke-linejoin='round'/><path d='M994.3 1364.8 L996.7 1361.6 L1000.3 1357.1 L1004.6 1354.1 L1010.4 1352.6 L1015.1 1348.6 L1019.0 1344.1 L1023.0 1343.9 L1028.5 1344.8 L1032.5 1345.4 L1037.7 1347.0' fill='none' stroke='#858585' stroke-width='1.15' opacity='0.8' stroke-linejoin='round'/><path d='M1088.6 1610.7 L1096.2 1613.8 L1103.2 1617.4 L1111.4 1618.6 L1120.1 1621.8 L1128.5 1622.4 L1138.1 1619.7' fill='none' stroke='#858585' stroke-width='1.15' opacity='0.8' stroke-linejoin='round'/><path d='M752.5 1433.5 L749.0 1438.0 L745.3 1440.7 L742.9 1444.7 L742.3 1450.2 L742.1 1454.4' fill='none' stroke='#858585' stroke-width='1.15' opacity='0.8' stroke-linejoin='round'/><path d='M455.9 1608.8 L461.5 1610.3 L466.8 1613.0 L472.6 1615.3 L478.3 1616.5 L483.6 1617.0 L489.3 1620.4 L493.6 1624.1 L499.0 1626.2 L502.8 1629.5 L508.1 1634.2 L513.2 1636.8 L519.2 1638.5' fill='none' stroke='#858585' stroke-width='1.15' opacity='0.8' stroke-linejoin='round'/><path d='M1037.8 1660.7 L1031.5 1656.4 L1025.0 1657.0 L1018.2 1653.8 L1010.1 1652.5 L1003.4 1652.9 L995.1 1655.6 L988.9 1658.6' fill='none' stroke='#858585' stroke-width='1.15' opacity='0.8' stroke-linejoin='round'/><path d='M955.3 1281.6 L948.9 1285.0 L941.2 1287.0 L935.5 1289.2 L929.4 1293.5 L924.0 1294.0 L918.2 1298.7 L911.6 1300.6 L906.3 1302.7 L901.7 1308.4 L898.6 1315.8 L895.5 1322.3' fill='none' stroke='#858585' stroke-width='1.15' opacity='0.8' stroke-linejoin='round'/><path d='M454.8 1578.9 L447.8 1582.5 L442.8 1589.2 L434.4 1593.7 L427.3 1598.3 L417.8 1600.7 L408.0 1601.3 L398.2 1603.2 L388.3 1604.7 L379.6 1600.9 L373.0 1595.7' fill='none' stroke='#858585' stroke-width='1.15' opacity='0.8' stroke-linejoin='round'/><path d='M623.3 1389.2 L618.1 1394.4 L614.2 1402.9 L615.5 1412.1 L611.8 1419.0 L610.0 1425.9 L610.1 1433.1 L608.3 1441.5 L603.5 1447.7 L601.3 1454.9 L602.8 1463.5' fill='none' stroke='#858585' stroke-width='1.15' opacity='0.8' stroke-linejoin='round'/><path d='M755.1 1448.5 L749.6 1452.6 L745.2 1454.5 L740.2 1457.0 L734.6 1458.1 L729.6 1459.7 L725.1 1459.9 L721.0 1458.4 L716.9 1458.9 L712.9 1461.3 L708.3 1464.3 L704.8 1466.7' fill='none' stroke='#858585' stroke-width='1.15' opacity='0.8' stroke-linejoin='round'/><path d='M430.8 1526.0 L436.3 1527.3 L441.2 1531.8 L444.6 1538.2 L448.5 1541.9 L454.7 1543.1' fill='none' stroke='#858585' stroke-width='1.15' opacity='0.8' stroke-linejoin='round'/><path d='M1060.4 1689.0 L1069.0 1691.4 L1075.7 1692.5 L1083.1 1694.0 L1090.8 1694.9 L1098.7 1696.5 L1106.6 1698.1 L1113.8 1697.7 L1121.8 1699.9 L1130.3 1703.4 L1139.1 1703.6 L1147.6 1704.9 L1155.2 1702.5' fill='none' stroke='#858585' stroke-width='1.15' opacity='0.8' stroke-linejoin='round'/><path d='M641.5 1558.1 L648.0 1556.5 L655.4 1556.6 L661.0 1557.1 L666.8 1557.7 L673.8 1560.2 L678.7 1565.6 L684.7 1570.0 L688.0 1576.6 L687.6 1583.2 L685.7 1590.4' fill='none' stroke='#858585' stroke-width='1.15' opacity='0.8' stroke-linejoin='round'/><path d='M664.7 1615.9 L668.3 1621.4 L673.3 1626.8 L678.8 1631.6 L684.2 1634.0 L687.6 1638.1 L690.9 1641.7 L694.3 1647.0 L699.6 1650.7 L703.6 1655.7 L704.1 1661.1 L703.3 1666.2' fill='none' stroke='#858585' stroke-width='1.15' opacity='0.8' stroke-linejoin='round'/><path d='M786.9 1540.0 L781.0 1538.8 L776.7 1535.7 L772.0 1534.0 L767.6 1529.8 L764.7 1524.9 L760.9 1521.7 L755.9 1518.1 L750.6 1517.7 L744.0 1518.6 L739.3 1515.9' fill='none' stroke='#858585' stroke-width='1.15' opacity='0.8' stroke-linejoin='round'/><path d='M882.1 1451.5 L878.1 1455.4 L872.3 1459.5 L867.3 1464.2 L861.1 1466.2 L856.3 1469.6 L852.9 1474.1 L849.2 1479.5 L844.3 1484.5 L841.7 1489.3' fill='none' stroke='#858585' stroke-width='1.15' opacity='0.8' stroke-linejoin='round'/><path d='M839.4 1674.7 L835.5 1681.5 L835.2 1688.7 L833.2 1695.5 L829.4 1702.1 L829.8 1709.9 L833.0 1717.9' fill='none' stroke='#858585' stroke-width='1.15' opacity='0.8' stroke-linejoin='round'/><path d='M604.5 1615.6 L611.0 1613.2 L619.0 1609.8 L623.7 1604.8 L630.0 1601.7 L636.3 1595.2 L642.1 1588.5' fill='none' stroke='#858585' stroke-width='1.15' opacity='0.8' stroke-linejoin='round'/><path d='M825.8 1619.2 L831.1 1626.0 L839.0 1630.7 L843.7 1635.8 L846.3 1643.7 L848.9 1651.0 L850.2 1658.6' fill='none' stroke='#858585' stroke-width='1.15' opacity='0.8' stroke-linejoin='round'/><path d='M420.2 1520.3 L412.7 1521.4 L407.4 1522.4 L400.7 1521.2 L395.1 1522.3 L389.3 1525.5 L383.8 1528.7 L379.5 1534.0 L373.1 1537.2 L369.0 1542.4' fill='none' stroke='#858585' stroke-width='1.15' opacity='0.8' stroke-linejoin='round'/><path d='M610.4 1685.6 L603.1 1686.7 L596.7 1691.0 L589.4 1695.5 L582.9 1699.0 L577.0 1702.9 L568.9 1703.1 L561.7 1703.8 L553.7 1705.7 L548.6 1711.5' fill='none' stroke='#858585' stroke-width='1.15' opacity='0.8' stroke-linejoin='round'/><path d='M476.1 1319.7 L481.6 1321.0 L486.9 1324.5 L490.4 1329.2 L494.1 1334.9 L496.4 1341.3 L496.1 1347.4 L495.6 1354.0 L496.6 1360.1 L499.6 1366.6 L498.7 1372.6 L497.7 1377.2 L493.9 1382.0' fill='none' stroke='#858585' stroke-width='1.15' opacity='0.8' stroke-linejoin='round'/><path d='M1033.3 1570.7 L1032.4 1577.0 L1032.3 1583.1 L1029.8 1589.4 L1027.8 1596.9 L1030.0 1604.2 L1033.9 1610.3 L1033.2 1616.6' fill='none' stroke='#858585' stroke-width='1.15' opacity='0.8' stroke-linejoin='round'/><path d='M791.9 1671.8 L787.4 1677.5 L781.7 1682.7 L777.5 1688.6 L770.7 1692.2 L765.3 1698.2 L758.8 1701.0 L752.4 1704.3 L747.6 1708.4 L740.1 1711.1 L734.6 1716.8 L728.7 1722.2' fill='none' stroke='#858585' stroke-width='1.15' opacity='0.8' stroke-linejoin='round'/><path d='M425.6 1403.9 L430.8 1398.9 L431.4 1391.7 L431.9 1385.6 L433.8 1378.9 L439.4 1374.0' fill='none' stroke='#b8a8bd' stroke-width='1.1' opacity='0.8' stroke-linejoin='round'/><path d='M603.8 1605.3 L607.0 1598.7 L606.9 1591.3 L604.2 1585.0 L599.2 1579.4 L591.7 1577.3 L584.7 1575.0 L577.7 1569.8 L573.8 1562.6 L570.1 1557.1 L569.1 1550.1 L567.7 1543.2 L563.2 1536.2' fill='none' stroke='#b8a8bd' stroke-width='1.1' opacity='0.8' stroke-linejoin='round'/><path d='M687.1 1646.6 L686.9 1639.8 L689.5 1634.6 L692.0 1630.1 L696.3 1624.6 L700.7 1618.8 L702.7 1613.1' fill='none' stroke='#b8a8bd' stroke-width='1.1' opacity='0.8' stroke-linejoin='round'/><path d='M804.0 1317.0 L804.3 1308.0 L805.3 1300.3 L806.8 1292.6 L806.6 1285.1 L809.2 1278.6 L811.6 1270.1 L817.9 1264.5 L819.3 1256.7 L818.6 1247.5 L819.5 1240.2' fill='none' stroke='#b8a8bd' stroke-width='1.1' opacity='0.8' stroke-linejoin='round'/><path d='M1008.2 1386.2 L999.1 1388.4 L989.2 1389.4 L981.8 1392.1 L973.1 1396.8 L966.6 1401.2 L957.4 1404.2 L949.6 1407.0 L939.5 1406.5 L931.5 1402.0' fill='none' stroke='#b8a8bd' stroke-width='1.1' opacity='0.8' stroke-linejoin='round'/><path d='M1013.3 1416.2 L1017.4 1411.8 L1023.4 1408.3 L1029.2 1406.9 L1036.3 1406.4 L1042.9 1409.7 L1050.2 1410.6 L1056.2 1413.5 L1062.4 1415.0 L1070.0 1415.1' fill='none' stroke='#b8a8bd' stroke-width='1.1' opacity='0.8' stroke-linejoin='round'/><path d='M662.9 1442.1 L658.8 1448.6 L654.7 1454.9 L648.5 1460.1 L641.7 1462.7 L635.4 1465.0 L627.7 1468.7 L618.9 1468.6' fill='none' stroke='#b8a8bd' stroke-width='1.1' opacity='0.8' stroke-linejoin='round'/><path d='M442.0 1551.3 L434.8 1559.7 L433.2 1569.7 L428.2 1577.5 L420.4 1583.5 L410.4 1587.9 L401.3 1589.6 L392.3 1593.5 L386.2 1600.3 L378.1 1606.0' fill='none' stroke='#b8a8bd' stroke-width='1.1' opacity='0.8' stroke-linejoin='round'/><path d='M944.8 1679.4 L952.6 1680.8 L960.1 1680.1 L967.7 1680.6 L974.8 1678.6 L982.4 1675.6 L988.9 1671.7 L995.7 1669.3 L1004.3 1668.8 L1011.7 1666.6 L1020.5 1665.0 L1028.2 1661.7 L1032.9 1655.0' fill='none' stroke='#b8a8bd' stroke-width='1.1' opacity='0.8' stroke-linejoin='round'/><path d='M648.0 1452.7 L655.2 1451.0 L663.3 1448.3 L670.7 1446.4 L677.0 1443.8 L683.0 1439.1 L689.5 1437.5 L697.2 1437.1 L705.9 1436.5 L712.0 1440.1 L718.4 1445.0 L723.0 1449.8 L728.8 1455.3' fill='none' stroke='#b8a8bd' stroke-width='1.1' opacity='0.8' stroke-linejoin='round'/><path d='M891.9 1688.7 L895.3 1695.5 L895.9 1701.3 L894.3 1707.5 L893.8 1714.5 L890.3 1720.3 L890.2 1726.6 L887.5 1732.6 L885.7 1738.4 L883.3 1744.9 L879.8 1749.1 L875.0 1750.5 L870.0 1753.6' fill='none' stroke='#b8a8bd' stroke-width='1.1' opacity='0.8' stroke-linejoin='round'/><path d='M539.8 1396.8 L543.9 1404.9 L543.1 1414.2 L543.4 1423.1 L547.5 1430.5 L554.5 1436.2 L562.5 1440.6 L570.3 1445.7 L579.5 1450.0 L589.5 1451.1 L598.0 1447.2' fill='none' stroke='#b8a8bd' stroke-width='1.1' opacity='0.8' stroke-linejoin='round'/><path d='M590.7 1528.6 L597.0 1527.1 L602.4 1524.4 L608.5 1525.1 L615.6 1525.5 L622.4 1529.5 L629.2 1533.6 L635.3 1537.9 L642.2 1540.1 L648.9 1541.0 L656.1 1543.7 L660.6 1547.3 L665.7 1550.1' fill='none' stroke='#b8a8bd' stroke-width='1.1' opacity='0.8' stroke-linejoin='round'/><path d='M860.9 1625.8 L857.0 1631.9 L854.3 1638.5 L852.8 1643.9 L850.6 1650.0 L849.8 1656.4 L847.1 1662.0 L841.7 1664.7 L836.0 1668.5 L831.6 1672.7 L830.6 1678.9 L827.9 1683.0' fill='none' stroke='#b8a8bd' stroke-width='1.1' opacity='0.8' stroke-linejoin='round'/><path d='M959.3 1540.8 L955.3 1548.8 L950.8 1557.0 L947.6 1563.8 L943.0 1571.7 L938.4 1578.9' fill='none' stroke='#b8a8bd' stroke-width='1.1' opacity='0.8' stroke-linejoin='round'/><path d='M680.4 1613.9 L673.5 1617.5 L665.9 1618.5 L659.7 1622.1 L651.6 1623.3 L644.5 1627.2 L640.0 1632.7 L635.8 1639.3 L631.7 1646.3' fill='none' stroke='#b8a8bd' stroke-width='1.1' opacity='0.8' stroke-linejoin='round'/><path d='M1021.7 1392.7 L1027.2 1399.9 L1032.2 1407.2 L1036.1 1415.3 L1040.9 1423.1 L1044.2 1429.2 L1049.3 1435.7 L1054.2 1442.0' fill='none' stroke='#b8a8bd' stroke-width='1.1' opacity='0.8' stroke-linejoin='round'/><path d='M435.0 1496.1 L426.9 1496.0 L418.9 1494.2 L412.3 1489.8 L406.2 1485.8 L399.4 1486.4 L393.3 1484.1' fill='none' stroke='#b8a8bd' stroke-width='1.1' opacity='0.8' stroke-linejoin='round'/><path d='M346.4 1360.2 L348.4 1351.6 L350.5 1344.1 L352.5 1336.6 L355.0 1330.3 L355.4 1322.3 L359.0 1314.8 L364.9 1309.6 L369.5 1303.7 L377.7 1301.1 L384.5 1298.2 L392.2 1294.3 L400.1 1290.8' fill='none' stroke='#b8a8bd' stroke-width='1.1' opacity='0.8' stroke-linejoin='round'/><path d='M343.9 1306.9 L334.2 1309.9 L326.1 1311.8 L317.2 1309.1 L310.9 1303.6 L304.1 1298.3 L298.3 1292.5 L294.7 1283.9 L290.3 1276.1 L283.0 1269.5 L279.2 1262.4 L277.9 1254.5' fill='none' stroke='#b8a8bd' stroke-width='1.1' opacity='0.8' stroke-linejoin='round'/><path d='M873.4 1491.3 L881.3 1490.6 L887.3 1488.7 L894.1 1490.8 L901.2 1491.6 L908.3 1490.1 L914.3 1491.5' fill='none' stroke='#b8a8bd' stroke-width='1.1' opacity='0.8' stroke-linejoin='round'/><path d='M958.6 1416.8 L965.8 1423.1 L971.6 1429.9 L978.8 1434.2 L989.5 1435.6 L999.3 1439.2 L1006.1 1445.7 L1015.9 1449.9 L1023.5 1454.7 L1031.1 1460.6 L1035.5 1468.5 L1036.5 1477.8 L1038.4 1487.2' fill='none' stroke='#b8a8bd' stroke-width='1.1' opacity='0.8' stroke-linejoin='round'/><path d='M894.8 1582.0 L892.9 1575.9 L887.3 1572.2 L881.2 1567.8 L876.6 1563.8 L871.3 1559.1' fill='none' stroke='#b8a8bd' stroke-width='1.1' opacity='0.8' stroke-linejoin='round'/><path d='M990.7 1679.5 L998.3 1677.6 L1004.0 1673.8 L1006.8 1667.8 L1012.7 1664.3 L1015.9 1658.9 L1020.0 1653.8 L1022.9 1647.3 L1027.2 1643.4' fill='none' stroke='#b8a8bd' stroke-width='1.1' opacity='0.8' stroke-linejoin='round'/><path d='M909.6 1471.2 L900.2 1466.8 L892.0 1464.8 L884.8 1460.7 L876.8 1458.2 L868.2 1452.9 L861.2 1448.3 L851.0 1448.8' fill='none' stroke='#b8a8bd' stroke-width='1.1' opacity='0.8' stroke-linejoin='round'/><path d='M324.0 1501.2 L328.2 1501.9 L333.9 1499.9 L338.7 1500.1 L343.8 1498.9 L350.7 1500.6 L354.6 1499.5 L360.3 1498.6 L366.2 1498.7 L371.9 1498.5 L375.4 1497.5 L381.9 1499.1 L386.6 1498.6 L392.4 1497.7 L396.4 1498.9 L403.3 1496.7 L408.3 1498.0 L412.6 1499.1 L418.7 1499.6 L424.1 1499.7 L429.2 1498.3 L434.1 1497.5 L439.0 1498.7 L445.8 1499.9 L451.0 1499.2 L456.0 1498.1 L460.8 1499.4 L465.1 1500.0 L471.7 1499.8 L475.8 1502.0 L481.1 1501.7 L487.1 1501.6 L491.2 1502.5 L497.1 1503.2 L502.7 1504.4 L508.9 1506.4 L513.2 1507.0 L518.4 1507.6 L523.0 1507.2 L529.2 1508.0 L535.7 1507.8 L540.2 1507.4 L545.7 1508.1 L551.5 1507.9 L556.1 1508.4 L561.1 1508.3 L565.9 1507.1 L570.7 1508.9 L577.8 1508.3 L583.0 1508.9 L586.1 1506.9 L592.2 1508.3 L597.6 1508.0 L602.4 1509.4 L609.1 1508.8 L613.8 1507.7 L617.7 1509.9 L624.5 1510.1 L628.9 1510.3 L635.0 1510.0 L639.4 1510.8 L646.1 1511.2 L649.7 1509.9 L654.7 1509.9 L661.6 1510.2 L666.0 1511.4 L671.6 1511.2 L676.8 1510.9 L680.1 1509.3 L686.9 1508.9 L691.2 1509.4 L697.8 1510.6 L700.8 1509.4 L708.1 1507.8 L712.0 1508.7 L717.3 1508.0 L724.1 1508.2 L728.1 1505.7 L734.7 1506.9 L741.3 1506.9 L746.5 1505.0 L751.5 1504.6 L757.2 1506.4 L762.2 1510.2 L768.6 1511.4 L774.8 1513.8 L779.2 1513.3 L783.2 1514.2 L790.0 1517.9 L793.4 1518.6 L798.7 1520.0 L805.7 1520.6 L809.1 1521.7 L815.2 1523.9 L819.9 1525.1 L825.5 1524.5 L830.3 1524.9 L835.1 1524.1 L841.1 1525.2 L844.5 1526.3 L850.5 1523.8 L855.1 1524.0 L861.0 1526.2 L865.2 1526.3 L871.2 1525.1 L875.7 1522.8 L883.0 1523.9 L885.9 1521.9 L893.2 1519.9 L896.8 1519.2 L902.9 1519.7 L907.5 1517.4 L913.9 1517.1 L917.8 1515.8 L924.1 1513.6 L928.7 1512.9 L933.8 1511.4 L939.6 1511.4 L945.2 1511.2 L951.0 1510.3 L956.3 1509.4 L961.4 1510.0 L966.3 1510.7 L970.3 1508.6 L976.6 1510.3 L981.0 1508.8 L987.9 1509.5 L992.9 1510.0 L998.0 1508.2 L1001.5 1509.3 L1008.0 1508.0 L1014.5 1507.3 L1017.5 1507.5 L1022.9 1508.1 L1030.3 1508.3 L1034.7 1510.0 L1038.9 1510.2 L1045.5 1510.9 L1051.4 1511.3 L1055.9 1510.8 L1059.9 1511.1 L1065.8 1510.4 L1069.9 1511.4 L1076.4 1511.4 L1082.8 1510.4 L1086.9 1511.6 L1092.0 1511.7 L1097.8 1510.4 L1100.9 1509.5 L1108.2 1509.4 L1111.4 1509.7 L1117.2 1509.3 L1121.3 1509.7 L1127.5 1507.5 L1133.2 1509.3 L1138.0 1508.0' fill='none' stroke='#e58ca5' stroke-width='1.8' opacity='1' stroke-linejoin='round' stroke-linecap='round'/><path d='M324.0 1610.6 L328.4 1609.6 L334.7 1610.1 L339.3 1611.3 L345.0 1612.5 L350.7 1613.0 L356.3 1612.0 L361.7 1611.4 L366.1 1612.1 L371.7 1612.0 L377.2 1614.3 L380.8 1614.0 L386.3 1613.1 L392.4 1614.0 L398.4 1613.7 L403.2 1613.6 L408.1 1615.4 L414.7 1614.7 L417.9 1615.1 L423.0 1615.8 L428.1 1613.7 L433.2 1615.8 L441.0 1616.5 L445.8 1614.5 L451.2 1615.3 L455.3 1614.8 L460.8 1615.7 L465.4 1616.4 L472.3 1617.9 L477.8 1617.8 L482.7 1617.0 L487.1 1617.5 L494.7 1618.2 L498.6 1619.4 L504.8 1619.6 L509.1 1621.6 L515.5 1620.9 L521.1 1618.8 L525.9 1617.6 L530.8 1617.0 L536.9 1617.0 L541.4 1614.8 L548.7 1613.3 L552.1 1614.1 L557.8 1611.4 L563.4 1610.6 L567.9 1607.8 L573.4 1606.9 L575.9 1604.6 L582.1 1602.8 L587.5 1599.9 L589.5 1599.4 L595.7 1597.5 L598.9 1594.3 L604.1 1592.7 L607.8 1589.3 L612.6 1588.2 L618.2 1586.8 L622.4 1585.0 L627.6 1583.2 L631.8 1579.8 L635.3 1577.9 L640.3 1576.1 L644.5 1573.1 L651.6 1568.7 L654.0 1567.1 L659.6 1564.7 L663.4 1561.4 L670.1 1559.6 L673.8 1556.8 L679.7 1556.0 L683.1 1552.5 L687.8 1549.0 L691.5 1548.2 L697.7 1545.7 L701.3 1541.8 L706.0 1541.1 L710.8 1538.1 L716.6 1534.0 L720.1 1533.5 L724.3 1530.0 L730.4 1526.7 L734.4 1525.1 L739.2 1520.1 L742.6 1516.2 L748.2 1513.4 L751.5 1508.0' fill='none' stroke='#e58ca5' stroke-width='1.7' opacity='1' stroke-linejoin='round' stroke-linecap='round'/><path d='M324.0 1367.8 L329.8 1366.4 L333.5 1366.5 L338.3 1363.9 L344.7 1361.6 L348.5 1362.7 L353.3 1360.9 L358.8 1360.1 L363.1 1356.7 L367.6 1357.1 L372.0 1356.1 L378.8 1355.4 L381.6 1354.0 L387.8 1352.3 L392.4 1350.7 L397.4 1349.2 L401.8 1348.5 L408.1 1345.8 L413.7 1343.8 L418.3 1344.2 L422.2 1342.6 L427.5 1341.0 L434.3 1338.8 L438.9 1338.3 L444.6 1337.6 L447.8 1335.3 L454.0 1333.6 L457.9 1331.9 L464.8 1332.1 L469.8 1331.0 L473.3 1327.5 L478.4 1327.3 L485.8 1324.8 L488.8 1324.4 L495.0 1323.3 L501.3 1323.3 L505.6 1321.2 L509.9 1320.8 L516.4 1319.3 L522.4 1320.5 L527.2 1319.5 L532.7 1316.8 L536.6 1317.0 L542.1 1316.5 L547.0 1314.2 L553.3 1314.0 L557.2 1313.2 L563.4 1313.0 L568.5 1312.9 L573.8 1312.7 L578.7 1312.2 L582.9 1312.7 L587.9 1311.7 L593.8 1309.8 L599.8 1311.3 L604.8 1310.4 L609.7 1309.1 L613.9 1309.0 L618.7 1309.8 L624.1 1309.2 L629.1 1307.8 L635.7 1307.8 L639.2 1308.8 L646.5 1307.2 L651.9 1308.4 L654.5 1307.6 L659.9 1306.5 L666.0 1306.2 L670.6 1306.0 L676.3 1306.6 L680.9 1305.7 L686.1 1306.2 L691.9 1304.6 L697.1 1305.7 L703.3 1305.4 L708.8 1303.1 L714.0 1303.0 L718.3 1302.7 L724.1 1302.5 L728.6 1304.3 L734.4 1302.8' fill='none' stroke='#e58ca5' stroke-width='1.5' opacity='0.8' stroke-linejoin='round' stroke-linecap='round'/><path d='M751.5 1494.3 L752.7 1489.5 L755.0 1484.2 L755.1 1480.7 L757.1 1475.7 L757.7 1468.9 L758.3 1464.8 L758.9 1459.3 L761.5 1456.1 L762.3 1450.5 L764.2 1445.8 L765.7 1439.4 L767.0 1435.7 L767.3 1431.7 L768.6 1425.9 L769.1 1420.8 L770.7 1414.8 L771.6 1410.8 L773.0 1404.2 L773.0 1400.3 L775.0 1394.7 L775.2 1388.8 L776.6 1385.8 L776.6 1380.8 L778.9 1374.6 L778.4 1369.7 L780.1 1363.6 L780.1 1358.4 L782.0 1354.5 L783.1 1348.5 L782.2 1343.9 L784.8 1339.6 L785.4 1334.0 L786.1 1327.9 L785.7 1323.3 L787.3 1318.3 L787.4 1312.8 L785.6 1307.0 L787.8 1302.7 L787.3 1298.1 L787.5 1293.3 L788.7 1287.3 L788.4 1282.4 L788.9 1276.9 L789.1 1272.0' fill='none' stroke='#e58ca5' stroke-width='1.4' opacity='0.8' stroke-linejoin='round' stroke-linecap='round'/><path d='M1008.0 1648.2 L1011.2 1645.7 L1017.8 1643.5 L1020.7 1639.1 L1025.4 1636.1 L1028.6 1634.4 L1033.6 1632.3 L1036.9 1628.7 L1043.1 1625.6 L1046.4 1622.5 L1049.9 1620.0 L1056.0 1615.8 L1059.3 1614.0 L1063.6 1609.9 L1067.5 1606.5 L1071.5 1603.9 L1075.9 1602.5 L1080.6 1597.7 L1082.8 1595.3 L1087.9 1591.2 L1091.5 1590.0 L1096.9 1586.1 L1099.0 1582.3 L1103.8 1579.8 L1109.9 1577.2 L1112.7 1575.3 L1119.0 1570.0 L1123.0 1567.0 L1127.9 1566.4 L1133.4 1562.3 L1138.0 1559.3' fill='none' stroke='#e58ca5' stroke-width='1.6' opacity='1' stroke-linejoin='round' stroke-linecap='round'/><path d='M751.5 1716.6 L756.4 1712.5 L759.4 1710.2 L762.8 1708.2 L767.2 1705.2 L770.9 1699.9 L776.0 1696.9 L779.9 1694.4 L782.7 1691.7 L788.1 1689.2 L791.7 1685.2 L796.2 1682.0 L798.6 1677.6 L802.8 1675.6 L806.6 1672.3 L811.8 1671.8 L815.3 1667.6 L820.7 1667.2 L824.9 1665.0 L831.3 1662.0 L834.8 1659.1 L838.7 1658.3 L844.9 1656.3 L847.3 1651.8 L853.9 1651.8 L858.0 1648.1 L863.4 1645.4 L867.1 1642.4 L871.2 1641.4 L875.6 1639.6 L882.0 1636.3 L886.0 1635.9 L890.4 1634.3 L895.7 1631.2 L901.7 1629.7 L904.7 1628.1 L909.7 1625.9 L914.0 1622.6 L919.5 1623.1 L923.8 1620.9 L929.4 1616.7 L934.9 1617.0 L939.6 1614.0 L944.4 1612.7 L949.3 1610.8 L954.7 1610.9 L961.6 1611.0 L965.9 1607.9 L970.1 1608.4 L977.6 1606.2 L980.5 1605.7 L988.1 1605.4 L993.0 1603.4 L998.0 1603.0 L1002.2 1602.0 L1008.0 1600.3 L1014.2 1597.9 L1019.0 1597.6 L1021.6 1595.1 L1026.7 1595.1 L1032.2 1593.8 L1037.4 1592.4 L1041.2 1589.6 L1046.9 1588.2 L1051.5 1586.2 L1056.9 1585.7 L1062.1 1583.0 L1065.5 1581.5 L1070.7 1580.6 L1076.4 1579.8' fill='none' stroke='#e58ca5' stroke-width='1.4' opacity='0.7' stroke-linejoin='round' stroke-linecap='round'/><path d='M375.3 1302.8 L380.7 1305.6 L384.1 1305.9 L389.9 1308.7 L394.6 1311.0 L397.5 1312.9 L401.5 1314.3 L407.6 1317.1 L410.9 1320.3 L415.6 1321.0 L421.7 1322.9 L425.4 1325.0 L431.1 1327.6 L434.6 1330.7 L438.2 1331.0 L443.7 1333.6 L448.5 1334.9 L454.5 1339.0 L457.2 1341.4 L461.9 1342.2 L468.3 1344.9 L474.0 1346.5 L476.5 1348.6 L483.0 1351.2 L487.7 1355.2 L491.6 1355.3 L496.4 1359.4 L501.9 1360.9 L506.6 1363.2 L512.1 1364.6 L515.9 1365.3 L519.5 1368.9 L525.8 1369.3 L530.8 1372.0 L534.4 1374.7 L538.8 1376.6 L544.7 1378.5 L549.8 1378.1 L553.4 1381.0 L558.4 1383.8 L563.4 1384.9 L566.9 1389.1 L571.5 1392.2 L573.7 1395.2 L579.6 1399.5 L581.2 1401.5 L586.5 1404.2 L589.0 1409.2 L594.0 1411.6 L597.6 1415.6 L602.2 1416.9 L606.7 1420.2 L613.5 1423.2 L617.4 1424.7 L622.3 1428.0 L628.1 1429.8 L631.8 1432.7' fill='none' stroke='#7a7a7a' stroke-width='1.4' opacity='0.85' stroke-linejoin='round' stroke-linecap='round'/><path d='M751.5 1494.3 L757.0 1495.0 L761.8 1496.4 L765.6 1499.3 L771.4 1499.9 L777.3 1503.7 L782.5 1505.5 L787.3 1506.2 L793.1 1508.8 L798.8 1509.6 L802.8 1511.4 L808.5 1513.2 L812.5 1516.4 L818.2 1519.2 L822.3 1522.8 L826.9 1525.0 L831.2 1527.8 L837.0 1531.9 L841.8 1532.6 L848.9 1532.5 L853.8 1532.6 L859.4 1531.8 L865.8 1533.1 L871.2 1531.9 L876.8 1529.2 L881.0 1526.0 L885.0 1523.3 L890.3 1521.0 L895.8 1519.2 L899.5 1516.3 L905.4 1514.8 L912.0 1513.6 L918.0 1514.3 L923.0 1513.5 L929.1 1513.4 L933.0 1512.6 L939.6 1511.4 L944.9 1513.3 L950.5 1513.1 L956.3 1514.2 L961.6 1516.4 L969.3 1518.3 L973.8 1518.3 L978.2 1519.1 L985.1 1519.1 L988.2 1520.1 L994.9 1519.7 L1000.2 1519.5 L1003.8 1520.0 L1008.5 1521.1 L1015.4 1520.5 L1021.2 1522.0 L1025.1 1521.7 L1029.3 1521.9 L1034.7 1519.0 L1040.3 1519.3 L1046.3 1517.7 L1051.9 1516.5 L1056.7 1516.1 L1060.2 1514.4 L1066.6 1514.6 L1071.0 1513.6 L1076.4 1511.4 L1081.1 1511.0 L1087.9 1511.8 L1092.8 1510.2 L1100.2 1510.8 L1103.9 1510.6 L1110.6 1511.4' fill='none' stroke='#6f6f6f' stroke-width='1.8' opacity='1' stroke-linejoin='round' stroke-linecap='round'/><path d='M761.8 1579.8 L762.2 1584.6 L763.7 1592.4 L764.9 1597.3 L767.3 1602.2 L768.5 1609.3 L768.6 1614.0 L774.0 1619.3 L776.1 1623.6 L782.2 1626.4 L785.7 1631.1 L791.0 1633.0 L794.4 1637.0 L798.8 1639.3 L804.3 1640.8 L808.9 1644.1 L813.2 1644.7 L817.7 1648.3 L821.4 1650.3 L826.1 1652.1 L830.2 1655.1 L835.8 1653.1 L841.2 1652.0 L844.4 1652.2 L851.3 1651.5 L856.5 1651.5 L860.3 1649.6 L865.5 1648.7 L869.7 1647.1 L876.1 1646.5 L881.2 1646.6 L885.9 1645.6 L890.3 1644.4 L896.1 1643.1 L900.9 1641.1 L905.4 1641.4 L911.9 1640.8 L915.7 1639.4 L920.5 1638.8 L927.4 1638.4 L932.6 1635.5 L936.7 1635.6 L941.9 1634.6 L948.6 1634.0 L953.5 1632.4 L958.1 1631.1 L964.3 1630.3 L969.9 1629.0 L973.8 1627.7 L978.9 1627.4 L984.3 1625.5 L989.1 1623.6 L994.5 1623.1 L999.1 1622.2 L1006.3 1621.9 L1011.8 1619.6 L1014.7 1618.4 L1020.5 1617.4 L1025.7 1616.7 L1031.7 1615.1 L1038.1 1614.6 L1042.2 1614.0 L1046.2 1613.5 L1051.9 1612.0 L1057.7 1611.4 L1062.5 1610.9 L1069.2 1610.8 L1073.5 1610.1 L1078.6 1609.9 L1082.0 1608.7 L1088.3 1607.3 L1093.5 1607.2 L1098.3 1605.8 L1104.4 1604.8 L1109.8 1605.8 L1116.0 1605.0 L1121.5 1602.8 L1126.1 1600.9 L1133.5 1599.9 L1138.0 1600.3' fill='none' stroke='#7a7a7a' stroke-width='1.4' opacity='0.85' stroke-linejoin='round' stroke-linecap='round'/><path d='M324.0 1545.6 L329.8 1547.1 L333.9 1546.4 L339.0 1547.5 L343.8 1548.6 L350.2 1548.4 L355.3 1548.8 L359.3 1551.0 L365.7 1550.7 L369.9 1552.8 L375.3 1552.5 L380.7 1550.5 L386.0 1549.2 L389.1 1546.5 L396.1 1543.4 L400.9 1543.8 L403.7 1539.9 L409.5 1538.8 L413.6 1536.9 L417.9 1534.3 L422.8 1532.0 L427.4 1527.9 L433.6 1525.0 L437.4 1523.6 L442.0 1520.2 L446.1 1519.1 L451.0 1517.6 L456.4 1512.8 L460.8 1511.4 L466.3 1510.5 L471.5 1509.8 L477.6 1510.2 L482.4 1509.5 L488.7 1508.8 L495.0 1508.0' fill='none' stroke='#7a7a7a' stroke-width='1.3' opacity='0.8' stroke-linejoin='round' stroke-linecap='round'/><path d='M1103.8 1463.5 L1105.4 1468.2 L1107.2 1472.7 L1106.4 1479.4 L1107.3 1484.9 L1109.8 1489.7 L1110.6 1494.3 L1112.3 1499.3 L1113.1 1506.0 L1114.8 1512.5 L1115.3 1518.3 L1116.0 1523.3 L1117.5 1528.5 L1115.5 1534.3 L1114.9 1539.6 L1113.7 1543.4 L1112.5 1549.7 L1112.7 1553.4 L1110.3 1558.9 L1109.4 1565.6 L1109.3 1570.4 L1107.0 1575.4 L1107.2 1579.8 L1106.3 1584.5 L1104.3 1589.4 L1104.7 1596.1 L1104.2 1601.7 L1101.0 1607.1 L1101.4 1612.0 L1099.9 1616.0 L1099.1 1620.8 L1097.7 1626.0 L1096.2 1631.8 L1095.9 1636.5 L1094.3 1641.8 L1093.5 1648.2 L1092.1 1654.3 L1092.0 1658.7 L1089.6 1664.4 L1087.6 1669.6 L1086.6 1673.1 L1087.3 1679.2 L1084.3 1683.9 L1083.8 1689.0 L1083.2 1694.9 L1080.7 1700.7 L1080.8 1703.8 L1079.8 1709.9 L1077.9 1713.8 L1076.4 1720.0' fill='none' stroke='#7a7a7a' stroke-width='1.4' opacity='0.8' stroke-linejoin='round' stroke-linecap='round'/><path d='M864.4 1422.5 L865.1 1426.7 L865.3 1433.4 L867.9 1438.1 L869.1 1441.9 L869.1 1447.2 L869.4 1454.0 L869.6 1459.5 L871.2 1463.5 L871.6 1469.7 L874.7 1473.2 L876.4 1479.9 L878.3 1485.5 L877.9 1490.7 L879.7 1495.3 L882.5 1500.7 L883.9 1506.8 L884.9 1511.4 L883.2 1516.1 L881.0 1520.6 L879.9 1526.7 L880.7 1532.8 L879.0 1537.5 L877.7 1542.2 L874.8 1548.3 L873.1 1552.3 L873.1 1557.0 L871.2 1562.7 L866.1 1565.6 L862.7 1566.5 L856.8 1569.3 L851.3 1573.7 L847.4 1574.5 L842.1 1578.2 L837.0 1579.8 L835.7 1586.6 L834.7 1589.9 L833.3 1596.9 L832.3 1602.7 L832.5 1608.6 L830.2 1614.0' fill='none' stroke='#7a7a7a' stroke-width='1.3' opacity='0.8' stroke-linejoin='round' stroke-linecap='round'/><path d='M631.8 1538.8 L636.3 1536.8 L642.1 1535.5 L648.2 1534.9 L654.8 1533.1 L659.7 1531.9 L666.0 1531.9 L669.7 1530.6 L677.0 1529.5 L680.9 1526.7 L685.7 1527.0 L689.8 1523.7 L694.2 1523.0 L700.2 1521.7 L705.3 1520.8 L712.0 1517.7 L716.4 1515.7 L723.4 1514.1 L727.6 1511.4' fill='none' stroke='#7a7a7a' stroke-width='1.2' opacity='0.8' stroke-linejoin='round' stroke-linecap='round'/><path d='M560.0 1272.0 L563.6 1275.5 L568.5 1276.2 L572.9 1280.0 L579.6 1282.6 L584.2 1285.9 L587.9 1286.4 L593.6 1290.4 L597.6 1292.5 L601.0 1296.9 L604.5 1302.2 L608.9 1308.0 L611.9 1310.8 L614.7 1316.5 L620.3 1317.7 L624.8 1319.6 L630.3 1322.3 L637.4 1325.8 L642.1 1326.7 L645.8 1332.4 L648.8 1337.5 L652.3 1343.8 L655.9 1346.4 L660.2 1350.3 L666.0 1354.1 L668.1 1360.4 L669.4 1367.8 L673.6 1370.9 L678.5 1371.7 L682.0 1375.0 L685.8 1377.6 L690.4 1380.9 L694.9 1382.0 L700.2 1384.9' fill='none' stroke='#727272' stroke-width='2.8' opacity='1' stroke-linejoin='round' stroke-linecap='round'/><path d='M823.4 1415.6 L828.2 1410.7 L833.6 1405.4 L834.9 1398.9 L837.5 1395.0 L837.4 1389.1 L840.0 1383.1 L841.9 1377.9 L841.6 1374.1 L843.9 1367.8 L849.4 1365.8 L856.7 1367.1 L862.1 1365.7 L867.8 1364.3 L867.6 1357.6 L868.6 1353.0 L870.7 1345.3 L871.2 1340.4 L871.3 1334.7 L871.4 1330.2 L871.8 1324.1 L873.1 1320.8 L872.5 1313.5 L872.7 1309.1 L874.4 1304.5 L874.7 1299.4' fill='none' stroke='#727272' stroke-width='2.8' opacity='1' stroke-linejoin='round' stroke-linecap='round'/><path d='M700.2 1384.9 L702.7 1390.5 L705.6 1393.4 L706.9 1399.9 L709.4 1405.1 L710.5 1408.8 L715.6 1409.9 L721.7 1412.9 L727.6 1412.9 L734.4 1415.6 L741.2 1416.5 L745.2 1417.2 L751.0 1418.8 L756.4 1420.4 L761.8 1422.5 L765.0 1417.9 L768.8 1414.0 L773.1 1410.3 L775.5 1405.2 L778.9 1402.0 L785.8 1402.1 L792.1 1402.5 L796.7 1403.5 L802.8 1405.4 L807.4 1407.6 L811.9 1409.2 L818.2 1412.0 L823.4 1415.6' fill='none' stroke='#a292ab' stroke-width='2.8' opacity='1' stroke-linejoin='round' stroke-linecap='round'/><path d='M669.4 1371.2 L668.8 1375.6 L667.1 1380.3 L668.2 1387.1 L666.4 1392.4 L665.6 1395.5 L666.0 1402.0 L664.7 1407.5 L660.7 1413.0 L658.6 1418.2 L657.8 1422.9 L654.7 1427.2 L652.3 1432.7 L647.6 1430.3 L643.1 1425.0 L637.5 1421.8 L631.8 1419.1 L625.9 1418.8 L620.8 1417.7 L615.4 1415.7 L611.3 1415.6 L609.6 1420.2 L606.6 1423.9 L604.5 1429.3 L604.4 1435.3 L603.1 1440.6 L601.0 1445.2 L599.9 1448.9 L599.3 1454.8 L600.5 1460.3 L598.4 1464.7 L597.6 1470.4 L594.0 1474.3 L588.3 1474.9 L582.1 1478.8 L577.4 1482.9 L573.1 1485.1 L567.2 1487.4 L563.4 1490.9 L558.5 1493.3 L552.4 1494.2 L549.4 1497.8 L543.3 1498.0 L539.0 1500.6 L533.2 1502.6 L529.2 1504.6 L524.7 1508.2 L520.1 1511.8 L517.0 1512.9 L512.7 1517.2 L508.2 1520.6 L502.9 1522.2 L498.5 1524.6 L495.0 1528.5 L490.8 1530.8 L486.6 1534.9 L481.3 1538.8 L483.0 1545.7 L483.6 1551.1 L484.7 1555.9 L489.1 1561.2 L491.6 1564.8 L495.6 1569.3 L497.7 1574.4 L502.1 1578.3 L505.6 1582.8 L508.7 1586.7 L510.0 1591.6 L510.4 1597.3 L512.9 1604.3 L512.9 1608.1 L515.5 1614.0 L520.1 1619.7 L522.4 1624.3 L519.1 1627.7 L513.5 1632.8 L510.5 1637.4 L505.3 1641.4 L511.4 1644.3 L517.2 1645.8 L523.5 1646.6 L529.2 1648.2 L530.9 1654.1 L531.0 1660.0 L532.9 1665.0 L533.1 1670.5 L534.4 1676.9 L536.1 1682.4 L534.0 1687.3 L532.4 1690.7 L530.6 1697.6 L527.2 1702.3 L525.8 1706.4 L522.4 1703.9 L519.5 1700.6 L513.9 1696.9 L509.4 1693.9 L506.7 1690.2 L502.1 1687.1 L499.9 1681.7 L494.4 1680.1 L491.6 1675.6 L488.6 1672.0 L485.1 1666.9 L480.2 1664.4 L479.1 1659.8 L474.5 1655.1 L468.9 1655.0 L462.6 1652.2 L457.8 1652.6 L454.3 1651.6 L446.9 1652.3 L441.9 1651.6 L437.3 1650.0 L432.1 1648.7 L426.6 1648.2 L420.5 1648.1 L414.9 1645.0 L408.8 1646.0 L403.3 1643.4 L397.3 1643.7 L392.4 1641.4 L389.9 1648.1 L389.1 1653.4 L386.7 1657.3 L384.2 1663.4 L382.1 1668.7 L376.3 1669.6 L371.9 1670.0 L365.1 1669.6 L362.0 1669.2 L355.3 1668.8 L351.1 1668.0 L345.3 1668.6 L338.8 1668.3 L335.7 1669.8 L330.4 1668.9 L324.0 1668.7' fill='none' stroke='#a292ab' stroke-width='3' opacity='1' stroke-linejoin='round' stroke-linecap='round'/><path d='M905.4 1316.5 L911.1 1314.8 L914.7 1311.6 L921.0 1308.9 L926.0 1306.2 L930.9 1306.5 L936.7 1308.0 L942.8 1309.9 L948.5 1313.2 L951.8 1314.1 L958.9 1314.1 L962.7 1316.2 L969.6 1319.3 L973.8 1319.9 L978.7 1321.6 L984.0 1325.0 L989.2 1328.0 L993.1 1328.8 L998.5 1331.3 L1002.1 1334.8 L1008.0 1337.0 L1011.7 1340.1 L1019.1 1341.8 L1021.8 1342.3 L1027.1 1344.1 L1032.7 1346.7 L1036.4 1349.8 L1042.2 1350.7 L1047.8 1353.4 L1052.0 1354.9 L1057.1 1357.5 L1061.2 1360.4 L1065.7 1363.2 L1072.6 1366.2 L1076.4 1367.8 L1081.7 1369.5 L1087.3 1368.6 L1092.6 1370.2 L1099.1 1370.3 L1105.6 1370.0 L1110.6 1371.2 L1115.2 1370.9 L1120.6 1369.1 L1128.4 1366.7 L1133.6 1365.5 L1138.0 1364.3' fill='none' stroke='#a292ab' stroke-width='2.8' opacity='1' stroke-linejoin='round' stroke-linecap='round'/><path d='M666.0 1463.5 L671.0 1466.5 L675.6 1467.2 L681.4 1470.3 L684.8 1471.0 L691.6 1473.4 L695.8 1475.4 L700.2 1477.2 L704.8 1479.6 L709.9 1482.4 L714.7 1483.3 L719.8 1486.3 L725.0 1485.8 L728.8 1490.1 L734.4 1490.9 L738.9 1493.9 L743.0 1495.3 L749.1 1496.7 L751.7 1501.0 L756.5 1502.7 L761.8 1504.6 L766.4 1507.5 L772.0 1508.4 L777.0 1509.5 L781.2 1512.4 L785.4 1515.3 L792.3 1515.1 L796.0 1518.3 L800.0 1522.4 L806.2 1524.3 L809.5 1527.4 L816.1 1532.0 L819.9 1535.4 L824.8 1534.8 L832.1 1533.8 L835.8 1532.8 L843.1 1532.3 L847.2 1532.4 L854.1 1531.9 L859.1 1530.5 L863.5 1528.4 L870.1 1526.6 L873.8 1523.0 L877.5 1521.6 L883.9 1520.2 L888.3 1518.3 L893.5 1517.1 L899.1 1516.1 L904.6 1514.9 L909.5 1513.5 L914.2 1512.8 L919.5 1513.3 L924.1 1511.5 L929.2 1511.2 L933.6 1509.7 L939.6 1508.0 L945.0 1507.1 L949.5 1505.2 L953.4 1503.3 L958.6 1501.3 L963.4 1498.8 L969.2 1496.6 L972.9 1496.1 L978.7 1494.5 L983.4 1493.9 L988.7 1492.2 L992.8 1489.7 L999.4 1487.1 L1003.9 1484.6 L1008.0 1484.1 L1014.2 1483.6 L1017.2 1483.5 L1023.0 1481.0 L1029.8 1481.1 L1034.1 1480.2 L1039.0 1479.1 L1043.1 1480.0 L1049.1 1479.2 L1055.0 1478.3 L1059.3 1477.2 L1064.8 1477.7 L1069.0 1481.0 L1074.9 1481.8 L1080.2 1482.6 L1084.6 1484.9 L1089.3 1484.5 L1096.0 1487.4 L1101.1 1487.7 L1106.4 1490.2 L1110.6 1490.9' fill='none' stroke='#9fc3e6' stroke-width='1.6' opacity='0.9' stroke-linejoin='round' stroke-linecap='round'/><path d='M693 1334 L720 1330 L740 1342 L735 1355 L705 1356 L692 1346 Z' fill='#d7c0a8' opacity='0.5'/><path d='M910 1386 L940 1380 L955 1392 L945 1405 L915 1405 L908 1395 Z' fill='#d7c0a8' opacity='0.5'/><text x='741' y='1492.7' font-size='14' fill='#333' font-style='normal' font-family='Liberation Sans' stroke='#f4f5ec' stroke-width='2.5' paint-order='stroke'>Linz</text><text x='1102.7' y='1518' font-size='14' fill='#333' font-style='normal' font-family='Liberation Sans' stroke='#f4f5ec' stroke-width='2.5' paint-order='stroke'>Wien</text><text x='745.8' y='1315.7' font-size='10.5' fill='#333' font-style='normal' font-family='Liberation Sans' stroke='#f4f5ec' stroke-width='2.5' paint-order='stroke'>&#268;esk&#233; Bud&#283;jovice</text><text x='514.5' y='1624.9' font-size='11' fill='#333' font-style='normal' font-family='Liberation Sans' stroke='#f4f5ec' stroke-width='2.5' paint-order='stroke'>Salzburg</text><text x='367' y='1302' font-size='11' fill='#444' font-style='normal' font-family='Liberation Sans' stroke='#f4f5ec' stroke-width='2.5' paint-order='stroke'>sburg</text><text x='449.6' y='1389.8' font-size='10.5' fill='#9a7fa8' font-style='normal' font-family='Liberation Sans' stroke='#f4f5ec' stroke-width='2.5' paint-order='stroke'>Niederbayern</text><text x='322' y='1507' font-size='10.5' fill='#9a7fa8' font-style='normal' font-family='Liberation Sans' stroke='#f4f5ec' stroke-width='2.5' paint-order='stroke'>Oberbayern</text><text x='599.3' y='1540.7' font-size='11.5' fill='#9a7fa8' font-style='italic' font-family='Liberation Sans' stroke='#f4f5ec' stroke-width='2.5' paint-order='stroke'>Ober&#246;sterreich</text><text x='938.9' y='1512' font-size='11.5' fill='#9a7fa8' font-style='italic' font-family='Liberation Sans' stroke='#f4f5ec' stroke-width='2.5' paint-order='stroke'>Nieder&#246;sterreich</text><text x='555.3' y='1703' font-size='11.5' fill='#9a7fa8' font-style='italic' font-family='Liberation Sans' stroke='#f4f5ec' stroke-width='2.5' paint-order='stroke'>Salzburg</text><text x='858' y='1292.7' font-size='10.5' fill='#a88cb4' font-style='normal' font-family='Liberation Sans' stroke='#f4f5ec' stroke-width='2.5' paint-order='stroke'>okres Jind&#345;ich&#367;v</text><text x='881' y='1303.6' font-size='10.5' fill='#a88cb4' font-style='normal' font-family='Liberation Sans' stroke='#f4f5ec' stroke-width='2.5' paint-order='stroke'>Hradec</text><text x='786' y='1277.7' font-size='10.5' fill='#a88cb4' font-style='italic' font-family='Liberation Sans' stroke='#f4f5ec' stroke-width='2.5' paint-order='stroke'>Jiho&#269;esk&#253;</text><text x='798' y='1290.7' font-size='10.5' fill='#a88cb4' font-style='italic' font-family='Liberation Sans' stroke='#f4f5ec' stroke-width='2.5' paint-order='stroke'>kraj</text><text x='1109' y='1707' font-size='11' fill='#9a7fa8' font-style='italic' font-family='Liberation Sans' stroke='#f4f5ec' stroke-width='2.5' paint-order='stroke'>Burge</text><text x='485' y='1313.7' font-size='12' fill='#3f9a3f' font-style='italic' font-family='Liberation Sans' stroke='#f4f5ec' stroke-width='2.5' paint-order='stroke'>Naturpark</text><text x='481' y='1327.2' font-size='12' fill='#3f9a3f' font-style='italic' font-family='Liberation Sans' stroke='#f4f5ec' stroke-width='2.5' paint-order='stroke'>Bayerischer</text><text x='498' y='1341' font-size='12' fill='#3f9a3f' font-style='italic' font-family='Liberation Sans' stroke='#f4f5ec' stroke-width='2.5' paint-order='stroke'>Wald</text><text x='623' y='1313.7' font-size='10.5' fill='#3f9a3f' font-style='italic' font-family='Liberation Sans' stroke='#f4f5ec' stroke-width='2.5' paint-order='stroke'>N&#225;rodn&#237;</text><text x='612' y='1327' font-size='10.5' fill='#3f9a3f' font-style='italic' font-family='Liberation Sans' stroke='#f4f5ec' stroke-width='2.5' paint-order='stroke'>park &#352;umava</text><text x='818' y='1644' font-size='10.5' fill='#3f9a3f' font-style='italic' font-family='Liberation Sans' stroke='#f4f5ec' stroke-width='2.5' paint-order='stroke'>Naturpark</text><text x='819' y='1655.6' font-size='10.5' fill='#3f9a3f' font-style='italic' font-family='Liberation Sans' stroke='#f4f5ec' stroke-width='2.5' paint-order='stroke'>Steirische</text><text x='813' y='1667' font-size='10.5' fill='#3f9a3f' font-style='italic' font-family='Liberation Sans' stroke='#f4f5ec' stroke-width='2.5' paint-order='stroke'>Eisenwurzen</text><path d='M806 1544 L794.5 1524.3 A15 15 0 1 1 817.5 1524.3 Z' fill='#8a6bd6'/><circle cx='806' cy='1514.8' r='7.3' fill='#fff'/><path d='M801.5 1511.8 L805.5 1512.8 L805.5 1519.3 Q802 1517.8 801.5 1511.8 Z' fill='#a64ee6'/><path d='M806.3 1512.3 L810.5 1510.8 Q810.5 1517.3 806.3 1518.6 Z' fill='#4449d8'/><path d='M791.8 1548 L780.3 1528.5 A15 15 0 1 1 803.3 1528.5 Z' fill='#8a6bd6'/><circle cx='791.8' cy='1519' r='7.3' fill='#fff'/><path d='M787.3 1516 L791.3 1517 L791.3 1523.5 Q787.8 1522 787.3 1516 Z' fill='#a64ee6'/><path d='M792.0999999999999 1516.5 L796.3 1515 Q796.3 1521.5 792.0999999999999 1522.8 Z' fill='#4449d8'/><path d='M830.6 1566.6 L819.1 1547.3 A15 15 0 1 1 842.1 1547.3 Z' fill='#8a6bd6'/><circle cx='830.6' cy='1537.8' r='7.3' fill='#fff'/><path d='M826.1 1534.8 L830.1 1535.8 L830.1 1542.3 Q826.6 1540.8 826.1 1534.8 Z' fill='#a64ee6'/><path d='M830.9 1535.3 L835.1 1533.8 Q835.1 1540.3 830.9 1541.6 Z' fill='#4449d8'/></g></svg><div style='position:absolute;left:336.6px;top:1284.9px;width:27.3px;height:57.3px;border:1.5px solid #c8c8c8;border-radius:4px;background:#fff'></div><div style='position:absolute;left:338px;top:1314.5px;width:27px;height:1px;background:#ddd'></div><svg style='position:absolute;left:336px;top:1284px' width='32' height='62' viewBox='0 0 32 62'><path d='M16 9.5 V20.5 M10.5 15 H21.5' stroke='#333' stroke-width='2.4'/><path d='M10.5 46 H21.5' stroke='#333' stroke-width='2.4'/></svg>
<div class=t style='left:1202.0px;top:1124.1px;font-size:25.14px;line-height:25.14px;font-weight:700;color:#555;letter-spacing:0.00px;font-family:"Liberation Sans", sans-serif;-webkit-text-stroke:0.4px currentColor;transform:scaleX(1.0659);transform-origin:0 0;'>Platzwahl Analyse</div>
<div class=t style='left:1202.3px;top:1163.6px;font-size:18.14px;line-height:18.14px;font-weight:400;color:#6e6e6e;letter-spacing:0.00px;font-family:"Liberation Sans", sans-serif;-webkit-text-stroke:0.4px currentColor;transform:scaleX(1.1023);transform-origin:0 0;'>Jeder Platz zeigt die Buchungsh&auml;ufigkeit per Zahl und Farbton &ndash; von hell (selten) bis dunkel (h&auml;ufig).</div>
<div style='position:absolute;left:1214.1px;top:1219.9px;width:51px;height:51.6px;border:1px solid #cfcfcf;border-radius:11px 11px 0 0;background:#f5f5f5'></div>
<div style='position:absolute;left:1214.1px;top:1274.1px;width:51px;height:52.6px;border:1px solid #cfcfcf;border-radius:0 0 11px 11px;background:#f5f5f5'></div>
<div style='position:absolute;left:1214.1px;top:1342.8px;width:51.6px;height:51.6px;border:1px solid #cfcfcf;border-radius:50%;background:#f5f5f5'></div>
<svg style='position:absolute;left:1227.7px;top:1233.8px;overflow:visible' width='24' height='24' viewBox='0 0 24 24' fill='none' stroke='#2179f4' stroke-width='1.7' stroke-linecap='round' stroke-linejoin='round' ><circle cx='10' cy='10' r='9.6'/><path d='M10 5.5 V14.5 M5.5 10 H14.5'/><path d='M17 17 L22.5 22.5' stroke-width='3'/></svg>
<svg style='position:absolute;left:1227.7px;top:1288.8px;overflow:visible' width='24' height='24' viewBox='0 0 24 24' fill='none' stroke='#2179f4' stroke-width='1.7' stroke-linecap='round' stroke-linejoin='round' ><circle cx='10' cy='10' r='9.6'/><path d='M5.5 10 H14.5'/><path d='M17 17 L22.5 22.5' stroke-width='3'/></svg>
<svg style='position:absolute;left:1225.5px;top:1350.5px;overflow:visible' width='30' height='34' viewBox='0 0 30 34' fill='none' stroke='#2179f4' stroke-width='1.9' stroke-linecap='round' stroke-linejoin='round' ><path d='M27.5 6 L19.5 14 M19.5 8 V14 H25.5'/><path d='M2 31 L10.5 22.5 M4.5 22.5 H10.5 V28.5'/></svg>
<div style='position:absolute;left:1746.4px;top:1213.2px;width:341.8px;height:36.4px;border-radius:9px;background:#1c1f3b'></div>
<div class=t style='left:1886.0px;top:1219.6px;font-size:22.84px;line-height:22.84px;font-weight:700;color:#fff;letter-spacing:0.00px;font-family:"Liberation Sans", sans-serif;-webkit-text-stroke:0.4px currentColor;transform:scaleX(0.8632);transform-origin:0 0;'>B&uuml;hne</div>
<svg style='position:absolute;left:0;top:0' width='2626' height='1720' viewBox='0 0 2626 1720'><rect x='1629.00' y='1298.00' width='44.75' height='44.70' fill='#215d96'/><g transform='translate(1629.00,1298.00)'><path d='M10.6 7.5 H34.9 V31 H10.6 Z' fill='#fff'/><path d='M10.6 15 V10.9 Q10.6 7.5 14 7.5 H31.5 Q34.9 7.5 34.9 10.9 V15' fill='none' stroke='#5ec64d' stroke-width='3.4'/><path d='M6.6 17.7 Q6.6 14 10.3 14 Q14 14 14 17.7 V26.5 Q14 30 17.5 30 H28.1 Q31.6 30 31.6 26.5 V17.7 Q31.6 14 35.2 14 Q38.8 14 38.8 17.7 V33.5 Q38.8 38.3 34 38.3 H11.4 Q6.6 38.3 6.6 33.5 Z' fill='#fff' stroke='#5ec64d' stroke-width='3.4' stroke-linejoin='round'/><text x='22.7' y='24.3' font-size='7.2' font-weight='bold' text-anchor='middle' fill='#111' font-family='Liberation Sans'>3</text></g><rect x='1673.35' y='1298.00' width='44.75' height='44.70' fill='#215d96'/><g transform='translate(1673.35,1298.00)'><path d='M10.6 7.5 H34.9 V31 H10.6 Z' fill='#fff'/><path d='M10.6 15 V10.9 Q10.6 7.5 14 7.5 H31.5 Q34.9 7.5 34.9 10.9 V15' fill='none' stroke='#5ec64d' stroke-width='3.4'/><path d='M6.6 17.7 Q6.6 14 10.3 14 Q14 14 14 17.7 V26.5 Q14 30 17.5 30 H28.1 Q31.6 30 31.6 26.5 V17.7 Q31.6 14 35.2 14 Q38.8 14 38.8 17.7 V33.5 Q38.8 38.3 34 38.3 H11.4 Q6.6 38.3 6.6 33.5 Z' fill='#fff' stroke='#5ec64d' stroke-width='3.4' stroke-linejoin='round'/><text x='22.7' y='24.3' font-size='7.2' font-weight='bold' text-anchor='middle' fill='#111' font-family='Liberation Sans'>3</text></g><rect x='1717.70' y='1298.00' width='44.75' height='44.70' fill='#215d96'/><g transform='translate(1717.70,1298.00)'><path d='M10.6 7.5 H34.9 V31 H10.6 Z' fill='#fff'/><path d='M10.6 15 V10.9 Q10.6 7.5 14 7.5 H31.5 Q34.9 7.5 34.9 10.9 V15' fill='none' stroke='#5ec64d' stroke-width='3.4'/><path d='M6.6 17.7 Q6.6 14 10.3 14 Q14 14 14 17.7 V26.5 Q14 30 17.5 30 H28.1 Q31.6 30 31.6 26.5 V17.7 Q31.6 14 35.2 14 Q38.8 14 38.8 17.7 V33.5 Q38.8 38.3 34 38.3 H11.4 Q6.6 38.3 6.6 33.5 Z' fill='#fff' stroke='#5ec64d' stroke-width='3.4' stroke-linejoin='round'/><text x='22.7' y='24.3' font-size='7.2' font-weight='bold' text-anchor='middle' fill='#111' font-family='Liberation Sans'>3</text></g><rect x='1762.05' y='1298.00' width='44.75' height='44.70' fill='#215d96'/><g transform='translate(1762.05,1298.00)'><path d='M10.6 7.5 H34.9 V31 H10.6 Z' fill='#fff'/><path d='M10.6 15 V10.9 Q10.6 7.5 14 7.5 H31.5 Q34.9 7.5 34.9 10.9 V15' fill='none' stroke='#5ec64d' stroke-width='3.4'/><path d='M6.6 17.7 Q6.6 14 10.3 14 Q14 14 14 17.7 V26.5 Q14 30 17.5 30 H28.1 Q31.6 30 31.6 26.5 V17.7 Q31.6 14 35.2 14 Q38.8 14 38.8 17.7 V33.5 Q38.8 38.3 34 38.3 H11.4 Q6.6 38.3 6.6 33.5 Z' fill='#fff' stroke='#5ec64d' stroke-width='3.4' stroke-linejoin='round'/><text x='22.7' y='24.3' font-size='7.2' font-weight='bold' text-anchor='middle' fill='#111' font-family='Liberation Sans'>3</text></g><rect x='1806.40' y='1298.00' width='44.75' height='44.70' fill='#215d96'/><g transform='translate(1806.40,1298.00)'><path d='M10.6 7.5 H34.9 V31 H10.6 Z' fill='#fff'/><path d='M10.6 15 V10.9 Q10.6 7.5 14 7.5 H31.5 Q34.9 7.5 34.9 10.9 V15' fill='none' stroke='#5ec64d' stroke-width='3.4'/><path d='M6.6 17.7 Q6.6 14 10.3 14 Q14 14 14 17.7 V26.5 Q14 30 17.5 30 H28.1 Q31.6 30 31.6 26.5 V17.7 Q31.6 14 35.2 14 Q38.8 14 38.8 17.7 V33.5 Q38.8 38.3 34 38.3 H11.4 Q6.6 38.3 6.6 33.5 Z' fill='#fff' stroke='#5ec64d' stroke-width='3.4' stroke-linejoin='round'/><text x='22.7' y='24.3' font-size='7.2' font-weight='bold' text-anchor='middle' fill='#111' font-family='Liberation Sans'>3</text></g><rect x='1850.75' y='1298.00' width='44.75' height='44.70' fill='#215d96'/><g transform='translate(1850.75,1298.00)'><path d='M10.6 7.5 H34.9 V31 H10.6 Z' fill='#fff'/><path d='M10.6 15 V10.9 Q10.6 7.5 14 7.5 H31.5 Q34.9 7.5 34.9 10.9 V15' fill='none' stroke='#5ec64d' stroke-width='3.4'/><path d='M6.6 17.7 Q6.6 14 10.3 14 Q14 14 14 17.7 V26.5 Q14 30 17.5 30 H28.1 Q31.6 30 31.6 26.5 V17.7 Q31.6 14 35.2 14 Q38.8 14 38.8 17.7 V33.5 Q38.8 38.3 34 38.3 H11.4 Q6.6 38.3 6.6 33.5 Z' fill='#fff' stroke='#5ec64d' stroke-width='3.4' stroke-linejoin='round'/><text x='22.7' y='24.3' font-size='7.2' font-weight='bold' text-anchor='middle' fill='#111' font-family='Liberation Sans'>3</text></g><rect x='1895.10' y='1298.00' width='44.75' height='44.70' fill='#5b8bbc'/><g transform='translate(1895.10,1298.00)'><path d='M10.6 7.5 H34.9 V31 H10.6 Z' fill='#fff'/><path d='M10.6 15 V10.9 Q10.6 7.5 14 7.5 H31.5 Q34.9 7.5 34.9 10.9 V15' fill='none' stroke='#5ec64d' stroke-width='3.4'/><path d='M6.6 17.7 Q6.6 14 10.3 14 Q14 14 14 17.7 V26.5 Q14 30 17.5 30 H28.1 Q31.6 30 31.6 26.5 V17.7 Q31.6 14 35.2 14 Q38.8 14 38.8 17.7 V33.5 Q38.8 38.3 34 38.3 H11.4 Q6.6 38.3 6.6 33.5 Z' fill='#fff' stroke='#5ec64d' stroke-width='3.4' stroke-linejoin='round'/><text x='22.7' y='24.3' font-size='7.2' font-weight='bold' text-anchor='middle' fill='#111' font-family='Liberation Sans'>2</text></g><rect x='1939.45' y='1298.00' width='44.75' height='44.70' fill='#9cbfdc'/><g transform='translate(1939.45,1298.00)'><path d='M10.6 7.5 H34.9 V31 H10.6 Z' fill='#fff'/><path d='M10.6 15 V10.9 Q10.6 7.5 14 7.5 H31.5 Q34.9 7.5 34.9 10.9 V15' fill='none' stroke='#5ec64d' stroke-width='3.4'/><path d='M6.6 17.7 Q6.6 14 10.3 14 Q14 14 14 17.7 V26.5 Q14 30 17.5 30 H28.1 Q31.6 30 31.6 26.5 V17.7 Q31.6 14 35.2 14 Q38.8 14 38.8 17.7 V33.5 Q38.8 38.3 34 38.3 H11.4 Q6.6 38.3 6.6 33.5 Z' fill='#fff' stroke='#5ec64d' stroke-width='3.4' stroke-linejoin='round'/><text x='22.7' y='24.3' font-size='7.2' font-weight='bold' text-anchor='middle' fill='#111' font-family='Liberation Sans'>1</text></g><rect x='1983.80' y='1298.00' width='44.75' height='44.70' fill='#9cbfdc'/><g transform='translate(1983.80,1298.00)'><path d='M10.6 7.5 H34.9 V31 H10.6 Z' fill='#fff'/><path d='M10.6 15 V10.9 Q10.6 7.5 14 7.5 H31.5 Q34.9 7.5 34.9 10.9 V15' fill='none' stroke='#5ec64d' stroke-width='3.4'/><path d='M6.6 17.7 Q6.6 14 10.3 14 Q14 14 14 17.7 V26.5 Q14 30 17.5 30 H28.1 Q31.6 30 31.6 26.5 V17.7 Q31.6 14 35.2 14 Q38.8 14 38.8 17.7 V33.5 Q38.8 38.3 34 38.3 H11.4 Q6.6 38.3 6.6 33.5 Z' fill='#fff' stroke='#5ec64d' stroke-width='3.4' stroke-linejoin='round'/><text x='22.7' y='24.3' font-size='7.2' font-weight='bold' text-anchor='middle' fill='#111' font-family='Liberation Sans'>1</text></g><rect x='2028.15' y='1298.00' width='44.75' height='44.70' fill='#9cbfdc'/><g transform='translate(2028.15,1298.00)'><path d='M10.6 7.5 H34.9 V31 H10.6 Z' fill='#fff'/><path d='M10.6 15 V10.9 Q10.6 7.5 14 7.5 H31.5 Q34.9 7.5 34.9 10.9 V15' fill='none' stroke='#5ec64d' stroke-width='3.4'/><path d='M6.6 17.7 Q6.6 14 10.3 14 Q14 14 14 17.7 V26.5 Q14 30 17.5 30 H28.1 Q31.6 30 31.6 26.5 V17.7 Q31.6 14 35.2 14 Q38.8 14 38.8 17.7 V33.5 Q38.8 38.3 34 38.3 H11.4 Q6.6 38.3 6.6 33.5 Z' fill='#fff' stroke='#5ec64d' stroke-width='3.4' stroke-linejoin='round'/><text x='22.7' y='24.3' font-size='7.2' font-weight='bold' text-anchor='middle' fill='#111' font-family='Liberation Sans'>1</text></g><rect x='2072.50' y='1298.00' width='44.75' height='44.70' fill='#9cbfdc'/><g transform='translate(2072.50,1298.00)'><path d='M10.6 7.5 H34.9 V31 H10.6 Z' fill='#fff'/><path d='M10.6 15 V10.9 Q10.6 7.5 14 7.5 H31.5 Q34.9 7.5 34.9 10.9 V15' fill='none' stroke='#5ec64d' stroke-width='3.4'/><path d='M6.6 17.7 Q6.6 14 10.3 14 Q14 14 14 17.7 V26.5 Q14 30 17.5 30 H28.1 Q31.6 30 31.6 26.5 V17.7 Q31.6 14 35.2 14 Q38.8 14 38.8 17.7 V33.5 Q38.8 38.3 34 38.3 H11.4 Q6.6 38.3 6.6 33.5 Z' fill='#fff' stroke='#5ec64d' stroke-width='3.4' stroke-linejoin='round'/><text x='22.7' y='24.3' font-size='7.2' font-weight='bold' text-anchor='middle' fill='#111' font-family='Liberation Sans'>1</text></g><rect x='2116.85' y='1298.00' width='44.75' height='44.70' fill='#9cbfdc'/><g transform='translate(2116.85,1298.00)'><path d='M10.6 7.5 H34.9 V31 H10.6 Z' fill='#fff'/><path d='M10.6 15 V10.9 Q10.6 7.5 14 7.5 H31.5 Q34.9 7.5 34.9 10.9 V15' fill='none' stroke='#5ec64d' stroke-width='3.4'/><path d='M6.6 17.7 Q6.6 14 10.3 14 Q14 14 14 17.7 V26.5 Q14 30 17.5 30 H28.1 Q31.6 30 31.6 26.5 V17.7 Q31.6 14 35.2 14 Q38.8 14 38.8 17.7 V33.5 Q38.8 38.3 34 38.3 H11.4 Q6.6 38.3 6.6 33.5 Z' fill='#fff' stroke='#5ec64d' stroke-width='3.4' stroke-linejoin='round'/><text x='22.7' y='24.3' font-size='7.2' font-weight='bold' text-anchor='middle' fill='#111' font-family='Liberation Sans'>1</text></g><rect x='2161.20' y='1298.00' width='44.75' height='44.70' fill='#9cbfdc'/><g transform='translate(2161.20,1298.00)'><path d='M10.6 7.5 H34.9 V31 H10.6 Z' fill='#fff'/><path d='M10.6 15 V10.9 Q10.6 7.5 14 7.5 H31.5 Q34.9 7.5 34.9 10.9 V15' fill='none' stroke='#5ec64d' stroke-width='3.4'/><path d='M6.6 17.7 Q6.6 14 10.3 14 Q14 14 14 17.7 V26.5 Q14 30 17.5 30 H28.1 Q31.6 30 31.6 26.5 V17.7 Q31.6 14 35.2 14 Q38.8 14 38.8 17.7 V33.5 Q38.8 38.3 34 38.3 H11.4 Q6.6 38.3 6.6 33.5 Z' fill='#fff' stroke='#5ec64d' stroke-width='3.4' stroke-linejoin='round'/><text x='22.7' y='24.3' font-size='7.2' font-weight='bold' text-anchor='middle' fill='#111' font-family='Liberation Sans'>1</text></g><line x1='1673.35' y1='1298.0' x2='1673.35' y2='1342.3' stroke='rgba(255,255,255,0.18)' stroke-width='0.8'/><line x1='1717.70' y1='1298.0' x2='1717.70' y2='1342.3' stroke='rgba(255,255,255,0.18)' stroke-width='0.8'/><line x1='1762.05' y1='1298.0' x2='1762.05' y2='1342.3' stroke='rgba(255,255,255,0.18)' stroke-width='0.8'/><line x1='1806.40' y1='1298.0' x2='1806.40' y2='1342.3' stroke='rgba(255,255,255,0.18)' stroke-width='0.8'/><line x1='1850.75' y1='1298.0' x2='1850.75' y2='1342.3' stroke='rgba(255,255,255,0.18)' stroke-width='0.8'/><line x1='1895.10' y1='1298.0' x2='1895.10' y2='1342.3' stroke='rgba(255,255,255,0.18)' stroke-width='0.8'/><line x1='1939.45' y1='1298.0' x2='1939.45' y2='1342.3' stroke='rgba(255,255,255,0.18)' stroke-width='0.8'/><line x1='1983.80' y1='1298.0' x2='1983.80' y2='1342.3' stroke='rgba(255,255,255,0.18)' stroke-width='0.8'/><line x1='2028.15' y1='1298.0' x2='2028.15' y2='1342.3' stroke='rgba(255,255,255,0.18)' stroke-width='0.8'/><line x1='2072.50' y1='1298.0' x2='2072.50' y2='1342.3' stroke='rgba(255,255,255,0.18)' stroke-width='0.8'/><line x1='2116.85' y1='1298.0' x2='2116.85' y2='1342.3' stroke='rgba(255,255,255,0.18)' stroke-width='0.8'/><line x1='2161.20' y1='1298.0' x2='2161.20' y2='1342.3' stroke='rgba(255,255,255,0.18)' stroke-width='0.8'/><rect x='1629.00' y='1342.30' width='44.75' height='44.70' fill='#9cbfdc'/><g transform='translate(1629.00,1342.30)'><path d='M10.6 7.5 H34.9 V31 H10.6 Z' fill='#fff'/><path d='M10.6 15 V10.9 Q10.6 7.5 14 7.5 H31.5 Q34.9 7.5 34.9 10.9 V15' fill='none' stroke='#5ec64d' stroke-width='3.4'/><path d='M6.6 17.7 Q6.6 14 10.3 14 Q14 14 14 17.7 V26.5 Q14 30 17.5 30 H28.1 Q31.6 30 31.6 26.5 V17.7 Q31.6 14 35.2 14 Q38.8 14 38.8 17.7 V33.5 Q38.8 38.3 34 38.3 H11.4 Q6.6 38.3 6.6 33.5 Z' fill='#fff' stroke='#5ec64d' stroke-width='3.4' stroke-linejoin='round'/><text x='22.7' y='24.3' font-size='7.2' font-weight='bold' text-anchor='middle' fill='#111' font-family='Liberation Sans'>1</text></g><rect x='1673.35' y='1342.30' width='44.75' height='44.70' fill='#9cbfdc'/><g transform='translate(1673.35,1342.30)'><path d='M10.6 7.5 H34.9 V31 H10.6 Z' fill='#fff'/><path d='M10.6 15 V10.9 Q10.6 7.5 14 7.5 H31.5 Q34.9 7.5 34.9 10.9 V15' fill='none' stroke='#5ec64d' stroke-width='3.4'/><path d='M6.6 17.7 Q6.6 14 10.3 14 Q14 14 14 17.7 V26.5 Q14 30 17.5 30 H28.1 Q31.6 30 31.6 26.5 V17.7 Q31.6 14 35.2 14 Q38.8 14 38.8 17.7 V33.5 Q38.8 38.3 34 38.3 H11.4 Q6.6 38.3 6.6 33.5 Z' fill='#fff' stroke='#5ec64d' stroke-width='3.4' stroke-linejoin='round'/><text x='22.7' y='24.3' font-size='7.2' font-weight='bold' text-anchor='middle' fill='#111' font-family='Liberation Sans'>1</text></g><rect x='1717.70' y='1342.30' width='44.75' height='44.70' fill='#9cbfdc'/><g transform='translate(1717.70,1342.30)'><path d='M10.6 7.5 H34.9 V31 H10.6 Z' fill='#fff'/><path d='M10.6 15 V10.9 Q10.6 7.5 14 7.5 H31.5 Q34.9 7.5 34.9 10.9 V15' fill='none' stroke='#5ec64d' stroke-width='3.4'/><path d='M6.6 17.7 Q6.6 14 10.3 14 Q14 14 14 17.7 V26.5 Q14 30 17.5 30 H28.1 Q31.6 30 31.6 26.5 V17.7 Q31.6 14 35.2 14 Q38.8 14 38.8 17.7 V33.5 Q38.8 38.3 34 38.3 H11.4 Q6.6 38.3 6.6 33.5 Z' fill='#fff' stroke='#5ec64d' stroke-width='3.4' stroke-linejoin='round'/><text x='22.7' y='24.3' font-size='7.2' font-weight='bold' text-anchor='middle' fill='#111' font-family='Liberation Sans'>1</text></g><rect x='1762.05' y='1342.30' width='44.75' height='44.70' fill='#9cbfdc'/><g transform='translate(1762.05,1342.30)'><path d='M10.6 7.5 H34.9 V31 H10.6 Z' fill='#fff'/><path d='M10.6 15 V10.9 Q10.6 7.5 14 7.5 H31.5 Q34.9 7.5 34.9 10.9 V15' fill='none' stroke='#5ec64d' stroke-width='3.4'/><path d='M6.6 17.7 Q6.6 14 10.3 14 Q14 14 14 17.7 V26.5 Q14 30 17.5 30 H28.1 Q31.6 30 31.6 26.5 V17.7 Q31.6 14 35.2 14 Q38.8 14 38.8 17.7 V33.5 Q38.8 38.3 34 38.3 H11.4 Q6.6 38.3 6.6 33.5 Z' fill='#fff' stroke='#5ec64d' stroke-width='3.4' stroke-linejoin='round'/><text x='22.7' y='24.3' font-size='7.2' font-weight='bold' text-anchor='middle' fill='#111' font-family='Liberation Sans'>1</text></g><rect x='1806.40' y='1342.30' width='44.75' height='44.70' fill='#9cbfdc'/><g transform='translate(1806.40,1342.30)'><path d='M10.6 7.5 H34.9 V31 H10.6 Z' fill='#fff'/><path d='M10.6 15 V10.9 Q10.6 7.5 14 7.5 H31.5 Q34.9 7.5 34.9 10.9 V15' fill='none' stroke='#5ec64d' stroke-width='3.4'/><path d='M6.6 17.7 Q6.6 14 10.3 14 Q14 14 14 17.7 V26.5 Q14 30 17.5 30 H28.1 Q31.6 30 31.6 26.5 V17.7 Q31.6 14 35.2 14 Q38.8 14 38.8 17.7 V33.5 Q38.8 38.3 34 38.3 H11.4 Q6.6 38.3 6.6 33.5 Z' fill='#fff' stroke='#5ec64d' stroke-width='3.4' stroke-linejoin='round'/><text x='22.7' y='24.3' font-size='7.2' font-weight='bold' text-anchor='middle' fill='#111' font-family='Liberation Sans'>1</text></g><rect x='1850.75' y='1342.30' width='44.75' height='44.70' fill='#9cbfdc'/><g transform='translate(1850.75,1342.30)'><path d='M10.6 7.5 H34.9 V31 H10.6 Z' fill='#fff'/><path d='M10.6 15 V10.9 Q10.6 7.5 14 7.5 H31.5 Q34.9 7.5 34.9 10.9 V15' fill='none' stroke='#5ec64d' stroke-width='3.4'/><path d='M6.6 17.7 Q6.6 14 10.3 14 Q14 14 14 17.7 V26.5 Q14 30 17.5 30 H28.1 Q31.6 30 31.6 26.5 V17.7 Q31.6 14 35.2 14 Q38.8 14 38.8 17.7 V33.5 Q38.8 38.3 34 38.3 H11.4 Q6.6 38.3 6.6 33.5 Z' fill='#fff' stroke='#5ec64d' stroke-width='3.4' stroke-linejoin='round'/><text x='22.7' y='24.3' font-size='7.2' font-weight='bold' text-anchor='middle' fill='#111' font-family='Liberation Sans'>1</text></g><rect x='1895.10' y='1342.30' width='44.75' height='44.70' fill='#9cbfdc'/><g transform='translate(1895.10,1342.30)'><path d='M10.6 7.5 H34.9 V31 H10.6 Z' fill='#fff'/><path d='M10.6 15 V10.9 Q10.6 7.5 14 7.5 H31.5 Q34.9 7.5 34.9 10.9 V15' fill='none' stroke='#5ec64d' stroke-width='3.4'/><path d='M6.6 17.7 Q6.6 14 10.3 14 Q14 14 14 17.7 V26.5 Q14 30 17.5 30 H28.1 Q31.6 30 31.6 26.5 V17.7 Q31.6 14 35.2 14 Q38.8 14 38.8 17.7 V33.5 Q38.8 38.3 34 38.3 H11.4 Q6.6 38.3 6.6 33.5 Z' fill='#fff' stroke='#5ec64d' stroke-width='3.4' stroke-linejoin='round'/><text x='22.7' y='24.3' font-size='7.2' font-weight='bold' text-anchor='middle' fill='#111' font-family='Liberation Sans'>1</text></g><rect x='1939.45' y='1342.30' width='44.75' height='44.70' fill='#9cbfdc'/><g transform='translate(1939.45,1342.30)'><path d='M10.6 7.5 H34.9 V31 H10.6 Z' fill='#fff'/><path d='M10.6 15 V10.9 Q10.6 7.5 14 7.5 H31.5 Q34.9 7.5 34.9 10.9 V15' fill='none' stroke='#5ec64d' stroke-width='3.4'/><path d='M6.6 17.7 Q6.6 14 10.3 14 Q14 14 14 17.7 V26.5 Q14 30 17.5 30 H28.1 Q31.6 30 31.6 26.5 V17.7 Q31.6 14 35.2 14 Q38.8 14 38.8 17.7 V33.5 Q38.8 38.3 34 38.3 H11.4 Q6.6 38.3 6.6 33.5 Z' fill='#fff' stroke='#5ec64d' stroke-width='3.4' stroke-linejoin='round'/><text x='22.7' y='24.3' font-size='7.2' font-weight='bold' text-anchor='middle' fill='#111' font-family='Liberation Sans'>1</text></g><rect x='1983.80' y='1342.30' width='44.75' height='44.70' fill='#9cbfdc'/><g transform='translate(1983.80,1342.30)'><path d='M10.6 7.5 H34.9 V31 H10.6 Z' fill='#fff'/><path d='M10.6 15 V10.9 Q10.6 7.5 14 7.5 H31.5 Q34.9 7.5 34.9 10.9 V15' fill='none' stroke='#5ec64d' stroke-width='3.4'/><path d='M6.6 17.7 Q6.6 14 10.3 14 Q14 14 14 17.7 V26.5 Q14 30 17.5 30 H28.1 Q31.6 30 31.6 26.5 V17.7 Q31.6 14 35.2 14 Q38.8 14 38.8 17.7 V33.5 Q38.8 38.3 34 38.3 H11.4 Q6.6 38.3 6.6 33.5 Z' fill='#fff' stroke='#5ec64d' stroke-width='3.4' stroke-linejoin='round'/><text x='22.7' y='24.3' font-size='7.2' font-weight='bold' text-anchor='middle' fill='#111' font-family='Liberation Sans'>1</text></g><rect x='2028.15' y='1342.30' width='44.75' height='44.70' fill='#9cbfdc'/><g transform='translate(2028.15,1342.30)'><path d='M10.6 7.5 H34.9 V31 H10.6 Z' fill='#fff'/><path d='M10.6 15 V10.9 Q10.6 7.5 14 7.5 H31.5 Q34.9 7.5 34.9 10.9 V15' fill='none' stroke='#5ec64d' stroke-width='3.4'/><path d='M6.6 17.7 Q6.6 14 10.3 14 Q14 14 14 17.7 V26.5 Q14 30 17.5 30 H28.1 Q31.6 30 31.6 26.5 V17.7 Q31.6 14 35.2 14 Q38.8 14 38.8 17.7 V33.5 Q38.8 38.3 34 38.3 H11.4 Q6.6 38.3 6.6 33.5 Z' fill='#fff' stroke='#5ec64d' stroke-width='3.4' stroke-linejoin='round'/><text x='22.7' y='24.3' font-size='7.2' font-weight='bold' text-anchor='middle' fill='#111' font-family='Liberation Sans'>1</text></g><rect x='2072.50' y='1342.30' width='44.75' height='44.70' fill='#9cbfdc'/><g transform='translate(2072.50,1342.30)'><path d='M10.6 7.5 H34.9 V31 H10.6 Z' fill='#fff'/><path d='M10.6 15 V10.9 Q10.6 7.5 14 7.5 H31.5 Q34.9 7.5 34.9 10.9 V15' fill='none' stroke='#5ec64d' stroke-width='3.4'/><path d='M6.6 17.7 Q6.6 14 10.3 14 Q14 14 14 17.7 V26.5 Q14 30 17.5 30 H28.1 Q31.6 30 31.6 26.5 V17.7 Q31.6 14 35.2 14 Q38.8 14 38.8 17.7 V33.5 Q38.8 38.3 34 38.3 H11.4 Q6.6 38.3 6.6 33.5 Z' fill='#fff' stroke='#5ec64d' stroke-width='3.4' stroke-linejoin='round'/><text x='22.7' y='24.3' font-size='7.2' font-weight='bold' text-anchor='middle' fill='#111' font-family='Liberation Sans'>1</text></g><rect x='2116.85' y='1342.30' width='44.75' height='44.70' fill='#9cbfdc'/><g transform='translate(2116.85,1342.30)'><path d='M10.6 7.5 H34.9 V31 H10.6 Z' fill='#fff'/><path d='M10.6 15 V10.9 Q10.6 7.5 14 7.5 H31.5 Q34.9 7.5 34.9 10.9 V15' fill='none' stroke='#5ec64d' stroke-width='3.4'/><path d='M6.6 17.7 Q6.6 14 10.3 14 Q14 14 14 17.7 V26.5 Q14 30 17.5 30 H28.1 Q31.6 30 31.6 26.5 V17.7 Q31.6 14 35.2 14 Q38.8 14 38.8 17.7 V33.5 Q38.8 38.3 34 38.3 H11.4 Q6.6 38.3 6.6 33.5 Z' fill='#fff' stroke='#5ec64d' stroke-width='3.4' stroke-linejoin='round'/><text x='22.7' y='24.3' font-size='7.2' font-weight='bold' text-anchor='middle' fill='#111' font-family='Liberation Sans'>1</text></g><rect x='2161.20' y='1342.30' width='44.75' height='44.70' fill='#ededed'/><g transform='translate(2161.20,1342.30)'><path d='M10.6 7.5 H34.9 V31 H10.6 Z' fill='#fff'/><path d='M10.6 15 V10.9 Q10.6 7.5 14 7.5 H31.5 Q34.9 7.5 34.9 10.9 V15' fill='none' stroke='#5ec64d' stroke-width='3.4'/><path d='M6.6 17.7 Q6.6 14 10.3 14 Q14 14 14 17.7 V26.5 Q14 30 17.5 30 H28.1 Q31.6 30 31.6 26.5 V17.7 Q31.6 14 35.2 14 Q38.8 14 38.8 17.7 V33.5 Q38.8 38.3 34 38.3 H11.4 Q6.6 38.3 6.6 33.5 Z' fill='#fff' stroke='#5ec64d' stroke-width='3.4' stroke-linejoin='round'/><text x='22.7' y='24.3' font-size='7.2' font-weight='bold' text-anchor='middle' fill='#111' font-family='Liberation Sans'>0</text></g><line x1='1673.35' y1='1342.3' x2='1673.35' y2='1386.6' stroke='rgba(255,255,255,0.18)' stroke-width='0.8'/><line x1='1717.70' y1='1342.3' x2='1717.70' y2='1386.6' stroke='rgba(255,255,255,0.18)' stroke-width='0.8'/><line x1='1762.05' y1='1342.3' x2='1762.05' y2='1386.6' stroke='rgba(255,255,255,0.18)' stroke-width='0.8'/><line x1='1806.40' y1='1342.3' x2='1806.40' y2='1386.6' stroke='rgba(255,255,255,0.18)' stroke-width='0.8'/><line x1='1850.75' y1='1342.3' x2='1850.75' y2='1386.6' stroke='rgba(255,255,255,0.18)' stroke-width='0.8'/><line x1='1895.10' y1='1342.3' x2='1895.10' y2='1386.6' stroke='rgba(255,255,255,0.18)' stroke-width='0.8'/><line x1='1939.45' y1='1342.3' x2='1939.45' y2='1386.6' stroke='rgba(255,255,255,0.18)' stroke-width='0.8'/><line x1='1983.80' y1='1342.3' x2='1983.80' y2='1386.6' stroke='rgba(255,255,255,0.18)' stroke-width='0.8'/><line x1='2028.15' y1='1342.3' x2='2028.15' y2='1386.6' stroke='rgba(255,255,255,0.18)' stroke-width='0.8'/><line x1='2072.50' y1='1342.3' x2='2072.50' y2='1386.6' stroke='rgba(255,255,255,0.18)' stroke-width='0.8'/><line x1='2116.85' y1='1342.3' x2='2116.85' y2='1386.6' stroke='rgba(255,255,255,0.18)' stroke-width='0.8'/><line x1='2161.20' y1='1342.3' x2='2161.20' y2='1386.6' stroke='rgba(255,255,255,0.18)' stroke-width='0.8'/><rect x='1629.00' y='1386.60' width='44.75' height='44.70' fill='#ededed'/><g transform='translate(1629.00,1386.60)'><path d='M10.6 7.5 H34.9 V31 H10.6 Z' fill='#fff'/><path d='M10.6 15 V10.9 Q10.6 7.5 14 7.5 H31.5 Q34.9 7.5 34.9 10.9 V15' fill='none' stroke='#5ec64d' stroke-width='3.4'/><path d='M6.6 17.7 Q6.6 14 10.3 14 Q14 14 14 17.7 V26.5 Q14 30 17.5 30 H28.1 Q31.6 30 31.6 26.5 V17.7 Q31.6 14 35.2 14 Q38.8 14 38.8 17.7 V33.5 Q38.8 38.3 34 38.3 H11.4 Q6.6 38.3 6.6 33.5 Z' fill='#fff' stroke='#5ec64d' stroke-width='3.4' stroke-linejoin='round'/><text x='22.7' y='24.3' font-size='7.2' font-weight='bold' text-anchor='middle' fill='#111' font-family='Liberation Sans'>0</text></g><rect x='1673.35' y='1386.60' width='44.75' height='44.70' fill='#ededed'/><g transform='translate(1673.35,1386.60)'><path d='M10.6 7.5 H34.9 V31 H10.6 Z' fill='#fff'/><path d='M10.6 15 V10.9 Q10.6 7.5 14 7.5 H31.5 Q34.9 7.5 34.9 10.9 V15' fill='none' stroke='#5ec64d' stroke-width='3.4'/><path d='M6.6 17.7 Q6.6 14 10.3 14 Q14 14 14 17.7 V26.5 Q14 30 17.5 30 H28.1 Q31.6 30 31.6 26.5 V17.7 Q31.6 14 35.2 14 Q38.8 14 38.8 17.7 V33.5 Q38.8 38.3 34 38.3 H11.4 Q6.6 38.3 6.6 33.5 Z' fill='#fff' stroke='#5ec64d' stroke-width='3.4' stroke-linejoin='round'/><text x='22.7' y='24.3' font-size='7.2' font-weight='bold' text-anchor='middle' fill='#111' font-family='Liberation Sans'>0</text></g><rect x='1717.70' y='1386.60' width='44.75' height='44.70' fill='#ededed'/><g transform='translate(1717.70,1386.60)'><path d='M10.6 7.5 H34.9 V31 H10.6 Z' fill='#fff'/><path d='M10.6 15 V10.9 Q10.6 7.5 14 7.5 H31.5 Q34.9 7.5 34.9 10.9 V15' fill='none' stroke='#5ec64d' stroke-width='3.4'/><path d='M6.6 17.7 Q6.6 14 10.3 14 Q14 14 14 17.7 V26.5 Q14 30 17.5 30 H28.1 Q31.6 30 31.6 26.5 V17.7 Q31.6 14 35.2 14 Q38.8 14 38.8 17.7 V33.5 Q38.8 38.3 34 38.3 H11.4 Q6.6 38.3 6.6 33.5 Z' fill='#fff' stroke='#5ec64d' stroke-width='3.4' stroke-linejoin='round'/><text x='22.7' y='24.3' font-size='7.2' font-weight='bold' text-anchor='middle' fill='#111' font-family='Liberation Sans'>0</text></g><rect x='1762.05' y='1386.60' width='44.75' height='44.70' fill='#ededed'/><g transform='translate(1762.05,1386.60)'><path d='M10.6 7.5 H34.9 V31 H10.6 Z' fill='#fff'/><path d='M10.6 15 V10.9 Q10.6 7.5 14 7.5 H31.5 Q34.9 7.5 34.9 10.9 V15' fill='none' stroke='#5ec64d' stroke-width='3.4'/><path d='M6.6 17.7 Q6.6 14 10.3 14 Q14 14 14 17.7 V26.5 Q14 30 17.5 30 H28.1 Q31.6 30 31.6 26.5 V17.7 Q31.6 14 35.2 14 Q38.8 14 38.8 17.7 V33.5 Q38.8 38.3 34 38.3 H11.4 Q6.6 38.3 6.6 33.5 Z' fill='#fff' stroke='#5ec64d' stroke-width='3.4' stroke-linejoin='round'/><text x='22.7' y='24.3' font-size='7.2' font-weight='bold' text-anchor='middle' fill='#111' font-family='Liberation Sans'>0</text></g><rect x='1806.40' y='1386.60' width='44.75' height='44.70' fill='#ededed'/><g transform='translate(1806.40,1386.60)'><path d='M10.6 7.5 H34.9 V31 H10.6 Z' fill='#fff'/><path d='M10.6 15 V10.9 Q10.6 7.5 14 7.5 H31.5 Q34.9 7.5 34.9 10.9 V15' fill='none' stroke='#5ec64d' stroke-width='3.4'/><path d='M6.6 17.7 Q6.6 14 10.3 14 Q14 14 14 17.7 V26.5 Q14 30 17.5 30 H28.1 Q31.6 30 31.6 26.5 V17.7 Q31.6 14 35.2 14 Q38.8 14 38.8 17.7 V33.5 Q38.8 38.3 34 38.3 H11.4 Q6.6 38.3 6.6 33.5 Z' fill='#fff' stroke='#5ec64d' stroke-width='3.4' stroke-linejoin='round'/><text x='22.7' y='24.3' font-size='7.2' font-weight='bold' text-anchor='middle' fill='#111' font-family='Liberation Sans'>0</text></g><rect x='1850.75' y='1386.60' width='44.75' height='44.70' fill='#ededed'/><g transform='translate(1850.75,1386.60)'><path d='M10.6 7.5 H34.9 V31 H10.6 Z' fill='#fff'/><path d='M10.6 15 V10.9 Q10.6 7.5 14 7.5 H31.5 Q34.9 7.5 34.9 10.9 V15' fill='none' stroke='#5ec64d' stroke-width='3.4'/><path d='M6.6 17.7 Q6.6 14 10.3 14 Q14 14 14 17.7 V26.5 Q14 30 17.5 30 H28.1 Q31.6 30 31.6 26.5 V17.7 Q31.6 14 35.2 14 Q38.8 14 38.8 17.7 V33.5 Q38.8 38.3 34 38.3 H11.4 Q6.6 38.3 6.6 33.5 Z' fill='#fff' stroke='#5ec64d' stroke-width='3.4' stroke-linejoin='round'/><text x='22.7' y='24.3' font-size='7.2' font-weight='bold' text-anchor='middle' fill='#111' font-family='Liberation Sans'>0</text></g><rect x='1895.10' y='1386.60' width='44.75' height='44.70' fill='#ededed'/><g transform='translate(1895.10,1386.60)'><path d='M10.6 7.5 H34.9 V31 H10.6 Z' fill='#fff'/><path d='M10.6 15 V10.9 Q10.6 7.5 14 7.5 H31.5 Q34.9 7.5 34.9 10.9 V15' fill='none' stroke='#5ec64d' stroke-width='3.4'/><path d='M6.6 17.7 Q6.6 14 10.3 14 Q14 14 14 17.7 V26.5 Q14 30 17.5 30 H28.1 Q31.6 30 31.6 26.5 V17.7 Q31.6 14 35.2 14 Q38.8 14 38.8 17.7 V33.5 Q38.8 38.3 34 38.3 H11.4 Q6.6 38.3 6.6 33.5 Z' fill='#fff' stroke='#5ec64d' stroke-width='3.4' stroke-linejoin='round'/><text x='22.7' y='24.3' font-size='7.2' font-weight='bold' text-anchor='middle' fill='#111' font-family='Liberation Sans'>0</text></g><rect x='1939.45' y='1386.60' width='44.75' height='44.70' fill='#ededed'/><g transform='translate(1939.45,1386.60)'><path d='M10.6 7.5 H34.9 V31 H10.6 Z' fill='#fff'/><path d='M10.6 15 V10.9 Q10.6 7.5 14 7.5 H31.5 Q34.9 7.5 34.9 10.9 V15' fill='none' stroke='#5ec64d' stroke-width='3.4'/><path d='M6.6 17.7 Q6.6 14 10.3 14 Q14 14 14 17.7 V26.5 Q14 30 17.5 30 H28.1 Q31.6 30 31.6 26.5 V17.7 Q31.6 14 35.2 14 Q38.8 14 38.8 17.7 V33.5 Q38.8 38.3 34 38.3 H11.4 Q6.6 38.3 6.6 33.5 Z' fill='#fff' stroke='#5ec64d' stroke-width='3.4' stroke-linejoin='round'/><text x='22.7' y='24.3' font-size='7.2' font-weight='bold' text-anchor='middle' fill='#111' font-family='Liberation Sans'>0</text></g><rect x='1983.80' y='1386.60' width='44.75' height='44.70' fill='#ededed'/><g transform='translate(1983.80,1386.60)'><path d='M10.6 7.5 H34.9 V31 H10.6 Z' fill='#fff'/><path d='M10.6 15 V10.9 Q10.6 7.5 14 7.5 H31.5 Q34.9 7.5 34.9 10.9 V15' fill='none' stroke='#5ec64d' stroke-width='3.4'/><path d='M6.6 17.7 Q6.6 14 10.3 14 Q14 14 14 17.7 V26.5 Q14 30 17.5 30 H28.1 Q31.6 30 31.6 26.5 V17.7 Q31.6 14 35.2 14 Q38.8 14 38.8 17.7 V33.5 Q38.8 38.3 34 38.3 H11.4 Q6.6 38.3 6.6 33.5 Z' fill='#fff' stroke='#5ec64d' stroke-width='3.4' stroke-linejoin='round'/><text x='22.7' y='24.3' font-size='7.2' font-weight='bold' text-anchor='middle' fill='#111' font-family='Liberation Sans'>0</text></g><rect x='2028.15' y='1386.60' width='44.75' height='44.70' fill='#ededed'/><g transform='translate(2028.15,1386.60)'><path d='M10.6 7.5 H34.9 V31 H10.6 Z' fill='#fff'/><path d='M10.6 15 V10.9 Q10.6 7.5 14 7.5 H31.5 Q34.9 7.5 34.9 10.9 V15' fill='none' stroke='#5ec64d' stroke-width='3.4'/><path d='M6.6 17.7 Q6.6 14 10.3 14 Q14 14 14 17.7 V26.5 Q14 30 17.5 30 H28.1 Q31.6 30 31.6 26.5 V17.7 Q31.6 14 35.2 14 Q38.8 14 38.8 17.7 V33.5 Q38.8 38.3 34 38.3 H11.4 Q6.6 38.3 6.6 33.5 Z' fill='#fff' stroke='#5ec64d' stroke-width='3.4' stroke-linejoin='round'/><text x='22.7' y='24.3' font-size='7.2' font-weight='bold' text-anchor='middle' fill='#111' font-family='Liberation Sans'>0</text></g><rect x='2072.50' y='1386.60' width='44.75' height='44.70' fill='#ededed'/><g transform='translate(2072.50,1386.60)'><path d='M10.6 7.5 H34.9 V31 H10.6 Z' fill='#fff'/><path d='M10.6 15 V10.9 Q10.6 7.5 14 7.5 H31.5 Q34.9 7.5 34.9 10.9 V15' fill='none' stroke='#5ec64d' stroke-width='3.4'/><path d='M6.6 17.7 Q6.6 14 10.3 14 Q14 14 14 17.7 V26.5 Q14 30 17.5 30 H28.1 Q31.6 30 31.6 26.5 V17.7 Q31.6 14 35.2 14 Q38.8 14 38.8 17.7 V33.5 Q38.8 38.3 34 38.3 H11.4 Q6.6 38.3 6.6 33.5 Z' fill='#fff' stroke='#5ec64d' stroke-width='3.4' stroke-linejoin='round'/><text x='22.7' y='24.3' font-size='7.2' font-weight='bold' text-anchor='middle' fill='#111' font-family='Liberation Sans'>0</text></g><rect x='2116.85' y='1386.60' width='44.75' height='44.70' fill='#ededed'/><g transform='translate(2116.85,1386.60)'><path d='M10.6 7.5 H34.9 V31 H10.6 Z' fill='#fff'/><path d='M10.6 15 V10.9 Q10.6 7.5 14 7.5 H31.5 Q34.9 7.5 34.9 10.9 V15' fill='none' stroke='#5ec64d' stroke-width='3.4'/><path d='M6.6 17.7 Q6.6 14 10.3 14 Q14 14 14 17.7 V26.5 Q14 30 17.5 30 H28.1 Q31.6 30 31.6 26.5 V17.7 Q31.6 14 35.2 14 Q38.8 14 38.8 17.7 V33.5 Q38.8 38.3 34 38.3 H11.4 Q6.6 38.3 6.6 33.5 Z' fill='#fff' stroke='#5ec64d' stroke-width='3.4' stroke-linejoin='round'/><text x='22.7' y='24.3' font-size='7.2' font-weight='bold' text-anchor='middle' fill='#111' font-family='Liberation Sans'>0</text></g><rect x='2161.20' y='1386.60' width='44.75' height='44.70' fill='#ededed'/><g transform='translate(2161.20,1386.60)'><path d='M10.6 7.5 H34.9 V31 H10.6 Z' fill='#fff'/><path d='M10.6 15 V10.9 Q10.6 7.5 14 7.5 H31.5 Q34.9 7.5 34.9 10.9 V15' fill='none' stroke='#5ec64d' stroke-width='3.4'/><path d='M6.6 17.7 Q6.6 14 10.3 14 Q14 14 14 17.7 V26.5 Q14 30 17.5 30 H28.1 Q31.6 30 31.6 26.5 V17.7 Q31.6 14 35.2 14 Q38.8 14 38.8 17.7 V33.5 Q38.8 38.3 34 38.3 H11.4 Q6.6 38.3 6.6 33.5 Z' fill='#fff' stroke='#5ec64d' stroke-width='3.4' stroke-linejoin='round'/><text x='22.7' y='24.3' font-size='7.2' font-weight='bold' text-anchor='middle' fill='#111' font-family='Liberation Sans'>0</text></g><line x1='1673.35' y1='1386.6' x2='1673.35' y2='1430.8999999999999' stroke='rgba(255,255,255,0.18)' stroke-width='0.8'/><line x1='1717.70' y1='1386.6' x2='1717.70' y2='1430.8999999999999' stroke='rgba(255,255,255,0.18)' stroke-width='0.8'/><line x1='1762.05' y1='1386.6' x2='1762.05' y2='1430.8999999999999' stroke='rgba(255,255,255,0.18)' stroke-width='0.8'/><line x1='1806.40' y1='1386.6' x2='1806.40' y2='1430.8999999999999' stroke='rgba(255,255,255,0.18)' stroke-width='0.8'/><line x1='1850.75' y1='1386.6' x2='1850.75' y2='1430.8999999999999' stroke='rgba(255,255,255,0.18)' stroke-width='0.8'/><line x1='1895.10' y1='1386.6' x2='1895.10' y2='1430.8999999999999' stroke='rgba(255,255,255,0.18)' stroke-width='0.8'/><line x1='1939.45' y1='1386.6' x2='1939.45' y2='1430.8999999999999' stroke='rgba(255,255,255,0.18)' stroke-width='0.8'/><line x1='1983.80' y1='1386.6' x2='1983.80' y2='1430.8999999999999' stroke='rgba(255,255,255,0.18)' stroke-width='0.8'/><line x1='2028.15' y1='1386.6' x2='2028.15' y2='1430.8999999999999' stroke='rgba(255,255,255,0.18)' stroke-width='0.8'/><line x1='2072.50' y1='1386.6' x2='2072.50' y2='1430.8999999999999' stroke='rgba(255,255,255,0.18)' stroke-width='0.8'/><line x1='2116.85' y1='1386.6' x2='2116.85' y2='1430.8999999999999' stroke='rgba(255,255,255,0.18)' stroke-width='0.8'/><line x1='2161.20' y1='1386.6' x2='2161.20' y2='1430.8999999999999' stroke='rgba(255,255,255,0.18)' stroke-width='0.8'/><rect x='1629.00' y='1430.90' width='44.75' height='44.70' fill='#ededed'/><g transform='translate(1629.00,1430.90)'><path d='M10.6 7.5 H34.9 V31 H10.6 Z' fill='#fff'/><path d='M10.6 15 V10.9 Q10.6 7.5 14 7.5 H31.5 Q34.9 7.5 34.9 10.9 V15' fill='none' stroke='#5ec64d' stroke-width='3.4'/><path d='M6.6 17.7 Q6.6 14 10.3 14 Q14 14 14 17.7 V26.5 Q14 30 17.5 30 H28.1 Q31.6 30 31.6 26.5 V17.7 Q31.6 14 35.2 14 Q38.8 14 38.8 17.7 V33.5 Q38.8 38.3 34 38.3 H11.4 Q6.6 38.3 6.6 33.5 Z' fill='#fff' stroke='#5ec64d' stroke-width='3.4' stroke-linejoin='round'/><text x='22.7' y='24.3' font-size='7.2' font-weight='bold' text-anchor='middle' fill='#111' font-family='Liberation Sans'>0</text></g><rect x='1673.35' y='1430.90' width='44.75' height='44.70' fill='#ededed'/><g transform='translate(1673.35,1430.90)'><path d='M10.6 7.5 H34.9 V31 H10.6 Z' fill='#fff'/><path d='M10.6 15 V10.9 Q10.6 7.5 14 7.5 H31.5 Q34.9 7.5 34.9 10.9 V15' fill='none' stroke='#5ec64d' stroke-width='3.4'/><path d='M6.6 17.7 Q6.6 14 10.3 14 Q14 14 14 17.7 V26.5 Q14 30 17.5 30 H28.1 Q31.6 30 31.6 26.5 V17.7 Q31.6 14 35.2 14 Q38.8 14 38.8 17.7 V33.5 Q38.8 38.3 34 38.3 H11.4 Q6.6 38.3 6.6 33.5 Z' fill='#fff' stroke='#5ec64d' stroke-width='3.4' stroke-linejoin='round'/><text x='22.7' y='24.3' font-size='7.2' font-weight='bold' text-anchor='middle' fill='#111' font-family='Liberation Sans'>0</text></g><rect x='1717.70' y='1430.90' width='44.75' height='44.70' fill='#ededed'/><g transform='translate(1717.70,1430.90)'><path d='M10.6 7.5 H34.9 V31 H10.6 Z' fill='#fff'/><path d='M10.6 15 V10.9 Q10.6 7.5 14 7.5 H31.5 Q34.9 7.5 34.9 10.9 V15' fill='none' stroke='#5ec64d' stroke-width='3.4'/><path d='M6.6 17.7 Q6.6 14 10.3 14 Q14 14 14 17.7 V26.5 Q14 30 17.5 30 H28.1 Q31.6 30 31.6 26.5 V17.7 Q31.6 14 35.2 14 Q38.8 14 38.8 17.7 V33.5 Q38.8 38.3 34 38.3 H11.4 Q6.6 38.3 6.6 33.5 Z' fill='#fff' stroke='#5ec64d' stroke-width='3.4' stroke-linejoin='round'/><text x='22.7' y='24.3' font-size='7.2' font-weight='bold' text-anchor='middle' fill='#111' font-family='Liberation Sans'>0</text></g><rect x='1762.05' y='1430.90' width='44.75' height='44.70' fill='#ededed'/><g transform='translate(1762.05,1430.90)'><path d='M10.6 7.5 H34.9 V31 H10.6 Z' fill='#fff'/><path d='M10.6 15 V10.9 Q10.6 7.5 14 7.5 H31.5 Q34.9 7.5 34.9 10.9 V15' fill='none' stroke='#5ec64d' stroke-width='3.4'/><path d='M6.6 17.7 Q6.6 14 10.3 14 Q14 14 14 17.7 V26.5 Q14 30 17.5 30 H28.1 Q31.6 30 31.6 26.5 V17.7 Q31.6 14 35.2 14 Q38.8 14 38.8 17.7 V33.5 Q38.8 38.3 34 38.3 H11.4 Q6.6 38.3 6.6 33.5 Z' fill='#fff' stroke='#5ec64d' stroke-width='3.4' stroke-linejoin='round'/><text x='22.7' y='24.3' font-size='7.2' font-weight='bold' text-anchor='middle' fill='#111' font-family='Liberation Sans'>0</text></g><rect x='1806.40' y='1430.90' width='44.75' height='44.70' fill='#ededed'/><g transform='translate(1806.40,1430.90)'><path d='M10.6 7.5 H34.9 V31 H10.6 Z' fill='#fff'/><path d='M10.6 15 V10.9 Q10.6 7.5 14 7.5 H31.5 Q34.9 7.5 34.9 10.9 V15' fill='none' stroke='#5ec64d' stroke-width='3.4'/><path d='M6.6 17.7 Q6.6 14 10.3 14 Q14 14 14 17.7 V26.5 Q14 30 17.5 30 H28.1 Q31.6 30 31.6 26.5 V17.7 Q31.6 14 35.2 14 Q38.8 14 38.8 17.7 V33.5 Q38.8 38.3 34 38.3 H11.4 Q6.6 38.3 6.6 33.5 Z' fill='#fff' stroke='#5ec64d' stroke-width='3.4' stroke-linejoin='round'/><text x='22.7' y='24.3' font-size='7.2' font-weight='bold' text-anchor='middle' fill='#111' font-family='Liberation Sans'>0</text></g><rect x='1850.75' y='1430.90' width='44.75' height='44.70' fill='#ededed'/><g transform='translate(1850.75,1430.90)'><path d='M10.6 7.5 H34.9 V31 H10.6 Z' fill='#fff'/><path d='M10.6 15 V10.9 Q10.6 7.5 14 7.5 H31.5 Q34.9 7.5 34.9 10.9 V15' fill='none' stroke='#5ec64d' stroke-width='3.4'/><path d='M6.6 17.7 Q6.6 14 10.3 14 Q14 14 14 17.7 V26.5 Q14 30 17.5 30 H28.1 Q31.6 30 31.6 26.5 V17.7 Q31.6 14 35.2 14 Q38.8 14 38.8 17.7 V33.5 Q38.8 38.3 34 38.3 H11.4 Q6.6 38.3 6.6 33.5 Z' fill='#fff' stroke='#5ec64d' stroke-width='3.4' stroke-linejoin='round'/><text x='22.7' y='24.3' font-size='7.2' font-weight='bold' text-anchor='middle' fill='#111' font-family='Liberation Sans'>0</text></g><rect x='1895.10' y='1430.90' width='44.75' height='44.70' fill='#ededed'/><g transform='translate(1895.10,1430.90)'><path d='M10.6 7.5 H34.9 V31 H10.6 Z' fill='#fff'/><path d='M10.6 15 V10.9 Q10.6 7.5 14 7.5 H31.5 Q34.9 7.5 34.9 10.9 V15' fill='none' stroke='#5ec64d' stroke-width='3.4'/><path d='M6.6 17.7 Q6.6 14 10.3 14 Q14 14 14 17.7 V26.5 Q14 30 17.5 30 H28.1 Q31.6 30 31.6 26.5 V17.7 Q31.6 14 35.2 14 Q38.8 14 38.8 17.7 V33.5 Q38.8 38.3 34 38.3 H11.4 Q6.6 38.3 6.6 33.5 Z' fill='#fff' stroke='#5ec64d' stroke-width='3.4' stroke-linejoin='round'/><text x='22.7' y='24.3' font-size='7.2' font-weight='bold' text-anchor='middle' fill='#111' font-family='Liberation Sans'>0</text></g><rect x='1939.45' y='1430.90' width='44.75' height='44.70' fill='#ededed'/><g transform='translate(1939.45,1430.90)'><path d='M10.6 7.5 H34.9 V31 H10.6 Z' fill='#fff'/><path d='M10.6 15 V10.9 Q10.6 7.5 14 7.5 H31.5 Q34.9 7.5 34.9 10.9 V15' fill='none' stroke='#5ec64d' stroke-width='3.4'/><path d='M6.6 17.7 Q6.6 14 10.3 14 Q14 14 14 17.7 V26.5 Q14 30 17.5 30 H28.1 Q31.6 30 31.6 26.5 V17.7 Q31.6 14 35.2 14 Q38.8 14 38.8 17.7 V33.5 Q38.8 38.3 34 38.3 H11.4 Q6.6 38.3 6.6 33.5 Z' fill='#fff' stroke='#5ec64d' stroke-width='3.4' stroke-linejoin='round'/><text x='22.7' y='24.3' font-size='7.2' font-weight='bold' text-anchor='middle' fill='#111' font-family='Liberation Sans'>0</text></g><rect x='1983.80' y='1430.90' width='44.75' height='44.70' fill='#ededed'/><g transform='translate(1983.80,1430.90)'><path d='M10.6 7.5 H34.9 V31 H10.6 Z' fill='#fff'/><path d='M10.6 15 V10.9 Q10.6 7.5 14 7.5 H31.5 Q34.9 7.5 34.9 10.9 V15' fill='none' stroke='#5ec64d' stroke-width='3.4'/><path d='M6.6 17.7 Q6.6 14 10.3 14 Q14 14 14 17.7 V26.5 Q14 30 17.5 30 H28.1 Q31.6 30 31.6 26.5 V17.7 Q31.6 14 35.2 14 Q38.8 14 38.8 17.7 V33.5 Q38.8 38.3 34 38.3 H11.4 Q6.6 38.3 6.6 33.5 Z' fill='#fff' stroke='#5ec64d' stroke-width='3.4' stroke-linejoin='round'/><text x='22.7' y='24.3' font-size='7.2' font-weight='bold' text-anchor='middle' fill='#111' font-family='Liberation Sans'>0</text></g><rect x='2028.15' y='1430.90' width='44.75' height='44.70' fill='#ededed'/><g transform='translate(2028.15,1430.90)'><path d='M10.6 7.5 H34.9 V31 H10.6 Z' fill='#fff'/><path d='M10.6 15 V10.9 Q10.6 7.5 14 7.5 H31.5 Q34.9 7.5 34.9 10.9 V15' fill='none' stroke='#5ec64d' stroke-width='3.4'/><path d='M6.6 17.7 Q6.6 14 10.3 14 Q14 14 14 17.7 V26.5 Q14 30 17.5 30 H28.1 Q31.6 30 31.6 26.5 V17.7 Q31.6 14 35.2 14 Q38.8 14 38.8 17.7 V33.5 Q38.8 38.3 34 38.3 H11.4 Q6.6 38.3 6.6 33.5 Z' fill='#fff' stroke='#5ec64d' stroke-width='3.4' stroke-linejoin='round'/><text x='22.7' y='24.3' font-size='7.2' font-weight='bold' text-anchor='middle' fill='#111' font-family='Liberation Sans'>0</text></g><rect x='2072.50' y='1430.90' width='44.75' height='44.70' fill='#ededed'/><g transform='translate(2072.50,1430.90)'><path d='M10.6 7.5 H34.9 V31 H10.6 Z' fill='#fff'/><path d='M10.6 15 V10.9 Q10.6 7.5 14 7.5 H31.5 Q34.9 7.5 34.9 10.9 V15' fill='none' stroke='#5ec64d' stroke-width='3.4'/><path d='M6.6 17.7 Q6.6 14 10.3 14 Q14 14 14 17.7 V26.5 Q14 30 17.5 30 H28.1 Q31.6 30 31.6 26.5 V17.7 Q31.6 14 35.2 14 Q38.8 14 38.8 17.7 V33.5 Q38.8 38.3 34 38.3 H11.4 Q6.6 38.3 6.6 33.5 Z' fill='#fff' stroke='#5ec64d' stroke-width='3.4' stroke-linejoin='round'/><text x='22.7' y='24.3' font-size='7.2' font-weight='bold' text-anchor='middle' fill='#111' font-family='Liberation Sans'>0</text></g><rect x='2116.85' y='1430.90' width='44.75' height='44.70' fill='#ededed'/><g transform='translate(2116.85,1430.90)'><path d='M10.6 7.5 H34.9 V31 H10.6 Z' fill='#fff'/><path d='M10.6 15 V10.9 Q10.6 7.5 14 7.5 H31.5 Q34.9 7.5 34.9 10.9 V15' fill='none' stroke='#5ec64d' stroke-width='3.4'/><path d='M6.6 17.7 Q6.6 14 10.3 14 Q14 14 14 17.7 V26.5 Q14 30 17.5 30 H28.1 Q31.6 30 31.6 26.5 V17.7 Q31.6 14 35.2 14 Q38.8 14 38.8 17.7 V33.5 Q38.8 38.3 34 38.3 H11.4 Q6.6 38.3 6.6 33.5 Z' fill='#fff' stroke='#5ec64d' stroke-width='3.4' stroke-linejoin='round'/><text x='22.7' y='24.3' font-size='7.2' font-weight='bold' text-anchor='middle' fill='#111' font-family='Liberation Sans'>0</text></g><rect x='2161.20' y='1430.90' width='44.75' height='44.70' fill='#ededed'/><g transform='translate(2161.20,1430.90)'><path d='M10.6 7.5 H34.9 V31 H10.6 Z' fill='#fff'/><path d='M10.6 15 V10.9 Q10.6 7.5 14 7.5 H31.5 Q34.9 7.5 34.9 10.9 V15' fill='none' stroke='#5ec64d' stroke-width='3.4'/><path d='M6.6 17.7 Q6.6 14 10.3 14 Q14 14 14 17.7 V26.5 Q14 30 17.5 30 H28.1 Q31.6 30 31.6 26.5 V17.7 Q31.6 14 35.2 14 Q38.8 14 38.8 17.7 V33.5 Q38.8 38.3 34 38.3 H11.4 Q6.6 38.3 6.6 33.5 Z' fill='#fff' stroke='#5ec64d' stroke-width='3.4' stroke-linejoin='round'/><text x='22.7' y='24.3' font-size='7.2' font-weight='bold' text-anchor='middle' fill='#111' font-family='Liberation Sans'>0</text></g><line x1='1673.35' y1='1430.9' x2='1673.35' y2='1475.2' stroke='rgba(255,255,255,0.18)' stroke-width='0.8'/><line x1='1717.70' y1='1430.9' x2='1717.70' y2='1475.2' stroke='rgba(255,255,255,0.18)' stroke-width='0.8'/><line x1='1762.05' y1='1430.9' x2='1762.05' y2='1475.2' stroke='rgba(255,255,255,0.18)' stroke-width='0.8'/><line x1='1806.40' y1='1430.9' x2='1806.40' y2='1475.2' stroke='rgba(255,255,255,0.18)' stroke-width='0.8'/><line x1='1850.75' y1='1430.9' x2='1850.75' y2='1475.2' stroke='rgba(255,255,255,0.18)' stroke-width='0.8'/><line x1='1895.10' y1='1430.9' x2='1895.10' y2='1475.2' stroke='rgba(255,255,255,0.18)' stroke-width='0.8'/><line x1='1939.45' y1='1430.9' x2='1939.45' y2='1475.2' stroke='rgba(255,255,255,0.18)' stroke-width='0.8'/><line x1='1983.80' y1='1430.9' x2='1983.80' y2='1475.2' stroke='rgba(255,255,255,0.18)' stroke-width='0.8'/><line x1='2028.15' y1='1430.9' x2='2028.15' y2='1475.2' stroke='rgba(255,255,255,0.18)' stroke-width='0.8'/><line x1='2072.50' y1='1430.9' x2='2072.50' y2='1475.2' stroke='rgba(255,255,255,0.18)' stroke-width='0.8'/><line x1='2116.85' y1='1430.9' x2='2116.85' y2='1475.2' stroke='rgba(255,255,255,0.18)' stroke-width='0.8'/><line x1='2161.20' y1='1430.9' x2='2161.20' y2='1475.2' stroke='rgba(255,255,255,0.18)' stroke-width='0.8'/><rect x='1673.30' y='1520.60' width='44.75' height='44.70' fill='#ededed'/><g transform='translate(1673.30,1520.60)'><path d='M10.6 7.5 H34.9 V31 H10.6 Z' fill='#fff'/><path d='M10.6 15 V10.9 Q10.6 7.5 14 7.5 H31.5 Q34.9 7.5 34.9 10.9 V15' fill='none' stroke='#5ec64d' stroke-width='3.4'/><path d='M6.6 17.7 Q6.6 14 10.3 14 Q14 14 14 17.7 V26.5 Q14 30 17.5 30 H28.1 Q31.6 30 31.6 26.5 V17.7 Q31.6 14 35.2 14 Q38.8 14 38.8 17.7 V33.5 Q38.8 38.3 34 38.3 H11.4 Q6.6 38.3 6.6 33.5 Z' fill='#fff' stroke='#5ec64d' stroke-width='3.4' stroke-linejoin='round'/><text x='22.7' y='24.3' font-size='7.2' font-weight='bold' text-anchor='middle' fill='#111' font-family='Liberation Sans'>0</text></g><rect x='1717.65' y='1520.60' width='44.75' height='44.70' fill='#ededed'/><g transform='translate(1717.65,1520.60)'><path d='M10.6 7.5 H34.9 V31 H10.6 Z' fill='#fff'/><path d='M10.6 15 V10.9 Q10.6 7.5 14 7.5 H31.5 Q34.9 7.5 34.9 10.9 V15' fill='none' stroke='#5ec64d' stroke-width='3.4'/><path d='M6.6 17.7 Q6.6 14 10.3 14 Q14 14 14 17.7 V26.5 Q14 30 17.5 30 H28.1 Q31.6 30 31.6 26.5 V17.7 Q31.6 14 35.2 14 Q38.8 14 38.8 17.7 V33.5 Q38.8 38.3 34 38.3 H11.4 Q6.6 38.3 6.6 33.5 Z' fill='#fff' stroke='#5ec64d' stroke-width='3.4' stroke-linejoin='round'/><text x='22.7' y='24.3' font-size='7.2' font-weight='bold' text-anchor='middle' fill='#111' font-family='Liberation Sans'>0</text></g><rect x='1762.00' y='1520.60' width='44.75' height='44.70' fill='#ededed'/><g transform='translate(1762.00,1520.60)'><path d='M10.6 7.5 H34.9 V31 H10.6 Z' fill='#fff'/><path d='M10.6 15 V10.9 Q10.6 7.5 14 7.5 H31.5 Q34.9 7.5 34.9 10.9 V15' fill='none' stroke='#5ec64d' stroke-width='3.4'/><path d='M6.6 17.7 Q6.6 14 10.3 14 Q14 14 14 17.7 V26.5 Q14 30 17.5 30 H28.1 Q31.6 30 31.6 26.5 V17.7 Q31.6 14 35.2 14 Q38.8 14 38.8 17.7 V33.5 Q38.8 38.3 34 38.3 H11.4 Q6.6 38.3 6.6 33.5 Z' fill='#fff' stroke='#5ec64d' stroke-width='3.4' stroke-linejoin='round'/><text x='22.7' y='24.3' font-size='7.2' font-weight='bold' text-anchor='middle' fill='#111' font-family='Liberation Sans'>0</text></g><rect x='1806.35' y='1520.60' width='44.75' height='44.70' fill='#ededed'/><g transform='translate(1806.35,1520.60)'><path d='M10.6 7.5 H34.9 V31 H10.6 Z' fill='#fff'/><path d='M10.6 15 V10.9 Q10.6 7.5 14 7.5 H31.5 Q34.9 7.5 34.9 10.9 V15' fill='none' stroke='#5ec64d' stroke-width='3.4'/><path d='M6.6 17.7 Q6.6 14 10.3 14 Q14 14 14 17.7 V26.5 Q14 30 17.5 30 H28.1 Q31.6 30 31.6 26.5 V17.7 Q31.6 14 35.2 14 Q38.8 14 38.8 17.7 V33.5 Q38.8 38.3 34 38.3 H11.4 Q6.6 38.3 6.6 33.5 Z' fill='#fff' stroke='#5ec64d' stroke-width='3.4' stroke-linejoin='round'/><text x='22.7' y='24.3' font-size='7.2' font-weight='bold' text-anchor='middle' fill='#111' font-family='Liberation Sans'>0</text></g><rect x='1850.70' y='1520.60' width='44.75' height='44.70' fill='#ededed'/><g transform='translate(1850.70,1520.60)'><path d='M10.6 7.5 H34.9 V31 H10.6 Z' fill='#fff'/><path d='M10.6 15 V10.9 Q10.6 7.5 14 7.5 H31.5 Q34.9 7.5 34.9 10.9 V15' fill='none' stroke='#5ec64d' stroke-width='3.4'/><path d='M6.6 17.7 Q6.6 14 10.3 14 Q14 14 14 17.7 V26.5 Q14 30 17.5 30 H28.1 Q31.6 30 31.6 26.5 V17.7 Q31.6 14 35.2 14 Q38.8 14 38.8 17.7 V33.5 Q38.8 38.3 34 38.3 H11.4 Q6.6 38.3 6.6 33.5 Z' fill='#fff' stroke='#5ec64d' stroke-width='3.4' stroke-linejoin='round'/><text x='22.7' y='24.3' font-size='7.2' font-weight='bold' text-anchor='middle' fill='#111' font-family='Liberation Sans'>0</text></g><rect x='1895.05' y='1520.60' width='44.75' height='44.70' fill='#ededed'/><g transform='translate(1895.05,1520.60)'><path d='M10.6 7.5 H34.9 V31 H10.6 Z' fill='#fff'/><path d='M10.6 15 V10.9 Q10.6 7.5 14 7.5 H31.5 Q34.9 7.5 34.9 10.9 V15' fill='none' stroke='#5ec64d' stroke-width='3.4'/><path d='M6.6 17.7 Q6.6 14 10.3 14 Q14 14 14 17.7 V26.5 Q14 30 17.5 30 H28.1 Q31.6 30 31.6 26.5 V17.7 Q31.6 14 35.2 14 Q38.8 14 38.8 17.7 V33.5 Q38.8 38.3 34 38.3 H11.4 Q6.6 38.3 6.6 33.5 Z' fill='#fff' stroke='#5ec64d' stroke-width='3.4' stroke-linejoin='round'/><text x='22.7' y='24.3' font-size='7.2' font-weight='bold' text-anchor='middle' fill='#111' font-family='Liberation Sans'>0</text></g><rect x='1939.40' y='1520.60' width='44.75' height='44.70' fill='#ededed'/><g transform='translate(1939.40,1520.60)'><path d='M10.6 7.5 H34.9 V31 H10.6 Z' fill='#fff'/><path d='M10.6 15 V10.9 Q10.6 7.5 14 7.5 H31.5 Q34.9 7.5 34.9 10.9 V15' fill='none' stroke='#5ec64d' stroke-width='3.4'/><path d='M6.6 17.7 Q6.6 14 10.3 14 Q14 14 14 17.7 V26.5 Q14 30 17.5 30 H28.1 Q31.6 30 31.6 26.5 V17.7 Q31.6 14 35.2 14 Q38.8 14 38.8 17.7 V33.5 Q38.8 38.3 34 38.3 H11.4 Q6.6 38.3 6.6 33.5 Z' fill='#fff' stroke='#5ec64d' stroke-width='3.4' stroke-linejoin='round'/><text x='22.7' y='24.3' font-size='7.2' font-weight='bold' text-anchor='middle' fill='#111' font-family='Liberation Sans'>0</text></g><rect x='1983.75' y='1520.60' width='44.75' height='44.70' fill='#ededed'/><g transform='translate(1983.75,1520.60)'><path d='M10.6 7.5 H34.9 V31 H10.6 Z' fill='#fff'/><path d='M10.6 15 V10.9 Q10.6 7.5 14 7.5 H31.5 Q34.9 7.5 34.9 10.9 V15' fill='none' stroke='#5ec64d' stroke-width='3.4'/><path d='M6.6 17.7 Q6.6 14 10.3 14 Q14 14 14 17.7 V26.5 Q14 30 17.5 30 H28.1 Q31.6 30 31.6 26.5 V17.7 Q31.6 14 35.2 14 Q38.8 14 38.8 17.7 V33.5 Q38.8 38.3 34 38.3 H11.4 Q6.6 38.3 6.6 33.5 Z' fill='#fff' stroke='#5ec64d' stroke-width='3.4' stroke-linejoin='round'/><text x='22.7' y='24.3' font-size='7.2' font-weight='bold' text-anchor='middle' fill='#111' font-family='Liberation Sans'>0</text></g><rect x='2028.10' y='1520.60' width='44.75' height='44.70' fill='#ededed'/><g transform='translate(2028.10,1520.60)'><path d='M10.6 7.5 H34.9 V31 H10.6 Z' fill='#fff'/><path d='M10.6 15 V10.9 Q10.6 7.5 14 7.5 H31.5 Q34.9 7.5 34.9 10.9 V15' fill='none' stroke='#5ec64d' stroke-width='3.4'/><path d='M6.6 17.7 Q6.6 14 10.3 14 Q14 14 14 17.7 V26.5 Q14 30 17.5 30 H28.1 Q31.6 30 31.6 26.5 V17.7 Q31.6 14 35.2 14 Q38.8 14 38.8 17.7 V33.5 Q38.8 38.3 34 38.3 H11.4 Q6.6 38.3 6.6 33.5 Z' fill='#fff' stroke='#5ec64d' stroke-width='3.4' stroke-linejoin='round'/><text x='22.7' y='24.3' font-size='7.2' font-weight='bold' text-anchor='middle' fill='#111' font-family='Liberation Sans'>0</text></g><rect x='2072.45' y='1520.60' width='44.75' height='44.70' fill='#ededed'/><g transform='translate(2072.45,1520.60)'><path d='M10.6 7.5 H34.9 V31 H10.6 Z' fill='#fff'/><path d='M10.6 15 V10.9 Q10.6 7.5 14 7.5 H31.5 Q34.9 7.5 34.9 10.9 V15' fill='none' stroke='#5ec64d' stroke-width='3.4'/><path d='M6.6 17.7 Q6.6 14 10.3 14 Q14 14 14 17.7 V26.5 Q14 30 17.5 30 H28.1 Q31.6 30 31.6 26.5 V17.7 Q31.6 14 35.2 14 Q38.8 14 38.8 17.7 V33.5 Q38.8 38.3 34 38.3 H11.4 Q6.6 38.3 6.6 33.5 Z' fill='#fff' stroke='#5ec64d' stroke-width='3.4' stroke-linejoin='round'/><text x='22.7' y='24.3' font-size='7.2' font-weight='bold' text-anchor='middle' fill='#111' font-family='Liberation Sans'>0</text></g><rect x='2116.80' y='1520.60' width='44.75' height='44.70' fill='#ededed'/><g transform='translate(2116.80,1520.60)'><path d='M10.6 7.5 H34.9 V31 H10.6 Z' fill='#fff'/><path d='M10.6 15 V10.9 Q10.6 7.5 14 7.5 H31.5 Q34.9 7.5 34.9 10.9 V15' fill='none' stroke='#5ec64d' stroke-width='3.4'/><path d='M6.6 17.7 Q6.6 14 10.3 14 Q14 14 14 17.7 V26.5 Q14 30 17.5 30 H28.1 Q31.6 30 31.6 26.5 V17.7 Q31.6 14 35.2 14 Q38.8 14 38.8 17.7 V33.5 Q38.8 38.3 34 38.3 H11.4 Q6.6 38.3 6.6 33.5 Z' fill='#fff' stroke='#5ec64d' stroke-width='3.4' stroke-linejoin='round'/><text x='22.7' y='24.3' font-size='7.2' font-weight='bold' text-anchor='middle' fill='#111' font-family='Liberation Sans'>0</text></g><line x1='1717.65' y1='1520.6' x2='1717.65' y2='1564.8999999999999' stroke='rgba(255,255,255,0.18)' stroke-width='0.8'/><line x1='1762.00' y1='1520.6' x2='1762.00' y2='1564.8999999999999' stroke='rgba(255,255,255,0.18)' stroke-width='0.8'/><line x1='1806.35' y1='1520.6' x2='1806.35' y2='1564.8999999999999' stroke='rgba(255,255,255,0.18)' stroke-width='0.8'/><line x1='1850.70' y1='1520.6' x2='1850.70' y2='1564.8999999999999' stroke='rgba(255,255,255,0.18)' stroke-width='0.8'/><line x1='1895.05' y1='1520.6' x2='1895.05' y2='1564.8999999999999' stroke='rgba(255,255,255,0.18)' stroke-width='0.8'/><line x1='1939.40' y1='1520.6' x2='1939.40' y2='1564.8999999999999' stroke='rgba(255,255,255,0.18)' stroke-width='0.8'/><line x1='1983.75' y1='1520.6' x2='1983.75' y2='1564.8999999999999' stroke='rgba(255,255,255,0.18)' stroke-width='0.8'/><line x1='2028.10' y1='1520.6' x2='2028.10' y2='1564.8999999999999' stroke='rgba(255,255,255,0.18)' stroke-width='0.8'/><line x1='2072.45' y1='1520.6' x2='2072.45' y2='1564.8999999999999' stroke='rgba(255,255,255,0.18)' stroke-width='0.8'/><line x1='2116.80' y1='1520.6' x2='2116.80' y2='1564.8999999999999' stroke='rgba(255,255,255,0.18)' stroke-width='0.8'/><rect x='1717.70' y='1564.90' width='44.75' height='44.70' fill='#ededed'/><g transform='translate(1717.70,1564.90)'><path d='M10.6 7.5 H34.9 V31 H10.6 Z' fill='#fff'/><path d='M10.6 15 V10.9 Q10.6 7.5 14 7.5 H31.5 Q34.9 7.5 34.9 10.9 V15' fill='none' stroke='#5ec64d' stroke-width='3.4'/><path d='M6.6 17.7 Q6.6 14 10.3 14 Q14 14 14 17.7 V26.5 Q14 30 17.5 30 H28.1 Q31.6 30 31.6 26.5 V17.7 Q31.6 14 35.2 14 Q38.8 14 38.8 17.7 V33.5 Q38.8 38.3 34 38.3 H11.4 Q6.6 38.3 6.6 33.5 Z' fill='#fff' stroke='#5ec64d' stroke-width='3.4' stroke-linejoin='round'/><text x='22.7' y='24.3' font-size='7.2' font-weight='bold' text-anchor='middle' fill='#111' font-family='Liberation Sans'>0</text></g><rect x='1762.05' y='1564.90' width='44.75' height='44.70' fill='#ededed'/><g transform='translate(1762.05,1564.90)'><path d='M10.6 7.5 H34.9 V31 H10.6 Z' fill='#fff'/><path d='M10.6 15 V10.9 Q10.6 7.5 14 7.5 H31.5 Q34.9 7.5 34.9 10.9 V15' fill='none' stroke='#5ec64d' stroke-width='3.4'/><path d='M6.6 17.7 Q6.6 14 10.3 14 Q14 14 14 17.7 V26.5 Q14 30 17.5 30 H28.1 Q31.6 30 31.6 26.5 V17.7 Q31.6 14 35.2 14 Q38.8 14 38.8 17.7 V33.5 Q38.8 38.3 34 38.3 H11.4 Q6.6 38.3 6.6 33.5 Z' fill='#fff' stroke='#5ec64d' stroke-width='3.4' stroke-linejoin='round'/><text x='22.7' y='24.3' font-size='7.2' font-weight='bold' text-anchor='middle' fill='#111' font-family='Liberation Sans'>0</text></g><rect x='1806.40' y='1564.90' width='44.75' height='44.70' fill='#ededed'/><g transform='translate(1806.40,1564.90)'><path d='M10.6 7.5 H34.9 V31 H10.6 Z' fill='#fff'/><path d='M10.6 15 V10.9 Q10.6 7.5 14 7.5 H31.5 Q34.9 7.5 34.9 10.9 V15' fill='none' stroke='#5ec64d' stroke-width='3.4'/><path d='M6.6 17.7 Q6.6 14 10.3 14 Q14 14 14 17.7 V26.5 Q14 30 17.5 30 H28.1 Q31.6 30 31.6 26.5 V17.7 Q31.6 14 35.2 14 Q38.8 14 38.8 17.7 V33.5 Q38.8 38.3 34 38.3 H11.4 Q6.6 38.3 6.6 33.5 Z' fill='#fff' stroke='#5ec64d' stroke-width='3.4' stroke-linejoin='round'/><text x='22.7' y='24.3' font-size='7.2' font-weight='bold' text-anchor='middle' fill='#111' font-family='Liberation Sans'>0</text></g><rect x='1850.75' y='1564.90' width='44.75' height='44.70' fill='#ededed'/><g transform='translate(1850.75,1564.90)'><path d='M10.6 7.5 H34.9 V31 H10.6 Z' fill='#fff'/><path d='M10.6 15 V10.9 Q10.6 7.5 14 7.5 H31.5 Q34.9 7.5 34.9 10.9 V15' fill='none' stroke='#5ec64d' stroke-width='3.4'/><path d='M6.6 17.7 Q6.6 14 10.3 14 Q14 14 14 17.7 V26.5 Q14 30 17.5 30 H28.1 Q31.6 30 31.6 26.5 V17.7 Q31.6 14 35.2 14 Q38.8 14 38.8 17.7 V33.5 Q38.8 38.3 34 38.3 H11.4 Q6.6 38.3 6.6 33.5 Z' fill='#fff' stroke='#5ec64d' stroke-width='3.4' stroke-linejoin='round'/><text x='22.7' y='24.3' font-size='7.2' font-weight='bold' text-anchor='middle' fill='#111' font-family='Liberation Sans'>0</text></g><rect x='1895.10' y='1564.90' width='44.75' height='44.70' fill='#ededed'/><g transform='translate(1895.10,1564.90)'><path d='M10.6 7.5 H34.9 V31 H10.6 Z' fill='#fff'/><path d='M10.6 15 V10.9 Q10.6 7.5 14 7.5 H31.5 Q34.9 7.5 34.9 10.9 V15' fill='none' stroke='#5ec64d' stroke-width='3.4'/><path d='M6.6 17.7 Q6.6 14 10.3 14 Q14 14 14 17.7 V26.5 Q14 30 17.5 30 H28.1 Q31.6 30 31.6 26.5 V17.7 Q31.6 14 35.2 14 Q38.8 14 38.8 17.7 V33.5 Q38.8 38.3 34 38.3 H11.4 Q6.6 38.3 6.6 33.5 Z' fill='#fff' stroke='#5ec64d' stroke-width='3.4' stroke-linejoin='round'/><text x='22.7' y='24.3' font-size='7.2' font-weight='bold' text-anchor='middle' fill='#111' font-family='Liberation Sans'>0</text></g><rect x='1939.45' y='1564.90' width='44.75' height='44.70' fill='#ededed'/><g transform='translate(1939.45,1564.90)'><path d='M10.6 7.5 H34.9 V31 H10.6 Z' fill='#fff'/><path d='M10.6 15 V10.9 Q10.6 7.5 14 7.5 H31.5 Q34.9 7.5 34.9 10.9 V15' fill='none' stroke='#5ec64d' stroke-width='3.4'/><path d='M6.6 17.7 Q6.6 14 10.3 14 Q14 14 14 17.7 V26.5 Q14 30 17.5 30 H28.1 Q31.6 30 31.6 26.5 V17.7 Q31.6 14 35.2 14 Q38.8 14 38.8 17.7 V33.5 Q38.8 38.3 34 38.3 H11.4 Q6.6 38.3 6.6 33.5 Z' fill='#fff' stroke='#5ec64d' stroke-width='3.4' stroke-linejoin='round'/><text x='22.7' y='24.3' font-size='7.2' font-weight='bold' text-anchor='middle' fill='#111' font-family='Liberation Sans'>0</text></g><rect x='1983.80' y='1564.90' width='44.75' height='44.70' fill='#ededed'/><g transform='translate(1983.80,1564.90)'><path d='M10.6 7.5 H34.9 V31 H10.6 Z' fill='#fff'/><path d='M10.6 15 V10.9 Q10.6 7.5 14 7.5 H31.5 Q34.9 7.5 34.9 10.9 V15' fill='none' stroke='#5ec64d' stroke-width='3.4'/><path d='M6.6 17.7 Q6.6 14 10.3 14 Q14 14 14 17.7 V26.5 Q14 30 17.5 30 H28.1 Q31.6 30 31.6 26.5 V17.7 Q31.6 14 35.2 14 Q38.8 14 38.8 17.7 V33.5 Q38.8 38.3 34 38.3 H11.4 Q6.6 38.3 6.6 33.5 Z' fill='#fff' stroke='#5ec64d' stroke-width='3.4' stroke-linejoin='round'/><text x='22.7' y='24.3' font-size='7.2' font-weight='bold' text-anchor='middle' fill='#111' font-family='Liberation Sans'>0</text></g><rect x='2028.15' y='1564.90' width='44.75' height='44.70' fill='#ededed'/><g transform='translate(2028.15,1564.90)'><path d='M10.6 7.5 H34.9 V31 H10.6 Z' fill='#fff'/><path d='M10.6 15 V10.9 Q10.6 7.5 14 7.5 H31.5 Q34.9 7.5 34.9 10.9 V15' fill='none' stroke='#5ec64d' stroke-width='3.4'/><path d='M6.6 17.7 Q6.6 14 10.3 14 Q14 14 14 17.7 V26.5 Q14 30 17.5 30 H28.1 Q31.6 30 31.6 26.5 V17.7 Q31.6 14 35.2 14 Q38.8 14 38.8 17.7 V33.5 Q38.8 38.3 34 38.3 H11.4 Q6.6 38.3 6.6 33.5 Z' fill='#fff' stroke='#5ec64d' stroke-width='3.4' stroke-linejoin='round'/><text x='22.7' y='24.3' font-size='7.2' font-weight='bold' text-anchor='middle' fill='#111' font-family='Liberation Sans'>0</text></g><rect x='2072.50' y='1564.90' width='44.75' height='44.70' fill='#ededed'/><g transform='translate(2072.50,1564.90)'><path d='M10.6 7.5 H34.9 V31 H10.6 Z' fill='#fff'/><path d='M10.6 15 V10.9 Q10.6 7.5 14 7.5 H31.5 Q34.9 7.5 34.9 10.9 V15' fill='none' stroke='#5ec64d' stroke-width='3.4'/><path d='M6.6 17.7 Q6.6 14 10.3 14 Q14 14 14 17.7 V26.5 Q14 30 17.5 30 H28.1 Q31.6 30 31.6 26.5 V17.7 Q31.6 14 35.2 14 Q38.8 14 38.8 17.7 V33.5 Q38.8 38.3 34 38.3 H11.4 Q6.6 38.3 6.6 33.5 Z' fill='#fff' stroke='#5ec64d' stroke-width='3.4' stroke-linejoin='round'/><text x='22.7' y='24.3' font-size='7.2' font-weight='bold' text-anchor='middle' fill='#111' font-family='Liberation Sans'>0</text></g><line x1='1762.05' y1='1564.9' x2='1762.05' y2='1609.2' stroke='rgba(255,255,255,0.18)' stroke-width='0.8'/><line x1='1806.40' y1='1564.9' x2='1806.40' y2='1609.2' stroke='rgba(255,255,255,0.18)' stroke-width='0.8'/><line x1='1850.75' y1='1564.9' x2='1850.75' y2='1609.2' stroke='rgba(255,255,255,0.18)' stroke-width='0.8'/><line x1='1895.10' y1='1564.9' x2='1895.10' y2='1609.2' stroke='rgba(255,255,255,0.18)' stroke-width='0.8'/><line x1='1939.45' y1='1564.9' x2='1939.45' y2='1609.2' stroke='rgba(255,255,255,0.18)' stroke-width='0.8'/><line x1='1983.80' y1='1564.9' x2='1983.80' y2='1609.2' stroke='rgba(255,255,255,0.18)' stroke-width='0.8'/><line x1='2028.15' y1='1564.9' x2='2028.15' y2='1609.2' stroke='rgba(255,255,255,0.18)' stroke-width='0.8'/><line x1='2072.50' y1='1564.9' x2='2072.50' y2='1609.2' stroke='rgba(255,255,255,0.18)' stroke-width='0.8'/><rect x='1584.90' y='1653.10' width='44.75' height='44.40' fill='#ededed'/><g transform='translate(1584.90,1653.10)' fill='#5ec64d'><circle cx='22.05' cy='5.3' r='4.1'/><path d='M16 10.2 H28 Q32.6 10.2 32.6 15 V25.5 Q32.6 27.3 30.7 27.3 Q28.9 27.3 28.9 25.5 V16.2 H27.2 V41 Q27.2 42.8 25.3 42.8 Q23.4 42.8 23.4 41 V28 H20.8 V41 Q20.8 42.8 18.9 42.8 Q17 42.8 17 41 V16.2 H15.2 V25.5 Q15.2 27.3 13.3 27.3 Q11.4 27.3 11.4 25.5 V15 Q11.4 10.2 16 10.2 Z'/><text x='22.1' y='23.5' font-size='6' text-anchor='middle' fill='#333' font-family='Liberation Sans'>0</text></g><rect x='1629.25' y='1653.10' width='44.75' height='44.40' fill='#ededed'/><g transform='translate(1629.25,1653.10)' fill='#5ec64d'><circle cx='22.05' cy='5.3' r='4.1'/><path d='M16 10.2 H28 Q32.6 10.2 32.6 15 V25.5 Q32.6 27.3 30.7 27.3 Q28.9 27.3 28.9 25.5 V16.2 H27.2 V41 Q27.2 42.8 25.3 42.8 Q23.4 42.8 23.4 41 V28 H20.8 V41 Q20.8 42.8 18.9 42.8 Q17 42.8 17 41 V16.2 H15.2 V25.5 Q15.2 27.3 13.3 27.3 Q11.4 27.3 11.4 25.5 V15 Q11.4 10.2 16 10.2 Z'/><text x='22.1' y='23.5' font-size='6' text-anchor='middle' fill='#333' font-family='Liberation Sans'>0</text></g><rect x='1673.60' y='1653.10' width='44.75' height='44.40' fill='#ededed'/><g transform='translate(1673.60,1653.10)' fill='#5ec64d'><circle cx='22.05' cy='5.3' r='4.1'/><path d='M16 10.2 H28 Q32.6 10.2 32.6 15 V25.5 Q32.6 27.3 30.7 27.3 Q28.9 27.3 28.9 25.5 V16.2 H27.2 V41 Q27.2 42.8 25.3 42.8 Q23.4 42.8 23.4 41 V28 H20.8 V41 Q20.8 42.8 18.9 42.8 Q17 42.8 17 41 V16.2 H15.2 V25.5 Q15.2 27.3 13.3 27.3 Q11.4 27.3 11.4 25.5 V15 Q11.4 10.2 16 10.2 Z'/><text x='22.1' y='23.5' font-size='6' text-anchor='middle' fill='#333' font-family='Liberation Sans'>0</text></g><rect x='1717.95' y='1653.10' width='44.75' height='44.40' fill='#ededed'/><g transform='translate(1717.95,1653.10)' fill='#5ec64d'><circle cx='22.05' cy='5.3' r='4.1'/><path d='M16 10.2 H28 Q32.6 10.2 32.6 15 V25.5 Q32.6 27.3 30.7 27.3 Q28.9 27.3 28.9 25.5 V16.2 H27.2 V41 Q27.2 42.8 25.3 42.8 Q23.4 42.8 23.4 41 V28 H20.8 V41 Q20.8 42.8 18.9 42.8 Q17 42.8 17 41 V16.2 H15.2 V25.5 Q15.2 27.3 13.3 27.3 Q11.4 27.3 11.4 25.5 V15 Q11.4 10.2 16 10.2 Z'/><text x='22.1' y='23.5' font-size='6' text-anchor='middle' fill='#333' font-family='Liberation Sans'>0</text></g><rect x='1762.30' y='1653.10' width='44.75' height='44.40' fill='#ededed'/><g transform='translate(1762.30,1653.10)' fill='#5ec64d'><circle cx='22.05' cy='5.3' r='4.1'/><path d='M16 10.2 H28 Q32.6 10.2 32.6 15 V25.5 Q32.6 27.3 30.7 27.3 Q28.9 27.3 28.9 25.5 V16.2 H27.2 V41 Q27.2 42.8 25.3 42.8 Q23.4 42.8 23.4 41 V28 H20.8 V41 Q20.8 42.8 18.9 42.8 Q17 42.8 17 41 V16.2 H15.2 V25.5 Q15.2 27.3 13.3 27.3 Q11.4 27.3 11.4 25.5 V15 Q11.4 10.2 16 10.2 Z'/><text x='22.1' y='23.5' font-size='6' text-anchor='middle' fill='#333' font-family='Liberation Sans'>0</text></g><rect x='1806.65' y='1653.10' width='44.75' height='44.40' fill='#ededed'/><g transform='translate(1806.65,1653.10)' fill='#5ec64d'><circle cx='22.05' cy='5.3' r='4.1'/><path d='M16 10.2 H28 Q32.6 10.2 32.6 15 V25.5 Q32.6 27.3 30.7 27.3 Q28.9 27.3 28.9 25.5 V16.2 H27.2 V41 Q27.2 42.8 25.3 42.8 Q23.4 42.8 23.4 41 V28 H20.8 V41 Q20.8 42.8 18.9 42.8 Q17 42.8 17 41 V16.2 H15.2 V25.5 Q15.2 27.3 13.3 27.3 Q11.4 27.3 11.4 25.5 V15 Q11.4 10.2 16 10.2 Z'/><text x='22.1' y='23.5' font-size='6' text-anchor='middle' fill='#333' font-family='Liberation Sans'>0</text></g><rect x='1851.00' y='1653.10' width='44.75' height='44.40' fill='#ededed'/><g transform='translate(1851.00,1653.10)' fill='#5ec64d'><circle cx='22.05' cy='5.3' r='4.1'/><path d='M16 10.2 H28 Q32.6 10.2 32.6 15 V25.5 Q32.6 27.3 30.7 27.3 Q28.9 27.3 28.9 25.5 V16.2 H27.2 V41 Q27.2 42.8 25.3 42.8 Q23.4 42.8 23.4 41 V28 H20.8 V41 Q20.8 42.8 18.9 42.8 Q17 42.8 17 41 V16.2 H15.2 V25.5 Q15.2 27.3 13.3 27.3 Q11.4 27.3 11.4 25.5 V15 Q11.4 10.2 16 10.2 Z'/><text x='22.1' y='23.5' font-size='6' text-anchor='middle' fill='#333' font-family='Liberation Sans'>0</text></g><rect x='1895.35' y='1653.10' width='44.75' height='44.40' fill='#ededed'/><g transform='translate(1895.35,1653.10)' fill='#5ec64d'><circle cx='22.05' cy='5.3' r='4.1'/><path d='M16 10.2 H28 Q32.6 10.2 32.6 15 V25.5 Q32.6 27.3 30.7 27.3 Q28.9 27.3 28.9 25.5 V16.2 H27.2 V41 Q27.2 42.8 25.3 42.8 Q23.4 42.8 23.4 41 V28 H20.8 V41 Q20.8 42.8 18.9 42.8 Q17 42.8 17 41 V16.2 H15.2 V25.5 Q15.2 27.3 13.3 27.3 Q11.4 27.3 11.4 25.5 V15 Q11.4 10.2 16 10.2 Z'/><text x='22.1' y='23.5' font-size='6' text-anchor='middle' fill='#333' font-family='Liberation Sans'>0</text></g><rect x='1939.70' y='1653.10' width='44.75' height='44.40' fill='#ededed'/><g transform='translate(1939.70,1653.10)' fill='#5ec64d'><circle cx='22.05' cy='5.3' r='4.1'/><path d='M16 10.2 H28 Q32.6 10.2 32.6 15 V25.5 Q32.6 27.3 30.7 27.3 Q28.9 27.3 28.9 25.5 V16.2 H27.2 V41 Q27.2 42.8 25.3 42.8 Q23.4 42.8 23.4 41 V28 H20.8 V41 Q20.8 42.8 18.9 42.8 Q17 42.8 17 41 V16.2 H15.2 V25.5 Q15.2 27.3 13.3 27.3 Q11.4 27.3 11.4 25.5 V15 Q11.4 10.2 16 10.2 Z'/><text x='22.1' y='23.5' font-size='6' text-anchor='middle' fill='#333' font-family='Liberation Sans'>0</text></g><rect x='1984.05' y='1653.10' width='44.75' height='44.40' fill='#ededed'/><g transform='translate(1984.05,1653.10)' fill='#5ec64d'><circle cx='22.05' cy='5.3' r='4.1'/><path d='M16 10.2 H28 Q32.6 10.2 32.6 15 V25.5 Q32.6 27.3 30.7 27.3 Q28.9 27.3 28.9 25.5 V16.2 H27.2 V41 Q27.2 42.8 25.3 42.8 Q23.4 42.8 23.4 41 V28 H20.8 V41 Q20.8 42.8 18.9 42.8 Q17 42.8 17 41 V16.2 H15.2 V25.5 Q15.2 27.3 13.3 27.3 Q11.4 27.3 11.4 25.5 V15 Q11.4 10.2 16 10.2 Z'/><text x='22.1' y='23.5' font-size='6' text-anchor='middle' fill='#333' font-family='Liberation Sans'>0</text></g><rect x='2028.40' y='1653.10' width='44.75' height='44.40' fill='#ededed'/><g transform='translate(2028.40,1653.10)' fill='#5ec64d'><circle cx='22.05' cy='5.3' r='4.1'/><path d='M16 10.2 H28 Q32.6 10.2 32.6 15 V25.5 Q32.6 27.3 30.7 27.3 Q28.9 27.3 28.9 25.5 V16.2 H27.2 V41 Q27.2 42.8 25.3 42.8 Q23.4 42.8 23.4 41 V28 H20.8 V41 Q20.8 42.8 18.9 42.8 Q17 42.8 17 41 V16.2 H15.2 V25.5 Q15.2 27.3 13.3 27.3 Q11.4 27.3 11.4 25.5 V15 Q11.4 10.2 16 10.2 Z'/><text x='22.1' y='23.5' font-size='6' text-anchor='middle' fill='#333' font-family='Liberation Sans'>0</text></g><rect x='2072.75' y='1653.10' width='44.75' height='44.40' fill='#ededed'/><g transform='translate(2072.75,1653.10)' fill='#5ec64d'><circle cx='22.05' cy='5.3' r='4.1'/><path d='M16 10.2 H28 Q32.6 10.2 32.6 15 V25.5 Q32.6 27.3 30.7 27.3 Q28.9 27.3 28.9 25.5 V16.2 H27.2 V41 Q27.2 42.8 25.3 42.8 Q23.4 42.8 23.4 41 V28 H20.8 V41 Q20.8 42.8 18.9 42.8 Q17 42.8 17 41 V16.2 H15.2 V25.5 Q15.2 27.3 13.3 27.3 Q11.4 27.3 11.4 25.5 V15 Q11.4 10.2 16 10.2 Z'/><text x='22.1' y='23.5' font-size='6' text-anchor='middle' fill='#333' font-family='Liberation Sans'>0</text></g><rect x='2117.10' y='1653.10' width='44.75' height='44.40' fill='#9cbfdc'/><g transform='translate(2117.10,1653.10)' fill='#5ec64d'><circle cx='22.05' cy='5.3' r='4.1'/><path d='M16 10.2 H28 Q32.6 10.2 32.6 15 V25.5 Q32.6 27.3 30.7 27.3 Q28.9 27.3 28.9 25.5 V16.2 H27.2 V41 Q27.2 42.8 25.3 42.8 Q23.4 42.8 23.4 41 V28 H20.8 V41 Q20.8 42.8 18.9 42.8 Q17 42.8 17 41 V16.2 H15.2 V25.5 Q15.2 27.3 13.3 27.3 Q11.4 27.3 11.4 25.5 V15 Q11.4 10.2 16 10.2 Z'/><text x='22.1' y='23.5' font-size='6' text-anchor='middle' fill='#333' font-family='Liberation Sans'>1</text></g><rect x='2161.45' y='1653.10' width='44.75' height='44.40' fill='#9cbfdc'/><g transform='translate(2161.45,1653.10)' fill='#5ec64d'><circle cx='22.05' cy='5.3' r='4.1'/><path d='M16 10.2 H28 Q32.6 10.2 32.6 15 V25.5 Q32.6 27.3 30.7 27.3 Q28.9 27.3 28.9 25.5 V16.2 H27.2 V41 Q27.2 42.8 25.3 42.8 Q23.4 42.8 23.4 41 V28 H20.8 V41 Q20.8 42.8 18.9 42.8 Q17 42.8 17 41 V16.2 H15.2 V25.5 Q15.2 27.3 13.3 27.3 Q11.4 27.3 11.4 25.5 V15 Q11.4 10.2 16 10.2 Z'/><text x='22.1' y='23.5' font-size='6' text-anchor='middle' fill='#333' font-family='Liberation Sans'>1</text></g><rect x='2205.80' y='1653.10' width='44.75' height='44.40' fill='#9cbfdc'/><g transform='translate(2205.80,1653.10)' fill='#5ec64d'><circle cx='22.05' cy='5.3' r='4.1'/><path d='M16 10.2 H28 Q32.6 10.2 32.6 15 V25.5 Q32.6 27.3 30.7 27.3 Q28.9 27.3 28.9 25.5 V16.2 H27.2 V41 Q27.2 42.8 25.3 42.8 Q23.4 42.8 23.4 41 V28 H20.8 V41 Q20.8 42.8 18.9 42.8 Q17 42.8 17 41 V16.2 H15.2 V25.5 Q15.2 27.3 13.3 27.3 Q11.4 27.3 11.4 25.5 V15 Q11.4 10.2 16 10.2 Z'/><text x='22.1' y='23.5' font-size='6' text-anchor='middle' fill='#333' font-family='Liberation Sans'>1</text></g><line x1='1629.25' y1='1653.1' x2='1629.25' y2='1697.1' stroke='rgba(255,255,255,0.18)' stroke-width='0.8'/><line x1='1673.60' y1='1653.1' x2='1673.60' y2='1697.1' stroke='rgba(255,255,255,0.18)' stroke-width='0.8'/><line x1='1717.95' y1='1653.1' x2='1717.95' y2='1697.1' stroke='rgba(255,255,255,0.18)' stroke-width='0.8'/><line x1='1762.30' y1='1653.1' x2='1762.30' y2='1697.1' stroke='rgba(255,255,255,0.18)' stroke-width='0.8'/><line x1='1806.65' y1='1653.1' x2='1806.65' y2='1697.1' stroke='rgba(255,255,255,0.18)' stroke-width='0.8'/><line x1='1851.00' y1='1653.1' x2='1851.00' y2='1697.1' stroke='rgba(255,255,255,0.18)' stroke-width='0.8'/><line x1='1895.35' y1='1653.1' x2='1895.35' y2='1697.1' stroke='rgba(255,255,255,0.18)' stroke-width='0.8'/><line x1='1939.70' y1='1653.1' x2='1939.70' y2='1697.1' stroke='rgba(255,255,255,0.18)' stroke-width='0.8'/><line x1='1984.05' y1='1653.1' x2='1984.05' y2='1697.1' stroke='rgba(255,255,255,0.18)' stroke-width='0.8'/><line x1='2028.40' y1='1653.1' x2='2028.40' y2='1697.1' stroke='rgba(255,255,255,0.18)' stroke-width='0.8'/><line x1='2072.75' y1='1653.1' x2='2072.75' y2='1697.1' stroke='rgba(255,255,255,0.18)' stroke-width='0.8'/><line x1='2117.10' y1='1653.1' x2='2117.10' y2='1697.1' stroke='rgba(255,255,255,0.18)' stroke-width='0.8'/><line x1='2161.45' y1='1653.1' x2='2161.45' y2='1697.1' stroke='rgba(255,255,255,0.18)' stroke-width='0.8'/><line x1='2205.80' y1='1653.1' x2='2205.80' y2='1697.1' stroke='rgba(255,255,255,0.18)' stroke-width='0.8'/></svg>
</body></html>
